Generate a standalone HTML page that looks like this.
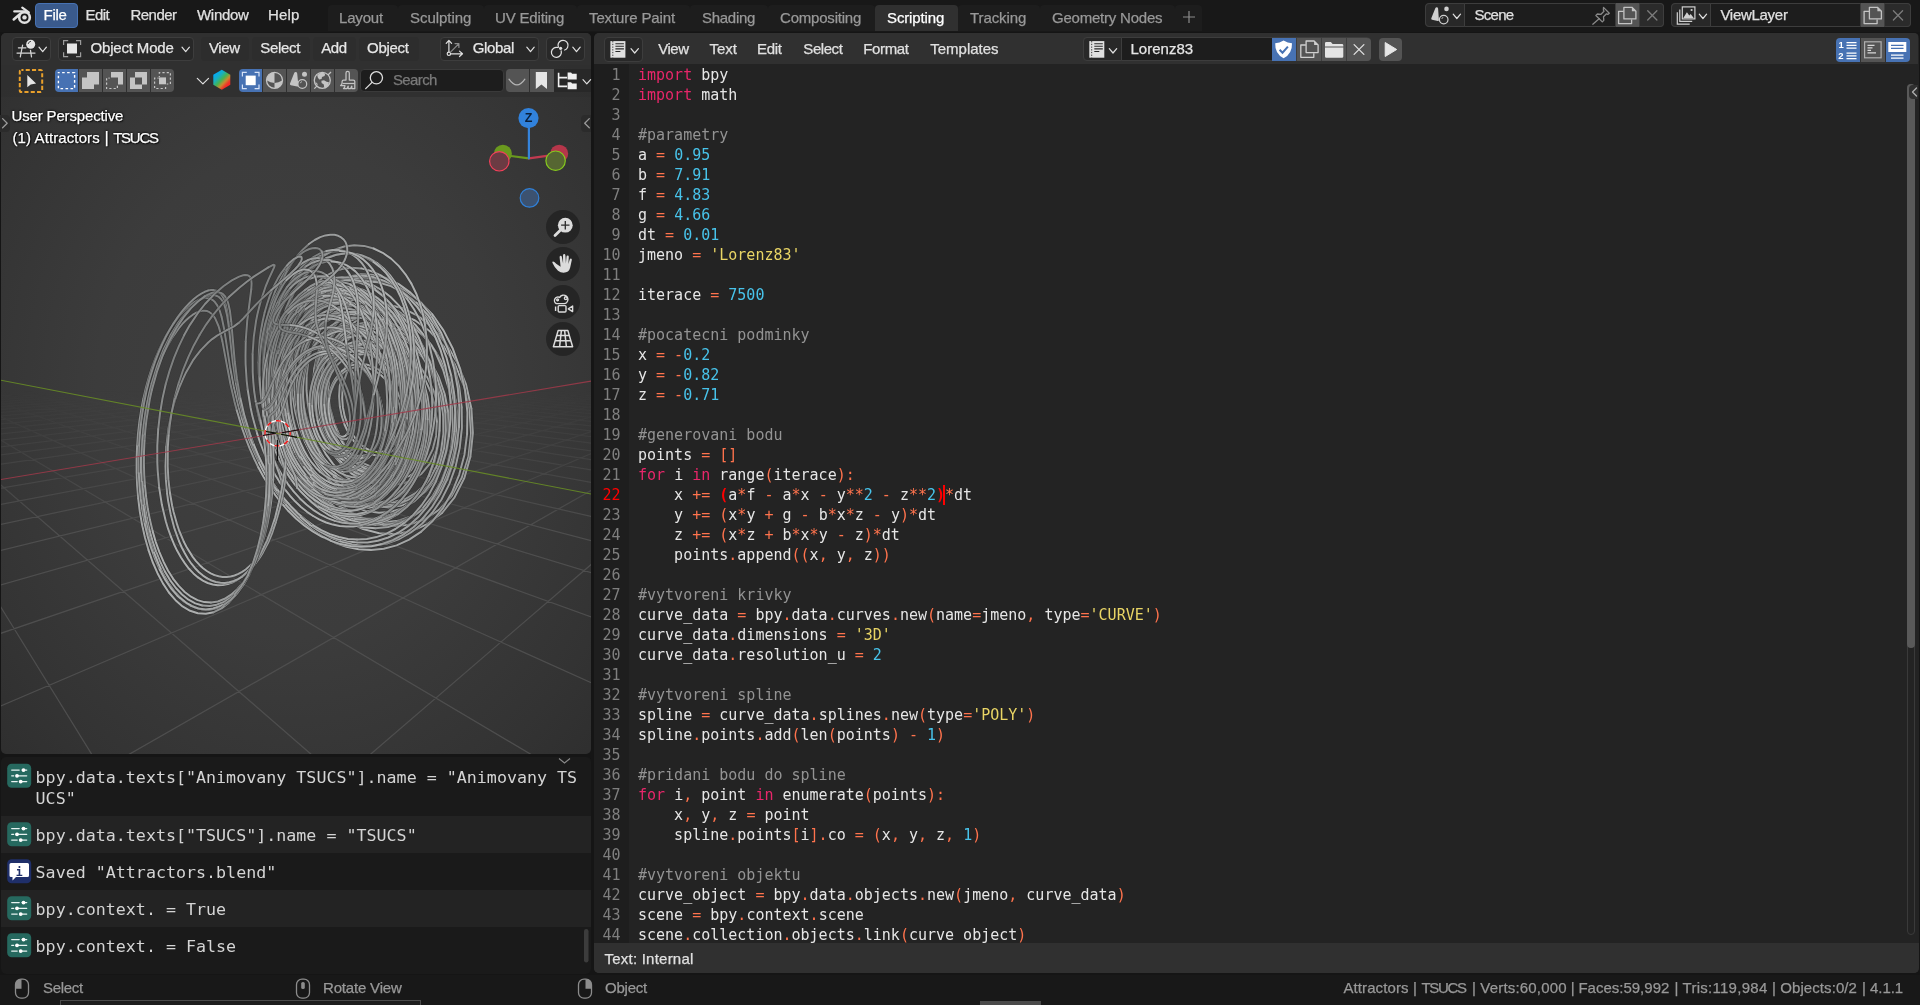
<!DOCTYPE html>
<html><head><meta charset="utf-8"><title>Blender</title>
<style>
html,body{margin:0;padding:0;background:#181818;}
body{width:1920px;height:1005px;overflow:hidden;position:relative;font-family:"Liberation Sans",sans-serif;}
#root{position:absolute;left:0;top:0;width:1920px;height:1005px;overflow:hidden;background:#181818;will-change:transform;}
#root div,#root span.t,#root svg{position:absolute;}
#root div{box-sizing:border-box;}
span.t{white-space:pre;line-height:1;font-family:"Liberation Sans",sans-serif;-webkit-text-stroke:0.25px currentColor;}
span.t.mono,.mono{-webkit-text-stroke:0;font-family:"DejaVu Sans Mono","Liberation Mono",monospace;white-space:pre;line-height:1;}
.k{color:#e8266a}.n{color:#48c3ea}.s{color:#e9d565}.o{color:#ff734d}.c{color:#939393}
.ao{stroke:#2b2b2b;stroke-width:3.1;stroke-opacity:.55}.ai{stroke-width:2;stroke-opacity:1;stroke-linecap:round}.s0{stroke:#7e8080}.s1{stroke:#888a8a}.s2{stroke:#929494}.s3{stroke:#9b9d9d}.s4{stroke:#a4a6a6}.s5{stroke:#adafaf}
.btn{background:#282828;border:1px solid #3d3d3d;border-radius:4px;}
.gb{background:#545454;}
.bb{background:#4772b3;}
</style></head><body><div id="root">
<div style="left:0px;top:31.5px;width:1920px;height:943.5px;background:#151515;"></div>
<div style="left:35px;top:3px;width:43px;height:25px;background:#3a5a8c;border-radius:4px;border:1px solid #4772b3;"></div>
<span class="t" style="left:43.50px;top:7.30px;font-size:15px;letter-spacing:-0.276px;color:#ffffff;">File</span>
<span class="t" style="left:85.50px;top:7.30px;font-size:15px;letter-spacing:-0.560px;color:#e0e0e0;">Edit</span>
<span class="t" style="left:130.50px;top:7.30px;font-size:15px;letter-spacing:-0.540px;color:#e0e0e0;">Render</span>
<span class="t" style="left:197.00px;top:7.30px;font-size:15px;letter-spacing:-0.303px;color:#e0e0e0;">Window</span>
<span class="t" style="left:268.00px;top:7.30px;font-size:15px;letter-spacing:0.164px;color:#e0e0e0;">Help</span>
<div style="left:328px;top:5px;width:70px;height:26px;background:#1d1d1d;border-radius:4px 4px 0 0;"></div>
<span class="t" style="left:339.00px;top:10.30px;font-size:15px;letter-spacing:-0.174px;color:#989898;">Layout</span>
<div style="left:398px;top:5px;width:86px;height:26px;background:#1d1d1d;border-radius:4px 4px 0 0;"></div>
<span class="t" style="left:410.00px;top:10.30px;font-size:15px;letter-spacing:-0.046px;color:#989898;">Sculpting</span>
<div style="left:484px;top:5px;width:93px;height:26px;background:#1d1d1d;border-radius:4px 4px 0 0;"></div>
<span class="t" style="left:495.00px;top:10.30px;font-size:15px;letter-spacing:-0.170px;color:#989898;">UV Editing</span>
<div style="left:577px;top:5px;width:113px;height:26px;background:#1d1d1d;border-radius:4px 4px 0 0;"></div>
<span class="t" style="left:589.00px;top:10.30px;font-size:15px;letter-spacing:-0.115px;color:#989898;">Texture Paint</span>
<div style="left:690px;top:5px;width:78px;height:26px;background:#1d1d1d;border-radius:4px 4px 0 0;"></div>
<span class="t" style="left:702.00px;top:10.30px;font-size:15px;letter-spacing:-0.284px;color:#989898;">Shading</span>
<div style="left:768px;top:5px;width:107px;height:26px;background:#1d1d1d;border-radius:4px 4px 0 0;"></div>
<span class="t" style="left:780.00px;top:10.30px;font-size:15px;letter-spacing:-0.203px;color:#989898;">Compositing</span>
<div style="left:875px;top:5px;width:83px;height:26px;background:#303030;border-radius:4px 4px 0 0;"></div>
<span class="t" style="left:887.00px;top:10.30px;font-size:15px;letter-spacing:-0.127px;color:#ffffff;">Scripting</span>
<div style="left:958px;top:5px;width:82px;height:26px;background:#1d1d1d;border-radius:4px 4px 0 0;"></div>
<span class="t" style="left:970.00px;top:10.30px;font-size:15px;letter-spacing:-0.088px;color:#989898;">Tracking</span>
<div style="left:1040px;top:5px;width:135px;height:26px;background:#1d1d1d;border-radius:4px 4px 0 0;"></div>
<span class="t" style="left:1052.00px;top:10.30px;font-size:15px;letter-spacing:-0.221px;color:#989898;">Geometry Nodes</span>
<div style="left:1175px;top:5px;width:27px;height:26px;background:#1d1d1d;border-radius:4px 4px 0 0;"></div>
<svg style="left:1182px;top:10px" width="14" height="14" viewBox="0 0 14 14"><path d="M7 1v12M1 7h12" stroke="#8c8c8c" stroke-width="1.2" fill="none"/></svg>
<div style="left:1425px;top:3px;width:239px;height:24px;background:#1d1d1d;border-radius:4px;border:1px solid #3d3d3d;"></div>
<div style="left:1425px;top:3px;width:40px;height:24px;background:#282828;border-radius:4px 0 0 4px;border:1px solid #3d3d3d;"></div>
<div style="left:1615px;top:3px;width:25px;height:24px;background:#545454;border-left:1px solid #3d3d3d;border-right:1px solid #3d3d3d;"></div>
<div style="left:1640px;top:3px;width:24px;height:24px;background:#2b2b2b;border-radius:0 4px 4px 0;border:1px solid #3d3d3d;border-left:none;"></div>
<span class="t" style="left:1474.50px;top:7.30px;font-size:15px;letter-spacing:-0.722px;color:#e0e0e0;">Scene</span>
<div style="left:1671px;top:3px;width:240px;height:24px;background:#1d1d1d;border-radius:4px;border:1px solid #3d3d3d;"></div>
<div style="left:1671px;top:3px;width:40px;height:24px;background:#282828;border-radius:4px 0 0 4px;border:1px solid #3d3d3d;"></div>
<div style="left:1860px;top:3px;width:25px;height:24px;background:#545454;border-left:1px solid #3d3d3d;border-right:1px solid #3d3d3d;"></div>
<div style="left:1885px;top:3px;width:26px;height:24px;background:#2b2b2b;border-radius:0 4px 4px 0;border:1px solid #3d3d3d;border-left:none;"></div>
<span class="t" style="left:1720.40px;top:7.30px;font-size:15px;letter-spacing:-0.284px;color:#e0e0e0;">ViewLayer</span>
<svg style="left:0;top:0" width="1920" height="1005" viewBox="0 0 1920 1005"><g stroke="#e2e2e2" fill="none" stroke-linecap="round"><circle cx="24.5" cy="17.4" r="5.3" stroke-width="2.6"/><path d="M14.3 11.4H24" stroke-width="2.3"/><path d="M22.3 7.600L28.8 12.4" stroke-width="2.3"/><path d="M13.7 19.500L19.8 14.2" stroke-width="2.5"/></g><circle cx="24.5" cy="17.4" r="2.2" fill="#e2e2e2"/><path d="M1436.7 7.200q-1 0-1.4 1l-4 10q-.4 1.2.8 1.600l5.6 1.300q1.2 0 1.2-1.200l-.800-11.400q-.2-1.3-1.4-1.300z" fill="#d0d0d0"/><circle cx="1446.5" cy="8.9" r="2.3" fill="#d0d0d0"/><circle cx="1443.7" cy="19.6" r="4.3" fill="#282828" stroke="#d0d0d0" stroke-width="1.2"/><path d="M1441.8 18.800a2.2 2.2 0 0 1 1.5-1.5" stroke="#d0d0d0" stroke-width="0.9" fill="none"/><path d="M1453.20 14.20l3.65 4.30l3.65 -4.30" fill="none" stroke="#e0e0e0" stroke-width="1.2" stroke-linecap="round" stroke-linejoin="round"/><g stroke="#8a8a8a" stroke-width="1.3" fill="none" stroke-linejoin="round" stroke-linecap="round"><path d="M1603.5 7.400l5.8 5.8-1.5 1.2-1.3-.6-3 3 .3 3.6-1.5 1.5-6.4-6.4 1.5-1.5 3.6.3 3-3-.6-1.300z"/><path d="M1599.4 18.600l-6.6 5.6"/></g><g stroke="#c4c4c4" stroke-width="1.3" fill="none" stroke-linejoin="round"><path d="M1623.9 7.3h8l4 4v7.6h-12z"/><path d="M1623.6 11.3h-5v12.3h13v-4"/></g><path d="M1631.9 7.3l4 4h-4z" fill="#c4c4c4"/><path d="M1647.7 10.8l9.2 9.2M1656.9 10.8l-9.2 9.2" stroke="#7c7c7c" stroke-width="1.3" stroke-linecap="round"/><g stroke="#d0d0d0" stroke-width="1.2" fill="none"><rect x="1682.3" y="6.9" width="12.6" height="12"/><path d="M1679.8 9.600v11.800h12.400M1677.3 12.300v11.800h12.4"/></g><path d="M1683.3 17.900l3.6-5.6 2.4 3.2 1.4-1.6 3 4z" fill="#d0d0d0"/><circle cx="1691.6" cy="10" r="1.1" fill="#d0d0d0"/><path d="M1699.30 14.20l3.65 4.30l3.65 -4.30" fill="none" stroke="#e0e0e0" stroke-width="1.2" stroke-linecap="round" stroke-linejoin="round"/><g stroke="#c4c4c4" stroke-width="1.3" fill="none" stroke-linejoin="round"><path d="M1869.4 7.3h8l4 4v7.6h-12z"/><path d="M1869.1 11.3h-5v12.3h13v-4"/></g><path d="M1877.4 7.3l4 4h-4z" fill="#c4c4c4"/><path d="M1893.4 10.8l9.2 9.2M1902.6 10.8l-9.2 9.2" stroke="#7c7c7c" stroke-width="1.3" stroke-linecap="round"/><rect x="15.5" y="979.2" width="13" height="19" rx="5.5" fill="none" stroke="#8c8c8c" stroke-width="1.3"/><path d="M21.5 988.7v-9.500a5.5 5.5 0 0 0-6 5.500v4z" fill="#8c8c8c"/><rect x="296.5" y="979.2" width="13" height="19" rx="5.5" fill="none" stroke="#8c8c8c" stroke-width="1.3"/><rect x="301.2" y="982" width="3.6" height="7" rx="1.6" fill="#8c8c8c"/><rect x="578.5" y="979.2" width="13" height="19" rx="5.5" fill="none" stroke="#8c8c8c" stroke-width="1.3"/><path d="M585.5 988.7v-9.500a5.5 5.5 0 0 1 6 5.500v4z" fill="#8c8c8c"/></svg>
<div id="v3d" style="left:1px;top:33px;width:590px;height:721px;border-radius:5px;overflow:hidden;background:radial-gradient(ellipse 75% 75% at 50% 50%, #404040 0%, #3c3c3c 45%, #333333 80%, #2d2d2d 100%);">
<svg style="left:0;top:0" width="590" height="721" viewBox="1 33 590 721"><defs><linearGradient id="gf" x1="0" y1="0" x2="0" y2="1" gradientUnits="objectBoundingBox"><stop offset="0" stop-color="#fff" stop-opacity="0"/><stop offset="0.12" stop-color="#fff" stop-opacity="0.0"/><stop offset="0.45" stop-color="#fff" stop-opacity="1"/><stop offset="1" stop-color="#fff" stop-opacity="1"/></linearGradient><mask id="gm" maskUnits="userSpaceOnUse" x="0" y="340" width="600" height="420"><rect x="0" y="340" width="600" height="420" fill="url(#gf)"/></mask></defs><g mask="url(#gm)"><path d="M-199.8 382.5L-196.1 378.7M-199.7 427.8L-177.2 378.0M546.0 868.7L799.4 427.7M-118.5 867.5L-158.9 377.4M218.8 884.8L799.6 385.1M151.5 851.1L-141.3 376.9M-25.4 842.6L784.6 379.8M478.8 899.8L-124.3 376.3M-137.2 765.0L765.2 379.1M745.1 881.3L-107.9 375.7M-142.0 682.1L746.5 378.4M767.8 762.2L-92.0 375.2M-145.2 626.4L728.6 377.7M782.3 686.3L-76.7 374.7M-147.6 586.5L711.4 377.1M792.3 633.7L-61.8 374.2M-196.6 566.5L694.8 376.4M799.7 595.1L-47.4 373.7M-192.6 541.0L678.9 375.8M757.6 554.6L-33.5 373.3M-189.4 520.7L663.5 375.2M774.0 516.1L-6.8 372.4M-184.7 490.5L634.4 374.1M780.2 501.7L5.9 371.9M-182.9 478.9L620.6 373.6M785.4 489.5L18.2 371.5M-181.3 469.1L607.3 373.1M789.8 479.1L30.2 371.1M-180.0 460.6L594.4 372.6M793.7 470.0L41.9 370.7M-178.8 453.1L582.0 372.1M797.1 462.1L53.2 370.4M-177.8 446.6L569.9 371.7M775.6 452.3L64.2 370.0M-198.5 442.8L558.2 371.2M779.5 446.4L74.9 369.6M-196.5 437.4L546.9 370.8M783.1 441.1L85.3 369.3M-194.7 432.6L536.0 370.4M786.2 436.4L95.5 369.0M-193.1 428.2L525.4 370.0M789.1 432.0L105.3 368.6M-191.6 424.3L515.1 369.6M791.7 428.1L115.0 368.3M-190.3 420.7L505.1 369.2M794.1 424.5L124.3 368.0M-189.0 417.4L495.4 368.8M796.3 421.2L133.5 367.7M-187.9 414.4L485.9 368.5M798.3 418.2L142.4 367.4M-186.9 411.6L476.8 368.1M784.3 414.2L151.1 367.1M-185.9 409.0L467.9 367.8M786.6 411.6L159.5 366.8M-199.0 407.5L459.2 367.5M788.7 409.3L167.8 366.5M-197.7 405.2L450.8 367.1M790.7 407.1L175.9 366.3M-196.5 403.1L442.6 366.8M792.5 405.0L183.8 366.0M-195.3 401.1L434.6 366.5M794.3 403.1L191.5 365.7M-194.2 399.3L426.8 366.2M795.9 401.3L199.0 365.5M-193.2 397.5L419.3 365.9M797.4 399.6L206.4 365.3M-192.3 395.9L411.9 365.7M798.9 398.0L213.6 365.0M-191.4 394.4L404.7 365.4M788.5 395.9L220.6 364.8M-190.5 392.9L397.7 365.1M790.1 394.5L227.5 364.5M-189.7 391.6L390.8 364.9M791.6 393.1L234.2 364.3M-199.3 390.7L384.2 364.6M793.0 391.9L240.8 364.1M-198.3 389.5L377.6 364.4M794.4 390.7L247.2 363.9M-197.4 388.3L371.3 364.1M795.7 389.6L253.5 363.7M-196.5 387.2L365.0 363.9M796.9 388.5L259.7 363.5M-195.6 386.1L359.0 363.7M798.1 387.4L265.8 363.3M-194.8 385.1L353.0 363.4M799.2 386.5L271.7 363.1M-194.0 384.1L347.2 363.2M791.0 385.1L277.5 362.9M-193.3 383.2L341.6 363.0M792.2 384.2L283.2 362.7M-192.6 382.3L336.0 362.8M793.3 383.4L288.8 362.5M-191.9 381.5L330.6 362.6M794.4 382.6L294.2 362.3M-199.5 381.0L325.3 362.4M795.5 381.8L299.6 362.1M-198.7 380.2L320.1 362.2M796.5 381.1L304.8 362.0M-197.9 379.4L315.0 362.0M797.5 380.3L310.0 361.8M-197.2 378.7L310.0 361.8" stroke="#4e4e4e" stroke-width="1.25" fill="none"/></g><g class="ao" fill="none" stroke-linecap="butt" stroke-linejoin="round"><path d="M298.2 448.5l-7.1-17.8 -5.4-18.2 -3.6-18.5"/><path class="ai s3" d="M298.2 448.5l-7.1-17.8 -5.4-18.2 -3.6-18.5"/><path d="M282.7 438.8l-5.8-17.2 -4.3-17.3 -3-17.2"/><path class="ai s3" d="M282.7 438.8l-5.8-17.2 -4.3-17.3 -3-17.2"/><path d="M282.1 394l-2-18.3 -0.4-17.9 1.2-17.3"/><path class="ai s1" d="M282.1 394l-2-18.3 -0.4-17.9 1.2-17.3"/><path d="M269.6 387.1l-1.6-16.9 -0.4-16.5 0.7-15.9"/><path class="ai s1" d="M269.6 387.1l-1.6-16.9 -0.4-16.5 0.7-15.9"/><path d="M310.2 429.9l-4.8-16.3 -3.1-16.8 -1.3-16.7"/><path class="ai s3" d="M310.2 429.9l-4.8-16.3 -3.1-16.8 -1.3-16.7"/><path d="M294.4 447.4l-6.2-15.8 -4.8-16.2 -3.4-16.3"/><path class="ai s3" d="M294.4 447.4l-6.2-15.8 -4.8-16.2 -3.4-16.3"/><path d="M280 399.1l-2-16.4 -0.8-16 0.6-15.7"/><path class="ai s1" d="M280 399.1l-2-16.4 -0.8-16 0.6-15.7"/><path d="M299.3 414.8l-3.2-16.4 -1.6-16.5 0.1-16.3"/><path class="ai s2" d="M299.3 414.8l-3.2-16.4 -1.6-16.5 0.1-16.3"/><path d="M293.1 446.1l-6-15.6 -4.6-16 -3.3-16.2"/><path class="ai s3" d="M293.1 446.1l-6-15.6 -4.6-16 -3.3-16.2"/><path d="M279.1 416.8l-3.4-15.6 -2.2-15.6 -1-15.3"/><path class="ai s2" d="M279.1 416.8l-3.4-15.6 -2.2-15.6 -1-15.3"/><path d="M279.2 398.3l-2-16.1 -0.6-15.9 0.6-15.5"/><path class="ai s1" d="M279.2 398.3l-2-16.1 -0.6-15.9 0.6-15.5"/><path d="M281.2 430.4l-4.4-15.2 -3.2-15.4 -2.1-15.3"/><path class="ai s3" d="M281.2 430.4l-4.4-15.2 -3.2-15.4 -2.1-15.3"/><path d="M330.6 429.3l-4.8-15.2 -2.9-15.8 -1-15.9"/><path class="ai s3" d="M330.6 429.3l-4.8-15.2 -2.9-15.8 -1-15.9"/><path d="M301 403.4l-1.9-16.1 -0.2-16 1.4-15.5"/><path class="ai s2" d="M301 403.4l-1.9-16.1 -0.2-16 1.4-15.5"/><path d="M292.7 428.2l-4.1-15 -2.9-15.3 -1.5-15.4"/><path class="ai s3" d="M292.7 428.2l-4.1-15 -2.9-15.3 -1.5-15.4"/><path d="M334.3 423.3l-4-14.9 -2.1-15.3 -0.1-15.3"/><path class="ai s3" d="M334.3 423.3l-4-14.9 -2.1-15.3 -0.1-15.3"/><path d="M308.8 486.5l-10.2-15 -8.7-16 -7.2-16.7"/><path class="ai s4" d="M308.8 486.5l-10.2-15 -8.7-16 -7.2-16.7"/><path d="M296.1 403.5l-1.9-15.8 -0.4-15.7 1.1-15.3"/><path class="ai s2" d="M296.1 403.5l-1.9-15.8 -0.4-15.7 1.1-15.3"/><path d="M296.6 461.8l-7-14.4 -5.9-15.1 -4.6-15.5"/><path class="ai s4" d="M296.6 461.8l-7-14.4 -5.9-15.1 -4.6-15.5"/><path d="M316.2 449.5l-6.6-14.7 -5.1-15.4 -3.5-16"/><path class="ai s4" d="M316.2 449.5l-6.6-14.7 -5.1-15.4 -3.5-16"/><path d="M304.9 441.9l-5.5-14.7 -4.1-15.3 -2.7-15.5"/><path class="ai s3" d="M304.9 441.9l-5.5-14.7 -4.1-15.3 -2.7-15.5"/><path d="M301 380.1l0.5-16.5 2.3-15.9 4-15"/><path class="ai s1" d="M301 380.1l0.5-16.5 2.3-15.9 4-15"/><path d="M269.5 415.2l-3-14 -2.1-13.9 -1.2-13.8 -0.4-13.4"/><path class="ai s2" d="M269.5 415.2l-3-14 -2.1-13.9 -1.2-13.8 -0.4-13.4"/><path d="M292.6 396.4l-1.3-15.5 0.2-15.3 1.6-14.9"/><path class="ai s1" d="M292.6 396.4l-1.3-15.5 0.2-15.3 1.6-14.9"/><path d="M310.7 448.9l-6.3-14.5 -4.8-15.3 -3.5-15.6"/><path class="ai s4" d="M310.7 448.9l-6.3-14.5 -4.8-15.3 -3.5-15.6"/><path d="M318.2 460.8l-7.8-14.5 -6.4-15.4 -4.7-16.1"/><path class="ai s4" d="M318.2 460.8l-7.8-14.5 -6.4-15.4 -4.7-16.1"/><path d="M329.8 495.3l-12.1-14.1 -10.6-15.7 -8.9-17"/><path class="ai s5" d="M329.8 495.3l-12.1-14.1 -10.6-15.7 -8.9-17"/><path d="M271.5 384.5l-0.9-15 0.1-14.7 1.1-14.1 2-13.4"/><path class="ai s0" d="M271.5 384.5l-0.9-15 0.1-14.7 1.1-14.1 2-13.4"/><path d="M321.9 382.4l1.2-15.6 3.3-14.9 5.3-13.7"/><path class="ai s1" d="M321.9 382.4l1.2-15.6 3.3-14.9 5.3-13.7"/><path d="M241.7 418.1l-3.1-10.8 -4.9-20.8 -3.6-19.3"/><path class="ai s1" d="M241.7 418.1l-3.1-10.8 -4.9-20.8 -3.6-19.3"/><path d="M301.4 473.3l-7.9-13.6 -6.8-14.4 -5.5-14.9"/><path class="ai s4" d="M301.4 473.3l-7.9-13.6 -6.8-14.4 -5.5-14.9"/><path d="M250.3 435.8l-3.7-11 -3.2-10.9 -2.8-10.8 -4.2-20.6"/><path class="ai s2" d="M250.3 435.8l-3.7-11 -3.2-10.9 -2.8-10.8 -4.2-20.6"/><path d="M291 469.2l-6.8-12.8 -5.9-13.4 -4.9-13.8 -3.9-14"/><path class="ai s4" d="M291 469.2l-6.8-12.8 -5.9-13.4 -4.9-13.8 -3.9-14"/><path d="M280.5 433.7l-3.9-13 -3-13.2 -2.1-13.3 -1.3-13.2"/><path class="ai s3" d="M280.5 433.7l-3.9-13 -3-13.2 -2.1-13.3 -1.3-13.2"/><path d="M259 462.6l-5.2-11.1 -4.6-11.2 -4-11.2 -3.5-11"/><path class="ai s3" d="M259 462.6l-5.2-11.1 -4.6-11.2 -4-11.2 -3.5-11"/><path d="M294.6 365.6l1.7-15.8 3.3-15 4.8-13.9"/><path class="ai s0" d="M294.6 365.6l1.7-15.8 3.3-15 4.8-13.9"/><path d="M334.3 472.8l-9.5-12.9 -8.1-14.5 -6.5-15.5"/><path class="ai s5" d="M334.3 472.8l-9.5-12.9 -8.1-14.5 -6.5-15.5"/><path d="M284.2 382.5l-0.2-15.1 1-14.6 2.3-14.1 3.5-13.3"/><path class="ai s0" d="M284.2 382.5l-0.2-15.1 1-14.6 2.3-14.1 3.5-13.3"/><path d="M272.5 370.3l0.2-15 1.2-14.4 2.2-13.7 3.1-12.9"/><path class="ai s0" d="M272.5 370.3l0.2-15 1.2-14.4 2.2-13.7 3.1-12.9"/><path d="M280.9 340.5l2.7-16.4 4.2-15.4 5.3-14"/><path class="ai s0" d="M280.9 340.5l2.7-16.4 4.2-15.4 5.3-14"/><path d="M270.5 405.6l-1.9-12.9 -1.2-12.8 -0.4-12.6 0.4-12.2"/><path class="ai s1" d="M270.5 405.6l-1.9-12.9 -1.2-12.8 -0.4-12.6 0.4-12.2"/><path d="M318.3 422.1l-3.2-13.3 -1.8-13.7 -0.3-13.7 1.3-13.4"/><path class="ai s3" d="M318.3 422.1l-3.2-13.3 -1.8-13.7 -0.3-13.7 1.3-13.4"/><path d="M312.6 469.8l-7.8-13 -6.7-13.9 -5.4-14.7"/><path class="ai s4" d="M312.6 469.8l-7.8-13 -6.7-13.9 -5.4-14.7"/><path d="M318.8 419l-2.9-13.4 -1.4-13.7 0.1-13.6 1.7-13.3"/><path class="ai s2" d="M318.8 419l-2.9-13.4 -1.4-13.7 0.1-13.6 1.7-13.3"/><path d="M268.2 409.5l-2.2-12.5 -1.4-12.4 -0.8-12.3 0-11.9"/><path class="ai s2" d="M268.2 409.5l-2.2-12.5 -1.4-12.4 -0.8-12.3 0-11.9"/><path d="M288.9 413.1l-2.3-13.4 -1.2-13.4 -0.2-13.4 0.9-13"/><path class="ai s2" d="M288.9 413.1l-2.3-13.4 -1.2-13.4 -0.2-13.4 0.9-13"/><path d="M314.3 430.3l-3.9-13 -2.6-13.4 -1.3-13.7 0.1-13.6"/><path class="ai s3" d="M314.3 430.3l-3.9-13 -2.6-13.4 -1.3-13.7 0.1-13.6"/><path d="M319 487.9l-9.9-12.8 -8.6-14 -7.4-15"/><path class="ai s5" d="M319 487.9l-9.9-12.8 -8.6-14 -7.4-15"/><path d="M321 489.2l-10.2-12.8 -8.9-14 -7.5-15"/><path class="ai s5" d="M321 489.2l-10.2-12.8 -8.9-14 -7.5-15"/><path d="M319.4 401.2l-0.9-13.8 0.8-13.6 2.3-13.1 4.1-12.3"/><path class="ai s2" d="M319.4 401.2l-0.9-13.8 0.8-13.6 2.3-13.1 4.1-12.3"/><path d="M286.8 455.8l-5.3-12.1 -4.5-12.5 -3.7-12.7 -2.8-12.9"/><path class="ai s4" d="M286.8 455.8l-5.3-12.1 -4.5-12.5 -3.7-12.7 -2.8-12.9"/><path d="M263.2 408.5l-2.1-11.9 -1.4-11.7 -0.9-11.6 -0.2-11.3"/><path class="ai s2" d="M263.2 408.5l-2.1-11.9 -1.4-11.7 -0.9-11.6 -0.2-11.3"/><path d="M328.1 377.8l2.1-14.8 4.3-13.9 6.4-12.4 8.4-10.5"/><path class="ai s1" d="M328.1 377.8l2.1-14.8 4.3-13.9 6.4-12.4 8.4-10.5"/><path d="M355.1 467l-9.6-10.8 -8.2-12.7 -6.7-14.2"/><path class="ai s5" d="M355.1 467l-9.6-10.8 -8.2-12.7 -6.7-14.2"/><path d="M250 437.6l-3.4-10 -2.9-10 -4.9-19.5 -3.5-18.5"/><path class="ai s2" d="M250 437.6l-3.4-10 -2.9-10 -4.9-19.5 -3.5-18.5"/><path d="M333.3 446.1l-5.9-11.6 -4.6-12.6 -3.2-13.3 -1.7-13.6"/><path class="ai s4" d="M333.3 446.1l-5.9-11.6 -4.6-12.6 -3.2-13.3 -1.7-13.6"/><path d="M283.7 415l-2.3-12.6 -1.4-12.7 -0.5-12.6 0.4-12.4"/><path class="ai s2" d="M283.7 415l-2.3-12.6 -1.4-12.7 -0.5-12.6 0.4-12.4"/><path d="M284.7 458.1l-5.3-11.7 -4.5-12 -3.7-12.4 -3-12.5"/><path class="ai s4" d="M284.7 458.1l-5.3-11.7 -4.5-12 -3.7-12.4 -3-12.5"/><path d="M317.9 395l-0.2-13.7 1.4-13.3 3.1-12.8 4.7-11.8"/><path class="ai s1" d="M317.9 395l-0.2-13.7 1.4-13.3 3.1-12.8 4.7-11.8"/><path d="M285.5 412.5l-2.1-12.6 -1.1-12.7 -0.2-12.5 0.7-12.3"/><path class="ai s2" d="M285.5 412.5l-2.1-12.6 -1.1-12.7 -0.2-12.5 0.7-12.3"/><path d="M337.6 451.2l-6.5-11.1 -5.3-12.3 -3.9-13 -2.5-13.6"/><path class="ai s4" d="M337.6 451.2l-6.5-11.1 -5.3-12.3 -3.9-13 -2.5-13.6"/><path d="M270.2 381l-0.4-12.9 0.5-12.6 1.2-12.2 2-11.6"/><path class="ai s0" d="M270.2 381l-0.4-12.9 0.5-12.6 1.2-12.2 2-11.6"/><path d="M278.2 454.9l-4.8-11.2 -4-11.6 -3.5-11.8 -2.7-11.8"/><path class="ai s4" d="M278.2 454.9l-4.8-11.2 -4-11.6 -3.5-11.8 -2.7-11.8"/><path d="M270.6 479.2l-5.9-10.6 -5.4-10.8 -4.8-11 -4.2-11"/><path class="ai s4" d="M270.6 479.2l-5.9-10.6 -5.4-10.8 -4.8-11 -4.2-11"/><path d="M236.8 410.5l-2.4-9.1 -4-17.4 -8.1-43.1"/><path class="ai s0" d="M236.8 410.5l-2.4-9.1 -4-17.4 -8.1-43.1"/><path d="M366.6 469.3l-10.1-8.6 -8.9-10.9 -7.4-12.6 -5.9-13.9"/><path class="ai s5" d="M366.6 469.3l-10.1-8.6 -8.9-10.9 -7.4-12.6 -5.9-13.9"/><path d="M253.9 444.8l-3.5-9.6 -5.9-19.3 -4.4-18.9"/><path class="ai s3" d="M253.9 444.8l-3.5-9.6 -5.9-19.3 -4.4-18.9"/><path d="M277.8 351l1.8-15 3-14.1 4-13.2 5.1-12"/><path class="ai s0" d="M277.8 351l1.8-15 3-14.1 4-13.2 5.1-12"/><path d="M258.5 467.7l-4.6-9.5 -4.2-9.6 -3.8-9.6 -3.4-9.6 -5.7-18.9"/><path class="ai s3" d="M258.5 467.7l-4.6-9.5 -4.2-9.6 -3.8-9.6 -3.4-9.6 -5.7-18.9"/><path d="M305.3 439l-4.2-11.7 -3.2-12.2 -2.2-12.5 -1.1-12.7"/><path class="ai s3" d="M305.3 439l-4.2-11.7 -3.2-12.2 -2.2-12.5 -1.1-12.7"/><path d="M328.3 420.9l-2.8-11.6 -1.4-12 -0.1-12 1.4-11.8"/><path class="ai s3" d="M328.3 420.9l-2.8-11.6 -1.4-12 -0.1-12 1.4-11.8"/><path d="M308.3 462.5l-6.3-11.4 -5.3-12.1 -4.4-12.8 -3.4-13.1"/><path class="ai s4" d="M308.3 462.5l-6.3-11.4 -5.3-12.1 -4.4-12.8 -3.4-13.1"/><path d="M236.4 382.5l-3-19.2 -4.4-39.4"/><path class="ai s0" d="M236.4 382.5l-3-19.2 -4.4-39.4"/><path d="M277.2 350.8l1.7-14.8 3-13.9 3.9-13.1 5-11.9"/><path class="ai s0" d="M277.2 350.8l1.7-14.8 3-13.9 3.9-13.1 5-11.9"/><path d="M262.8 360.1l0.4-12.9 1.2-12.4 1.7-11.8 2.4-11"/><path class="ai s0" d="M262.8 360.1l0.4-12.9 1.2-12.4 1.7-11.8 2.4-11"/><path d="M268.3 337.8l1.9-15 2.8-14.1 3.6-13 4.4-11.8"/><path class="ai s0" d="M268.3 337.8l1.9-15 2.8-14.1 3.6-13 4.4-11.8"/><path d="M329.1 480.1l-9.3-11.4 -8.1-12.9 -6.8-13.9"/><path class="ai s5" d="M329.1 480.1l-9.3-11.4 -8.1-12.9 -6.8-13.9"/><path d="M333.3 423.2l-3-11.1 -1.7-11.6 -0.4-11.8 1.2-11.6"/><path class="ai s3" d="M333.3 423.2l-3-11.1 -1.7-11.6 -0.4-11.8 1.2-11.6"/><path d="M304.7 430.5l-3.4-11.6 -2.4-12 -1.3-12.2 -0.3-12.3"/><path class="ai s3" d="M304.7 430.5l-3.4-11.6 -2.4-12 -1.3-12.2 -0.3-12.3"/><path d="M288.7 425.1l-2.7-11.6 -2-11.7 -1.1-11.8 -0.2-11.8"/><path class="ai s3" d="M288.7 425.1l-2.7-11.6 -2-11.7 -1.1-11.8 -0.2-11.8"/><path d="M319.6 424.3l-2.9-11.4 -1.8-11.9 -0.5-12 0.7-11.9"/><path class="ai s3" d="M319.6 424.3l-2.9-11.4 -1.8-11.9 -0.5-12 0.7-11.9"/><path d="M306.5 430.6l-3.3-11.4 -2.4-11.8 -1.3-12 -0.3-12"/><path class="ai s3" d="M306.5 430.6l-3.3-11.4 -2.4-11.8 -1.3-12 -0.3-12"/><path d="M294.6 389.9l0-12.6 1-12.3 2.2-12 3.3-11.3"/><path class="ai s1" d="M294.6 389.9l0-12.6 1-12.3 2.2-12 3.3-11.3"/><path d="M301.7 461.9l-5.8-10.9 -4.9-11.5 -4.1-12 -3.2-12.5"/><path class="ai s4" d="M301.7 461.9l-5.8-10.9 -4.9-11.5 -4.1-12 -3.2-12.5"/><path d="M303.1 411.1l-1.6-11.8 -0.5-11.9 0.5-11.9 1.6-11.5"/><path class="ai s2" d="M303.1 411.1l-1.6-11.8 -0.5-11.9 0.5-11.9 1.6-11.5"/><path d="M294.9 356.7l2.7-14.7 4-13.7 5.5-12.6 6.9-11.3"/><path class="ai s0" d="M294.9 356.7l2.7-14.7 4-13.7 5.5-12.6 6.9-11.3"/><path d="M302.7 459.3l-5.5-10.9 -4.8-11.5 -3.9-12 -3-12.4"/><path class="ai s4" d="M302.7 459.3l-5.5-10.9 -4.8-11.5 -3.9-12 -3-12.4"/><path d="M300.3 355.8l3-14.9 4.7-13.8 6.2-12.6 7.7-10.9"/><path class="ai s0" d="M300.3 355.8l3-14.9 4.7-13.8 6.2-12.6 7.7-10.9"/><path d="M287.3 427.3l-2.8-10.9 -2-11.3 -1.2-11.3 -0.5-11.3"/><path class="ai s3" d="M287.3 427.3l-2.8-10.9 -2-11.3 -1.2-11.3 -0.5-11.3"/><path d="M306.6 376.6l1.5-13.2 3-12.7 4.4-11.8 5.7-10.6"/><path class="ai s1" d="M306.6 376.6l1.5-13.2 3-12.7 4.4-11.8 5.7-10.6"/><path d="M304.8 480.8l-7.3-10.8 -6.6-11.5 -5.6-12.2 -4.8-12.6"/><path class="ai s5" d="M304.8 480.8l-7.3-10.8 -6.6-11.5 -5.6-12.2 -4.8-12.6"/><path d="M281.5 425.8l-2.5-10.8 -1.9-10.9 -1.3-11.1 -0.5-11 0.1-10.9"/><path class="ai s2" d="M281.5 425.8l-2.5-10.8 -1.9-10.9 -1.3-11.1 -0.5-11 0.1-10.9"/><path d="M342.9 464.1l-7.7-9.5 -6.6-10.8 -5.6-12 -4.2-12.8"/><path class="ai s5" d="M342.9 464.1l-7.7-9.5 -6.6-10.8 -5.6-12 -4.2-12.8"/><path d="M325 499.1l-10.6-11.1 -9.4-12.5 -8.4-13.7"/><path class="ai s5" d="M325 499.1l-10.6-11.1 -9.4-12.5 -8.4-13.7"/><path d="M255.7 401.4l-1.5-9.9 -0.9-9.7 -0.6-9.6 -0.1-18.4"/><path class="ai s1" d="M255.7 401.4l-1.5-9.9 -0.9-9.7 -0.6-9.6 -0.1-18.4"/><path d="M235.3 379.6l-2.5-17.3 -4-35.5"/><path class="ai s0" d="M235.3 379.6l-2.5-17.3 -4-35.5"/><path d="M270.9 429.7l-2.6-10 -2.1-10.1 -1.6-10.2 -1.1-10.2 -0.6-10.1"/><path class="ai s3" d="M270.9 429.7l-2.6-10 -2.1-10.1 -1.6-10.2 -1.1-10.2 -0.6-10.1"/><path d="M240.1 397l-3.1-18.1 -2.2-16.9 -3.6-40.9"/><path class="ai s0" d="M240.1 397l-3.1-18.1 -2.2-16.9 -3.6-40.9"/><path d="M331 438.5l-4.3-9.9 -3.3-10.6 -2.2-11.1 -1.1-11.4 0.2-11.5"/><path class="ai s4" d="M331 438.5l-4.3-9.9 -3.3-10.6 -2.2-11.1 -1.1-11.4 0.2-11.5"/><path d="M343.3 466.4l-7.8-9.2 -6.9-10.6 -5.8-11.8 -4.5-12.7"/><path class="ai s5" d="M343.3 466.4l-7.8-9.2 -6.9-10.6 -5.8-11.8 -4.5-12.7"/><path d="M281.2 433.8l-3-10.3 -2.3-10.6 -1.8-10.6 -1.1-10.8 -0.4-10.7"/><path class="ai s3" d="M281.2 433.8l-3-10.3 -2.3-10.6 -1.8-10.6 -1.1-10.8 -0.4-10.7"/><path d="M287 434.7l-3.1-10.4 -2.4-10.7 -1.8-11 -1.1-11 -0.3-10.9"/><path class="ai s3" d="M287 434.7l-3.1-10.4 -2.4-10.7 -1.8-11 -1.1-11 -0.3-10.9"/><path d="M269.3 450l-3.6-9.4 -3.2-9.7 -2.7-9.8 -2.3-9.8 -1.8-9.9"/><path class="ai s3" d="M269.3 450l-3.6-9.4 -3.2-9.7 -2.7-9.8 -2.3-9.8 -1.8-9.9"/><path d="M266.5 425.1l-2.3-9.7 -1.8-9.8 -1.4-9.8 -0.9-9.8 -0.5-9.6"/><path class="ai s2" d="M266.5 425.1l-2.3-9.7 -1.8-9.8 -1.4-9.8 -0.9-9.8 -0.5-9.6"/><path d="M273.9 486.1l-5.7-9.2 -5.3-9.6 -4.7-9.8 -4.3-9.9 -3.9-10"/><path class="ai s4" d="M273.9 486.1l-5.7-9.2 -5.3-9.6 -4.7-9.8 -4.3-9.9 -3.9-10"/><path d="M230.1 367.2l-6.1-39 -2.4-11.3"/><path class="ai s0" d="M230.1 367.2l-6.1-39 -2.4-11.3"/><path d="M293.1 350.7l3.1-14.1 4.3-13.1 5.7-12.1 6.9-10.6"/><path class="ai s0" d="M293.1 350.7l3.1-14.1 4.3-13.1 5.7-12.1 6.9-10.6"/><path d="M257.2 433.8l-4.8-17.7 -1.9-8.9 -2.8-17.6"/><path class="ai s3" d="M257.2 433.8l-4.8-17.7 -1.9-8.9 -2.8-17.6"/><path d="M297.3 382.4l0.7-12.1 1.9-11.7 3-11.2 4-10.5"/><path class="ai s1" d="M297.3 382.4l0.7-12.1 1.9-11.7 3-11.2 4-10.5"/><path d="M286 504.8l-7.8-10 -7-10.4 -6.5-10.7 -5.7-11.1"/><path class="ai s5" d="M286 504.8l-7.8-10 -7-10.4 -6.5-10.7 -5.7-11.1"/><path d="M344.7 425l-3-9.1 -1.9-9.7 -0.7-9.9 0.6-10 2-9.6"/><path class="ai s3" d="M344.7 425l-3-9.1 -1.9-9.7 -0.7-9.9 0.6-10 2-9.6"/><path d="M271 417.6l-1.9-10 -1.4-10 -0.8-10.1 -0.4-10 0.2-9.9"/><path class="ai s2" d="M271 417.6l-1.9-10 -1.4-10 -0.8-10.1 -0.4-10 0.2-9.9"/><path d="M332 444.8l-4.8-9.3 -4-10.2 -2.9-10.8 -1.9-11.2 -0.6-11.5"/><path class="ai s4" d="M332 444.8l-4.8-9.3 -4-10.2 -2.9-10.8 -1.9-11.2 -0.6-11.5"/><path d="M314.3 368l2.8-12.9 4.4-12 5.9-10.8 7.4-9.3"/><path class="ai s1" d="M314.3 368l2.8-12.9 4.4-12 5.9-10.8 7.4-9.3"/><path d="M279.1 402.3l-1-10.8 -0.4-10.9 0.4-10.6 1-10.5 1.8-10.1"/><path class="ai s1" d="M279.1 402.3l-1-10.8 -0.4-10.9 0.4-10.6 1-10.5 1.8-10.1"/><path d="M324.2 399.2l-0.2-11.3 1.2-11.2 2.5-10.7 3.9-10 5.3-9"/><path class="ai s1" d="M324.2 399.2l-0.2-11.3 1.2-11.2 2.5-10.7 3.9-10 5.3-9"/><path d="M299.2 383.4l0.8-11.9 1.8-11.6 3-11 4.1-10.3"/><path class="ai s1" d="M299.2 383.4l0.8-11.9 1.8-11.6 3-11 4.1-10.3"/><path d="M348.5 494l-11.1-8.7 -10-10.6 -9-12.3 -7.7-13.5"/><path class="ai s5" d="M348.5 494l-11.1-8.7 -10-10.6 -9-12.3 -7.7-13.5"/><path d="M355.6 493.5l-11.4-8.1 -10.6-10.3 -9.3-12.1 -8.1-13.5"/><path class="ai s5" d="M355.6 493.5l-11.4-8.1 -10.6-10.3 -9.3-12.1 -8.1-13.5"/><path d="M283.1 433.7l-2.8-9.7 -2.2-10.1 -1.6-10.2 -1.1-10.3 -0.4-10.4"/><path class="ai s3" d="M283.1 433.7l-2.8-9.7 -2.2-10.1 -1.6-10.2 -1.1-10.3 -0.4-10.4"/><path d="M279.9 364.7l1.3-12 2.2-11.5 3-11 3.8-10.1"/><path class="ai s0" d="M279.9 364.7l1.3-12 2.2-11.5 3-11 3.8-10.1"/><path d="M319 453.8l-5.2-9.7 -4.5-10.4 -3.5-11.1 -2.7-11.5"/><path class="ai s4" d="M319 453.8l-5.2-9.7 -4.5-10.4 -3.5-11.1 -2.7-11.5"/><path d="M342 449.2l-5.5-8.3 -4.7-9.4 -3.6-10.2 -2.6-10.9 -1.4-11.2"/><path class="ai s4" d="M342 449.2l-5.5-8.3 -4.7-9.4 -3.6-10.2 -2.6-10.9 -1.4-11.2"/><path d="M286.1 359.9l2-12.5 3-12 3.9-11.1 4.9-10.2"/><path class="ai s0" d="M286.1 359.9l2-12.5 3-12 3.9-11.1 4.9-10.2"/><path d="M316.3 365l3.3-12.7 4.8-11.6 6.4-10.4 7.9-8.7"/><path class="ai s0" d="M316.3 365l3.3-12.7 4.8-11.6 6.4-10.4 7.9-8.7"/><path d="M341.1 472.6l-8.1-8.7 -7.3-10.1 -6.2-11.3 -5.2-12.2"/><path class="ai s5" d="M341.1 472.6l-8.1-8.7 -7.3-10.1 -6.2-11.3 -5.2-12.2"/><path d="M270.1 427.8l-2.3-9.2 -1.8-9.4 -1.4-9.5 -0.9-9.5 -0.5-9.5"/><path class="ai s3" d="M270.1 427.8l-2.3-9.2 -1.8-9.4 -1.4-9.5 -0.9-9.5 -0.5-9.5"/><path d="M290.7 445.8l-3.6-9.6 -3.1-9.9 -2.4-10.3 -1.9-10.5 -1.1-10.6"/><path class="ai s4" d="M290.7 445.8l-3.6-9.6 -3.1-9.9 -2.4-10.3 -1.9-10.5 -1.1-10.6"/><path d="M263.8 360.4l0.6-11.6 1.3-11.1 1.8-10.6 2.3-9.9 2.8-9.3"/><path class="ai s0" d="M263.8 360.4l0.6-11.6 1.3-11.1 1.8-10.6 2.3-9.9 2.8-9.3"/><path d="M258.6 362l0.3-11 0.8-10.5 1.3-10 1.7-9.5 2-8.8"/><path class="ai s0" d="M258.6 362l0.3-11 0.8-10.5 1.3-10 1.7-9.5 2-8.8"/><path d="M294 453.4l-4.2-9.5 -3.6-9.9 -3.1-10.3 -2.3-10.6 -1.7-10.8"/><path class="ai s4" d="M294 453.4l-4.2-9.5 -3.6-9.9 -3.1-10.3 -2.3-10.6 -1.7-10.8"/><path d="M317.8 391.8l0.5-11.4 1.9-11 3.1-10.6 4.4-9.7 5.7-8.6"/><path class="ai s1" d="M317.8 391.8l0.5-11.4 1.9-11 3.1-10.6 4.4-9.7 5.7-8.6"/><path d="M276.8 424.3l-2.1-9.5 -1.6-9.7 -1-9.8 -0.6-9.8 0-9.7"/><path class="ai s3" d="M276.8 424.3l-2.1-9.5 -1.6-9.7 -1-9.8 -0.6-9.8 0-9.7"/><path d="M278.6 394.9l-0.5-10.6 0.2-10.5 0.8-10.4 1.5-10 2.2-9.6"/><path class="ai s1" d="M278.6 394.9l-0.5-10.6 0.2-10.5 0.8-10.4 1.5-10 2.2-9.6"/><path d="M247.7 389.6l-1-8.6 -1.1-16.7 -0.1-8 0.2-15.1"/><path class="ai s1" d="M247.7 389.6l-1-8.6 -1.1-16.7 -0.1-8 0.2-15.1"/><path d="M351.4 432.5l-3.8-7.6 -2.9-8.5 -1.8-9 -0.7-9.3 0.4-9.3"/><path class="ai s4" d="M351.4 432.5l-3.8-7.6 -2.9-8.5 -1.8-9 -0.7-9.3 0.4-9.3"/><path d="M282.8 362.4l1.6-11.9 2.5-11.4 3.4-10.7 4.3-9.9"/><path class="ai s0" d="M282.8 362.4l1.6-11.9 2.5-11.4 3.4-10.7 4.3-9.9"/><path d="M282.7 378.2l0.6-11.6 1.4-11.3 2.3-10.8 3.1-10.3 3.8-9.6"/><path class="ai s0" d="M282.7 378.2l0.6-11.6 1.4-11.3 2.3-10.8 3.1-10.3 3.8-9.6"/><path d="M280.2 420.3l-1.9-9.6 -1.3-9.8 -0.8-9.9 -0.1-9.8 0.4-9.8"/><path class="ai s2" d="M280.2 420.3l-1.9-9.6 -1.3-9.8 -0.8-9.9 -0.1-9.8 0.4-9.8"/><path d="M279.5 415.5l-1.6-9.7 -1.1-9.9 -0.4-9.9 0.1-9.8 0.7-9.7"/><path class="ai s2" d="M279.5 415.5l-1.6-9.7 -1.1-9.9 -0.4-9.9 0.1-9.8 0.7-9.7"/><path d="M280.8 382.5l0.3-11.2 1-11 1.8-10.6 2.6-10.1 3.3-9.5"/><path class="ai s1" d="M280.8 382.5l0.3-11.2 1-11 1.8-10.6 2.6-10.1 3.3-9.5"/><path d="M277.9 408.2l-1.2-9.9 -0.6-9.9 0-9.9 0.5-9.8 1.1-9.6"/><path class="ai s2" d="M277.9 408.2l-1.2-9.9 -0.6-9.9 0-9.9 0.5-9.8 1.1-9.6"/><path d="M279.9 416.7l-1.6-9.7 -1.1-9.9 -0.5-9.8 0-9.8 0.7-9.7"/><path class="ai s2" d="M279.9 416.7l-1.6-9.7 -1.1-9.9 -0.5-9.8 0-9.8 0.7-9.7"/><path d="M271.5 400.3l-0.9-9.8 -0.3-9.8 0.2-9.7 0.7-9.5 1.3-9.3"/><path class="ai s1" d="M271.5 400.3l-0.9-9.8 -0.3-9.8 0.2-9.7 0.7-9.5 1.3-9.3"/><path d="M273.1 400.7l-0.9-9.9 -0.3-9.9 0.3-9.8 0.8-9.5 1.3-9.4"/><path class="ai s1" d="M273.1 400.7l-0.9-9.9 -0.3-9.9 0.3-9.8 0.8-9.5 1.3-9.4"/><path d="M347.8 521.8l-14.3-9.8 -13-11.9 -11.7-13.6"/><path class="ai s5" d="M347.8 521.8l-14.3-9.8 -13-11.9 -11.7-13.6"/><path d="M280.8 421.3l-1.9-9.5 -1.3-9.7 -0.8-9.8 -0.2-9.8 0.3-9.7"/><path class="ai s2" d="M280.8 421.3l-1.9-9.5 -1.3-9.7 -0.8-9.8 -0.2-9.8 0.3-9.7"/><path d="M285.8 415.8l-1.6-9.8 -0.9-10 -0.3-10 0.3-10 1-9.8"/><path class="ai s2" d="M285.8 415.8l-1.6-9.8 -0.9-10 -0.3-10 0.3-10 1-9.8"/><path d="M276.3 401.9l-0.8-9.9 -0.3-10 0.3-9.8 0.9-9.6 1.5-9.4"/><path class="ai s1" d="M276.3 401.9l-0.8-9.9 -0.3-10 0.3-9.8 0.9-9.6 1.5-9.4"/><path d="M267.4 355.1l1.1-11.8 1.8-11.3 2.4-10.6 3-10 3.4-9.1"/><path class="ai s0" d="M267.4 355.1l1.1-11.8 1.8-11.3 2.4-10.6 3-10 3.4-9.1"/><path d="M278.6 411l-1.3-9.7 -0.7-9.7 -0.2-9.8 0.4-9.6 1-9.5"/><path class="ai s2" d="M278.6 411l-1.3-9.7 -0.7-9.7 -0.2-9.8 0.4-9.6 1-9.5"/><path d="M331.9 507l-11.2-9.8 -10.2-11.3 -9.1-12.6"/><path class="ai s5" d="M331.9 507l-11.2-9.8 -10.2-11.3 -9.1-12.6"/><path d="M272.6 380.8l0.1-10.5 0.8-10.4 1.4-10 2-9.6 2.5-9.2"/><path class="ai s0" d="M272.6 380.8l0.1-10.5 0.8-10.4 1.4-10 2-9.6 2.5-9.2"/><path d="M278 490.4l-5.7-8.5 -5.2-8.9 -4.8-9.2 -4.4-9.4 -4-9.6"/><path class="ai s5" d="M278 490.4l-5.7-8.5 -5.2-8.9 -4.8-9.2 -4.4-9.4 -4-9.6"/><path d="M262.9 379.1l-0.1-9.9 0.4-9.7 0.9-9.5 1.3-9 1.7-8.7"/><path class="ai s0" d="M262.9 379.1l-0.1-9.9 0.4-9.7 0.9-9.5 1.3-9 1.7-8.7"/><path d="M277 397.8l-0.6-10.1 0-9.9 0.6-9.9 1.2-9.6 1.7-9.3"/><path class="ai s1" d="M277 397.8l-0.6-10.1 0-9.9 0.6-9.9 1.2-9.6 1.7-9.3"/><path d="M278.3 380.7l0.4-10.9 1-10.5 1.8-10.3 2.4-9.8 3.2-9.2"/><path class="ai s1" d="M278.3 380.7l0.4-10.9 1-10.5 1.8-10.3 2.4-9.8 3.2-9.2"/><path d="M283.4 447.4l-3.4-8.9 -2.9-9.2 -2.4-9.5 -1.9-9.7 -1.3-9.8"/><path class="ai s4" d="M283.4 447.4l-3.4-8.9 -2.9-9.2 -2.4-9.5 -1.9-9.7 -1.3-9.8"/><path d="M320.3 384l1.5-11.2 2.9-10.7 4.1-9.9 5.5-8.9 6.7-7.5"/><path class="ai s1" d="M320.3 384l1.5-11.2 2.9-10.7 4.1-9.9 5.5-8.9 6.7-7.5"/><path d="M287.9 442.1l-3.2-9 -2.6-9.4 -2.1-9.6 -1.5-9.8 -0.9-10"/><path class="ai s3" d="M287.9 442.1l-3.2-9 -2.6-9.4 -2.1-9.6 -1.5-9.8 -0.9-10"/><path d="M307.8 426l-2.3-9.5 -1.6-9.7 -0.8-10 0-10.1 0.9-9.9"/><path class="ai s3" d="M307.8 426l-2.3-9.5 -1.6-9.7 -0.8-10 0-10.1 0.9-9.9"/><path d="M288.4 445.6l-3.3-9 -2.9-9.3 -2.3-9.7 -1.8-9.8 -1.1-10"/><path class="ai s4" d="M288.4 445.6l-3.3-9 -2.9-9.3 -2.3-9.7 -1.8-9.8 -1.1-10"/><path d="M285.2 447.9l-3.4-8.9 -3-9.2 -2.4-9.5 -2-9.7 -1.3-9.9"/><path class="ai s4" d="M285.2 447.9l-3.4-8.9 -3-9.2 -2.4-9.5 -2-9.7 -1.3-9.9"/><path d="M277.9 400.7l-0.7-9.8 -0.1-9.7 0.4-9.7 1.1-9.5 1.6-9.2"/><path class="ai s1" d="M277.9 400.7l-0.7-9.8 -0.1-9.7 0.4-9.7 1.1-9.5 1.6-9.2"/><path d="M276.5 398.1l-0.6-9.8 0-9.8 0.6-9.6 1.1-9.4 1.7-9.2"/><path class="ai s1" d="M276.5 398.1l-0.6-9.8 0-9.8 0.6-9.6 1.1-9.4 1.7-9.2"/><path d="M362.2 501.8l-12.5-7.1 -11.7-9.4 -10.5-11.4 -9.3-13.1"/><path class="ai s5" d="M362.2 501.8l-12.5-7.1 -11.7-9.4 -10.5-11.4 -9.3-13.1"/><path d="M277.6 394.3l-0.4-9.9 0.3-9.9 0.8-9.7 1.5-9.5 2-9.1"/><path class="ai s1" d="M277.6 394.3l-0.4-9.9 0.3-9.9 0.8-9.7 1.5-9.5 2-9.1"/><path d="M286.6 432.7l-2.5-9.1 -2-9.3 -1.4-9.6 -0.9-9.6 -0.3-9.7"/><path class="ai s3" d="M286.6 432.7l-2.5-9.1 -2-9.3 -1.4-9.6 -0.9-9.6 -0.3-9.7"/><path d="M277.9 404.7l-0.9-9.5 -0.3-9.6 0.2-9.4 0.8-9.4 1.3-9.1"/><path class="ai s2" d="M277.9 404.7l-0.9-9.5 -0.3-9.6 0.2-9.4 0.8-9.4 1.3-9.1"/><path d="M315.1 377.1l2-11.5 3.3-10.9 4.6-10.1 6-8.9 7.2-7.5"/><path class="ai s1" d="M315.1 377.1l2-11.5 3.3-10.9 4.6-10.1 6-8.9 7.2-7.5"/><path d="M275 383l0.2-10.2 0.8-10 1.4-9.7 2-9.4 2.6-8.9"/><path class="ai s1" d="M275 383l0.2-10.2 0.8-10 1.4-9.7 2-9.4 2.6-8.9"/><path d="M288.7 448.9l-3.5-8.8 -3-9.1 -2.5-9.5 -2-9.7 -1.4-9.9"/><path class="ai s4" d="M288.7 448.9l-3.5-8.8 -3-9.1 -2.5-9.5 -2-9.7 -1.4-9.9"/><path d="M329.4 377.1l2.6-11.1 4.1-10.3 5.6-9.2 7.1-7.6 8.4-5.8"/><path class="ai s1" d="M329.4 377.1l2.6-11.1 4.1-10.3 5.6-9.2 7.1-7.6 8.4-5.8"/><path d="M313.6 475l-6.3-8.5 -5.7-9.4 -5-10.1 -4.3-10.7 -3.6-11.2"/><path class="ai s5" d="M313.6 475l-6.3-8.5 -5.7-9.4 -5-10.1 -4.3-10.7 -3.6-11.2"/><path d="M287.5 444.7l-3.2-8.7 -2.8-9.2 -2.2-9.4 -1.7-9.6 -1.1-9.7"/><path class="ai s4" d="M287.5 444.7l-3.2-8.7 -2.8-9.2 -2.2-9.4 -1.7-9.6 -1.1-9.7"/><path d="M289.1 424.4l-2-9.1 -1.4-9.5 -0.9-9.5 -0.2-9.6 0.4-9.6"/><path class="ai s3" d="M289.1 424.4l-2-9.1 -1.4-9.5 -0.9-9.5 -0.2-9.6 0.4-9.6"/><path d="M287.5 441.5l-3-8.7 -2.5-9.1 -1.9-9.3 -1.5-9.5 -0.9-9.6"/><path class="ai s4" d="M287.5 441.5l-3-8.7 -2.5-9.1 -1.9-9.3 -1.5-9.5 -0.9-9.6"/><path d="M277.7 395.3l-0.3-9.7 0.2-9.6 0.8-9.4 1.4-9.3 1.9-8.9"/><path class="ai s1" d="M277.7 395.3l-0.3-9.7 0.2-9.6 0.8-9.4 1.4-9.3 1.9-8.9"/><path d="M288 463.8l-4.3-8.5 -3.9-8.9 -3.4-9.3 -3-9.6 -2.4-9.9"/><path class="ai s4" d="M288 463.8l-4.3-8.5 -3.9-8.9 -3.4-9.3 -3-9.6 -2.4-9.9"/><path d="M357.4 464.4l-7.4-6 -6.7-7.5 -6-8.9 -5.1-10.1 -3.9-11"/><path class="ai s5" d="M357.4 464.4l-7.4-6 -6.7-7.5 -6-8.9 -5.1-10.1 -3.9-11"/><path d="M283.6 438l-2.7-8.6 -2.2-8.9 -1.8-9.2 -1.2-9.3 -0.8-9.4"/><path class="ai s3" d="M283.6 438l-2.7-8.6 -2.2-8.9 -1.8-9.2 -1.2-9.3 -0.8-9.4"/><path d="M275.4 371.1l0.9-10.6 1.5-10.4 2.1-9.9 2.8-9.4 3.4-8.8"/><path class="ai s0" d="M275.4 371.1l0.9-10.6 1.5-10.4 2.1-9.9 2.8-9.4 3.4-8.8"/><path d="M315.9 496.8l-8.4-8.9 -7.7-9.9 -6.9-10.8 -6.1-11.4"/><path class="ai s5" d="M315.9 496.8l-8.4-8.9 -7.7-9.9 -6.9-10.8 -6.1-11.4"/><path d="M289.5 446.9l-3.3-8.6 -2.9-9 -2.3-9.3 -1.8-9.6 -1.3-9.7"/><path class="ai s4" d="M289.5 446.9l-3.3-8.6 -2.9-9 -2.3-9.3 -1.8-9.6 -1.3-9.7"/><path d="M325.4 373.5l2.9-11.3 4.3-10.5 5.8-9.2 7.3-7.7 8.5-5.9"/><path class="ai s1" d="M325.4 373.5l2.9-11.3 4.3-10.5 5.8-9.2 7.3-7.7 8.5-5.9"/><path d="M307.2 441.3l-3.4-8.7 -2.8-9.2 -2.1-9.6 -1.4-9.9 -0.6-10"/><path class="ai s4" d="M307.2 441.3l-3.4-8.7 -2.8-9.2 -2.1-9.6 -1.4-9.9 -0.6-10"/><path d="M273.8 327.3l3-12.6 3.7-11.7 4.4-10.6 5-9.6"/><path class="ai s0" d="M273.8 327.3l3-12.6 3.7-11.7 4.4-10.6 5-9.6"/><path d="M259.6 376.4l0-9.5 0.3-9.3 0.8-9 1.2-8.6 1.5-8.3 1.8-7.8"/><path class="ai s0" d="M259.6 376.4l0-9.5 0.3-9.3 0.8-9 1.2-8.6 1.5-8.3 1.8-7.8"/><path d="M303.9 494.6l-7.4-8.9 -6.7-9.7 -6.1-10.3 -5.5-10.8"/><path class="ai s5" d="M303.9 494.6l-7.4-8.9 -6.7-9.7 -6.1-10.3 -5.5-10.8"/><path d="M327.6 511.3l-10.5-8.8 -9.6-10 -8.7-11.2 -7.8-12.1"/><path class="ai s5" d="M327.6 511.3l-10.5-8.8 -9.6-10 -8.7-11.2 -7.8-12.1"/><path d="M292 454.2l-3.8-8.4 -3.4-8.9 -2.8-9.3 -2.3-9.6 -1.8-9.8"/><path class="ai s4" d="M292 454.2l-3.8-8.4 -3.4-8.9 -2.8-9.3 -2.3-9.6 -1.8-9.8"/><path d="M307.8 332.7l5.8-13.7 7.5-12.1 9-10.2 10.5-8"/><path class="ai s0" d="M307.8 332.7l5.8-13.7 7.5-12.1 9-10.2 10.5-8"/><path d="M296.9 393.9l0.1-10.1 1-9.9 1.8-9.7 2.6-9.3 3.4-8.8"/><path class="ai s1" d="M296.9 393.9l0.1-10.1 1-9.9 1.8-9.7 2.6-9.3 3.4-8.8"/><path d="M274.9 392.6l-0.2-9.4 0.3-9.3 0.8-9.2 1.4-9 1.9-8.6"/><path class="ai s1" d="M274.9 392.6l-0.2-9.4 0.3-9.3 0.8-9.2 1.4-9 1.9-8.6"/><path d="M284.8 469.8l-4.5-8.2 -4.1-8.7 -3.7-9 -3.2-9.3 -2.8-9.5"/><path class="ai s4" d="M284.8 469.8l-4.5-8.2 -4.1-8.7 -3.7-9 -3.2-9.3 -2.8-9.5"/><path d="M303.7 473.4l-5.6-8.3 -5-9.1 -4.5-9.6 -3.8-10.1 -3.3-10.5"/><path class="ai s5" d="M303.7 473.4l-5.6-8.3 -5-9.1 -4.5-9.6 -3.8-10.1 -3.3-10.5"/><path d="M297.2 401.7l-0.4-9.7 0.3-9.7 1.1-9.5 1.9-9.3 2.7-8.9"/><path class="ai s2" d="M297.2 401.7l-0.4-9.7 0.3-9.7 1.1-9.5 1.9-9.3 2.7-8.9"/><path d="M313.1 497.9l-8.1-8.6 -7.5-9.7 -6.8-10.4 -6-11.1"/><path class="ai s5" d="M313.1 497.9l-8.1-8.6 -7.5-9.7 -6.8-10.4 -6-11.1"/><path d="M263.2 380.7l0-9.3 0.4-9.1 0.8-8.9 1.2-8.7 1.6-8.2 2-7.9"/><path class="ai s0" d="M263.2 380.7l0-9.3 0.4-9.1 0.8-8.9 1.2-8.7 1.6-8.2 2-7.9"/><path d="M363 463.1l-7.3-5.1 -6.9-6.7 -6.1-8.2 -5.2-9.4 -4.2-10.5"/><path class="ai s5" d="M363 463.1l-7.3-5.1 -6.9-6.7 -6.1-8.2 -5.2-9.4 -4.2-10.5"/><path d="M311 474.8l-5.9-8.1 -5.4-8.9 -4.8-9.6 -4.2-10.2 -3.4-10.7"/><path class="ai s5" d="M311 474.8l-5.9-8.1 -5.4-8.9 -4.8-9.6 -4.2-10.2 -3.4-10.7"/><path d="M284.9 423.3l-1.8-8.6 -1.2-8.9 -0.8-9 -0.2-9 0.3-9.1 0.9-8.9"/><path class="ai s3" d="M284.9 423.3l-1.8-8.6 -1.2-8.9 -0.8-9 -0.2-9 0.3-9.1 0.9-8.9"/><path d="M285.2 409.6l-1-9 -0.4-9 0.2-9.1 0.7-9 1.3-8.8"/><path class="ai s2" d="M285.2 409.6l-1-9 -0.4-9 0.2-9.1 0.7-9 1.3-8.8"/><path d="M291.3 474.7l-5-8.1 -4.6-8.6 -4.1-9.1 -3.6-9.5 -3.1-9.7"/><path class="ai s5" d="M291.3 474.7l-5-8.1 -4.6-8.6 -4.1-9.1 -3.6-9.5 -3.1-9.7"/><path d="M348.2 468.1l-7.1-6.3 -6.6-7.7 -5.9-8.9 -4.9-10.1 -4.1-10.8"/><path class="ai s5" d="M348.2 468.1l-7.1-6.3 -6.6-7.7 -5.9-8.9 -4.9-10.1 -4.1-10.8"/><path d="M289.9 449.1l-3.4-8.2 -2.8-8.6 -2.5-9 -1.9-9.2 -1.4-9.4"/><path class="ai s4" d="M289.9 449.1l-3.4-8.2 -2.8-8.6 -2.5-9 -1.9-9.2 -1.4-9.4"/><path d="M279.5 385.4l0.3-9.6 0.9-9.5 1.5-9.2 2.1-9 2.7-8.4"/><path class="ai s1" d="M279.5 385.4l0.3-9.6 0.9-9.5 1.5-9.2 2.1-9 2.7-8.4"/><path d="M271.5 375.8l0.6-9.6 1-9.3 1.6-9.1 2.1-8.7 2.5-8.2"/><path class="ai s0" d="M271.5 375.8l0.6-9.6 1-9.3 1.6-9.1 2.1-8.7 2.5-8.2"/><path d="M290.1 435.4l-2.4-8.3 -2-8.6 -1.5-8.8 -1-9 -0.4-9.2 0.1-9.1"/><path class="ai s3" d="M290.1 435.4l-2.4-8.3 -2-8.6 -1.5-8.8 -1-9 -0.4-9.2 0.1-9.1"/><path d="M292.8 455.5l-3.7-8.1 -3.4-8.6 -2.9-9 -2.3-9.3 -1.9-9.5"/><path class="ai s4" d="M292.8 455.5l-3.7-8.1 -3.4-8.6 -2.9-9 -2.3-9.3 -1.9-9.5"/><path d="M266.7 367.6l0.7-9.6 1.2-9.3 1.6-9 2.1-8.5 2.5-8.1"/><path class="ai s0" d="M266.7 367.6l0.7-9.6 1.2-9.3 1.6-9 2.1-8.5 2.5-8.1"/><path d="M334 476.9l-7.3-7.1 -6.6-8.4 -6-9.4 -5.1-10.4 -4.3-11.1"/><path class="ai s5" d="M334 476.9l-7.3-7.1 -6.6-8.4 -6-9.4 -5.1-10.4 -4.3-11.1"/><path d="M342.6 388.8l1.8-9.1 3-8.5 4.4-7.7 5.6-6.4 6.8-4.9 7.9-3"/><path class="ai s1" d="M342.6 388.8l1.8-9.1 3-8.5 4.4-7.7 5.6-6.4 6.8-4.9 7.9-3"/><path d="M295.2 459.7l-4.1-8 -3.7-8.4 -3.1-9 -2.7-9.2 -2.1-9.6"/><path class="ai s4" d="M295.2 459.7l-4.1-8 -3.7-8.4 -3.1-9 -2.7-9.2 -2.1-9.6"/><path d="M331.7 338.2l7.5-12 9.5-9.9 11.3-7.2 13-4"/><path class="ai s1" d="M331.7 338.2l7.5-12 9.5-9.9 11.3-7.2 13-4"/><path d="M288.7 511.3l-7-7.9 -6.5-8.4 -6-8.9 -5.6-9.1 -5.1-9.3"/><path class="ai s5" d="M288.7 511.3l-7-7.9 -6.5-8.4 -6-8.9 -5.6-9.1 -5.1-9.3"/><path d="M335.3 475.6l-7.1-6.8 -6.5-8.1 -5.9-9.2 -5.1-10 -4.2-10.9"/><path class="ai s5" d="M335.3 475.6l-7.1-6.8 -6.5-8.1 -5.9-9.2 -5.1-10 -4.2-10.9"/><path d="M288.2 413.8l-1.1-8.7 -0.6-8.8 -0.1-8.8 0.6-8.8 1.1-8.7 1.7-8.5"/><path class="ai s2" d="M288.2 413.8l-1.1-8.7 -0.6-8.8 -0.1-8.8 0.6-8.8 1.1-8.7 1.7-8.5"/><path d="M295.8 460.5l-4.1-7.9 -3.6-8.4 -3.3-8.8 -2.7-9.2 -2.2-9.5"/><path class="ai s4" d="M295.8 460.5l-4.1-7.9 -3.6-8.4 -3.3-8.8 -2.7-9.2 -2.2-9.5"/><path d="M300.8 517l-8.5-8.5 -7.9-9.3 -7.2-9.7 -6.6-10.3"/><path class="ai s5" d="M300.8 517l-8.5-8.5 -7.9-9.3 -7.2-9.7 -6.6-10.3"/><path d="M295.5 428.6l-2.1-8.3 -1.5-8.5 -1-8.7 -0.4-8.9 0.2-8.9 0.8-8.9"/><path class="ai s3" d="M295.5 428.6l-2.1-8.3 -1.5-8.5 -1-8.7 -0.4-8.9 0.2-8.9 0.8-8.9"/><path d="M275.8 418.2l-1.4-8.1 -0.9-8.2 -0.5-8.3 -0.1-8.3 0.3-8.3 0.7-8.2"/><path class="ai s2" d="M275.8 418.2l-1.4-8.1 -0.9-8.2 -0.5-8.3 -0.1-8.3 0.3-8.3 0.7-8.2"/><path d="M279.8 482.3l-4.6-7.3 -4.3-7.7 -3.9-8 -3.6-8.3 -3.3-8.5 -2.9-8.7"/><path class="ai s5" d="M279.8 482.3l-4.6-7.3 -4.3-7.7 -3.9-8 -3.6-8.3 -3.3-8.5 -2.9-8.7"/><path d="M302.1 459.8l-4.2-7.8 -3.8-8.4 -3.3-8.8 -2.8-9.3 -2.2-9.7"/><path class="ai s4" d="M302.1 459.8l-4.2-7.8 -3.8-8.4 -3.3-8.8 -2.8-9.3 -2.2-9.7"/><path d="M325.7 348.4l5.7-11.2 7.4-9.5 8.8-7.7 10.3-5.4"/><path class="ai s1" d="M325.7 348.4l5.7-11.2 7.4-9.5 8.8-7.7 10.3-5.4"/><path d="M303.1 364l2.7-11.1 3.8-10.4 4.9-9.5 5.9-8.4 7-7.1"/><path class="ai s0" d="M303.1 364l2.7-11.1 3.8-10.4 4.9-9.5 5.9-8.4 7-7.1"/><path d="M330.1 425.5l-2.1-7.5 -1.5-7.8 -0.7-8.1 0.1-8.3 1-8.2 1.8-8"/><path class="ai s3" d="M330.1 425.5l-2.1-7.5 -1.5-7.8 -0.7-8.1 0.1-8.3 1-8.2 1.8-8"/><path d="M341.7 376.7l3.3-9 4.7-8 6-6.8 7.2-5.1 8.4-3.2"/><path class="ai s1" d="M341.7 376.7l3.3-9 4.7-8 6-6.8 7.2-5.1 8.4-3.2"/><path d="M304.3 478.4l-5.6-7.7 -5.2-8.4 -4.6-9 -4.1-9.6 -3.6-9.9"/><path class="ai s5" d="M304.3 478.4l-5.6-7.7 -5.2-8.4 -4.6-9 -4.1-9.6 -3.6-9.9"/><path d="M338.4 484l-7.9-6.6 -7.4-8 -6.8-9.2 -5.9-10.1 -5.1-11.1"/><path class="ai s5" d="M338.4 484l-7.9-6.6 -7.4-8 -6.8-9.2 -5.9-10.1 -5.1-11.1"/><path d="M318.2 423l-1.9-7.9 -1.1-8.3 -0.5-8.5 0.4-8.6 1.1-8.5 1.9-8.3"/><path class="ai s3" d="M318.2 423l-1.9-7.9 -1.1-8.3 -0.5-8.5 0.4-8.6 1.1-8.5 1.9-8.3"/><path d="M276.5 371.4l1-9.6 1.5-9.3 2.2-8.9 2.7-8.5 3.2-7.9"/><path class="ai s0" d="M276.5 371.4l1-9.6 1.5-9.3 2.2-8.9 2.7-8.5 3.2-7.9"/><path d="M276.9 372.8l1-9.5 1.5-9.3 2.1-8.9 2.6-8.4 3.2-8"/><path class="ai s0" d="M276.9 372.8l1-9.5 1.5-9.3 2.1-8.9 2.6-8.4 3.2-8"/><path d="M297.1 463.5l-4.3-7.7 -3.9-8.2 -3.4-8.7 -2.9-9.1 -2.4-9.5"/><path class="ai s5" d="M297.1 463.5l-4.3-7.7 -3.9-8.2 -3.4-8.7 -2.9-9.1 -2.4-9.5"/><path d="M328.9 426l-2.2-7.4 -1.5-7.7 -0.8-8.1 0.1-8.2 0.8-8.2 1.8-8"/><path class="ai s3" d="M328.9 426l-2.2-7.4 -1.5-7.7 -0.8-8.1 0.1-8.2 0.8-8.2 1.8-8"/><path d="M374.5 523.2l-16-6.5 -15-9.4 -13.7-12"/><path class="ai s5" d="M374.5 523.2l-16-6.5 -15-9.4 -13.7-12"/><path d="M354.3 506.9l-11.7-6.5 -10.9-8.6 -10.1-10.3 -9-11.7"/><path class="ai s5" d="M354.3 506.9l-11.7-6.5 -10.9-8.6 -10.1-10.3 -9-11.7"/><path d="M294.4 467l-4.4-7.6 -3.9-8.2 -3.6-8.6 -3.1-9 -2.6-9.3"/><path class="ai s5" d="M294.4 467l-4.4-7.6 -3.9-8.2 -3.6-8.6 -3.1-9 -2.6-9.3"/><path d="M313 453.2l-4-7.3 -3.6-7.9 -3-8.5 -2.4-9 -1.7-9.3 -1.1-9.5"/><path class="ai s4" d="M313 453.2l-4-7.3 -3.6-7.9 -3-8.5 -2.4-9 -1.7-9.3 -1.1-9.5"/><path d="M269.1 398.9l-0.4-8.1 -0.1-8.1 0.3-8.1 0.7-7.9 1-7.8 1.5-7.6"/><path class="ai s1" d="M269.1 398.9l-0.4-8.1 -0.1-8.1 0.3-8.1 0.7-7.9 1-7.8 1.5-7.6"/><path d="M311.5 478.9l-6-7.4 -5.4-8.3 -5-8.9 -4.3-9.5 -3.8-10.1"/><path class="ai s5" d="M311.5 478.9l-6-7.4 -5.4-8.3 -5-8.9 -4.3-9.5 -3.8-10.1"/><path d="M297.7 463.8l-4.3-7.6 -3.8-8.1 -3.4-8.5 -2.9-9 -2.5-9.3"/><path class="ai s5" d="M297.7 463.8l-4.3-7.6 -3.8-8.1 -3.4-8.5 -2.9-9 -2.5-9.3"/><path d="M327.1 432l-2.6-7.1 -2.1-7.6 -1.3-8 -0.7-8.3 0.2-8.3 1-8.4"/><path class="ai s4" d="M327.1 432l-2.6-7.1 -2.1-7.6 -1.3-8 -0.7-8.3 0.2-8.3 1-8.4"/><path d="M285 377.1l1.1-9.4 1.7-9.1 2.3-8.9 3-8.3 3.6-7.9"/><path class="ai s1" d="M285 377.1l1.1-9.4 1.7-9.1 2.3-8.9 3-8.3 3.6-7.9"/><path d="M290.8 325.4l4.6-12.2 5.6-11.2 6.7-9.7 7.5-8.3"/><path class="ai s0" d="M290.8 325.4l4.6-12.2 5.6-11.2 6.7-9.7 7.5-8.3"/><path d="M277.4 367.8l1.2-9.5 1.9-9.1 2.4-8.8 2.9-8.3 3.5-7.7"/><path class="ai s0" d="M277.4 367.8l1.2-9.5 1.9-9.1 2.4-8.8 2.9-8.3 3.5-7.7"/><path d="M276.1 399.1l-0.3-8.2 0.1-8.3 0.5-8.2 1-8.1 1.5-7.9 1.8-7.7"/><path class="ai s1" d="M276.1 399.1l-0.3-8.2 0.1-8.3 0.5-8.2 1-8.1 1.5-7.9 1.8-7.7"/><path d="M304 376.8l1.8-9.8 2.7-9.3 3.6-8.7 4.5-8 5.4-7.1"/><path class="ai s1" d="M304 376.8l1.8-9.8 2.7-9.3 3.6-8.7 4.5-8 5.4-7.1"/><path d="M277.2 366.5l1.3-9.4 1.9-9.1 2.5-8.8 3-8.2 3.5-7.6"/><path class="ai s0" d="M277.2 366.5l1.3-9.4 1.9-9.1 2.5-8.8 3-8.2 3.5-7.6"/><path d="M355.3 515.7l-13-7.2 -12.2-9.4 -11.1-11.2"/><path class="ai s5" d="M355.3 515.7l-13-7.2 -12.2-9.4 -11.1-11.2"/><path d="M292.3 476.9l-4.6-7.1 -4.3-7.6 -3.9-8.1 -3.5-8.4 -3.2-8.8 -2.7-9.1"/><path class="ai s5" d="M292.3 476.9l-4.6-7.1 -4.3-7.6 -3.9-8.1 -3.5-8.4 -3.2-8.8 -2.7-9.1"/><path d="M372.4 478.8l-9.6-3.8 -9.1-6.1 -8.5-8 -7.6-9.7"/><path class="ai s5" d="M372.4 478.8l-9.6-3.8 -9.1-6.1 -8.5-8 -7.6-9.7"/><path d="M293.8 491.7l-5.7-7.4 -5.3-7.9 -4.9-8.4 -4.5-8.8 -4.1-9.2"/><path class="ai s5" d="M293.8 491.7l-5.7-7.4 -5.3-7.9 -4.9-8.4 -4.5-8.8 -4.1-9.2"/><path d="M358.2 516.5l-13.4-6.9 -12.4-9.3 -11.4-11.1"/><path class="ai s5" d="M358.2 516.5l-13.4-6.9 -12.4-9.3 -11.4-11.1"/><path d="M304.8 475.8l-5.3-7.2 -4.8-7.9 -4.3-8.5 -3.9-9 -3.4-9.5"/><path class="ai s5" d="M304.8 475.8l-5.3-7.2 -4.8-7.9 -4.3-8.5 -3.9-9 -3.4-9.5"/><path d="M282.9 382.4l0.7-9 1.3-8.9 1.8-8.7 2.5-8.3 3-7.8 3.6-7.3"/><path class="ai s1" d="M282.9 382.4l0.7-9 1.3-8.9 1.8-8.7 2.5-8.3 3-7.8 3.6-7.3"/><path d="M278.8 444.5l-4.5-14.3 -3.3-15.3 -1.9-16"/><path class="ai s4" d="M278.8 444.5l-4.5-14.3 -3.3-15.3 -1.9-16"/><path d="M375.9 480.2l-9.5-2.8 -9.3-5 -8.8-7 -8-8.9 -7-10.4"/><path class="ai s5" d="M375.9 480.2l-9.5-2.8 -9.3-5 -8.8-7 -8-8.9 -7-10.4"/><path d="M284.3 366.2l1.7-9.5 2.3-9.2 3-8.7 3.6-8.1 4.2-7.5"/><path class="ai s0" d="M284.3 366.2l1.7-9.5 2.3-9.2 3-8.7 3.6-8.1 4.2-7.5"/><path d="M331.7 438.8l-3.2-6.3 -2.7-7 -2.1-7.5 -1.4-7.9 -0.7-8.1 0.1-8.3"/><path class="ai s4" d="M331.7 438.8l-3.2-6.3 -2.7-7 -2.1-7.5 -1.4-7.9 -0.7-8.1 0.1-8.3"/><path d="M383.1 502.3l-13.2-3.3 -12.7-6.2 -12-8.9 -10.9-11.1"/><path class="ai s5" d="M383.1 502.3l-13.2-3.3 -12.7-6.2 -12-8.9 -10.9-11.1"/><path d="M326.9 343.4l6.4-10.5 7.8-8.8 9.4-6.8 10.6-4.4"/><path class="ai s1" d="M326.9 343.4l6.4-10.5 7.8-8.8 9.4-6.8 10.6-4.4"/><path d="M252.6 353.8l1.2-17 2.2-15.5 1.4-7 3.2-12.7"/><path class="ai s0" d="M252.6 353.8l1.2-17 2.2-15.5 1.4-7 3.2-12.7"/><path d="M279.2 314.3l4-11.9 4.8-10.8 5.4-9.6 5.9-8.4"/><path class="ai s0" d="M279.2 314.3l4-11.9 4.8-10.8 5.4-9.6 5.9-8.4"/><path d="M304.4 320.9l6.3-12.6 7.8-10.9 9-9.2 10.2-7"/><path class="ai s0" d="M304.4 320.9l6.3-12.6 7.8-10.9 9-9.2 10.2-7"/><path d="M286 445.1l-2.5-7 -2.2-7.3 -1.8-7.6 -1.6-7.8 -1.1-8.1 -0.7-8.2"/><path class="ai s4" d="M286 445.1l-2.5-7 -2.2-7.3 -1.8-7.6 -1.6-7.8 -1.1-8.1 -0.7-8.2"/><path d="M341.3 496.6l-9.2-6.5 -8.7-7.9 -8-9.3 -7.1-10.4"/><path class="ai s5" d="M341.3 496.6l-9.2-6.5 -8.7-7.9 -8-9.3 -7.1-10.4"/><path d="M273.5 331.7l2.7-10.9 3.3-10.2 3.9-9.4 4.4-8.4 4.9-7.5"/><path class="ai s0" d="M273.5 331.7l2.7-10.9 3.3-10.2 3.9-9.4 4.4-8.4 4.9-7.5"/><path d="M321.7 393.7l0.9-8.3 1.8-8.1 2.6-7.7 3.6-7.2 4.4-6.4 5.3-5.4"/><path class="ai s1" d="M321.7 393.7l0.9-8.3 1.8-8.1 2.6-7.7 3.6-7.2 4.4-6.4 5.3-5.4"/><path d="M300.7 457.1l-3.6-6.8 -3.2-7.3 -2.9-7.9 -2.4-8.2 -2-8.5 -1.4-8.8"/><path class="ai s4" d="M300.7 457.1l-3.6-6.8 -3.2-7.3 -2.9-7.9 -2.4-8.2 -2-8.5 -1.4-8.8"/><path d="M332.1 493.3l-8.3-6.7 -7.7-8.1 -7-9.1 -6.4-10.1"/><path class="ai s5" d="M332.1 493.3l-8.3-6.7 -7.7-8.1 -7-9.1 -6.4-10.1"/><path d="M300.4 394.4l0.4-8.3 1.1-8.3 1.8-8.2 2.5-7.8 3.1-7.4 3.9-6.8"/><path class="ai s1" d="M300.4 394.4l0.4-8.3 1.1-8.3 1.8-8.2 2.5-7.8 3.1-7.4 3.9-6.8"/><path d="M331.7 495.9l-8.4-6.8 -7.9-8 -7.2-9.1 -6.5-10.1"/><path class="ai s5" d="M331.7 495.9l-8.4-6.8 -7.9-8 -7.2-9.1 -6.5-10.1"/><path d="M309.4 440.6l-2.7-6.8 -2.3-7.2 -1.8-7.7 -1.3-7.9 -0.7-8.2 -0.2-8.4"/><path class="ai s4" d="M309.4 440.6l-2.7-6.8 -2.3-7.2 -1.8-7.7 -1.3-7.9 -0.7-8.2 -0.2-8.4"/><path d="M143.4 398.5l-2.2 11.3 -1.8 11.7 -1.4 12.2 -0.9 12.5"/><path class="ai s2" d="M143.4 398.5l-2.2 11.3 -1.8 11.7 -1.4 12.2 -0.9 12.5"/><path d="M164.7 351.1l-6.5 14.9 -3 8.2 -2.8 8.8 -2.6 9.3 -2.3 9.8"/><path class="ai s1" d="M164.7 351.1l-6.5 14.9 -3 8.2 -2.8 8.8 -2.6 9.3 -2.3 9.8"/><path d="M147.5 402.1l-2 10.2 -1.7 10.6 -1.3 11.1 -1 11.3 -0.5 11.7"/><path class="ai s2" d="M147.5 402.1l-2 10.2 -1.7 10.6 -1.3 11.1 -1 11.3 -0.5 11.7"/><path d="M222.3 340.9l-2.5-10.5 -1.3-4.4 -3.1-7.2 -1.8-2.8 -2-2.2 -2.1-1.6 -2.3-1.1 -2.6-0.4 -2.7 0.1 -2.9 0.7 -3 1.3"/><path class="ai s0" d="M222.3 340.9l-2.5-10.5 -1.3-4.4 -3.1-7.2 -1.8-2.8 -2-2.2 -2.1-1.6 -2.3-1.1 -2.6-0.4 -2.7 0.1 -2.9 0.7 -3 1.3"/><path d="M280.9 349.4l2.4-9.7 3-9.1 3.7-8.5 4.2-7.8 4.8-7"/><path class="ai s0" d="M280.9 349.4l2.4-9.7 3-9.1 3.7-8.5 4.2-7.8 4.8-7"/><path d="M277.8 362.7l1.5-9.2 2.1-8.9 2.7-8.4 3.2-7.9 3.7-7.4 4.2-6.7"/><path class="ai s0" d="M277.8 362.7l1.5-9.2 2.1-8.9 2.7-8.4 3.2-7.9 3.7-7.4 4.2-6.7"/><path d="M158.9 350.1l-3.6 8.5 -3.4 9.2 -3.1 9.7 -2.9 10.3 -2.5 10.7"/><path class="ai s1" d="M158.9 350.1l-3.6 8.5 -3.4 9.2 -3.1 9.7 -2.9 10.3 -2.5 10.7"/><path d="M400.7 484.1l-11.6 0.3 -11.8-3 -11.5-5.8 -10.7-8.6"/><path class="ai s5" d="M400.7 484.1l-11.6 0.3 -11.8-3 -11.5-5.8 -10.7-8.6"/><path d="M277.7 359.1l1.8-9.3 2.3-8.8 2.8-8.4 3.4-7.9 3.9-7.2 4.3-6.6"/><path class="ai s0" d="M277.7 359.1l1.8-9.3 2.3-8.8 2.8-8.4 3.4-7.9 3.9-7.2 4.3-6.6"/><path d="M291.5 376.4l1.4-8.7 2.1-8.5 2.7-8 3.3-7.7 4-7 4.6-6.3"/><path class="ai s1" d="M291.5 376.4l1.4-8.7 2.1-8.5 2.7-8 3.3-7.7 4-7 4.6-6.3"/><path d="M282.1 369.8l1.4-8.7 2-8.5 2.5-8 3.1-7.7 3.6-7.1 4.1-6.5"/><path class="ai s0" d="M282.1 369.8l1.4-8.7 2-8.5 2.5-8 3.1-7.7 3.6-7.1 4.1-6.5"/><path d="M310.9 470.1l-4.6-6.2 -4.3-6.8 -3.9-7.4 -3.5-8 -3-8.4 -2.5-8.9"/><path class="ai s5" d="M310.9 470.1l-4.6-6.2 -4.3-6.8 -3.9-7.4 -3.5-8 -3-8.4 -2.5-8.9"/><path d="M304.1 458.5l-3.6-6.3 -3.2-6.8 -2.9-7.3 -2.5-7.8 -2.1-8.1 -1.6-8.4"/><path class="ai s5" d="M304.1 458.5l-3.6-6.3 -3.2-6.8 -2.9-7.3 -2.5-7.8 -2.1-8.1 -1.6-8.4"/><path d="M321.6 384.3l1.8-8.1 2.8-7.7 3.6-7.2 4.5-6.4 5.3-5.5 6.2-4.3"/><path class="ai s1" d="M321.6 384.3l1.8-8.1 2.8-7.7 3.6-7.2 4.5-6.4 5.3-5.5 6.2-4.3"/><path d="M152 370.9l-2.9 9.8 -2.6 10.3 -2.2 10.7 -1.9 11.1 -1.6 11.6"/><path class="ai s1" d="M152 370.9l-2.9 9.8 -2.6 10.3 -2.2 10.7 -1.9 11.1 -1.6 11.6"/><path d="M151.7 383.2l-2.4 9.7 -2.1 10 -1.8 10.5 -1.5 10.7 -1.1 11.1"/><path class="ai s1" d="M151.7 383.2l-2.4 9.7 -2.1 10 -1.8 10.5 -1.5 10.7 -1.1 11.1"/><path d="M316.5 484.4l-6-6.2 -5.7-7 -5.2-7.8 -4.7-8.5 -4.2-9.1"/><path class="ai s5" d="M316.5 484.4l-6-6.2 -5.7-7 -5.2-7.8 -4.7-8.5 -4.2-9.1"/><path d="M382.9 455.4l-6 0.2 -6.1-1.4 -6.1-3 -5.9-4.6 -5.4-6.1 -4.8-7.2 -3.9-8.3"/><path class="ai s5" d="M382.9 455.4l-6 0.2 -6.1-1.4 -6.1-3 -5.9-4.6 -5.4-6.1 -4.8-7.2 -3.9-8.3"/><path d="M306.6 439.4l-2.4-6.2 -1.9-6.6 -1.6-7 -1.2-7.2 -0.7-7.6 -0.2-7.6 0.3-7.8"/><path class="ai s4" d="M306.6 439.4l-2.4-6.2 -1.9-6.6 -1.6-7 -1.2-7.2 -0.7-7.6 -0.2-7.6 0.3-7.8"/><path d="M301.1 341.7l4.3-10.5 5.4-9.6 6.3-8.3 7.3-7 8.2-5.5"/><path class="ai s0" d="M301.1 341.7l4.3-10.5 5.4-9.6 6.3-8.3 7.3-7 8.2-5.5"/><path d="M290.5 460.7l-3.2-6.2 -2.9-6.5 -2.6-7 -2.4-7.3 -2-7.6 -1.6-7.9"/><path class="ai s5" d="M290.5 460.7l-3.2-6.2 -2.9-6.5 -2.6-7 -2.4-7.3 -2-7.6 -1.6-7.9"/><path d="M273.9 368.8l1.1-8 1.6-7.9 2-7.5 2.4-7.2 2.8-6.9 3.2-6.3"/><path class="ai s0" d="M273.9 368.8l1.1-8 1.6-7.9 2-7.5 2.4-7.2 2.8-6.9 3.2-6.3"/><path d="M334.1 468.7l-5.5-4.9 -5.1-6 -4.7-6.8 -4.2-7.7 -3.7-8.4 -3.1-8.9"/><path class="ai s5" d="M334.1 468.7l-5.5-4.9 -5.1-6 -4.7-6.8 -4.2-7.7 -3.7-8.4 -3.1-8.9"/><path d="M272.5 352.2l1.7-8.9 2.3-8.5 2.7-8 3.1-7.5 3.5-6.9 3.9-6.3"/><path class="ai s0" d="M272.5 352.2l1.7-8.9 2.3-8.5 2.7-8 3.1-7.5 3.5-6.9 3.9-6.3"/><path d="M303.9 467.1l-4-6 -3.8-6.7 -3.3-7.1 -3.1-7.6 -2.6-8 -2.2-8.4"/><path class="ai s5" d="M303.9 467.1l-4-6 -3.8-6.7 -3.3-7.1 -3.1-7.6 -2.6-8 -2.2-8.4"/><path d="M151.9 389.8l-2.1 9.6 -3.3 20.2 -1.2 10.5 -0.8 10.8"/><path class="ai s1" d="M151.9 389.8l-2.1 9.6 -3.3 20.2 -1.2 10.5 -0.8 10.8"/><path d="M298.9 389.4l0.9-7.7 1.4-7.7 2.1-7.4 2.7-7.1 3.3-6.7 3.8-6.1"/><path class="ai s1" d="M298.9 389.4l0.9-7.7 1.4-7.7 2.1-7.4 2.7-7.1 3.3-6.7 3.8-6.1"/><path d="M274.3 352.2l1.9-8.9 2.3-8.6 2.9-8 3.3-7.5 3.7-6.9 4.1-6.3"/><path class="ai s0" d="M274.3 352.2l1.9-8.9 2.3-8.6 2.9-8 3.3-7.5 3.7-6.9 4.1-6.3"/><path d="M175.4 398.5l-3.9 14.3 -3.1 16.2 -2.1 17.9"/><path class="ai s2" d="M175.4 398.5l-3.9 14.3 -3.1 16.2 -2.1 17.9"/><path d="M310.7 477l-4.9-5.9 -4.6-6.5 -4.3-7.2 -3.9-7.8 -3.4-8.2 -3-8.7"/><path class="ai s5" d="M310.7 477l-4.9-5.9 -4.6-6.5 -4.3-7.2 -3.9-7.8 -3.4-8.2 -3-8.7"/><path d="M300.2 423.2l-1.2-6.5 -0.8-6.7 -0.4-6.9 0-7.1 0.5-7.2 1-7.1 1.5-7"/><path class="ai s3" d="M300.2 423.2l-1.2-6.5 -0.8-6.7 -0.4-6.9 0-7.1 0.5-7.2 1-7.1 1.5-7"/><path d="M279 357.7l1.9-8.8 2.4-8.5 3-7.9 3.5-7.5 3.9-6.8 4.4-6.1"/><path class="ai s0" d="M279 357.7l1.9-8.8 2.4-8.5 3-7.9 3.5-7.5 3.9-6.8 4.4-6.1"/><path d="M277.9 353.2l2-9 2.6-8.6 3.1-8.1 3.6-7.5 4.1-6.8 4.5-6.2"/><path class="ai s0" d="M277.9 353.2l2-9 2.6-8.6 3.1-8.1 3.6-7.5 4.1-6.8 4.5-6.2"/><path d="M286 364.7l1.9-8.6 2.5-8.2 3.1-7.8 3.6-7.3 4.2-6.6 4.8-5.9"/><path class="ai s0" d="M286 364.7l1.9-8.6 2.5-8.2 3.1-7.8 3.6-7.3 4.2-6.6 4.8-5.9"/><path d="M140.8 424.4l-1.1 11.8 -0.8 12.1 -0.3 12.4 0.2 12.6"/><path class="ai s2" d="M140.8 424.4l-1.1 11.8 -0.8 12.1 -0.3 12.4 0.2 12.6"/><path d="M370.4 471.3l-7.4-1.5 -7.3-3.3 -7-5 -6.5-6.4 -6-7.7 -5.2-8.9"/><path class="ai s5" d="M370.4 471.3l-7.4-1.5 -7.3-3.3 -7-5 -6.5-6.4 -6-7.7 -5.2-8.9"/><path d="M374.6 506.5l-12.2-3.1 -11.9-5.6 -11.1-7.9 -10.3-9.8"/><path class="ai s5" d="M374.6 506.5l-12.2-3.1 -11.9-5.6 -11.1-7.9 -10.3-9.8"/><path d="M327.1 378.4l2.6-7.6 3.6-7 4.5-6.3 5.3-5.3 6.2-4.2 6.8-2.7"/><path class="ai s1" d="M327.1 378.4l2.6-7.6 3.6-7 4.5-6.3 5.3-5.3 6.2-4.2 6.8-2.7"/><path d="M328.7 377.6l2.8-7.6 3.8-7 4.6-6.1 5.5-5.1 6.4-3.9 7.1-2.5"/><path class="ai s1" d="M328.7 377.6l2.8-7.6 3.8-7 4.6-6.1 5.5-5.1 6.4-3.9 7.1-2.5"/><path d="M298 394.4l0.5-7.4 1.1-7.3 1.7-7.3 2.1-7 2.8-6.7 3.3-6.3 3.9-5.8"/><path class="ai s1" d="M298 394.4l0.5-7.4 1.1-7.3 1.7-7.3 2.1-7 2.8-6.7 3.3-6.3 3.9-5.8"/><path d="M310.6 412.8l-0.5-6.5 0-6.6 0.4-6.7 1-6.8 1.6-6.6 2.1-6.4 2.7-6.1"/><path class="ai s3" d="M310.6 412.8l-0.5-6.5 0-6.6 0.4-6.7 1-6.8 1.6-6.6 2.1-6.4 2.7-6.1"/><path d="M341.4 512.1l-10-5.8 -9.5-7.2 -8.9-8.6 -8.2-9.7"/><path class="ai s5" d="M341.4 512.1l-10-5.8 -9.5-7.2 -8.9-8.6 -8.2-9.7"/><path d="M221.6 316.9l-1.4-4.7 -1.5-4 -1.8-3.4 -2-2.7 -2.2-2 -2.4-1.4 -2.7-0.7 -3 -0 -3.2 0.7 -3.4 1.3 -3.6 2 -3.8 2.7 -3.9 3.3"/><path class="ai s0" d="M221.6 316.9l-1.4-4.7 -1.5-4 -1.8-3.4 -2-2.7 -2.2-2 -2.4-1.4 -2.7-0.7 -3 -0 -3.2 0.7 -3.4 1.3 -3.6 2 -3.8 2.7 -3.9 3.3"/><path d="M268.5 312l2.9-10.2 3.3-9.3 3.6-8.5 3.9-7.5 4.1-6.6"/><path class="ai s0" d="M268.5 312l2.9-10.2 3.3-9.3 3.6-8.5 3.9-7.5 4.1-6.6"/><path d="M280.2 352.8l2.2-8.8 2.8-8.4 3.3-7.9 3.8-7.3 4.3-6.6 4.7-5.8"/><path class="ai s0" d="M280.2 352.8l2.2-8.8 2.8-8.4 3.3-7.9 3.8-7.3 4.3-6.6 4.7-5.8"/><path d="M322.6 490.1l-6.6-5.6 -6.1-6.6 -5.8-7.4 -5.3-8.2 -4.8-8.9"/><path class="ai s5" d="M322.6 490.1l-6.6-5.6 -6.1-6.6 -5.8-7.4 -5.3-8.2 -4.8-8.9"/><path d="M310.1 525l-8.2-6.5 -7.8-7.2 -7.2-7.9 -6.8-8.4 -6.2-8.9"/><path class="ai s5" d="M310.1 525l-8.2-6.5 -7.8-7.2 -7.2-7.9 -6.8-8.4 -6.2-8.9"/><path d="M293.1 294.7l6.6-12.5 7.6-10.9 8.4-9.1 9.1-7.2"/><path class="ai s0" d="M293.1 294.7l6.6-12.5 7.6-10.9 8.4-9.1 9.1-7.2"/><path d="M306.2 441l-2.2-5.7 -1.9-6 -1.7-6.5 -1.2-6.7 -0.9-7.1 -0.4-7.2 0.1-7.4"/><path class="ai s4" d="M306.2 441l-2.2-5.7 -1.9-6 -1.7-6.5 -1.2-6.7 -0.9-7.1 -0.4-7.2 0.1-7.4"/><path d="M324.3 405l0.2-6.4 0.7-6.4 1.3-6.4 2-6.1 2.7-5.9 3.3-5.3 4.1-4.8 4.6-3.9"/><path class="ai s2" d="M324.3 405l0.2-6.4 0.7-6.4 1.3-6.4 2-6.1 2.7-5.9 3.3-5.3 4.1-4.8 4.6-3.9"/><path d="M307.6 480.2l-4.8-5.6 -4.5-6.2 -4.3-6.9 -3.8-7.3 -3.5-7.9 -3.1-8.3"/><path class="ai s5" d="M307.6 480.2l-4.8-5.6 -4.5-6.2 -4.3-6.9 -3.8-7.3 -3.5-7.9 -3.1-8.3"/><path d="M279.9 349l2.4-8.9 2.9-8.4 3.5-7.8 4-7.3 4.4-6.5 4.9-5.7"/><path class="ai s0" d="M279.9 349l2.4-8.9 2.9-8.4 3.5-7.8 4-7.3 4.4-6.5 4.9-5.7"/><path d="M279.3 350.3l2.3-8.7 2.8-8.3 3.3-7.8 3.9-7.1 4.2-6.5 4.8-5.8"/><path class="ai s0" d="M279.3 350.3l2.3-8.7 2.8-8.3 3.3-7.8 3.9-7.1 4.2-6.5 4.8-5.8"/><path d="M170.7 335.1l-7 14.1 -6.4 16.1 -5.6 17.9"/><path class="ai s1" d="M170.7 335.1l-7 14.1 -6.4 16.1 -5.6 17.9"/><path d="M315.6 484.7l-5.5-5.4 -5.2-6.1 -4.8-6.9 -4.5-7.5 -4.1-8.1 -3.6-8.6"/><path class="ai s5" d="M315.6 484.7l-5.5-5.4 -5.2-6.1 -4.8-6.9 -4.5-7.5 -4.1-8.1 -3.6-8.6"/><path d="M142.8 435.2l-0.7 11.4 -0.4 11.6 0.1 11.8 0.6 11.9"/><path class="ai s2" d="M142.8 435.2l-0.7 11.4 -0.4 11.6 0.1 11.8 0.6 11.9"/><path d="M245.7 341.2l1.5-20 4.1-32.2"/><path class="ai s0" d="M245.7 341.2l1.5-20 4.1-32.2"/><path d="M318.1 372.9l2.9-7.8 3.6-7.3 4.5-6.6 5.4-5.7 6.1-4.5 6.9-3.3"/><path class="ai s1" d="M318.1 372.9l2.9-7.8 3.6-7.3 4.5-6.6 5.4-5.7 6.1-4.5 6.9-3.3"/><path d="M229 323.9l-1.6-11.7 -1-4.9 -1.1-4.3 -1.3-3.7 -1.5-3.1 -1.8-2.5 -2-1.8 -2.3-1.2 -2.5-0.6 -2.8 0 -3.1 0.5"/><path class="ai s0" d="M229 323.9l-1.6-11.7 -1-4.9 -1.1-4.3 -1.3-3.7 -1.5-3.1 -1.8-2.5 -2-1.8 -2.3-1.2 -2.5-0.6 -2.8 0 -3.1 0.5"/><path d="M330.1 437.8l-2.4-4.4 -2.2-5.1 -1.8-5.5 -1.3-5.9 -1-6.3 -0.4-6.5 0.2-6.7 0.8-6.7"/><path class="ai s4" d="M330.1 437.8l-2.4-4.4 -2.2-5.1 -1.8-5.5 -1.3-5.9 -1-6.3 -0.4-6.5 0.2-6.7 0.8-6.7"/><path d="M196 312.8l-3.2 1.9 -3.4 2.5 -3.4 3 -3.6 3.7 -3.5 4.3 -7.2 10.2 -7 12.7"/><path class="ai s1" d="M196 312.8l-3.2 1.9 -3.4 2.5 -3.4 3 -3.6 3.7 -3.5 4.3 -7.2 10.2 -7 12.7"/><path d="M311.8 489.7l-5.6-5.5 -5.2-6.1 -5-6.9 -4.6-7.4 -4.2-8 -3.8-8.4"/><path class="ai s5" d="M311.8 489.7l-5.6-5.5 -5.2-6.1 -5-6.9 -4.6-7.4 -4.2-8 -3.8-8.4"/><path d="M169.3 341l-6.6 14.5 -5.8 16.4 -5 17.9"/><path class="ai s1" d="M169.3 341l-6.6 14.5 -5.8 16.4 -5 17.9"/><path d="M323.8 537.2l-10.5-6.7 -9.8-7.8 -9.1-8.6 -8.4-9.3"/><path class="ai s5" d="M323.8 537.2l-10.5-6.7 -9.8-7.8 -9.1-8.6 -8.4-9.3"/><path d="M317.3 487.3l-5.6-5.2 -5.4-5.9 -5.1-6.8 -4.7-7.3 -4.3-8 -3.8-8.5"/><path class="ai s5" d="M317.3 487.3l-5.6-5.2 -5.4-5.9 -5.1-6.8 -4.7-7.3 -4.3-8 -3.8-8.5"/><path d="M137.1 446.2l-0.5 12.7 0 13.1 0.5 13.2 1.1 13.2"/><path class="ai s3" d="M137.1 446.2l-0.5 12.7 0 13.1 0.5 13.2 1.1 13.2"/><path d="M313.6 482.7l-5.1-5.2 -4.9-6 -4.6-6.7 -4.2-7.2 -3.9-7.8 -3.4-8.3"/><path class="ai s5" d="M313.6 482.7l-5.1-5.2 -4.9-6 -4.6-6.7 -4.2-7.2 -3.9-7.8 -3.4-8.3"/><path d="M282.8 343.8l2.8-9.2 3.5-8.5 4-7.9 4.5-7.2 5.1-6.3 5.5-5.4"/><path class="ai s0" d="M282.8 343.8l2.8-9.2 3.5-8.5 4-7.9 4.5-7.2 5.1-6.3 5.5-5.4"/><path d="M314 489.7l-5.6-5.3 -5.3-6 -5.1-6.8 -4.7-7.3 -4.3-8 -3.8-8.4"/><path class="ai s5" d="M314 489.7l-5.6-5.3 -5.3-6 -5.1-6.8 -4.7-7.3 -4.3-8 -3.8-8.4"/><path d="M289.8 361.5l2.3-8.2 2.8-7.8 3.5-7.3 4.1-6.8 4.6-6 5.1-5.3"/><path class="ai s0" d="M289.8 361.5l2.3-8.2 2.8-7.8 3.5-7.3 4.1-6.8 4.6-6 5.1-5.3"/><path d="M354 484.5l-7.7-3.4 -7.6-4.9 -7.1-6.3 -6.6-7.5 -6-8.6"/><path class="ai s5" d="M354 484.5l-7.7-3.4 -7.6-4.9 -7.1-6.3 -6.6-7.5 -6-8.6"/><path d="M186.7 308l-4 4 -4 4.7 -4.1 5.4 -4.1 6 -4 6.7 -3.9 7.3 -3.7 8"/><path class="ai s1" d="M186.7 308l-4 4 -4 4.7 -4.1 5.4 -4.1 6 -4 6.7 -3.9 7.3 -3.7 8"/><path d="M173.7 323.1l-4 6.6 -3.9 7.1 -3.7 7.7 -3.6 8.3 -3.4 8.8 -3.1 9.3"/><path class="ai s1" d="M173.7 323.1l-4 6.6 -3.9 7.1 -3.7 7.7 -3.6 8.3 -3.4 8.8 -3.1 9.3"/><path d="M262.8 398l0.4-17 1.2-11.4 0.9-5.7 2.4-11.1"/><path class="ai s2" d="M262.8 398l0.4-17 1.2-11.4 0.9-5.7 2.4-11.1"/><path d="M321.2 328.3l7.2-9.3 8.4-7.6 9.5-5.6 10.6-3.4"/><path class="ai s1" d="M321.2 328.3l7.2-9.3 8.4-7.6 9.5-5.6 10.6-3.4"/><path d="M315 485.8l-5.4-5.2 -5.1-5.9 -4.8-6.6 -4.5-7.2 -4.1-7.8 -3.6-8.4"/><path class="ai s5" d="M315 485.8l-5.4-5.2 -5.1-5.9 -4.8-6.6 -4.5-7.2 -4.1-7.8 -3.6-8.4"/><path d="M322 390.7l1.4-6.6 2-6.4 2.8-6.1 3.4-5.5 4.1-5 4.7-4.1 5.3-3.3"/><path class="ai s2" d="M322 390.7l1.4-6.6 2-6.4 2.8-6.1 3.4-5.5 4.1-5 4.7-4.1 5.3-3.3"/><path d="M144.5 440.9l-0.5 11 -0.1 11.3 0.3 11.3 0.8 11.5"/><path class="ai s2" d="M144.5 440.9l-0.5 11 -0.1 11.3 0.3 11.3 0.8 11.5"/><path d="M349.3 326.2l10.5-8 12.1-5 13.7-1.6 14.6 2.4"/><path class="ai s3" d="M349.3 326.2l10.5-8 12.1-5 13.7-1.6 14.6 2.4"/><path d="M317.7 420.8l-0.9-5.4 -0.6-5.6 -0.2-5.9 0.3-6 0.8-6 1.2-6 1.9-5.9 2.3-5.7"/><path class="ai s3" d="M317.7 420.8l-0.9-5.4 -0.6-5.6 -0.2-5.9 0.3-6 0.8-6 1.2-6 1.9-5.9 2.3-5.7"/><path d="M165.7 384.1l-3.2 14.3 -2.5 15.1 -1.8 15.8"/><path class="ai s1" d="M165.7 384.1l-3.2 14.3 -2.5 15.1 -1.8 15.8"/><path d="M281.7 348.4l2.5-8.5 3.1-8 3.5-7.5 4.1-6.8 4.5-6.2 5-5.3"/><path class="ai s0" d="M281.7 348.4l2.5-8.5 3.1-8 3.5-7.5 4.1-6.8 4.5-6.2 5-5.3"/><path d="M281.8 346.2l2.6-8.6 3.2-8.2 3.7-7.6 4.2-6.9 4.7-6.1 5.2-5.4"/><path class="ai s0" d="M281.8 346.2l2.6-8.6 3.2-8.2 3.7-7.6 4.2-6.9 4.7-6.1 5.2-5.4"/><path d="M178.8 382.8l-4 14.5 -3.2 15.6 -1.7 11.1 -1.3 11.6"/><path class="ai s1" d="M178.8 382.8l-4 14.5 -3.2 15.6 -1.7 11.1 -1.3 11.6"/><path d="M306.9 336.9l5.1-9.5 6.2-8.4 7-7.2 8-5.6 8.7-4"/><path class="ai s1" d="M306.9 336.9l5.1-9.5 6.2-8.4 7-7.2 8-5.6 8.7-4"/><path d="M308.9 338.6l5.1-9.4 6.2-8.2 7.1-6.9 8-5.5 8.8-3.7"/><path class="ai s1" d="M308.9 338.6l5.1-9.4 6.2-8.2 7.1-6.9 8-5.5 8.8-3.7"/><path d="M372.6 472.9l-7.3-0.7 -7.4-2.4 -7.1-4.1 -6.8-5.6 -6.3-7 -5.7-8.3"/><path class="ai s5" d="M372.6 472.9l-7.3-0.7 -7.4-2.4 -7.1-4.1 -6.8-5.6 -6.3-7 -5.7-8.3"/><path d="M312.6 474.8l-4.5-5.1 -4.2-5.7 -4-6.4 -3.6-6.9 -3.3-7.4 -2.9-7.9"/><path class="ai s5" d="M312.6 474.8l-4.5-5.1 -4.2-5.7 -4-6.4 -3.6-6.9 -3.3-7.4 -2.9-7.9"/><path d="M312.2 405.9l0.1-6.1 0.5-6.1 1.1-6.2 1.5-6 2.1-5.9 2.6-5.6 3.2-5.2 3.8-4.7"/><path class="ai s2" d="M312.2 405.9l0.1-6.1 0.5-6.1 1.1-6.2 1.5-6 2.1-5.9 2.6-5.6 3.2-5.2 3.8-4.7"/><path d="M279.1 347.1l2.4-8.3 2.9-7.8 3.4-7.2 3.8-6.7 4.2-6.1 4.6-5.3"/><path class="ai s0" d="M279.1 347.1l2.4-8.3 2.9-7.8 3.4-7.2 3.8-6.7 4.2-6.1 4.6-5.3"/><path d="M318 489.1l-5.7-4.9 -5.4-5.7 -5.1-6.5 -4.8-7.1 -4.3-7.8 -4-8.2"/><path class="ai s5" d="M318 489.1l-5.7-4.9 -5.4-5.7 -5.1-6.5 -4.8-7.1 -4.3-7.8 -4-8.2"/><path d="M166.3 446.9l-0.8 19.4 0.4 13.6 1.3 13.9"/><path class="ai s3" d="M166.3 446.9l-0.8 19.4 0.4 13.6 1.3 13.9"/><path d="M141 457l-0.1 12 0.3 12.1 0.8 12.2 1.4 12.3"/><path class="ai s3" d="M141 457l-0.1 12 0.3 12.1 0.8 12.2 1.4 12.3"/><path d="M309.4 403.7l0.3-6.1 0.7-6.2 1.2-6.1 1.6-6 2.2-5.9 2.7-5.5 3.3-5.2 3.8-4.6"/><path class="ai s2" d="M309.4 403.7l0.3-6.1 0.7-6.2 1.2-6.1 1.6-6 2.2-5.9 2.7-5.5 3.3-5.2 3.8-4.6"/><path d="M317.5 486.5l-5.4-4.9 -5.2-5.6 -4.9-6.4 -4.5-7 -4.2-7.6 -3.8-8.1"/><path class="ai s5" d="M317.5 486.5l-5.4-4.9 -5.2-5.6 -4.9-6.4 -4.5-7 -4.2-7.6 -3.8-8.1"/><path d="M228.8 326.8l-1.6-10.7 -2-8.5 -1.2-3.4 -1.4-2.9 -1.6-2.3 -1.9-1.8 -2-1.2 -2.3-0.7 -2.6-0.2 -2.7 0.4 -3 0.9 -3.1 1.5"/><path class="ai s0" d="M228.8 326.8l-1.6-10.7 -2-8.5 -1.2-3.4 -1.4-2.9 -1.6-2.3 -1.9-1.8 -2-1.2 -2.3-0.7 -2.6-0.2 -2.7 0.4 -3 0.9 -3.1 1.5"/><path d="M336.9 347l6.6-7.6 7.8-6 9-4 9.9-1.8 10.5 0.7"/><path class="ai s2" d="M336.9 347l6.6-7.6 7.8-6 9-4 9.9-1.8 10.5 0.7"/><path d="M200.8 350.1l-4.7 6 -3.3 4.6 -6.5 11.2 -3.2 6.7 -3.2 7.4 -4.5 12.5"/><path class="ai s1" d="M200.8 350.1l-4.7 6 -3.3 4.6 -6.5 11.2 -3.2 6.7 -3.2 7.4 -4.5 12.5"/><path d="M302.8 354.6l3.5-8.4 4.3-7.7 5-7 5.7-5.9 6.5-4.9 7-3.7"/><path class="ai s1" d="M302.8 354.6l3.5-8.4 4.3-7.7 5-7 5.7-5.9 6.5-4.9 7-3.7"/><path d="M336.9 477.5l-5.7-3.8 -5.5-4.7 -5.3-5.7 -4.9-6.6 -4.4-7.3 -3.9-8.1"/><path class="ai s5" d="M336.9 477.5l-5.7-3.8 -5.5-4.7 -5.3-5.7 -4.9-6.6 -4.4-7.3 -3.9-8.1"/><path d="M320.3 472l-4.3-4.3 -4.2-5 -4-5.7 -3.6-6.3 -3.3-6.9 -3-7.4 -2.4-7.8"/><path class="ai s5" d="M320.3 472l-4.3-4.3 -4.2-5 -4-5.7 -3.6-6.3 -3.3-6.9 -3-7.4 -2.4-7.8"/><path d="M389 482l-9.4 0.9 -9.5-1.5 -9.5-3.7 -9.2-5.9 -8.5-7.7"/><path class="ai s5" d="M389 482l-9.4 0.9 -9.5-1.5 -9.5-3.7 -9.2-5.9 -8.5-7.7"/><path d="M343.8 460.4l-4.5-2.8 -4.4-3.8 -4.1-4.6 -3.8-5.5 -3.4-6.2 -3-7 -2.4-7.5"/><path class="ai s5" d="M343.8 460.4l-4.5-2.8 -4.4-3.8 -4.1-4.6 -3.8-5.5 -3.4-6.2 -3-7 -2.4-7.5"/><path d="M158.2 429.3l-0.9 16.3 0 16.8 0.4 8.5 1.5 17"/><path class="ai s2" d="M158.2 429.3l-0.9 16.3 0 16.8 0.4 8.5 1.5 17"/><path d="M330 421.8l-1-4.2 -0.7-4.5 -0.3-4.8 0-5 0.6-5.1 0.9-5.2 1.5-5 2-4.8 2.6-4.6 3-4.1"/><path class="ai s3" d="M330 421.8l-1-4.2 -0.7-4.5 -0.3-4.8 0-5 0.6-5.1 0.9-5.2 1.5-5 2-4.8 2.6-4.6 3-4.1"/><path d="M375.9 524l-13.6-2.7 -13.2-5.2 -12.5-7.5 -11.6-9.5"/><path class="ai s5" d="M375.9 524l-13.6-2.7 -13.2-5.2 -12.5-7.5 -11.6-9.5"/><path d="M168.6 435.6l-0.8 12.1 -0.1 18.8 0.7 12.9 1.5 13.1"/><path class="ai s3" d="M168.6 435.6l-0.8 12.1 -0.1 18.8 0.7 12.9 1.5 13.1"/><path d="M419.4 469.5l-9.4 6.2 -10.4 3 -11.1-0.1 -11.2-3.2 -10.7-6.1"/><path class="ai s4" d="M419.4 469.5l-9.4 6.2 -10.4 3 -11.1-0.1 -11.2-3.2 -10.7-6.1"/><path d="M392.6 446.1l-4.4 3.5 -5 2 -5.5 0.6 -5.6-1.1 -5.7-2.5 -5.5-4.1 -5-5.4 -4.5-6.6"/><path class="ai s5" d="M392.6 446.1l-4.4 3.5 -5 2 -5.5 0.6 -5.6-1.1 -5.7-2.5 -5.5-4.1 -5-5.4 -4.5-6.6"/><path d="M276.1 399.3l0.7-11.1 0.7-5.7 2.1-11.2 1.4-5.6 3.8-10.8"/><path class="ai s2" d="M276.1 399.3l0.7-11.1 0.7-5.7 2.1-11.2 1.4-5.6 3.8-10.8"/><path d="M313.1 525.3l-7.8-5.7 -7.5-6.4 -7-7 -6.6-7.6 -6.2-8.2"/><path class="ai s5" d="M313.1 525.3l-7.8-5.7 -7.5-6.4 -7-7 -6.6-7.6 -6.2-8.2"/><path d="M272.1 351.3l1.7-7.3 2.2-7 2.5-6.7 2.8-6.2 3.2-5.8 3.4-5.3 3.6-4.8"/><path class="ai s0" d="M272.1 351.3l1.7-7.3 2.2-7 2.5-6.7 2.8-6.2 3.2-5.8 3.4-5.3 3.6-4.8"/><path d="M267.1 332.3l2.1-8.2 2.4-7.7 2.7-7.2 3-6.5 3.2-6 3.4-5.4 3.6-4.7"/><path class="ai s0" d="M267.1 332.3l2.1-8.2 2.4-7.7 2.7-7.2 3-6.5 3.2-6 3.4-5.4 3.6-4.7"/><path d="M317.1 486.6l-5.2-4.6 -5-5.3 -4.7-6 -4.5-6.6 -4.1-7.2 -3.7-7.8"/><path class="ai s5" d="M317.1 486.6l-5.2-4.6 -5-5.3 -4.7-6 -4.5-6.6 -4.1-7.2 -3.7-7.8"/><path d="M389.8 482.8l-9.4 1.2 -9.6-1.1 -9.6-3.5 -9.2-5.5 -8.7-7.5"/><path class="ai s5" d="M389.8 482.8l-9.4 1.2 -9.6-1.1 -9.6-3.5 -9.2-5.5 -8.7-7.5"/><path d="M290.2 320.1l4.5-9.4 5.3-8.3 5.9-7.3 6.4-6.2 6.9-4.9"/><path class="ai s0" d="M290.2 320.1l4.5-9.4 5.3-8.3 5.9-7.3 6.4-6.2 6.9-4.9"/><path d="M279.4 331.1l3.1-8.5 3.6-8 4-7.2 4.5-6.5 4.9-5.7 5.1-4.8"/><path class="ai s0" d="M279.4 331.1l3.1-8.5 3.6-8 4-7.2 4.5-6.5 4.9-5.7 5.1-4.8"/><path d="M383.4 467.4l-6.9 1.2 -7.2-0.5 -7.3-2.3 -7-4 -6.8-5.6 -6.2-7"/><path class="ai s5" d="M383.4 467.4l-6.9 1.2 -7.2-0.5 -7.3-2.3 -7-4 -6.8-5.6 -6.2-7"/><path d="M273.2 422.3l-1.1-14.1 0-10.3 0.6-10.7 0.7-5.4 1.9-10.9"/><path class="ai s3" d="M273.2 422.3l-1.1-14.1 0-10.3 0.6-10.7 0.7-5.4 1.9-10.9"/><path d="M322.6 491.6l-5.8-4.4 -5.6-5.2 -5.3-5.9 -5-6.7 -4.7-7.3 -4.2-7.9"/><path class="ai s5" d="M322.6 491.6l-5.8-4.4 -5.6-5.2 -5.3-5.9 -5-6.7 -4.7-7.3 -4.2-7.9"/><path d="M300.8 374.7l2.1-6.9 2.5-6.5 3.1-6.2 3.7-5.8 4.2-5.1 4.8-4.5 5.2-3.7"/><path class="ai s1" d="M300.8 374.7l2.1-6.9 2.5-6.5 3.1-6.2 3.7-5.8 4.2-5.1 4.8-4.5 5.2-3.7"/><path d="M282 334.8l3.1-8.4 3.6-7.7 4.2-7.1 4.6-6.4 4.9-5.5 5.4-4.7"/><path class="ai s0" d="M282 334.8l3.1-8.4 3.6-7.7 4.2-7.1 4.6-6.4 4.9-5.5 5.4-4.7"/><path d="M321.8 501.5l-6.4-4.4 -6.1-5.3 -5.8-6 -5.6-6.7 -5.1-7.4 -4.8-7.9"/><path class="ai s5" d="M321.8 501.5l-6.4-4.4 -6.1-5.3 -5.8-6 -5.6-6.7 -5.1-7.4 -4.8-7.9"/><path d="M341.5 445.5l-2.8-2.2 -2.8-2.9 -2.6-3.5 -2.4-4.1 -2.1-4.7 -1.7-5.2 -1.4-5.6 -0.9-6 -0.5-6.3"/><path class="ai s5" d="M341.5 445.5l-2.8-2.2 -2.8-2.9 -2.6-3.5 -2.4-4.1 -2.1-4.7 -1.7-5.2 -1.4-5.6 -0.9-6 -0.5-6.3"/><path d="M293.9 324.6l4.7-8.7 5.3-7.8 5.9-6.8 6.6-5.6 7-4.4"/><path class="ai s0" d="M293.9 324.6l4.7-8.7 5.3-7.8 5.9-6.8 6.6-5.6 7-4.4"/><path d="M287 339.7l3.3-8 3.8-7.4 4.3-6.7 4.8-6 5.3-5.2 5.7-4.2"/><path class="ai s0" d="M287 339.7l3.3-8 3.8-7.4 4.3-6.7 4.8-6 5.3-5.2 5.7-4.2"/><path d="M333.4 340.5l6.9-7.3 8.1-5.6 9.1-3.7 9.9-1.5 10.6 0.9"/><path class="ai s2" d="M333.4 340.5l6.9-7.3 8.1-5.6 9.1-3.7 9.9-1.5 10.6 0.9"/><path d="M305.8 346.1l4.3-8.1 5-7.3 5.8-6.3 6.6-5.1 7.2-4 7.7-2.5"/><path class="ai s1" d="M305.8 346.1l4.3-8.1 5-7.3 5.8-6.3 6.6-5.1 7.2-4 7.7-2.5"/><path d="M280.7 350.7l2.4-7.4 2.7-7 3.2-6.5 3.6-6.1 4-5.5 4.4-4.9 4.6-4.2"/><path class="ai s0" d="M280.7 350.7l2.4-7.4 2.7-7 3.2-6.5 3.6-6.1 4-5.5 4.4-4.9 4.6-4.2"/><path d="M289.8 330.1l4-8.8 4.7-8 5.2-7.2 5.9-6.1 6.3-5.1 6.8-3.9"/><path class="ai s0" d="M289.8 330.1l4-8.8 4.7-8 5.2-7.2 5.9-6.1 6.3-5.1 6.8-3.9"/><path d="M231.2 321.1l-1.2-9.8 -1.7-7.8 -1.1-3.1 -1.2-2.6 -1.5-2.1 -1.7-1.7 -2-1.1 -2.1-0.6 -2.4-0.2 -2.6 0.4 -2.8 0.8 -3 1.3 -3.2 1.8"/><path class="ai s0" d="M231.2 321.1l-1.2-9.8 -1.7-7.8 -1.1-3.1 -1.2-2.6 -1.5-2.1 -1.7-1.7 -2-1.1 -2.1-0.6 -2.4-0.2 -2.6 0.4 -2.8 0.8 -3 1.3 -3.2 1.8"/><path d="M334.8 323l8.8-7.4 10-5.3 11.2-2.8 12-0.1"/><path class="ai s2" d="M334.8 323l8.8-7.4 10-5.3 11.2-2.8 12-0.1"/><path d="M287.1 330l3.7-8.6 4.4-7.8 4.9-7 5.4-6.1 5.8-5.2 6.3-4.1"/><path class="ai s0" d="M287.1 330l3.7-8.6 4.4-7.8 4.9-7 5.4-6.1 5.8-5.2 6.3-4.1"/><path d="M294.6 318.5l5-9 5.7-8 6.4-6.8 7-5.5 7.4-4.3"/><path class="ai s0" d="M294.6 318.5l5-9 5.7-8 6.4-6.8 7-5.5 7.4-4.3"/><path d="M314 304.4l8.1-9.5 9.2-7.7 10.3-5.7 11-3.3"/><path class="ai s1" d="M314 304.4l8.1-9.5 9.2-7.7 10.3-5.7 11-3.3"/><path d="M319 506.8l-6.4-4.4 -6.2-5.2 -5.9-5.9 -5.6-6.6 -5.2-7.2 -4.9-7.7"/><path class="ai s5" d="M319 506.8l-6.4-4.4 -6.2-5.2 -5.9-5.9 -5.6-6.6 -5.2-7.2 -4.9-7.7"/><path d="M203.4 297.9l-3.3 1.9 -3.5 2.6 -7.2 6.6 -7.5 8.9 -3.8 5.2 -7.4 12"/><path class="ai s1" d="M203.4 297.9l-3.3 1.9 -3.5 2.6 -7.2 6.6 -7.5 8.9 -3.8 5.2 -7.4 12"/><path d="M290.8 297.1l5.8-10.6 6.5-9.3 7.2-7.8 7.6-6.3 8-4.8"/><path class="ai s0" d="M290.8 297.1l5.8-10.6 6.5-9.3 7.2-7.8 7.6-6.3 8-4.8"/><path d="M291.7 296.7l5.9-10.8 6.8-9.3 7.3-7.9 7.9-6.2 8.3-4.7"/><path class="ai s0" d="M291.7 296.7l5.9-10.8 6.8-9.3 7.3-7.9 7.9-6.2 8.3-4.7"/><path d="M329.3 398.6l1-4.7 1.5-4.6 1.9-4.5 2.4-4.2 2.9-3.8 3.3-3.4 3.9-2.8 4.2-2.1 4.6-1.3 4.9-0.4"/><path class="ai s2" d="M329.3 398.6l1-4.7 1.5-4.6 1.9-4.5 2.4-4.2 2.9-3.8 3.3-3.4 3.9-2.8 4.2-2.1 4.6-1.3 4.9-0.4"/><path d="M184.2 335.1l-5.3 11 -4.9 11.8 -4.4 12.7 -3.9 13.5"/><path class="ai s0" d="M184.2 335.1l-5.3 11 -4.9 11.8 -4.4 12.7 -3.9 13.5"/><path d="M265.2 323.9l2.1-7.3 2.3-6.9 2.5-6.3 2.7-5.8 5.8-9.9 5.9-7.6"/><path class="ai s0" d="M265.2 323.9l2.1-7.3 2.3-6.9 2.5-6.3 2.7-5.8 5.8-9.9 5.9-7.6"/><path d="M387.8 487.1l-9.4 1.4 -9.6-0.8 -9.6-3.1 -9.3-5.1 -8.8-6.9"/><path class="ai s5" d="M387.8 487.1l-9.4 1.4 -9.6-0.8 -9.6-3.1 -9.3-5.1 -8.8-6.9"/><path d="M208 290.6l-3.3 1.2 -3.4 1.8 -3.7 2.4 -3.8 3 -4 3.7 -4 4.2 -4 4.8 -4.1 5.4 -4 6"/><path class="ai s1" d="M208 290.6l-3.3 1.2 -3.4 1.8 -3.7 2.4 -3.8 3 -4 3.7 -4 4.2 -4 4.8 -4.1 5.4 -4 6"/><path d="M365.8 455.1l-4.2 0.7 -4.4-0.3 -4.4-1.4 -4.5-2.5 -4.3-3.4 -4.1-4.5 -3.7-5.3 -3.3-6.1 -2.8-6.8"/><path class="ai s5" d="M365.8 455.1l-4.2 0.7 -4.4-0.3 -4.4-1.4 -4.5-2.5 -4.3-3.4 -4.1-4.5 -3.7-5.3 -3.3-6.1 -2.8-6.8"/><path d="M138.8 473.3l0.7 12.7 1.2 12.7 1.7 12.6 2.3 12.5"/><path class="ai s3" d="M138.8 473.3l0.7 12.7 1.2 12.7 1.7 12.6 2.3 12.5"/><path d="M269.2 328.6l2.3-7.4 2.6-6.9 2.9-6.4 3-5.8 3.3-5.3 3.5-4.7 3.5-4.1"/><path class="ai s0" d="M269.2 328.6l2.3-7.4 2.6-6.9 2.9-6.4 3-5.8 3.3-5.3 3.5-4.7 3.5-4.1"/><path d="M299.9 314.1l5.8-9.1 6.6-7.9 7.4-6.6 8-5 8.5-3.5"/><path class="ai s0" d="M299.9 314.1l5.8-9.1 6.6-7.9 7.4-6.6 8-5 8.5-3.5"/><path d="M279.1 416.6l-0.1-13 0.6-9.5 1.4-9.8 2.3-10 1.5-4.9"/><path class="ai s3" d="M279.1 416.6l-0.1-13 0.6-9.5 1.4-9.8 2.3-10 1.5-4.9"/><path d="M321.9 303.6l9.1-9.1 10.3-6.9 11.4-4.5 12.3-1.9"/><path class="ai s1" d="M321.9 303.6l9.1-9.1 10.3-6.9 11.4-4.5 12.3-1.9"/><path d="M364 455.7l-4.1 0.6 -4.3-0.4 -4.4-1.5 -4.4-2.4 -4.2-3.5 -4-4.4 -3.7-5.3 -3.3-6.1 -2.7-6.7"/><path class="ai s5" d="M364 455.7l-4.1 0.6 -4.3-0.4 -4.4-1.5 -4.4-2.4 -4.2-3.5 -4-4.4 -3.7-5.3 -3.3-6.1 -2.7-6.7"/><path d="M338.7 321.6l9.2-6.8 10.5-4.5 11.6-1.8 12.3 1"/><path class="ai s2" d="M338.7 321.6l9.2-6.8 10.5-4.5 11.6-1.8 12.3 1"/><path d="M328.5 494.3l-5.8-3.3 -5.6-4 -5.4-4.9 -5.2-5.7 -4.9-6.3 -4.6-7 -4.2-7.6"/><path class="ai s5" d="M328.5 494.3l-5.8-3.3 -5.6-4 -5.4-4.9 -5.2-5.7 -4.9-6.3 -4.6-7 -4.2-7.6"/><path d="M264.7 312.2l2.4-8.2 2.5-7.6 2.8-6.9 2.9-6.1 2.9-5.5 3-4.8 5.7-7.5"/><path class="ai s0" d="M264.7 312.2l2.4-8.2 2.5-7.6 2.8-6.9 2.9-6.1 2.9-5.5 3-4.8 5.7-7.5"/><path d="M272.7 456l-4.1-14.2 -2.8-12.9 -2-14.8 -1-16.1"/><path class="ai s4" d="M272.7 456l-4.1-14.2 -2.8-12.9 -2-14.8 -1-16.1"/><path d="M272.6 307.9l3.2-8.5 3.5-7.7 3.8-7 4-6.1 4-5.2 4.2-4.5"/><path class="ai s0" d="M272.6 307.9l3.2-8.5 3.5-7.7 3.8-7 4-6.1 4-5.2 4.2-4.5"/><path d="M281 283.9l4.9-10.6 5.5-9.3 5.7-8 5.9-6.6 5.9-5.4"/><path class="ai s0" d="M281 283.9l4.9-10.6 5.5-9.3 5.7-8 5.9-6.6 5.9-5.4"/><path d="M204.7 296.4l-6.7 5.1 -7.1 6.9 -7.4 9 -7.2 10.8 -7 12.8"/><path class="ai s1" d="M204.7 296.4l-6.7 5.1 -7.1 6.9 -7.4 9 -7.2 10.8 -7 12.8"/><path d="M327.4 493.6l-5.9-3.6 -5.7-4.4 -5.4-5.2 -5.2-5.9 -4.8-6.7 -4.6-7.3"/><path class="ai s5" d="M327.4 493.6l-5.9-3.6 -5.7-4.4 -5.4-5.2 -5.2-5.9 -4.8-6.7 -4.6-7.3"/><path d="M355 518.9l-10.4-3.2 -10.1-4.8 -9.6-6.4 -9-7.7"/><path class="ai s5" d="M355 518.9l-10.4-3.2 -10.1-4.8 -9.6-6.4 -9-7.7"/><path d="M329.2 452.9l-2.8-2.4 -2.7-3 -2.5-3.5 -2.5-4 -2.2-4.6 -1.9-5.1 -1.7-5.5 -1.3-5.8 -1-6.2"/><path class="ai s5" d="M329.2 452.9l-2.8-2.4 -2.7-3 -2.5-3.5 -2.5-4 -2.2-4.6 -1.9-5.1 -1.7-5.5 -1.3-5.8 -1-6.2"/><path d="M313.1 300.8l8.1-9 9.1-7.2 9.9-5.2 10.7-3"/><path class="ai s1" d="M313.1 300.8l8.1-9 9.1-7.2 9.9-5.2 10.7-3"/><path d="M395.7 533.9l-16.5-0.7 -16.1-4.2 -15.3-7.2"/><path class="ai s5" d="M395.7 533.9l-16.5-0.7 -16.1-4.2 -15.3-7.2"/><path d="M328.6 509l-6.9-3.7 -6.7-4.5 -6.5-5.4 -6.1-6.2 -5.7-6.9 -5.4-7.6"/><path class="ai s5" d="M328.6 509l-6.9-3.7 -6.7-4.5 -6.5-5.4 -6.1-6.2 -5.7-6.9 -5.4-7.6"/><path d="M279.3 330.9l3.1-7.7 3.4-7.2 3.9-6.5 4.2-5.9 4.5-5.1 4.8-4.4 5-3.6"/><path class="ai s0" d="M279.3 330.9l3.1-7.7 3.4-7.2 3.9-6.5 4.2-5.9 4.5-5.1 4.8-4.4 5-3.6"/><path d="M397.4 504l-12.3 1.7 -12.5-1.2 -12.3-4 -11.8-6.5"/><path class="ai s5" d="M397.4 504l-12.3 1.7 -12.5-1.2 -12.3-4 -11.8-6.5"/><path d="M383.7 525.3l-13.6-0.9 -13.4-3.5 -12.8-5.9 -12-8"/><path class="ai s5" d="M383.7 525.3l-13.6-0.9 -13.4-3.5 -12.8-5.9 -12-8"/><path d="M334.6 490.6l-6-2.9 -5.8-3.9 -5.6-4.8 -5.3-5.6 -5.1-6.5 -4.7-7.1"/><path class="ai s5" d="M334.6 490.6l-6-2.9 -5.8-3.9 -5.6-4.8 -5.3-5.6 -5.1-6.5 -4.7-7.1"/><path d="M286.1 322l3.9-8 4.5-7.4 4.9-6.4 5.3-5.6 5.8-4.7 6-3.6"/><path class="ai s0" d="M286.1 322l3.9-8 4.5-7.4 4.9-6.4 5.3-5.6 5.8-4.7 6-3.6"/><path d="M282 444.4l-1.9-7.2 -1.7-8.2 -1.8-14 -0.5-10.4 0-5.3"/><path class="ai s4" d="M282 444.4l-1.9-7.2 -1.7-8.2 -1.8-14 -0.5-10.4 0-5.3"/><path d="M142.4 481.9l1 12 1.5 12 2 11.9 2.5 11.6"/><path class="ai s3" d="M142.4 481.9l1 12 1.5 12 2 11.9 2.5 11.6"/><path d="M329.3 495.2l-5.9-3.3 -5.8-4.1 -5.6-5 -5.3-5.7 -5-6.5 -4.6-7.1"/><path class="ai s5" d="M329.3 495.2l-5.9-3.3 -5.8-4.1 -5.6-5 -5.3-5.7 -5-6.5 -4.6-7.1"/><path d="M348.5 523l-9.7-3.1 -9.4-4.6 -9-5.8 -8.5-7 -8-7.9"/><path class="ai s5" d="M348.5 523l-9.7-3.1 -9.4-4.6 -9-5.8 -8.5-7 -8-7.9"/><path d="M341 335.8l8-5.9 9-3.9 9.9-1.8 10.6 0.7 10.9 3.3"/><path class="ai s3" d="M341 335.8l8-5.9 9-3.9 9.9-1.8 10.6 0.7 10.9 3.3"/><path d="M332.6 496.3l-6-2.8 -5.8-3.7 -5.7-4.5 -5.4-5.3 -5.2-6.1 -4.9-6.8 -4.4-7.4"/><path class="ai s5" d="M332.6 496.3l-6-2.8 -5.8-3.7 -5.7-4.5 -5.4-5.3 -5.2-6.1 -4.9-6.8 -4.4-7.4"/><path d="M405.1 499l-12.1 3.1 -12.6 0.1 -12.6-3 -12.2-5.7"/><path class="ai s5" d="M405.1 499l-12.1 3.1 -12.6 0.1 -12.6-3 -12.2-5.7"/><path d="M326 450.2l-2.2-2 -2.3-2.5 -4.2-6.5 -1.9-4 -3.1-9.2 -1.2-5.1 -0.9-5.5 -0.6-5.8 -0.2-5.9"/><path class="ai s5" d="M326 450.2l-2.2-2 -2.3-2.5 -4.2-6.5 -1.9-4 -3.1-9.2 -1.2-5.1 -0.9-5.5 -0.6-5.8 -0.2-5.9"/><path d="M327 498.8l-6-3.4 -5.8-4.2 -5.6-5 -5.4-5.7 -5.1-6.4 -4.7-7.1"/><path class="ai s5" d="M327 498.8l-6-3.4 -5.8-4.2 -5.6-5 -5.4-5.7 -5.1-6.4 -4.7-7.1"/><path d="M313.2 516l-6.2-4.2 -6-4.8 -5.7-5.4 -5.4-5.9 -5.2-6.5 -4.9-6.9"/><path class="ai s5" d="M313.2 516l-6.2-4.2 -6-4.8 -5.7-5.4 -5.4-5.9 -5.2-6.5 -4.9-6.9"/><path d="M274.8 323.1l2.9-7.5 3.2-6.9 3.6-6.4 3.8-5.6 4-5 4.2-4.3 4.3-3.6"/><path class="ai s0" d="M274.8 323.1l2.9-7.5 3.2-6.9 3.6-6.4 3.8-5.6 4-5 4.2-4.3 4.3-3.6"/><path d="M345.2 504.1l-7.6-2.5 -7.4-3.5 -7.1-4.7 -6.9-5.8 -6.5-6.7 -6-7.5"/><path class="ai s5" d="M345.2 504.1l-7.6-2.5 -7.4-3.5 -7.1-4.7 -6.9-5.8 -6.5-6.7 -6-7.5"/><path d="M305.2 486.6l-3.8-3.7 -3.7-4.2 -3.6-4.6 -3.4-5.1 -3.3-5.5 -3.1-6 -5.5-13"/><path class="ai s5" d="M305.2 486.6l-3.8-3.7 -3.7-4.2 -3.6-4.6 -3.4-5.1 -3.3-5.5 -3.1-6 -5.5-13"/><path d="M322.5 374.3l3-5.2 3.5-4.8 4-4.3 4.6-3.5 5.1-2.7 5.5-1.8 6-0.7 6.2 0.4"/><path class="ai s2" d="M322.5 374.3l3-5.2 3.5-4.8 4-4.3 4.6-3.5 5.1-2.7 5.5-1.8 6-0.7 6.2 0.4"/><path d="M275.3 370.9l2.8-10.8 3.9-10.2 4.9-9.5 2.8-4.4 3.1-4 3.3-3.7"/><path class="ai s1" d="M275.3 370.9l2.8-10.8 3.9-10.2 4.9-9.5 2.8-4.4 3.1-4 3.3-3.7"/><path d="M199.7 334.7l-5.9 10.7 -5.4 11.5 -5.1 12.4 -4.5 13.5"/><path class="ai s0" d="M199.7 334.7l-5.9 10.7 -5.4 11.5 -5.1 12.4 -4.5 13.5"/><path d="M363.8 458l-4.1 1 -4.4 0 -4.4-1 -4.5-2 -4.4-3.1 -4.2-3.9 -4-4.9 -3.6-5.7 -3.1-6.4"/><path class="ai s5" d="M363.8 458l-4.1 1 -4.4 0 -4.4-1 -4.5-2 -4.4-3.1 -4.2-3.9 -4-4.9 -3.6-5.7 -3.1-6.4"/><path d="M296.7 333.5l4.2-7.2 4.8-6.4 5.3-5.6 5.9-4.7 6.3-3.7 6.6-2.6"/><path class="ai s1" d="M296.7 333.5l4.2-7.2 4.8-6.4 5.3-5.6 5.9-4.7 6.3-3.7 6.6-2.6"/><path d="M330.2 450.1l-2.3-1.7 -2.4-2.2 -2.2-2.7 -2.2-3.2 -2-3.7 -1.8-4.2 -1.7-4.6 -1.3-5 -1.1-5.4 -0.7-5.6 -0.3-5.9"/><path class="ai s5" d="M330.2 450.1l-2.3-1.7 -2.4-2.2 -2.2-2.7 -2.2-3.2 -2-3.7 -1.8-4.2 -1.7-4.6 -1.3-5 -1.1-5.4 -0.7-5.6 -0.3-5.9"/><path d="M340.7 541.6l-10.8-4.4 -10.3-5.7 -9.7-6.8 -9.1-7.7"/><path class="ai s5" d="M340.7 541.6l-10.8-4.4 -10.3-5.7 -9.7-6.8 -9.1-7.7"/><path d="M313.7 484.6l-4-3.2 -3.8-3.7 -3.8-4.2 -3.6-4.7 -3.4-5.3 -3.3-5.7 -3-6.1 -2.8-6.6"/><path class="ai s5" d="M313.7 484.6l-4-3.2 -3.8-3.7 -3.8-4.2 -3.6-4.7 -3.4-5.3 -3.3-5.7 -3-6.1 -2.8-6.6"/><path d="M360 501.6l-8.3-1.1 -8.2-2.5 -8-3.9 -7.7-5.2 -7.4-6.4 -6.8-7.5"/><path class="ai s5" d="M360 501.6l-8.3-1.1 -8.2-2.5 -8-3.9 -7.7-5.2 -7.4-6.4 -6.8-7.5"/><path d="M145 486l1.2 11.4 1.6 11.4 2.2 11.3 2.6 11"/><path class="ai s3" d="M145 486l1.2 11.4 1.6 11.4 2.2 11.3 2.6 11"/><path d="M317.9 367.1l3.3-5.7 4-5.1 4.5-4.5 5-3.7 5.6-2.8 6-1.7 6.5-0.7 6.7 0.6"/><path class="ai s2" d="M317.9 367.1l3.3-5.7 4-5.1 4.5-4.5 5-3.7 5.6-2.8 6-1.7 6.5-0.7 6.7 0.6"/><path d="M267.7 352.8l3.2-10.5 1.9-5 4.4-9.3 2.5-4.2 5.4-7.6 2.9-3.3"/><path class="ai s0" d="M267.7 352.8l3.2-10.5 1.9-5 4.4-9.3 2.5-4.2 5.4-7.6 2.9-3.3"/><path d="M279.1 302.3l3.9-8.3 4.3-7.5 4.6-6.5 4.8-5.6 4.9-4.7 5-3.7"/><path class="ai s0" d="M279.1 302.3l3.9-8.3 4.3-7.5 4.6-6.5 4.8-5.6 4.9-4.7 5-3.7"/><path d="M330.9 540.9l-9.3-4.2 -8.9-5.2 -8.5-6 -8-6.8 -7.5-7.4"/><path class="ai s5" d="M330.9 540.9l-9.3-4.2 -8.9-5.2 -8.5-6 -8-6.8 -7.5-7.4"/><path d="M354.4 501.2l-7.8-1.3 -7.6-2.7 -7.5-3.9 -7.2-5.1 -6.9-6.2 -6.4-7.2"/><path class="ai s5" d="M354.4 501.2l-7.8-1.3 -7.6-2.7 -7.5-3.9 -7.2-5.1 -6.9-6.2 -6.4-7.2"/><path d="M287.3 328.7l3.7-7.4 4.2-6.7 4.6-6 5.1-5.2 5.4-4.4 5.7-3.5 5.9-2.5"/><path class="ai s0" d="M287.3 328.7l3.7-7.4 4.2-6.7 4.6-6 5.1-5.2 5.4-4.4 5.7-3.5 5.9-2.5"/><path d="M354.2 328.9l9.8-3.7 10.6-1.3 11.4 1.6 11.7 4.4"/><path class="ai s4" d="M354.2 328.9l9.8-3.7 10.6-1.3 11.4 1.6 11.7 4.4"/><path d="M361.4 522l-10.3-1.8 -10.2-3.4 -9.7-4.9 -9.3-6.4 -8.8-7.6"/><path class="ai s5" d="M361.4 522l-10.3-1.8 -10.2-3.4 -9.7-4.9 -9.3-6.4 -8.8-7.6"/><path d="M335.4 496.9l-6-2.3 -5.8-3.2 -5.7-4 -5.4-4.8 -5.3-5.6 -4.9-6.3 -4.6-6.9"/><path class="ai s5" d="M335.4 496.9l-6-2.3 -5.8-3.2 -5.7-4 -5.4-4.8 -5.3-5.6 -4.9-6.3 -4.6-6.9"/><path d="M372.1 349.2l8.7-1 9.2 1.4 9.5 3.9 9.4 6.5 8.7 8.9"/><path class="ai s5" d="M372.1 349.2l8.7-1 9.2 1.4 9.5 3.9 9.4 6.5 8.7 8.9"/><path d="M287.1 327.2l3.7-7.4 4.2-6.7 4.7-6 5-5.1 5.5-4.3 5.7-3.5 5.9-2.5"/><path class="ai s0" d="M287.1 327.2l3.7-7.4 4.2-6.7 4.7-6 5-5.1 5.5-4.3 5.7-3.5 5.9-2.5"/><path d="M338.2 328.2l8.3-5.8 9.4-3.8 10.2-1.6 10.9 0.8 11.2 3.5"/><path class="ai s3" d="M338.2 328.2l8.3-5.8 9.4-3.8 10.2-1.6 10.9 0.8 11.2 3.5"/><path d="M375.5 528.3l-12.6-1.1 -12.3-3.4 -11.8-5.4 -11.2-7.1"/><path class="ai s5" d="M375.5 528.3l-12.6-1.1 -12.3-3.4 -11.8-5.4 -11.2-7.1"/><path d="M401.5 460.2l-6.1 5.5 -6.9 3.7 -7.5 1.7 -7.8-0.3 -8-2.2 -7.8-4.2"/><path class="ai s4" d="M401.5 460.2l-6.1 5.5 -6.9 3.7 -7.5 1.7 -7.8-0.3 -8-2.2 -7.8-4.2"/><path d="M324.5 464.3l-2.9-1.9 -2.9-2.4 -2.8-2.9 -2.8-3.4 -2.6-3.9 -2.5-4.4 -2.3-5 -2.1-5.3 -1.8-5.8 -1.6-6.1"/><path class="ai s5" d="M324.5 464.3l-2.9-1.9 -2.9-2.4 -2.8-2.9 -2.8-3.4 -2.6-3.9 -2.5-4.4 -2.3-5 -2.1-5.3 -1.8-5.8 -1.6-6.1"/><path d="M313.2 347.6l4.5-6.2 5.1-5.4 5.8-4.5 6.4-3.3 6.9-2.3 7.3-0.9 7.6 0.5"/><path class="ai s2" d="M313.2 347.6l4.5-6.2 5.1-5.4 5.8-4.5 6.4-3.3 6.9-2.3 7.3-0.9 7.6 0.5"/><path d="M340.3 350.6l6.1-4.3 6.9-3 7.4-1.5 8 0.1 8.2 2 8.4 3.8"/><path class="ai s3" d="M340.3 350.6l6.1-4.3 6.9-3 7.4-1.5 8 0.1 8.2 2 8.4 3.8"/><path d="M345.1 505.9l-7.3-2 -7.2-3.1 -7-4.2 -6.8-5.2 -6.4-6.1 -6.1-6.9"/><path class="ai s5" d="M345.1 505.9l-7.3-2 -7.2-3.1 -7-4.2 -6.8-5.2 -6.4-6.1 -6.1-6.9"/><path d="M357.2 333.1l9.6-3.6 10.6-1 11.2 1.7 11.6 4.6 11.4 7.7"/><path class="ai s4" d="M357.2 333.1l9.6-3.6 10.6-1 11.2 1.7 11.6 4.6 11.4 7.7"/><path d="M167.2 493.8l0.9 7 2.7 14 3.6 13.6 4.7 13"/><path class="ai s4" d="M167.2 493.8l0.9 7 2.7 14 3.6 13.6 4.7 13"/><path d="M284.8 369.4l3.7-9.7 2.3-4.6 2.5-4.4 2.9-4.1 3.1-3.9 3.4-3.6 3.6-3.1 3.9-2.8"/><path class="ai s1" d="M284.8 369.4l3.7-9.7 2.3-4.6 2.5-4.4 2.9-4.1 3.1-3.9 3.4-3.6 3.6-3.1 3.9-2.8"/><path d="M404.2 453.5l-5.2 6.3 -6.3 4.5 -6.9 2.7 -7.5 0.6 -7.6-1.3 -7.7-3.2"/><path class="ai s3" d="M404.2 453.5l-5.2 6.3 -6.3 4.5 -6.9 2.7 -7.5 0.6 -7.6-1.3 -7.7-3.2"/><path d="M338.6 374.5l3.6-3.7 4.1-2.9 4.5-2.3 4.9-1.3 5.3-0.4 5.5 0.6 5.7 1.8 5.6 2.9 5.5 4.1"/><path class="ai s4" d="M338.6 374.5l3.6-3.7 4.1-2.9 4.5-2.3 4.9-1.3 5.3-0.4 5.5 0.6 5.7 1.8 5.6 2.9 5.5 4.1"/><path d="M371.3 344.6l9.2-0.9 9.8 1.6 10.1 4.2 9.8 6.9 9.3 9.5"/><path class="ai s5" d="M371.3 344.6l9.2-0.9 9.8 1.6 10.1 4.2 9.8 6.9 9.3 9.5"/><path d="M138.2 498.4l1.6 13.3 2.3 13.1 2.9 12.9 3.5 12.4"/><path class="ai s4" d="M138.2 498.4l1.6 13.3 2.3 13.1 2.9 12.9 3.5 12.4"/><path d="M354.5 480.5l-5.5 0 -5.5-1 -5.5-2 -5.4-3.1 -5.3-3.9 -5.1-4.9 -4.8-5.8 -4.4-6.6"/><path class="ai s5" d="M354.5 480.5l-5.5 0 -5.5-1 -5.5-2 -5.4-3.1 -5.3-3.9 -5.1-4.9 -4.8-5.8 -4.4-6.6"/><path d="M289.3 324.4l4-7.1 4.4-6.3 4.9-5.7 5.3-4.7 5.6-4 5.9-2.9 6.1-2"/><path class="ai s0" d="M289.3 324.4l4-7.1 4.4-6.3 4.9-5.7 5.3-4.7 5.6-4 5.9-2.9 6.1-2"/><path d="M368.7 454.6l-3.7 2.2 -4.1 1.2 -4.2 0.2 -4.4-0.8 -4.5-1.8 -4.3-2.9 -4.2-3.7 -4-4.7 -3.6-5.5"/><path class="ai s5" d="M368.7 454.6l-3.7 2.2 -4.1 1.2 -4.2 0.2 -4.4-0.8 -4.5-1.8 -4.3-2.9 -4.2-3.7 -4-4.7 -3.6-5.5"/><path d="M295.8 332.4l4.1-6.8 4.6-6 5.2-5.2 5.6-4.4 5.9-3.5 6.4-2.4 6.6-1.4"/><path class="ai s1" d="M295.8 332.4l4.1-6.8 4.6-6 5.2-5.2 5.6-4.4 5.9-3.5 6.4-2.4 6.6-1.4"/><path d="M414.1 500.3l-12.5 5.3 -13.1 1.9 -13.3-1.4 -13-4.3"/><path class="ai s4" d="M414.1 500.3l-12.5 5.3 -13.1 1.9 -13.3-1.4 -13-4.3"/><path d="M342.1 501.7l-6.6-2 -6.6-2.9 -6.4-3.9 -6.2-4.9 -5.9-5.7 -5.6-6.5"/><path class="ai s5" d="M342.1 501.7l-6.6-2 -6.6-2.9 -6.4-3.9 -6.2-4.9 -5.9-5.7 -5.6-6.5"/><path d="M393.1 469.7l-6.6 4.3 -7.3 2.5 -7.7 0.6 -7.9-1.2 -7.8-3 -7.6-4.8"/><path class="ai s4" d="M393.1 469.7l-6.6 4.3 -7.3 2.5 -7.7 0.6 -7.9-1.2 -7.8-3 -7.6-4.8"/><path d="M322 333.9l6.2-6.1 7-4.8 7.7-3.3 8.2-1.8 8.8-0.1 9.1 1.7"/><path class="ai s2" d="M322 333.9l6.2-6.1 7-4.8 7.7-3.3 8.2-1.8 8.8-0.1 9.1 1.7"/><path d="M344 471.7l-4.1-0.5 -4.2-1.3 -4.2-2 -4.1-2.8 -4-3.5 -3.9-4.3 -3.6-4.9 -3.4-5.6 -3.1-6.2"/><path class="ai s5" d="M344 471.7l-4.1-0.5 -4.2-1.3 -4.2-2 -4.1-2.8 -4-3.5 -3.9-4.3 -3.6-4.9 -3.4-5.6 -3.1-6.2"/><path d="M289.4 323.4l4-7.1 4.5-6.3 4.9-5.5 5.3-4.7 5.6-3.9 5.9-2.9 6.1-1.9"/><path class="ai s0" d="M289.4 323.4l4-7.1 4.5-6.3 4.9-5.5 5.3-4.7 5.6-3.9 5.9-2.9 6.1-1.9"/><path d="M299.1 323.2l4.9-6.7 5.3-5.8 5.9-4.9 6.3-3.9 6.7-2.7 7-1.7"/><path class="ai s1" d="M299.1 323.2l4.9-6.7 5.3-5.8 5.9-4.9 6.3-3.9 6.7-2.7 7-1.7"/><path d="M334.9 520.9l-7.4-2.8 -7.3-3.7 -7.1-4.6 -6.7-5.3 -6.5-6.1 -6.1-6.7"/><path class="ai s5" d="M334.9 520.9l-7.4-2.8 -7.3-3.7 -7.1-4.6 -6.7-5.3 -6.5-6.1 -6.1-6.7"/><path d="M353.6 502.2l-7.4-1 -7.4-2.2 -7.3-3.4 -7-4.6 -6.7-5.6 -6.3-6.5"/><path class="ai s5" d="M353.6 502.2l-7.4-1 -7.4-2.2 -7.3-3.4 -7-4.6 -6.7-5.6 -6.3-6.5"/><path d="M284.8 354.9l2.3-5.1 2.6-4.9 2.9-4.7 3.2-4.2 3.4-4 3.8-3.5 4-3 4.2-2.5 4.5-2"/><path class="ai s1" d="M284.8 354.9l2.3-5.1 2.6-4.9 2.9-4.7 3.2-4.2 3.4-4 3.8-3.5 4-3 4.2-2.5 4.5-2"/><path d="M331.8 508.7l-6.2-2.3 -6-3.2 -5.9-3.9 -5.7-4.6 -5.5-5.3 -5.2-6 -5-6.5"/><path class="ai s5" d="M331.8 508.7l-6.2-2.3 -6-3.2 -5.9-3.9 -5.7-4.6 -5.5-5.3 -5.2-6 -5-6.5"/><path d="M313.1 346.7l4.5-5.5 5.1-4.8 5.6-3.9 6.1-2.9 6.6-1.8 6.9-0.6 7.2 0.6"/><path class="ai s2" d="M313.1 346.7l4.5-5.5 5.1-4.8 5.6-3.9 6.1-2.9 6.6-1.8 6.9-0.6 7.2 0.6"/><path d="M159.2 487.9l2.7 16.9 3.9 16.5 2.4 7.9 2.8 7.7"/><path class="ai s4" d="M159.2 487.9l2.7 16.9 3.9 16.5 2.4 7.9 2.8 7.7"/><path d="M382.4 487.5l-7.8 2.5 -8.2 0.8 -8.4-1.1 -8.2-2.7 -8.1-4.3 -7.7-5.8"/><path class="ai s5" d="M382.4 487.5l-7.8 2.5 -8.2 0.8 -8.4-1.1 -8.2-2.7 -8.1-4.3 -7.7-5.8"/><path d="M337.2 488.1l-4.9-1.3 -4.9-2.1 -4.8-2.8 -4.8-3.6 -4.6-4.3 -4.4-5 -4.2-5.6 -3.9-6.3"/><path class="ai s5" d="M337.2 488.1l-4.9-1.3 -4.9-2.1 -4.8-2.8 -4.8-3.6 -4.6-4.3 -4.4-5 -4.2-5.6 -3.9-6.3"/><path d="M143.4 505.6l1.8 12.2 2.5 12 3 11.8 3.5 11.3"/><path class="ai s4" d="M143.4 505.6l1.8 12.2 2.5 12 3 11.8 3.5 11.3"/><path d="M169.9 492.5l2.2 13 1.5 6.4 3.5 12.5 2 6.1 4.8 11.4"/><path class="ai s4" d="M169.9 492.5l2.2 13 1.5 6.4 3.5 12.5 2 6.1 4.8 11.4"/><path d="M343.2 359.8l5.2-3.1 5.8-1.9 6.2-0.8 6.6 0.5 6.7 1.8 6.8 3.4 6.6 4.7"/><path class="ai s4" d="M343.2 359.8l5.2-3.1 5.8-1.9 6.2-0.8 6.6 0.5 6.7 1.8 6.8 3.4 6.6 4.7"/><path d="M382.2 485l-7.6 2.6 -7.9 0.9 -8-0.8 -8-2.5 -7.9-4 -7.5-5.6"/><path class="ai s5" d="M382.2 485l-7.6 2.6 -7.9 0.9 -8-0.8 -8-2.5 -7.9-4 -7.5-5.6"/><path d="M313.4 346.6l4.5-5.1 5-4.4 5.5-3.6 6-2.7 6.4-1.5 6.7-0.5 7 0.7"/><path class="ai s2" d="M313.4 346.6l4.5-5.1 5-4.4 5.5-3.6 6-2.7 6.4-1.5 6.7-0.5 7 0.7"/><path d="M424.1 519.6l-16.2 5.4 -16.7 1 -16.7-2.8"/><path class="ai s4" d="M424.1 519.6l-16.2 5.4 -16.7 1 -16.7-2.8"/><path d="M327.1 360.1l4.2-4.1 4.8-3.3 5.3-2.5 5.7-1.6 6-0.5 6.4 0.6 6.4 1.8 6.6 3.1"/><path class="ai s3" d="M327.1 360.1l4.2-4.1 4.8-3.3 5.3-2.5 5.7-1.6 6-0.5 6.4 0.6 6.4 1.8 6.6 3.1"/><path d="M239 322.6l-5 3.8 -7.8 4.1 -9.1 5.1 -4.9 3.5 -4 3.4 -7.4 7.6"/><path class="ai s1" d="M239 322.6l-5 3.8 -7.8 4.1 -9.1 5.1 -4.9 3.5 -4 3.4 -7.4 7.6"/><path d="M327.4 317.5l7.9-5.7 8.7-4 9.3-2.1 10-0.1 10.3 2"/><path class="ai s3" d="M327.4 317.5l7.9-5.7 8.7-4 9.3-2.1 10-0.1 10.3 2"/><path d="M346.8 434.3l-1.2 1.2 -1.2 0.8 -1.4 0.4 -1.5 0 -1.6-0.5 -1.6-0.9 -3.1-3.2 -2.9-5 -2.2-6.7 -1.3-8.1 -0.2-4.4 0.1-4.6 0.6-4.7"/><path class="ai s5" d="M346.8 434.3l-1.2 1.2 -1.2 0.8 -1.4 0.4 -1.5 0 -1.6-0.5 -1.6-0.9 -3.1-3.2 -2.9-5 -2.2-6.7 -1.3-8.1 -0.2-4.4 0.1-4.6 0.6-4.7"/><path d="M414.9 462.1l-6.7 8.1 -8 5.8 -8.8 3.4 -9.4 0.9 -9.6-1.5"/><path class="ai s3" d="M414.9 462.1l-6.7 8.1 -8 5.8 -8.8 3.4 -9.4 0.9 -9.6-1.5"/><path d="M345.8 345.1l6.9-3 7.5-1.4 8 0.1 8.3 2 8.4 3.8 8.3 5.8"/><path class="ai s4" d="M345.8 345.1l6.9-3 7.5-1.4 8 0.1 8.3 2 8.4 3.8 8.3 5.8"/><path d="M325.2 358.1l4.3-4.1 4.8-3.3 5.3-2.5 5.7-1.5 6-0.6 6.3 0.6 6.5 1.7 6.5 3"/><path class="ai s3" d="M325.2 358.1l4.3-4.1 4.8-3.3 5.3-2.5 5.7-1.5 6-0.6 6.3 0.6 6.5 1.7 6.5 3"/><path d="M357.9 314.6l11.5-2.7 12.3 0.2 12.9 3.3 13.1 6.7"/><path class="ai s4" d="M357.9 314.6l11.5-2.7 12.3 0.2 12.9 3.3 13.1 6.7"/><path d="M339.3 469.8l-3.4-0.3 -3.5-0.9 -3.5-1.5 -3.6-2.1 -3.5-2.8 -3.3-3.4 -3.3-4 -3.1-4.6 -2.9-5.1 -2.6-5.7"/><path class="ai s5" d="M339.3 469.8l-3.4-0.3 -3.5-0.9 -3.5-1.5 -3.6-2.1 -3.5-2.8 -3.3-3.4 -3.3-4 -3.1-4.6 -2.9-5.1 -2.6-5.7"/><path d="M403.4 507.9l-12 3.9 -12.4 1 -12.5-1.7 -12.2-4.2"/><path class="ai s4" d="M403.4 507.9l-12 3.9 -12.4 1 -12.5-1.7 -12.2-4.2"/><path d="M411 516.5l-13.7 4.5 -14.1 1.3 -14.1-1.9 -13.8-4.7"/><path class="ai s5" d="M411 516.5l-13.7 4.5 -14.1 1.3 -14.1-1.9 -13.8-4.7"/><path d="M377.6 503.8l-9.2 1.4 -9.3-0.5 -9.2-2.2 -9.1-3.8 -8.7-5.4"/><path class="ai s5" d="M377.6 503.8l-9.2 1.4 -9.3-0.5 -9.2-2.2 -9.1-3.8 -8.7-5.4"/><path d="M414.4 515.2l-13.7 5.2 -14.3 1.8 -14.3-1.4 -13.9-4.3"/><path class="ai s4" d="M414.4 515.2l-13.7 5.2 -14.3 1.8 -14.3-1.4 -13.9-4.3"/><path d="M389.8 488.5l-8.1 3.8 -8.6 1.9 -8.7 0.1 -8.9-1.8 -8.7-3.4 -8.4-5.1"/><path class="ai s4" d="M389.8 488.5l-8.1 3.8 -8.6 1.9 -8.7 0.1 -8.9-1.8 -8.7-3.4 -8.4-5.1"/><path d="M378.1 506.3l-9.4 1.4 -9.5-0.5 -9.4-2.1 -9.2-3.9 -8.9-5.3"/><path class="ai s5" d="M378.1 506.3l-9.4 1.4 -9.5-0.5 -9.4-2.1 -9.2-3.9 -8.9-5.3"/><path d="M373 305.1l14.2-0.6 15 3.5 15.3 7.6"/><path class="ai s4" d="M373 305.1l14.2-0.6 15 3.5 15.3 7.6"/><path d="M287 325l3.6-5.9 3.9-5.3 4.2-4.7 4.5-4 4.8-3.4 4.9-2.7 5.2-1.9 5.3-1.2"/><path class="ai s1" d="M287 325l3.6-5.9 3.9-5.3 4.2-4.7 4.5-4 4.8-3.4 4.9-2.7 5.2-1.9 5.3-1.2"/><path d="M214.4 294.1l-9.4 9.9 -6.2 7.8 -9 13.3 -5.6 10"/><path class="ai s1" d="M214.4 294.1l-9.4 9.9 -6.2 7.8 -9 13.3 -5.6 10"/><path d="M289.9 282.8l5.5-8.3 5.9-7.2 6.2-5.9 6.3-4.6 6.3-3.4 6.3-2.3"/><path class="ai s0" d="M289.9 282.8l5.5-8.3 5.9-7.2 6.2-5.9 6.3-4.6 6.3-3.4 6.3-2.3"/><path d="M325.4 494l-4.1-1.6 -4.2-2.1 -4.1-2.7 -4-3.2 -4-3.7 -3.9-4.2 -3.7-4.8 -3.5-5.3 -3.4-5.7"/><path class="ai s5" d="M325.4 494l-4.1-1.6 -4.2-2.1 -4.1-2.7 -4-3.2 -4-3.7 -3.9-4.2 -3.7-4.8 -3.5-5.3 -3.4-5.7"/><path d="M309.6 330.2l5.2-5.6 5.8-4.6 6.2-3.7 6.7-2.5 7.1-1.4 7.4-0.2 7.6 1.2"/><path class="ai s2" d="M309.6 330.2l5.2-5.6 5.8-4.6 6.2-3.7 6.7-2.5 7.1-1.4 7.4-0.2 7.6 1.2"/><path d="M298.8 323.3l4.6-5.8 5.1-5.1 5.4-4.2 5.9-3.4 6.1-2.4 6.5-1.3 6.6-0.4"/><path class="ai s1" d="M298.8 323.3l4.6-5.8 5.1-5.1 5.4-4.2 5.9-3.4 6.1-2.4 6.5-1.3 6.6-0.4"/><path d="M390.8 501l-9.7 3.2 -10 1.1 -10.1-1 -10-2.9 -9.7-4.8"/><path class="ai s5" d="M390.8 501l-9.7 3.2 -10 1.1 -10.1-1 -10-2.9 -9.7-4.8"/><path d="M345.7 353.7l5.9-2.2 6.4-1 6.7 0.3 6.9 1.7 7 3.2 6.9 4.7 6.6 6"/><path class="ai s5" d="M345.7 353.7l5.9-2.2 6.4-1 6.7 0.3 6.9 1.7 7 3.2 6.9 4.7 6.6 6"/><path d="M343.7 485.2l-4.5-0.1 -4.6-0.9 -4.7-1.5 -4.6-2.3 -4.5-3 -4.4-3.7 -4.3-4.4 -4.1-5.1 -3.9-5.7"/><path class="ai s5" d="M343.7 485.2l-4.5-0.1 -4.6-0.9 -4.7-1.5 -4.6-2.3 -4.5-3 -4.4-3.7 -4.3-4.4 -4.1-5.1 -3.9-5.7"/><path d="M435.7 451.6l-6 12.3 -8.1 9.8 -9.8 6.8 -11.1 3.6"/><path class="ai s2" d="M435.7 451.6l-6 12.3 -8.1 9.8 -9.8 6.8 -11.1 3.6"/><path d="M416.4 458.6l-6.1 8.8 -7.4 6.7 -8.4 4.5 -9.1 2 -9.5-0.4"/><path class="ai s3" d="M416.4 458.6l-6.1 8.8 -7.4 6.7 -8.4 4.5 -9.1 2 -9.5-0.4"/><path d="M356.1 345.3l7.5-1.3 8 0.5 8.3 2.3 8.3 4.1 8.1 6.1 7.6 7.9"/><path class="ai s5" d="M356.1 345.3l7.5-1.3 8 0.5 8.3 2.3 8.3 4.1 8.1 6.1 7.6 7.9"/><path d="M346.3 446.8l-1.8 1.3 -2 1 -2.1 0.4 -2.2 0 -2.3-0.5 -2.4-1.1 -2.3-1.6 -2.4-2.1 -2.2-2.7 -2.2-3.2 -2-3.7 -1.8-4.2 -1.6-4.6 -1.3-5"/><path class="ai s5" d="M346.3 446.8l-1.8 1.3 -2 1 -2.1 0.4 -2.2 0 -2.3-0.5 -2.4-1.1 -2.3-1.6 -2.4-2.1 -2.2-2.7 -2.2-3.2 -2-3.7 -1.8-4.2 -1.6-4.6 -1.3-5"/><path d="M295.2 314.2l4.6-5.9 5-5.2 5.4-4.3 5.7-3.4 6-2.5 6.1-1.6 6.3-0.5"/><path class="ai s1" d="M295.2 314.2l4.6-5.9 5-5.2 5.4-4.3 5.7-3.4 6-2.5 6.1-1.6 6.3-0.5"/><path d="M340.6 288.7l11.7-5.5 12.8-2.7 13.4 0.4 13.9 3.5"/><path class="ai s3" d="M340.6 288.7l11.7-5.5 12.8-2.7 13.4 0.4 13.9 3.5"/><path d="M358.9 345.4l7.6-0.8 8.2 0.9 8.3 2.8 8.3 4.7 8.1 6.6 7.4 8.5"/><path class="ai s5" d="M358.9 345.4l7.6-0.8 8.2 0.9 8.3 2.8 8.3 4.7 8.1 6.6 7.4 8.5"/><path d="M361.1 312.9l11.7-1.7 12.5 1.3 12.9 4.4 12.8 7.8"/><path class="ai s4" d="M361.1 312.9l11.7-1.7 12.5 1.3 12.9 4.4 12.8 7.8"/><path d="M341.6 491.2l-4.9-0.5 -4.9-1.2 -4.9-2 -4.9-2.7 -4.7-3.4 -4.7-4.1 -4.5-4.8 -4.2-5.4"/><path class="ai s5" d="M341.6 491.2l-4.9-0.5 -4.9-1.2 -4.9-2 -4.9-2.7 -4.7-3.4 -4.7-4.1 -4.5-4.8 -4.2-5.4"/><path d="M290 387.9l2.5-5.5 3.1-5.7 3.7-5.5 4.4-5.3 5.2-4.8 2.9-2 6.3-3.4 3.4-1.2"/><path class="ai s2" d="M290 387.9l2.5-5.5 3.1-5.7 3.7-5.5 4.4-5.3 5.2-4.8 2.9-2 6.3-3.4 3.4-1.2"/><path d="M431.2 482.1l-10.3 10.1 -11.8 6.8 -12.7 3.4 -13.3-0.1"/><path class="ai s3" d="M431.2 482.1l-10.3 10.1 -11.8 6.8 -12.7 3.4 -13.3-0.1"/><path d="M339 468.1l-3 0.2 -3-0.3 -3.1-0.7 -3.2-1.4 -3.2-1.9 -3.1-2.4 -3.1-3.1 -3-3.6 -2.9-4.1 -2.7-4.7 -2.5-5.1"/><path class="ai s5" d="M339 468.1l-3 0.2 -3-0.3 -3.1-0.7 -3.2-1.4 -3.2-1.9 -3.1-2.4 -3.1-3.1 -3-3.6 -2.9-4.1 -2.7-4.7 -2.5-5.1"/><path d="M353.6 489.8l-5.4 0.6 -5.5-0.3 -5.5-1.2 -5.5-2.1 -5.5-2.9 -5.3-3.8 -5.1-4.6 -4.9-5.4"/><path class="ai s5" d="M353.6 489.8l-5.4 0.6 -5.5-0.3 -5.5-1.2 -5.5-2.1 -5.5-2.9 -5.3-3.8 -5.1-4.6 -4.9-5.4"/><path d="M404 415.8l0.1 8.2 -1 7.8 -2.2 7.2 -3.2 6.1 -4.2 4.9 -5 3.5 -5.6 1.9"/><path class="ai s1" d="M404 415.8l0.1 8.2 -1 7.8 -2.2 7.2 -3.2 6.1 -4.2 4.9 -5 3.5 -5.6 1.9"/><path d="M296.2 310.9l4.8-5.8 5.2-4.9 5.5-4.1 5.8-3.2 6-2.2 6.2-1.3 6.3-0.3"/><path class="ai s1" d="M296.2 310.9l4.8-5.8 5.2-4.9 5.5-4.1 5.8-3.2 6-2.2 6.2-1.3 6.3-0.3"/><path d="M359.9 366.8l5.2 0.5 5.3 1.5 5.3 2.6 5.1 3.6 4.9 4.6 4.5 5.5 3.9 6.4 3.2 7"/><path class="ai s5" d="M359.9 366.8l5.2 0.5 5.3 1.5 5.3 2.6 5.1 3.6 4.9 4.6 4.5 5.5 3.9 6.4 3.2 7"/><path d="M274.4 378l3.7-7.7 4.5-8 3.7-5.3 4.2-5 4.8-4.7 5.4-4 5.9-3.1"/><path class="ai s2" d="M274.4 378l3.7-7.7 4.5-8 3.7-5.3 4.2-5 4.8-4.7 5.4-4 5.9-3.1"/><path d="M287.6 383.7l2.7-5.2 3.2-5.3 3.8-5.3 4.5-4.9 5.1-4.4 5.9-3.6 3.2-1.5 3.4-1.1"/><path class="ai s2" d="M287.6 383.7l2.7-5.2 3.2-5.3 3.8-5.3 4.5-4.9 5.1-4.4 5.9-3.6 3.2-1.5 3.4-1.1"/><path d="M299 307.3l5.3-6.1 5.7-5.2 6-4.2 6.4-3.1 6.7-2 6.8-0.9 6.9 0.3"/><path class="ai s1" d="M299 307.3l5.3-6.1 5.7-5.2 6-4.2 6.4-3.1 6.7-2 6.8-0.9 6.9 0.3"/><path d="M363.8 499.6l-6.8 1.2 -7 0 -6.9-1.1 -6.9-2.3 -6.8-3.3 -6.6-4.3 -6.3-5.4"/><path class="ai s5" d="M363.8 499.6l-6.8 1.2 -7 0 -6.9-1.1 -6.9-2.3 -6.8-3.3 -6.6-4.3 -6.3-5.4"/><path d="M306.1 320.3l5.2-5.2 5.7-4.2 6.1-3.3 6.4-2.3 6.8-1.2 6.9-0.1 7.1 1.1"/><path class="ai s2" d="M306.1 320.3l5.2-5.2 5.7-4.2 6.1-3.3 6.4-2.3 6.8-1.2 6.9-0.1 7.1 1.1"/><path d="M347.5 337.7l7.4-1.9 8-0.3 8.3 1.5 8.5 3.2 8.4 5.1 8.1 6.9"/><path class="ai s4" d="M347.5 337.7l7.4-1.9 8-0.3 8.3 1.5 8.5 3.2 8.4 5.1 8.1 6.9"/><path d="M298.1 312.1l4.9-5.4 5.2-4.6 5.5-3.8 5.8-2.8 6-1.9 6.2-0.9 6.4 -0"/><path class="ai s1" d="M298.1 312.1l4.9-5.4 5.2-4.6 5.5-3.8 5.8-2.8 6-1.9 6.2-0.9 6.4 -0"/><path d="M315.2 284l8.3-6.7 8.9-5 9.4-3.2 9.7-1.3 9.9 0.6"/><path class="ai s2" d="M315.2 284l8.3-6.7 8.9-5 9.4-3.2 9.7-1.3 9.9 0.6"/><path d="M357.2 542.6l-10.1-1.2 -9.8-2.5 -9.5-3.6 -9.1-4.7 -8.6-5.6"/><path class="ai s5" d="M357.2 542.6l-10.1-1.2 -9.8-2.5 -9.5-3.6 -9.1-4.7 -8.6-5.6"/><path d="M371.1 550l-12.5-0.7 -12.1-2.5 -11.6-4.1 -11.1-5.5"/><path class="ai s5" d="M371.1 550l-12.5-0.7 -12.1-2.5 -11.6-4.1 -11.1-5.5"/><path d="M144.7 523.8l2.9 12.3 3.5 11.8 4.1 11.3 4.6 10.5"/><path class="ai s4" d="M144.7 523.8l2.9 12.3 3.5 11.8 4.1 11.3 4.6 10.5"/><path d="M355.3 494.6l-5.6 0.8 -5.7 -0 -5.8-0.9 -5.7-1.8 -5.7-2.7 -5.5-3.5 -5.4-4.4 -5.2-5.1"/><path class="ai s5" d="M355.3 494.6l-5.6 0.8 -5.7 -0 -5.8-0.9 -5.7-1.8 -5.7-2.7 -5.5-3.5 -5.4-4.4 -5.2-5.1"/><path d="M286.8 374.8l3.2-5.2 3.8-5.1 4.4-4.9 5-4.3 2.8-2 6-3.2 3.3-1.2 3.4-0.9 3.6-0.5"/><path class="ai s2" d="M286.8 374.8l3.2-5.2 3.8-5.1 4.4-4.9 5-4.3 2.8-2 6-3.2 3.3-1.2 3.4-0.9 3.6-0.5"/><path d="M297.8 307l5-5.3 5.2-4.5 5.6-3.6 5.8-2.7 6-1.8 6.1-0.8 6.2 0.1"/><path class="ai s1" d="M297.8 307l5-5.3 5.2-4.5 5.6-3.6 5.8-2.7 6-1.8 6.1-0.8 6.2 0.1"/><path d="M378.4 467.8l-4.7 4 -5.1 3.1 -5.5 1.9 -5.7 0.7 -5.8-0.5 -5.9-1.6 -5.9-2.8 -5.7-3.9"/><path class="ai s4" d="M378.4 467.8l-4.7 4 -5.1 3.1 -5.5 1.9 -5.7 0.7 -5.8-0.5 -5.9-1.6 -5.9-2.8 -5.7-3.9"/><path d="M289.7 306.1l4.2-5.6 4.5-4.9 4.8-4.1 4.9-3.4 5.1-2.5 5.2-1.8 5.2-1 5.2-0.2"/><path class="ai s1" d="M289.7 306.1l4.2-5.6 4.5-4.9 4.8-4.1 4.9-3.4 5.1-2.5 5.2-1.8 5.2-1 5.2-0.2"/><path d="M397.3 398.5l2.4 7.5 1.4 7.7 0.4 7.7 -0.7 7.3 -1.8 6.8 -2.7 5.8 -3.7 4.8"/><path class="ai s1" d="M397.3 398.5l2.4 7.5 1.4 7.7 0.4 7.7 -0.7 7.3 -1.8 6.8 -2.7 5.8 -3.7 4.8"/><path d="M404.4 445.4l-3.5 8 -4.6 6.8 -5.6 5.3 -6.3 3.7 -6.8 2 -7.2 0.1"/><path class="ai s2" d="M404.4 445.4l-3.5 8 -4.6 6.8 -5.6 5.3 -6.3 3.7 -6.8 2 -7.2 0.1"/><path d="M436.9 421.6l-0.8 14.3 -3.3 13.2 -5.7 11.5 -7.7 8.9"/><path class="ai s2" d="M436.9 421.6l-0.8 14.3 -3.3 13.2 -5.7 11.5 -7.7 8.9"/><path d="M420.6 490.6l-10.3 8.4 -11.4 5.4 -12 2.5 -12.3-0.4"/><path class="ai s3" d="M420.6 490.6l-10.3 8.4 -11.4 5.4 -12 2.5 -12.3-0.4"/><path d="M312.2 320.1l5.6-4.4 6.1-3.4 6.5-2.5 6.8-1.3 7-0.2 7.3 1 7.3 2.3"/><path class="ai s3" d="M312.2 320.1l5.6-4.4 6.1-3.4 6.5-2.5 6.8-1.3 7-0.2 7.3 1 7.3 2.3"/><path d="M251.3 289l0.3-5.5 -0.4-4.1 -0.5-1.5 -0.7-1.1 -1-0.9 -1.1-0.6 -2.9-0.2 -1.8 0.2 -4.1 1.3 -7.3 3.8 -8.4 5.8 -9 7.9"/><path class="ai s0" d="M251.3 289l0.3-5.5 -0.4-4.1 -0.5-1.5 -0.7-1.1 -1-0.9 -1.1-0.6 -2.9-0.2 -1.8 0.2 -4.1 1.3 -7.3 3.8 -8.4 5.8 -9 7.9"/><path d="M395 513l-10.6 4 -10.8 1.8 -10.9-0.3 -10.8-2.3 -10.5-4.1"/><path class="ai s4" d="M395 513l-10.6 4 -10.8 1.8 -10.9-0.3 -10.8-2.3 -10.5-4.1"/><path d="M353.9 421.3l-0.5 6 -0.6 2.7 -1.7 4.5 -1.2 1.8 -1.3 1.4 -1.6 1 -1.6 0.5 -1.8 0.1 -1.8-0.4 -1.9-0.9 -1.9-1.5 -1.9-2 -1.7-2.4 -3.2-6.4 -1.2-3.9"/><path class="ai s3" d="M353.9 421.3l-0.5 6 -0.6 2.7 -1.7 4.5 -1.2 1.8 -1.3 1.4 -1.6 1 -1.6 0.5 -1.8 0.1 -1.8-0.4 -1.9-0.9 -1.9-1.5 -1.9-2 -1.7-2.4 -3.2-6.4 -1.2-3.9"/><path d="M292.5 306l4.5-5.5 4.8-4.8 5-3.9 5.2-3.2 5.4-2.3 5.6-1.4 5.5-0.6 5.6 0.2"/><path class="ai s1" d="M292.5 306l4.5-5.5 4.8-4.8 5-3.9 5.2-3.2 5.4-2.3 5.6-1.4 5.5-0.6 5.6 0.2"/><path d="M350.7 498.5l-5.5 0.4 -5.6-0.3 -5.5-1.2 -5.5-1.9 -5.5-2.7 -5.3-3.5 -5.2-4.2 -5-4.9"/><path class="ai s5" d="M350.7 498.5l-5.5 0.4 -5.6-0.3 -5.5-1.2 -5.5-1.9 -5.5-2.7 -5.3-3.5 -5.2-4.2 -5-4.9"/><path d="M301.3 308l5.2-5.1 5.5-4.1 5.8-3.3 6.1-2.3 6.3-1.3 6.4-0.4 6.5 0.7"/><path class="ai s2" d="M301.3 308l5.2-5.1 5.5-4.1 5.8-3.3 6.1-2.3 6.3-1.3 6.4-0.4 6.5 0.7"/><path d="M326.4 336l5.7-2.9 6.1-1.9 6.4-0.8 6.8 0.3 6.9 1.5 7 2.8 7 4"/><path class="ai s4" d="M326.4 336l5.7-2.9 6.1-1.9 6.4-0.8 6.8 0.3 6.9 1.5 7 2.8 7 4"/><path d="M337.7 281.2l11.1-4.7 11.9-2.2 12.4 0.4 12.7 3.2"/><path class="ai s3" d="M337.7 281.2l11.1-4.7 11.9-2.2 12.4 0.4 12.7 3.2"/><path d="M149.4 529.4l3.1 11.3 3.6 10.9 4.2 10.4 4.6 9.6"/><path class="ai s4" d="M149.4 529.4l3.1 11.3 3.6 10.9 4.2 10.4 4.6 9.6"/><path d="M288.4 369.4l3.7-5.2 4.3-5 4.9-4.5 5.5-3.8 6.3-2.9 3.4-1.1 3.5-0.7 3.6-0.3 3.8 0"/><path class="ai s2" d="M288.4 369.4l3.7-5.2 4.3-5 4.9-4.5 5.5-3.8 6.3-2.9 3.4-1.1 3.5-0.7 3.6-0.3 3.8 0"/><path d="M229.2 296.8l-7.3 7.6 -9.4 11.2 -6.6 9.2 -6.2 9.9"/><path class="ai s0" d="M229.2 296.8l-7.3 7.6 -9.4 11.2 -6.6 9.2 -6.2 9.9"/><path d="M372.3 498.6l-7 2.4 -7.1 1.1 -7.3 0 -7.2-1.3 -7.2-2.5 -7.1-3.5 -6.8-4.7"/><path class="ai s5" d="M372.3 498.6l-7 2.4 -7.1 1.1 -7.3 0 -7.2-1.3 -7.2-2.5 -7.1-3.5 -6.8-4.7"/><path d="M292.7 285.3l5.1-6.5 5.5-5.5 5.6-4.4 5.7-3.4 5.7-2.3 5.7-1.4 5.6-0.4"/><path class="ai s0" d="M292.7 285.3l5.1-6.5 5.5-5.5 5.6-4.4 5.7-3.4 5.7-2.3 5.7-1.4 5.6-0.4"/><path d="M354.9 504.7l-6.3 0.5 -6.3-0.4 -6.3-1.3 -6.3-2.2 -6.1-3 -6-3.9 -5.8-4.7"/><path class="ai s5" d="M354.9 504.7l-6.3 0.5 -6.3-0.4 -6.3-1.3 -6.3-2.2 -6.1-3 -6-3.9 -5.8-4.7"/><path d="M300.6 306.1l5-4.9 5.5-4.1 5.7-3.2 5.9-2.3 6.1-1.3 6.3-0.3 6.2 0.6"/><path class="ai s2" d="M300.6 306.1l5-4.9 5.5-4.1 5.7-3.2 5.9-2.3 6.1-1.3 6.3-0.3 6.2 0.6"/><path d="M299.3 273.6l6.4-7.1 6.7-5.7 6.9-4.4 7-3.1 6.9-1.7 6.7-0.6"/><path class="ai s1" d="M299.3 273.6l6.4-7.1 6.7-5.7 6.9-4.4 7-3.1 6.9-1.7 6.7-0.6"/><path d="M364.1 433l-1.1 3.9 -1.5 3.5 -1.7 3.1 -2 2.6 -2.2 2.1 -2.5 1.5 -2.7 0.9 -2.8 0.2 -3-0.5 -3-1.1 -3-1.8 -3-2.5 -2.8-3.2 -2.7-3.9"/><path class="ai s3" d="M364.1 433l-1.1 3.9 -1.5 3.5 -1.7 3.1 -2 2.6 -2.2 2.1 -2.5 1.5 -2.7 0.9 -2.8 0.2 -3-0.5 -3-1.1 -3-1.8 -3-2.5 -2.8-3.2 -2.7-3.9"/><path d="M332.6 300.8l8.8-3.8 9.5-2 9.9-0.1 10.2 2 10.2 4.1"/><path class="ai s3" d="M332.6 300.8l8.8-3.8 9.5-2 9.9-0.1 10.2 2 10.2 4.1"/><path d="M357.3 503l-6.2 0.8 -6.3-0.1 -6.4-1 -6.2-1.9 -6.2-2.8 -6.1-3.7 -5.9-4.6"/><path class="ai s5" d="M357.3 503l-6.2 0.8 -6.3-0.1 -6.4-1 -6.2-1.9 -6.2-2.8 -6.1-3.7 -5.9-4.6"/><path d="M360.4 498.5l-6.1 1.3 -6.3 0.3 -6.2-0.7 -6.3-1.6 -6.2-2.6 -6.1-3.5 -5.9-4.4"/><path class="ai s5" d="M360.4 498.5l-6.1 1.3 -6.3 0.3 -6.2-0.7 -6.3-1.6 -6.2-2.6 -6.1-3.5 -5.9-4.4"/><path d="M302 304.4l5.2-4.9 5.7-4 5.8-3 6.2-2.1 6.2-1.2 6.4-0.1 6.4 0.9"/><path class="ai s2" d="M302 304.4l5.2-4.9 5.7-4 5.8-3 6.2-2.1 6.2-1.2 6.4-0.1 6.4 0.9"/><path d="M397.1 470.4l-5.9 6.3 -6.7 4.9 -7.2 3.2 -7.6 1.6 -7.8-0.2 -7.9-1.7"/><path class="ai s3" d="M397.1 470.4l-5.9 6.3 -6.7 4.9 -7.2 3.2 -7.6 1.6 -7.8-0.2 -7.9-1.7"/><path d="M417.6 368.9l7.6 11.1 6 12.9 4 14.1 1.7 14.6"/><path class="ai s4" d="M417.6 368.9l7.6 11.1 6 12.9 4 14.1 1.7 14.6"/><path d="M380.7 328.3l11 3.4 11.1 6.2 10.6 8.9 9.8 11.6"/><path class="ai s5" d="M380.7 328.3l11 3.4 11.1 6.2 10.6 8.9 9.8 11.6"/><path d="M357.3 539.6l-9.3-0.7 -9.2-1.9 -8.9-2.9 -8.6-4 -8.2-4.8"/><path class="ai s5" d="M357.3 539.6l-9.3-0.7 -9.2-1.9 -8.9-2.9 -8.6-4 -8.2-4.8"/><path d="M383.3 373.3l5.2 5.1 4.7 6.1 4 7 3.3 7.8 2.3 8.1 1.2 8.4"/><path class="ai s4" d="M383.3 373.3l5.2 5.1 4.7 6.1 4 7 3.3 7.8 2.3 8.1 1.2 8.4"/><path d="M358.7 495.5l-5.6 1.4 -5.7 0.5 -5.7-0.3 -5.8-1.2 -5.7-2 -5.7-2.9 -5.5-3.8 -5.4-4.5"/><path class="ai s5" d="M358.7 495.5l-5.6 1.4 -5.7 0.5 -5.7-0.3 -5.8-1.2 -5.7-2 -5.7-2.9 -5.5-3.8 -5.4-4.5"/><path d="M404.9 443l-3.2 8.5 -4.2 7.3 -5.2 5.9 -6.1 4.5 -6.6 2.7 -7 1"/><path class="ai s2" d="M404.9 443l-3.2 8.5 -4.2 7.3 -5.2 5.9 -6.1 4.5 -6.6 2.7 -7 1"/><path d="M363.6 496l-5.9 1.8 -6 1 -6.1-0.1 -6.2-0.9 -6.1-2 -6.1-2.8 -5.9-3.7 -5.7-4.6"/><path class="ai s5" d="M363.6 496l-5.9 1.8 -6 1 -6.1-0.1 -6.2-0.9 -6.1-2 -6.1-2.8 -5.9-3.7 -5.7-4.6"/><path d="M304.4 306.1l5.4-4.6 5.6-3.6 6-2.7 6.2-1.8 6.4-0.7 6.4 0.3 6.5 1.3"/><path class="ai s2" d="M304.4 306.1l5.4-4.6 5.6-3.6 6-2.7 6.2-1.8 6.4-0.7 6.4 0.3 6.5 1.3"/><path d="M356.9 302.4l11.3-0.9 11.9 1.7 12.1 4.5 12 7.4"/><path class="ai s4" d="M356.9 302.4l11.3-0.9 11.9 1.7 12.1 4.5 12 7.4"/><path d="M422.1 444.4l-3.9 11.2 -5.4 9.7 -6.9 7.8 -8 5.6 -8.9 3.3"/><path class="ai s2" d="M422.1 444.4l-3.9 11.2 -5.4 9.7 -6.9 7.8 -8 5.6 -8.9 3.3"/><path d="M360.8 499l-6.1 1.4 -6.2 0.4 -6.2-0.5 -6.2-1.4 -6.2-2.4 -6-3.3 -5.9-4.1"/><path class="ai s5" d="M360.8 499l-6.1 1.4 -6.2 0.4 -6.2-0.5 -6.2-1.4 -6.2-2.4 -6-3.3 -5.9-4.1"/><path d="M356.4 487.3l-4.7 1.6 -4.8 0.9 -5 0.1 -4.9-0.6 -5-1.4 -5-2.2 -4.9-2.9 -4.8-3.7 -4.7-4.3"/><path class="ai s5" d="M356.4 487.3l-4.7 1.6 -4.8 0.9 -5 0.1 -4.9-0.6 -5-1.4 -5-2.2 -4.9-2.9 -4.8-3.7 -4.7-4.3"/><path d="M400.2 314l15 6.5 14.7 10.8 13.7 14.9"/><path class="ai s5" d="M400.2 314l15 6.5 14.7 10.8 13.7 14.9"/><path d="M360.4 351.7l6.4 1.6 6.4 2.9 6.4 4.2 6.1 5.4 5.8 6.6 5.1 7.6"/><path class="ai s5" d="M360.4 351.7l6.4 1.6 6.4 2.9 6.4 4.2 6.1 5.4 5.8 6.6 5.1 7.6"/><path d="M407.9 427.7l-1.3 9.4 -2.6 8.6 -3.7 7.6 -4.8 6.3 -5.7 4.7 -6.4 3.1"/><path class="ai s1" d="M407.9 427.7l-1.3 9.4 -2.6 8.6 -3.7 7.6 -4.8 6.3 -5.7 4.7 -6.4 3.1"/><path d="M361.9 496.8l-5.8 1.8 -5.9 0.8 -5.9 -0 -6-1 -6-1.9 -5.9-2.7 -5.8-3.6 -5.6-4.4"/><path class="ai s5" d="M361.9 496.8l-5.8 1.8 -5.9 0.8 -5.9 -0 -6-1 -6-1.9 -5.9-2.7 -5.8-3.6 -5.6-4.4"/><path d="M305.4 303.4l5.5-4.4 5.8-3.6 6.1-2.6 6.3-1.6 6.5-0.5 6.5 0.5 6.6 1.5"/><path class="ai s2" d="M305.4 303.4l5.5-4.4 5.8-3.6 6.1-2.6 6.3-1.6 6.5-0.5 6.5 0.5 6.6 1.5"/><path d="M152.6 531.1l3.1 10.7 3.7 10.3 4.1 9.6 4.6 9 5.1 8.1"/><path class="ai s5" d="M152.6 531.1l3.1 10.7 3.7 10.3 4.1 9.6 4.6 9 5.1 8.1"/><path d="M419.5 365.9l8 11.8 6.4 13.8 4.3 15"/><path class="ai s4" d="M419.5 365.9l8 11.8 6.4 13.8 4.3 15"/><path d="M422.4 443.9l-3.7 11.4 -5.3 9.9 -6.8 8.1 -8 5.9 -8.8 3.6"/><path class="ai s2" d="M422.4 443.9l-3.7 11.4 -5.3 9.9 -6.8 8.1 -8 5.9 -8.8 3.6"/><path d="M300.4 305.7l4.9-4.6 5.3-3.8 5.5-2.9 5.7-2 5.8-1.2 6-0.3 6 0.7 5.9 1.5"/><path class="ai s2" d="M300.4 305.7l4.9-4.6 5.3-3.8 5.5-2.9 5.7-2 5.8-1.2 6-0.3 6 0.7 5.9 1.5"/><path d="M334.8 317l7.6-2.3 8-0.9 8.4 0.7 8.6 2.3 8.6 4 8.4 5.6"/><path class="ai s4" d="M334.8 317l7.6-2.3 8-0.9 8.4 0.7 8.6 2.3 8.6 4 8.4 5.6"/><path d="M291.5 308.2l3.9-4.2 4.2-3.7 4.2-3 4.5-2.4 4.5-1.8 4.6-1.1 4.7-0.5 4.6 0.1 4.7 0.8"/><path class="ai s2" d="M291.5 308.2l3.9-4.2 4.2-3.7 4.2-3 4.5-2.4 4.5-1.8 4.6-1.1 4.7-0.5 4.6 0.1 4.7 0.8"/><path d="M296.1 328.3l3.6-3.4 3.7-2.8 4-2.5 4.2-1.9 4.3-1.4 4.6-0.9 4.6-0.3 4.7 0.3 4.8 0.9 4.9 1.5"/><path class="ai s3" d="M296.1 328.3l3.6-3.4 3.7-2.8 4-2.5 4.2-1.9 4.3-1.4 4.6-0.9 4.6-0.3 4.7 0.3 4.8 0.9 4.9 1.5"/><path d="M364 494.6l-5.7 2.1 -5.7 1.3 -5.9 0.3 -6-0.6 -5.9-1.5 -5.9-2.4 -5.8-3.2 -5.6-4.1"/><path class="ai s5" d="M364 494.6l-5.7 2.1 -5.7 1.3 -5.9 0.3 -6-0.6 -5.9-1.5 -5.9-2.4 -5.8-3.2 -5.6-4.1"/><path d="M344.1 304.9l9.5-1.9 10 0.1 10.2 2.3 10.4 4.4 10.1 6.5"/><path class="ai s4" d="M344.1 304.9l9.5-1.9 10 0.1 10.2 2.3 10.4 4.4 10.1 6.5"/><path d="M308.2 299.3l5.9-4.4 6.3-3.4 6.5-2.4 6.8-1.2 6.8-0.2 6.9 1 6.9 2.2"/><path class="ai s2" d="M308.2 299.3l5.9-4.4 6.3-3.4 6.5-2.4 6.8-1.2 6.8-0.2 6.9 1 6.9 2.2"/><path d="M260.6 301.6l5-15.1 3.2-7.6 5.2-11.3 0.6-2 0-0.5 -0.7-0.3 -1.7 0.5 -3.9 2.1"/><path class="ai s0" d="M260.6 301.6l5-15.1 3.2-7.6 5.2-11.3 0.6-2 0-0.5 -0.7-0.3 -1.7 0.5 -3.9 2.1"/><path d="M341.9 302.2l9.4-2.1 9.9-0.2 10.2 1.9 10.3 4 10.2 6.2"/><path class="ai s4" d="M341.9 302.2l9.4-2.1 9.9-0.2 10.2 1.9 10.3 4 10.2 6.2"/><path d="M378 323.3l10.9 3.5 10.9 6.1 10.6 8.7 9.8 11.3"/><path class="ai s5" d="M378 323.3l10.9 3.5 10.9 6.1 10.6 8.7 9.8 11.3"/><path d="M380.5 468.3l-4.5 4.8 -4.8 3.9 -5.3 2.8 -5.5 1.7 -5.8 0.7 -5.9-0.5 -5.9-1.6 -5.9-2.6"/><path class="ai s3" d="M380.5 468.3l-4.5 4.8 -4.8 3.9 -5.3 2.8 -5.5 1.7 -5.8 0.7 -5.9-0.5 -5.9-1.6 -5.9-2.6"/><path d="M379.3 438.4l-1.8 5.6 -2.3 5 -2.8 4.5 -3.2 3.6 -3.7 2.9 -3.9 2 -4.3 1.1 -4.4 0.1 -4.5-0.9 -4.6-1.9"/><path class="ai s2" d="M379.3 438.4l-1.8 5.6 -2.3 5 -2.8 4.5 -3.2 3.6 -3.7 2.9 -3.9 2 -4.3 1.1 -4.4 0.1 -4.5-0.9 -4.6-1.9"/><path d="M387.1 364.4l6.3 6.2 5.8 7.4 4.9 8.6 4 9.5 2.8 10.1"/><path class="ai s4" d="M387.1 364.4l6.3 6.2 5.8 7.4 4.9 8.6 4 9.5 2.8 10.1"/><path d="M428.2 504.8l-11.9 9.6 -13 6.3 -13.6 3.2 -13.8 0.1"/><path class="ai s4" d="M428.2 504.8l-11.9 9.6 -13 6.3 -13.6 3.2 -13.8 0.1"/><path d="M438.2 406.5l1.8 15.6 -0.9 15.3 -3.4 14.2"/><path class="ai s3" d="M438.2 406.5l1.8 15.6 -0.9 15.3 -3.4 14.2"/><path d="M361.4 494.2l-5.4 1.9 -5.5 1.2 -5.6 0.2 -5.6-0.5 -5.7-1.4 -5.6-2.2 -5.5-3 -5.4-3.8"/><path class="ai s5" d="M361.4 494.2l-5.4 1.9 -5.5 1.2 -5.6 0.2 -5.6-0.5 -5.7-1.4 -5.6-2.2 -5.5-3 -5.4-3.8"/><path d="M410.9 406.2l1.4 10.4 0.1 10.3 -1.3 9.8 -2.8 9 -4.1 7.8"/><path class="ai s2" d="M410.9 406.2l1.4 10.4 0.1 10.3 -1.3 9.8 -2.8 9 -4.1 7.8"/><path d="M342.4 312.8l8.3-1 8.6 0.5 8.8 2.3 8.8 4 8.7 5.8"/><path class="ai s4" d="M342.4 312.8l8.3-1 8.6 0.5 8.8 2.3 8.8 4 8.7 5.8"/><path d="M310.2 333.2l4.2-2.2 4.4-1.8 4.6-1.2 4.8-0.5 4.9 0 5.1 0.8 5.1 1.4 5.2 2.1 5.2 2.9"/><path class="ai s4" d="M310.2 333.2l4.2-2.2 4.4-1.8 4.6-1.2 4.8-0.5 4.9 0 5.1 0.8 5.1 1.4 5.2 2.1 5.2 2.9"/><path d="M285.3 478.1l0-4.4 -1.3-6.9 -5.7-18.8 -3.2-13.3 -1.9-12.4"/><path class="ai s4" d="M285.3 478.1l0-4.4 -1.3-6.9 -5.7-18.8 -3.2-13.3 -1.9-12.4"/><path d="M359.5 343.5l6.9 1.9 6.9 3.2 6.9 4.6 6.6 6 6.2 7.2 5.5 8.4"/><path class="ai s5" d="M359.5 343.5l6.9 1.9 6.9 3.2 6.9 4.6 6.6 6 6.2 7.2 5.5 8.4"/><path d="M305.6 309.1l5-3.5 5.3-2.7 5.4-2 5.7-1.1 5.7-0.3 5.9 0.6 5.9 1.5 5.8 2.3"/><path class="ai s3" d="M305.6 309.1l5-3.5 5.3-2.7 5.4-2 5.7-1.1 5.7-0.3 5.9 0.6 5.9 1.5 5.8 2.3"/><path d="M442.3 512.6l-14.4 11.2 -15.7 7.1 -16.5 3"/><path class="ai s4" d="M442.3 512.6l-14.4 11.2 -15.7 7.1 -16.5 3"/><path d="M397.7 329.9l11.6 7.5 11 10.4 10 13.2"/><path class="ai s5" d="M397.7 329.9l11.6 7.5 11 10.4 10 13.2"/><path d="M364.7 473.4l-3.8 3.1 -4.1 2.5 -4.3 1.7 -4.4 1.1 -4.6 0.3 -4.6-0.5 -4.7-1.3 -4.7-2 -4.6-2.8 -4.6-3.5"/><path class="ai s4" d="M364.7 473.4l-3.8 3.1 -4.1 2.5 -4.3 1.7 -4.4 1.1 -4.6 0.3 -4.6-0.5 -4.7-1.3 -4.7-2 -4.6-2.8 -4.6-3.5"/><path d="M413 413.4l0.6 10.8 -1 10.4 -2.3 9.8 -3.8 8.6 -5 7.2"/><path class="ai s2" d="M413 413.4l0.6 10.8 -1 10.4 -2.3 9.8 -3.8 8.6 -5 7.2"/><path d="M421.5 448.2l-4.1 11.4 -5.7 9.9 -6.9 8 -8.1 5.9 -8.9 3.7"/><path class="ai s2" d="M421.5 448.2l-4.1 11.4 -5.7 9.9 -6.9 8 -8.1 5.9 -8.9 3.7"/><path d="M364.8 415.4l0.1 4.6 -0.6 8.6 -0.7 3.9 -1.2 3.7 -1.4 3.2 -1.7 2.8 -2 2.3 -2.2 1.7 -2.5 1.2 -2.6 0.5 -2.8-0.1 -2.8-0.8 -2.9-1.5"/><path class="ai s0" d="M364.8 415.4l0.1 4.6 -0.6 8.6 -0.7 3.9 -1.2 3.7 -1.4 3.2 -1.7 2.8 -2 2.3 -2.2 1.7 -2.5 1.2 -2.6 0.5 -2.8-0.1 -2.8-0.8 -2.9-1.5"/><path d="M385.3 347.7l8.2 5.7 7.8 7.6 7.1 9.2 6.2 10.8 4.8 12"/><path class="ai s5" d="M385.3 347.7l8.2 5.7 7.8 7.6 7.1 9.2 6.2 10.8 4.8 12"/><path d="M369.2 506.1l-6.7 2.3 -6.8 1.3 -6.9 0.3 -6.8-0.7 -6.9-1.7 -6.7-2.6 -6.6-3.5"/><path class="ai s4" d="M369.2 506.1l-6.7 2.3 -6.8 1.3 -6.9 0.3 -6.8-0.7 -6.9-1.7 -6.7-2.6 -6.6-3.5"/><path d="M285.2 467.6l0.6-7.6 -0.6-4.9 -3.2-15.1 -2-12.1 -0.9-11.3"/><path class="ai s4" d="M285.2 467.6l0.6-7.6 -0.6-4.9 -3.2-15.1 -2-12.1 -0.9-11.3"/><path d="M371 493.5l-5.7 3 -5.9 2.2 -6.1 1.1 -6.2 0.3 -6.2-0.8 -6.2-1.7 -6.1-2.6 -6-3.4"/><path class="ai s4" d="M371 493.5l-5.7 3 -5.9 2.2 -6.1 1.1 -6.2 0.3 -6.2-0.8 -6.2-1.7 -6.1-2.6 -6-3.4"/><path d="M321.5 354.5l3.6-0.9 3.8-0.4 3.9-0.1 4.1 0.5 4.1 0.9 4.2 1.5 4.2 2 4.2 2.6 4.2 3.1 4 3.8 3.9 4.2"/><path class="ai s5" d="M321.5 354.5l3.6-0.9 3.8-0.4 3.9-0.1 4.1 0.5 4.1 0.9 4.2 1.5 4.2 2 4.2 2.6 4.2 3.1 4 3.8 3.9 4.2"/><path d="M307.8 295l5.6-3.7 5.9-2.9 6.1-1.8 6.2-0.9 6.2 0.1 6.3 1.1 6.2 2"/><path class="ai s3" d="M307.8 295l5.6-3.7 5.9-2.9 6.1-1.8 6.2-0.9 6.2 0.1 6.3 1.1 6.2 2"/><path d="M314.2 302.2l6-3.3 6.4-2.3 6.5-1.3 6.8-0.2 6.8 0.9 6.8 2.1 6.8 3.1"/><path class="ai s3" d="M314.2 302.2l6-3.3 6.4-2.3 6.5-1.3 6.8-0.2 6.8 0.9 6.8 2.1 6.8 3.1"/><path d="M376.8 307.4l12.5 2.9 12.7 6 12.3 9.1 11.7 12.2"/><path class="ai s5" d="M376.8 307.4l12.5 2.9 12.7 6 12.3 9.1 11.7 12.2"/><path d="M436.2 467.6l-7.3 13.2 -9.2 10.6 -10.6 7.8 -11.7 4.8"/><path class="ai s3" d="M436.2 467.6l-7.3 13.2 -9.2 10.6 -10.6 7.8 -11.7 4.8"/><path d="M440.3 456.4l-5.9 14.6 -8.1 12.2 -9.9 9.4 -11.3 6.4"/><path class="ai s2" d="M440.3 456.4l-5.9 14.6 -8.1 12.2 -9.9 9.4 -11.3 6.4"/><path d="M387.4 543.3l-11.9 2.3 -11.9 0.3 -11.6-1.4 -11.3-2.9"/><path class="ai s5" d="M387.4 543.3l-11.9 2.3 -11.9 0.3 -11.6-1.4 -11.3-2.9"/><path d="M382.9 413l0.5 6.5 -0.2 6.4 -0.8 6.1 -1.4 5.6 -2.1 5.1 -2.5 4.4 -3.2 3.5 -3.5 2.7 -3.9 1.8"/><path class="ai s0" d="M382.9 413l0.5 6.5 -0.2 6.4 -0.8 6.1 -1.4 5.6 -2.1 5.1 -2.5 4.4 -3.2 3.5 -3.5 2.7 -3.9 1.8"/><path d="M389.4 328.2l11.1 6 10.6 8.7 9.9 11.3 8.6 13.6"/><path class="ai s5" d="M389.4 328.2l11.1 6 10.6 8.7 9.9 11.3 8.6 13.6"/><path d="M367.4 513l-7 2 -7 1 -7 0 -7-1 -6.9-1.8 -6.8-2.8 -6.7-3.6"/><path class="ai s5" d="M367.4 513l-7 2 -7 1 -7 0 -7-1 -6.9-1.8 -6.8-2.8 -6.7-3.6"/><path d="M424.8 415.3l0.3 13 -1.6 12.5 -3.5 11.4 -5.1 9.9"/><path class="ai s2" d="M424.8 415.3l0.3 13 -1.6 12.5 -3.5 11.4 -5.1 9.9"/><path d="M392.1 366.4l6.1 7.5 5.3 8.7 4.4 9.6 3.2 10.4 1.9 10.8"/><path class="ai s4" d="M392.1 366.4l6.1 7.5 5.3 8.7 4.4 9.6 3.2 10.4 1.9 10.8"/><path d="M319.4 352.4l3.5-0.8 3.7-0.4 3.8 0 4 0.4 4 0.9 4.1 1.4 4.1 1.9 4.1 2.4 4.1 3 4 3.5 3.9 4"/><path class="ai s5" d="M319.4 352.4l3.5-0.8 3.7-0.4 3.8 0 4 0.4 4 0.9 4.1 1.4 4.1 1.9 4.1 2.4 4.1 3 4 3.5 3.9 4"/><path d="M411.6 342.5l10.7 10.7 9.6 13.4 7.8 15.7"/><path class="ai s5" d="M411.6 342.5l10.7 10.7 9.6 13.4 7.8 15.7"/><path d="M382 415l0.2 6.5 -0.3 6.2 -1 5.9 -1.5 5.5 -2.1 4.8 -2.7 4.2 -3.1 3.5 -3.6 2.5 -3.9 1.6"/><path class="ai s0" d="M382 415l0.2 6.5 -0.3 6.2 -1 5.9 -1.5 5.5 -2.1 4.8 -2.7 4.2 -3.1 3.5 -3.6 2.5 -3.9 1.6"/><path d="M406.8 505.9l-9.7 6.8 -10.2 4.6 -10.6 2.5 -10.6 0.5 -10.7-1.4"/><path class="ai s4" d="M406.8 505.9l-9.7 6.8 -10.2 4.6 -10.6 2.5 -10.6 0.5 -10.7-1.4"/><path d="M148.5 550.1l4.1 11.9 4.9 11.2 5.4 10.2 6 9.1"/><path class="ai s5" d="M148.5 550.1l4.1 11.9 4.9 11.2 5.4 10.2 6 9.1"/><path d="M323.4 291.3l7.5-3.2 7.8-1.7 8-0.4 8.1 1.1 8.1 2.5 8 4"/><path class="ai s3" d="M323.4 291.3l7.5-3.2 7.8-1.7 8-0.4 8.1 1.1 8.1 2.5 8 4"/><path d="M382.3 309.5l12.7 4.1 12.7 7.3 12.2 10.4 11.2 13.4"/><path class="ai s5" d="M382.3 309.5l12.7 4.1 12.7 7.3 12.2 10.4 11.2 13.4"/><path d="M372.5 353.6l6.4 4.3 6.2 5.6 5.8 6.7 5.2 7.9 4.4 8.7 3.5 9.5"/><path class="ai s5" d="M372.5 353.6l6.4 4.3 6.2 5.6 5.8 6.7 5.2 7.9 4.4 8.7 3.5 9.5"/><path d="M171 536.9l3 7.3 3.3 6.9 3.7 6.4 3.9 5.9 4.1 5.4 4.4 4.6 4.6 4"/><path class="ai s5" d="M171 536.9l3 7.3 3.3 6.9 3.7 6.4 3.9 5.9 4.1 5.4 4.4 4.6 4.6 4"/><path d="M319.2 284l7.3-3.6 7.6-2.3 7.8-0.9 7.9 0.5 7.8 1.8 7.7 3.1"/><path class="ai s3" d="M319.2 284l7.3-3.6 7.6-2.3 7.8-0.9 7.9 0.5 7.8 1.8 7.7 3.1"/><path d="M406.8 368.1l6.6 10.2 5.3 11.5 3.9 12.5 2.2 13"/><path class="ai s4" d="M406.8 368.1l6.6 10.2 5.3 11.5 3.9 12.5 2.2 13"/><path d="M393.2 352.4l7.9 7.5 7.1 9.3 6.2 10.8 4.9 12.1"/><path class="ai s5" d="M393.2 352.4l7.9 7.5 7.1 9.3 6.2 10.8 4.9 12.1"/><path d="M403.9 364.9l6.8 9.7 5.7 11 4.4 12.1 2.7 12.9"/><path class="ai s4" d="M403.9 364.9l6.8 9.7 5.7 11 4.4 12.1 2.7 12.9"/><path d="M442.2 465.7l-7.3 14.4 -9.6 11.7 -11.2 8.5"/><path class="ai s2" d="M442.2 465.7l-7.3 14.4 -9.6 11.7 -11.2 8.5"/><path d="M423.5 410.6l1 13 -0.9 12.7 -2.7 11.8 -4.5 10.5"/><path class="ai s2" d="M423.5 410.6l1 13 -0.9 12.7 -2.7 11.8 -4.5 10.5"/><path d="M304.6 290.4l5.4-3.9 5.6-3 5.8-2.1 5.8-1.2 5.9-0.2 5.8 0.6 5.8 1.6 5.6 2.4"/><path class="ai s2" d="M304.6 290.4l5.4-3.9 5.6-3 5.8-2.1 5.8-1.2 5.9-0.2 5.8 0.6 5.8 1.6 5.6 2.4"/><path d="M263 410.9l0.7-1.5 4.3-2.4 1.9-1.8 1.4-1.8 2.8-5.1 7.2-16.1 3.9-7.6 3.2-5.2"/><path class="ai s1" d="M263 410.9l0.7-1.5 4.3-2.4 1.9-1.8 1.4-1.8 2.8-5.1 7.2-16.1 3.9-7.6 3.2-5.2"/><path d="M433.6 498.7l-11 11.3 -12.3 8.2 -13.1 5 -13.5 2.1"/><path class="ai s3" d="M433.6 498.7l-11 11.3 -12.3 8.2 -13.1 5 -13.5 2.1"/><path d="M288 312.9l6.3-5.5 3.2-2.2 3.4-1.8 3.5-1.4 3.5-1 3.5-0.5 3.6-0.2 3.5 0.2 3.6 0.7 3.6 1.1 3.5 1.4"/><path class="ai s2" d="M288 312.9l6.3-5.5 3.2-2.2 3.4-1.8 3.5-1.4 3.5-1 3.5-0.5 3.6-0.2 3.5 0.2 3.6 0.7 3.6 1.1 3.5 1.4"/><path d="M179.1 541.4l2.7 6.1 3 5.8 3.2 5.4 3.4 5 3.7 4.5 3.9 4 4 3.4 4.2 2.8"/><path class="ai s5" d="M179.1 541.4l2.7 6.1 3 5.8 3.2 5.4 3.4 5 3.7 4.5 3.9 4 4 3.4 4.2 2.8"/><path d="M411.4 427.1l-1.2 10.6 -2.5 9.8 -3.8 8.8 -4.9 7.5 -5.9 5.9"/><path class="ai s1" d="M411.4 427.1l-1.2 10.6 -2.5 9.8 -3.8 8.8 -4.9 7.5 -5.9 5.9"/><path d="M370.6 351.4l6.4 4.2 6.3 5.4 5.8 6.6 5.3 7.7 4.6 8.7 3.8 9.4"/><path class="ai s5" d="M370.6 351.4l6.4 4.2 6.3 5.4 5.8 6.6 5.3 7.7 4.6 8.7 3.8 9.4"/><path d="M322.7 291l7.1-2.7 7.3-1.4 7.6-0.2 7.6 1.1 7.6 2.4 7.4 3.8"/><path class="ai s3" d="M322.7 291l7.1-2.7 7.3-1.4 7.6-0.2 7.6 1.1 7.6 2.4 7.4 3.8"/><path d="M324.8 255l9.6-5.3 9.9-3.2 9.9-1.3 9.9 0.7 9.5 2.6"/><path class="ai s2" d="M324.8 255l9.6-5.3 9.9-3.2 9.9-1.3 9.9 0.7 9.5 2.6"/><path d="M360.5 525.3l-7 1.1 -7 0.2 -6.9-0.6 -6.8-1.4 -6.7-2.1 -6.6-2.9 -6.3-3.6"/><path class="ai s5" d="M360.5 525.3l-7 1.1 -7 0.2 -6.9-0.6 -6.8-1.4 -6.7-2.1 -6.6-2.9 -6.3-3.6"/><path d="M356.8 325.5l7.9 1.9 7.9 3.4 7.9 5 7.6 6.5 7.1 8"/><path class="ai s5" d="M356.8 325.5l7.9 1.9 7.9 3.4 7.9 5 7.6 6.5 7.1 8"/><path d="M374.2 489.5l-5.4 3.7 -5.6 2.8 -5.8 1.9 -5.9 1 -6.1 0.1 -6-0.9 -6.1-1.8 -5.9-2.7"/><path class="ai s4" d="M374.2 489.5l-5.4 3.7 -5.6 2.8 -5.8 1.9 -5.9 1 -6.1 0.1 -6-0.9 -6.1-1.8 -5.9-2.7"/><path d="M396.6 380l4.4 8.7 3.4 9.3 2.4 9.8 1.2 10 -0.1 9.9"/><path class="ai s3" d="M396.6 380l4.4 8.7 3.4 9.3 2.4 9.8 1.2 10 -0.1 9.9"/><path d="M397.9 514.2l-9.5 5.3 -9.9 3.5 -10 1.7 -10-0.1 -10-1.6"/><path class="ai s4" d="M397.9 514.2l-9.5 5.3 -9.9 3.5 -10 1.7 -10-0.1 -10-1.6"/><path d="M352.6 278.2l11.7-1 12 1.6 12.1 4.2 11.9 6.8"/><path class="ai s4" d="M352.6 278.2l11.7-1 12 1.6 12.1 4.2 11.9 6.8"/><path d="M329.8 303.3l7.1-1.4 7.2-0.3 7.4 1 7.5 2.3 7.4 3.6 7.3 4.8"/><path class="ai s4" d="M329.8 303.3l7.1-1.4 7.2-0.3 7.4 1 7.5 2.3 7.4 3.6 7.3 4.8"/><path d="M322.3 347.5l3.7-0.2 3.8 0.2 4 0.7 4 1.1 4 1.5 4.1 2.1 4.1 2.6 4.1 3.1 3.9 3.6 3.8 4.1"/><path class="ai s5" d="M322.3 347.5l3.7-0.2 3.8 0.2 4 0.7 4 1.1 4 1.5 4.1 2.1 4.1 2.6 4.1 3.1 3.9 3.6 3.8 4.1"/><path d="M382.1 544l-10.6 2.2 -10.6 0.6 -10.3-0.7 -10-2 -9.7-3.2"/><path class="ai s5" d="M382.1 544l-10.6 2.2 -10.6 0.6 -10.3-0.7 -10-2 -9.7-3.2"/><path d="M317.6 291.2l6.5-3 6.8-1.8 7-0.8 7.1 0.5 7 1.6 7 2.7 6.8 3.9"/><path class="ai s3" d="M317.6 291.2l6.5-3 6.8-1.8 7-0.8 7.1 0.5 7 1.6 7 2.7 6.8 3.9"/><path d="M381.7 415.2l0.1 6.6 -0.3 6.4 -1 6.1 -1.5 5.6 -2.1 5.1 -2.6 4.5 -3.1 3.7 -3.5 2.8 -3.9 2"/><path class="ai s0" d="M381.7 415.2l0.1 6.6 -0.3 6.4 -1 6.1 -1.5 5.6 -2.1 5.1 -2.6 4.5 -3.1 3.7 -3.5 2.8 -3.9 2"/><path d="M326.1 284.9l7.9-2.8 8.1-1.4 8.3 0.1 8.3 1.6 8.3 3.1 8.1 4.5"/><path class="ai s3" d="M326.1 284.9l7.9-2.8 8.1-1.4 8.3 0.1 8.3 1.6 8.3 3.1 8.1 4.5"/><path d="M378.8 506.5l-6.9 3.5 -7.2 2.5 -7.2 1.4 -7.3 0.3 -7.3-0.7 -7.2-1.7 -7.1-2.8"/><path class="ai s4" d="M378.8 506.5l-6.9 3.5 -7.2 2.5 -7.2 1.4 -7.3 0.3 -7.3-0.7 -7.2-1.7 -7.1-2.8"/><path d="M461.8 477.8l-10 18 -12.8 14 -14.9 9.8"/><path class="ai s3" d="M461.8 477.8l-10 18 -12.8 14 -14.9 9.8"/><path d="M380 479.3l-4.8 4.7 -5.3 3.9 -5.5 2.9 -5.7 2 -6 0.9 -6 0 -6-1 -6.1-2.1"/><path class="ai s3" d="M380 479.3l-4.8 4.7 -5.3 3.9 -5.5 2.9 -5.7 2 -6 0.9 -6 0 -6-1 -6.1-2.1"/><path d="M306.6 340.2l6.6-2.2 7.1-0.8 3.8 0.1 3.8 0.5 3.9 1 4 1.3 4 1.8 4 2.3 4 2.8 4 3.2"/><path class="ai s4" d="M306.6 340.2l6.6-2.2 7.1-0.8 3.8 0.1 3.8 0.5 3.9 1 4 1.3 4 1.8 4 2.3 4 2.8 4 3.2"/><path d="M388.2 321.3l11.3 6.1 10.9 8.9 10.2 11.4 8.9 13.8"/><path class="ai s5" d="M388.2 321.3l11.3 6.1 10.9 8.9 10.2 11.4 8.9 13.8"/><path d="M388.9 491.9l-6.6 5.2 -7 4 -7.4 2.7 -7.5 1.4 -7.6 0.1 -7.6-1.2"/><path class="ai s3" d="M388.9 491.9l-6.6 5.2 -7 4 -7.4 2.7 -7.5 1.4 -7.6 0.1 -7.6-1.2"/><path d="M374.3 488.6l-5.2 3.8 -5.5 3 -5.6 2 -5.8 1.2 -5.9 0.3 -6-0.7 -5.9-1.5 -5.9-2.4"/><path class="ai s4" d="M374.3 488.6l-5.2 3.8 -5.5 3 -5.6 2 -5.8 1.2 -5.9 0.3 -6-0.7 -5.9-1.5 -5.9-2.4"/><path d="M376.2 488.7l-5.3 4 -5.6 3.1 -5.8 2.2 -5.9 1.3 -6.1 0.4 -6.1-0.6 -6.1-1.5 -6-2.4"/><path class="ai s4" d="M376.2 488.7l-5.3 4 -5.6 3.1 -5.8 2.2 -5.9 1.3 -6.1 0.4 -6.1-0.6 -6.1-1.5 -6-2.4"/><path d="M423.3 507.4l-11 9.2 -11.8 6.5 -12.4 3.9 -12.6 1.3"/><path class="ai s3" d="M423.3 507.4l-11 9.2 -11.8 6.5 -12.4 3.9 -12.6 1.3"/><path d="M315.7 321l4.7-1.4 4.8-0.8 5-0.2 5.2 0.6 5.2 1.2 5.2 2 5.2 2.7 5.2 3.4 5.1 4.1"/><path class="ai s4" d="M315.7 321l4.7-1.4 4.8-0.8 5-0.2 5.2 0.6 5.2 1.2 5.2 2 5.2 2.7 5.2 3.4 5.1 4.1"/><path d="M448.1 436.1l-3 17.4 -5.7 15.5 -8.2 13.1"/><path class="ai s2" d="M448.1 436.1l-3 17.4 -5.7 15.5 -8.2 13.1"/><path d="M350.9 276.4l11.1-0.8 11.5 1.5 11.5 4 11.2 6.4"/><path class="ai s4" d="M350.9 276.4l11.1-0.8 11.5 1.5 11.5 4 11.2 6.4"/><path d="M336.2 282l8.9-1.8 9.1-0.2 9.3 1.7 9.2 3.3 9.1 5.1"/><path class="ai s4" d="M336.2 282l8.9-1.8 9.1-0.2 9.3 1.7 9.2 3.3 9.1 5.1"/><path d="M404 396.3l2.5 10 1.4 10.3 0.1 10.1 -1.2 9.7 -2.4 9"/><path class="ai s2" d="M404 396.3l2.5 10 1.4 10.3 0.1 10.1 -1.2 9.7 -2.4 9"/><path d="M287.5 286.6l3.6-4 3.6-3.5 3.7-2.8 3.6-2.2 3.6-1.6 3.4-1 3.3-0.5 3.2 0 3 0.4 2.8 0.8 2.6 1.3 2.4 1.5"/><path class="ai s1" d="M287.5 286.6l3.6-4 3.6-3.5 3.7-2.8 3.6-2.2 3.6-1.6 3.4-1 3.3-0.5 3.2 0 3 0.4 2.8 0.8 2.6 1.3 2.4 1.5"/><path d="M359.1 429.7l-0.8 3.9 -2.2 7.2 -2.9 6.2 -1.7 2.7 -2 2.2 -2.1 1.9 -2.3 1.4 -2.4 0.9 -2.6 0.5 -2.6-0.1 -2.8-0.6 -2.7-1.3 -2.8-1.7"/><path class="ai s0" d="M359.1 429.7l-0.8 3.9 -2.2 7.2 -2.9 6.2 -1.7 2.7 -2 2.2 -2.1 1.9 -2.3 1.4 -2.4 0.9 -2.6 0.5 -2.6-0.1 -2.8-0.6 -2.7-1.3 -2.8-1.7"/><path d="M381.4 413.1l0.3 6.6 -0.2 6.4 -0.7 6.1 -1.4 5.7 -1.9 5.2 -2.4 4.6 -3 3.9 -3.4 3"/><path class="ai s0" d="M381.4 413.1l0.3 6.6 -0.2 6.4 -0.7 6.1 -1.4 5.7 -1.9 5.2 -2.4 4.6 -3 3.9 -3.4 3"/><path d="M355.1 327.8l7.4 2 7.5 3.3 7.4 4.7 7.1 6.1 6.8 7.5 6.2 8.7"/><path class="ai s5" d="M355.1 327.8l7.4 2 7.5 3.3 7.4 4.7 7.1 6.1 6.8 7.5 6.2 8.7"/><path d="M375.2 494.2l-5.7 3.7 -5.8 2.8 -6 2 -6.1 1 -6.2 0.1 -6.2-0.8 -6.1-1.6 -6.1-2.6"/><path class="ai s4" d="M375.2 494.2l-5.7 3.7 -5.8 2.8 -6 2 -6.1 1 -6.2 0.1 -6.2-0.8 -6.1-1.6 -6.1-2.6"/><path d="M154.2 552.9l4.2 10.8 4.7 10.1 5.3 9.2 5.8 8.1 6.3 6.8"/><path class="ai s5" d="M154.2 552.9l4.2 10.8 4.7 10.1 5.3 9.2 5.8 8.1 6.3 6.8"/><path d="M354.5 329.5l7.2 2 7.2 3.3 7.1 4.6 6.9 6 6.5 7.2 6 8.4"/><path class="ai s5" d="M354.5 329.5l7.2 2 7.2 3.3 7.1 4.6 6.9 6 6.5 7.2 6 8.4"/><path d="M376.6 487.6l-5.2 4.2 -5.5 3.2 -5.7 2.4 -5.9 1.4 -5.9 0.5 -6.1-0.4 -6-1.3 -6-2.2"/><path class="ai s4" d="M376.6 487.6l-5.2 4.2 -5.5 3.2 -5.7 2.4 -5.9 1.4 -5.9 0.5 -6.1-0.4 -6-1.3 -6-2.2"/><path d="M419.4 393l3.3 12.8 1.6 13.2 -0.2 13 -2 12.4"/><path class="ai s3" d="M419.4 393l3.3 12.8 1.6 13.2 -0.2 13 -2 12.4"/><path d="M183.9 541.9l2.8 5.3 6 9.7 3.3 4.2 3.5 3.8 3.6 3.3 3.7 2.8 3.9 2.3 3.9 1.8"/><path class="ai s5" d="M183.9 541.9l2.8 5.3 6 9.7 3.3 4.2 3.5 3.8 3.6 3.3 3.7 2.8 3.9 2.3 3.9 1.8"/><path d="M308.2 290.5l5.3-2.8 5.3-1.9 5.4-1.1 5.5-0.3 5.4 0.5 5.4 1.3 5.3 2 5.1 2.9"/><path class="ai s3" d="M308.2 290.5l5.3-2.8 5.3-1.9 5.4-1.1 5.5-0.3 5.4 0.5 5.4 1.3 5.3 2 5.1 2.9"/><path d="M365 281.2l12.8 1 13.1 3.9 13.1 6.9 12.5 9.8"/><path class="ai s4" d="M365 281.2l12.8 1 13.1 3.9 13.1 6.9 12.5 9.8"/><path d="M286.3 269.9l4.1-5.6 4.1-4.7 4.1-3.9 3.8-3 3.6-2.2 3.4-1.5 3-0.8 2.7-0.3 2.2 0.3 1.9 0.7 1.4 1.1 1.1 1.4"/><path class="ai s0" d="M286.3 269.9l4.1-5.6 4.1-4.7 4.1-3.9 3.8-3 3.6-2.2 3.4-1.5 3-0.8 2.7-0.3 2.2 0.3 1.9 0.7 1.4 1.1 1.1 1.4"/><path d="M327.4 345.9l3.9 0.4 4 0.9 4 1.3 4.1 1.9 4.1 2.3 4.1 2.8 4 3.4 3.9 3.9 3.7 4.3 3.6 4.9"/><path class="ai s5" d="M327.4 345.9l3.9 0.4 4 0.9 4 1.3 4.1 1.9 4.1 2.3 4.1 2.8 4 3.4 3.9 3.9 3.7 4.3 3.6 4.9"/><path d="M348.3 497l-3.8 1.1 -3.9 0.8 -3.9 0.4 -3.9-0.1 -3.9-0.4 -4-0.9 -4-1.3 -4-1.8 -3.9-2.3 -3.9-2.7 -3.9-3.2"/><path class="ai s4" d="M348.3 497l-3.8 1.1 -3.9 0.8 -3.9 0.4 -3.9-0.1 -3.9-0.4 -4-0.9 -4-1.3 -4-1.8 -3.9-2.3 -3.9-2.7 -3.9-3.2"/><path d="M403.7 475.6l-5.9 8 -6.6 6.7 -7.2 5.1 -7.7 3.6 -8.1 2.1 -8.2 0.5"/><path class="ai s3" d="M403.7 475.6l-5.9 8 -6.6 6.7 -7.2 5.1 -7.7 3.6 -8.1 2.1 -8.2 0.5"/><path d="M419.3 392.1l3.4 12.8 1.7 13.3 -0.1 13.1 -1.9 12.6"/><path class="ai s3" d="M419.3 392.1l3.4 12.8 1.7 13.3 -0.1 13.1 -1.9 12.6"/><path d="M316.5 286.3l6.2-2.6 6.4-1.6 6.4-0.5 6.5 0.5 6.5 1.5 6.3 2.6 6.1 3.5"/><path class="ai s3" d="M316.5 286.3l6.2-2.6 6.4-1.6 6.4-0.5 6.5 0.5 6.5 1.5 6.3 2.6 6.1 3.5"/><path d="M396.6 480.6l-6 6.8 -6.5 5.5 -7 4.2 -7.4 2.7 -7.6 1.4 -7.7 0"/><path class="ai s3" d="M396.6 480.6l-6 6.8 -6.5 5.5 -7 4.2 -7.4 2.7 -7.6 1.4 -7.7 0"/><path d="M411.2 502.3l-9 7.9 -9.7 5.9 -10.2 3.9 -10.4 1.9 -10.5 0.1"/><path class="ai s3" d="M411.2 502.3l-9 7.9 -9.7 5.9 -10.2 3.9 -10.4 1.9 -10.5 0.1"/><path d="M379 485.9l-5.2 4.4 -5.4 3.7 -5.7 2.7 -5.8 1.8 -6 0.8 -6.1 0 -6.1-1.1 -6.1-1.9"/><path class="ai s3" d="M379 485.9l-5.2 4.4 -5.4 3.7 -5.7 2.7 -5.8 1.8 -6 0.8 -6.1 0 -6.1-1.1 -6.1-1.9"/><path d="M396.2 352.2l7.6 8.7 6.8 10.3 5.6 11.6 4.4 12.7"/><path class="ai s5" d="M396.2 352.2l7.6 8.7 6.8 10.3 5.6 11.6 4.4 12.7"/><path d="M407.7 322.1l12.6 10.1 11.7 13.3 10.1 16.2"/><path class="ai s5" d="M407.7 322.1l12.6 10.1 11.7 13.3 10.1 16.2"/><path d="M409.4 448.9l-3.5 9.8 -4.6 8.7 -5.6 7.4 -6.4 5.9 -7.1 4.3"/><path class="ai s2" d="M409.4 448.9l-3.5 9.8 -4.6 8.7 -5.6 7.4 -6.4 5.9 -7.1 4.3"/><path d="M402.8 393.4l2.7 9.9 1.6 10.2 0.5 10.3 -0.8 9.9 -1.9 9.3"/><path class="ai s2" d="M402.8 393.4l2.7 9.9 1.6 10.2 0.5 10.3 -0.8 9.9 -1.9 9.3"/><path d="M387.5 493.1l-6.5 5.1 -6.8 3.9 -7.1 2.8 -7.2 1.5 -7.4 0.3 -7.4-0.8"/><path class="ai s3" d="M387.5 493.1l-6.5 5.1 -6.8 3.9 -7.1 2.8 -7.2 1.5 -7.4 0.3 -7.4-0.8"/><path d="M369 319.5l9.2 3.5 9.1 5.6 8.9 7.4 8.3 9.2 7.5 11"/><path class="ai s5" d="M369 319.5l9.2 3.5 9.1 5.6 8.9 7.4 8.3 9.2 7.5 11"/><path d="M411.2 451l-3.8 10.1 -4.9 8.9 -5.9 7.4 -6.8 5.9 -7.4 4.2"/><path class="ai s2" d="M411.2 451l-3.8 10.1 -4.9 8.9 -5.9 7.4 -6.8 5.9 -7.4 4.2"/><path d="M444.7 483l-9.5 14.4 -11.4 11.2 -12.8 7.9"/><path class="ai s3" d="M444.7 483l-9.5 14.4 -11.4 11.2 -12.8 7.9"/><path d="M354.6 419.3l-0.9 7.1 -2.2 9.9 -2.2 5.6 -2.8 4.7 -1.6 1.8 -1.8 1.6 -1.9 1.1 -2 0.7 -2.1 0.3 -2.3-0.2 -2.3-0.7 -2.3-1.1"/><path class="ai s0" d="M354.6 419.3l-0.9 7.1 -2.2 9.9 -2.2 5.6 -2.8 4.7 -1.6 1.8 -1.8 1.6 -1.9 1.1 -2 0.7 -2.1 0.3 -2.3-0.2 -2.3-0.7 -2.3-1.1"/><path d="M417.5 315.6l14.8 11.8 13.5 15.8 11.5 19.4"/><path class="ai s5" d="M417.5 315.6l14.8 11.8 13.5 15.8 11.5 19.4"/><path d="M439.8 464.6l-6.6 14.6 -8.4 12.3 -10.1 9.6 -11.3 6.8"/><path class="ai s2" d="M439.8 464.6l-6.6 14.6 -8.4 12.3 -10.1 9.6 -11.3 6.8"/><path d="M447.4 479.4l-9.1 15.1 -11.2 12.1 -12.7 8.6"/><path class="ai s3" d="M447.4 479.4l-9.1 15.1 -11.2 12.1 -12.7 8.6"/><path d="M268.3 267.4l-14.2 9 -7.3 5.3 -7.5 6 -10.1 9.1"/><path class="ai s1" d="M268.3 267.4l-14.2 9 -7.3 5.3 -7.5 6 -10.1 9.1"/><path d="M334.2 302.7l6.9-0.3 7 0.8 7 2 7.1 3.2 6.9 4.3 6.7 5.5"/><path class="ai s5" d="M334.2 302.7l6.9-0.3 7 0.8 7 2 7.1 3.2 6.9 4.3 6.7 5.5"/><path d="M423.2 358.4l8.4 13.9 6.6 15.8 4.4 17"/><path class="ai s4" d="M423.2 358.4l8.4 13.9 6.6 15.8 4.4 17"/><path d="M290.3 288l3.6-3.5 3.7-2.9 3.7-2.3 3.6-1.7 3.6-1.2 3.5-0.7 3.4-0.1 3.3 0.3 3.1 0.7 2.9 1.2 2.8 1.5 2.6 1.9 2.5 2.2"/><path class="ai s2" d="M290.3 288l3.6-3.5 3.7-2.9 3.7-2.3 3.6-1.7 3.6-1.2 3.5-0.7 3.4-0.1 3.3 0.3 3.1 0.7 2.9 1.2 2.8 1.5 2.6 1.9 2.5 2.2"/><path d="M321.9 293l6.2-1.6 6.3-0.5 6.4 0.4 6.4 1.4 6.4 2.4 6.2 3.4 6.1 4.4"/><path class="ai s4" d="M321.9 293l6.2-1.6 6.3-0.5 6.4 0.4 6.4 1.4 6.4 2.4 6.2 3.4 6.1 4.4"/><path d="M439.7 382.3l5.5 17.4 2.9 18.2 0 18.2"/><path class="ai s4" d="M439.7 382.3l5.5 17.4 2.9 18.2 0 18.2"/><path d="M398.5 374.8l4.8 9.4 3.8 10.2 2.7 10.8 1.4 11 0.2 10.9"/><path class="ai s3" d="M398.5 374.8l4.8 9.4 3.8 10.2 2.7 10.8 1.4 11 0.2 10.9"/><path d="M271.1 290.2l-8.4 7.7 -7.1 7.1 -12.1 13.2 -4.5 4.4"/><path class="ai s0" d="M271.1 290.2l-8.4 7.7 -7.1 7.1 -12.1 13.2 -4.5 4.4"/><path d="M381.4 515.9l-7.7 3.6 -7.7 2.5 -7.8 1.3 -7.8 0.2 -7.8-0.8 -7.7-1.8"/><path class="ai s4" d="M381.4 515.9l-7.7 3.6 -7.7 2.5 -7.8 1.3 -7.8 0.2 -7.8-0.8 -7.7-1.8"/><path d="M353.2 423.1l-1.3 6.6 -1.6 6.2 -2.1 5.6 -1.2 2.6 -2.8 4.3 -3.4 3.1 -1.8 1.1 -2 0.7 -2.1 0.3 -2.1-0.2 -2.2-0.6 -2.3-1 -2.3-1.6"/><path class="ai s0" d="M353.2 423.1l-1.3 6.6 -1.6 6.2 -2.1 5.6 -1.2 2.6 -2.8 4.3 -3.4 3.1 -1.8 1.1 -2 0.7 -2.1 0.3 -2.1-0.2 -2.2-0.6 -2.3-1 -2.3-1.6"/><path d="M335.2 297.5l7.3-0.4 7.4 0.8 7.4 2.1 7.4 3.3 7.3 4.6 7 5.8"/><path class="ai s4" d="M335.2 297.5l7.3-0.4 7.4 0.8 7.4 2.1 7.4 3.3 7.3 4.6 7 5.8"/><path d="M394.1 481.8l-5.8 6.5 -6.3 5.3 -6.7 4.1 -7 2.8 -7.3 1.5 -7.4 0.2"/><path class="ai s3" d="M394.1 481.8l-5.8 6.5 -6.3 5.3 -6.7 4.1 -7 2.8 -7.3 1.5 -7.4 0.2"/><path d="M365.7 371.7l3.6 4.8 3.3 5.3 3 5.7 2.6 6.1 2.1 6.3 1.6 6.5 1 6.6"/><path class="ai s3" d="M365.7 371.7l3.6 4.8 3.3 5.3 3 5.7 2.6 6.1 2.1 6.3 1.6 6.5 1 6.6"/><path d="M356.4 485.8l-3.6 2.2 -3.7 1.7 -3.7 1.4 -3.8 0.9 -3.9 0.4 -4 0 -4-0.5 -4-1.1 -4-1.5 -4-2.1 -4-2.6"/><path class="ai s4" d="M356.4 485.8l-3.6 2.2 -3.7 1.7 -3.7 1.4 -3.8 0.9 -3.9 0.4 -4 0 -4-0.5 -4-1.1 -4-1.5 -4-2.1 -4-2.6"/><path d="M386.2 485.8l-5.5 5.4 -5.9 4.4 -6.2 3.3 -6.4 2.3 -6.6 1.2 -6.7 0.2 -6.8-0.9"/><path class="ai s3" d="M386.2 485.8l-5.5 5.4 -5.9 4.4 -6.2 3.3 -6.4 2.3 -6.6 1.2 -6.7 0.2 -6.8-0.9"/><path d="M321.8 291.7l6.1-1.5 6.3-0.5 6.3 0.4 6.4 1.5 6.3 2.4 6.1 3.4 6 4.2"/><path class="ai s4" d="M321.8 291.7l6.1-1.5 6.3-0.5 6.3 0.4 6.4 1.5 6.3 2.4 6.1 3.4 6 4.2"/><path d="M380.2 483.1l-4.9 4.8 -5.2 3.9 -5.4 3.1 -5.7 2.2 -5.8 1.3 -5.9 0.4 -6-0.5 -5.9-1.4"/><path class="ai s3" d="M380.2 483.1l-4.9 4.8 -5.2 3.9 -5.4 3.1 -5.7 2.2 -5.8 1.3 -5.9 0.4 -6-0.5 -5.9-1.4"/><path d="M411 324.7l12.3 11 11.2 14.1 9.4 16.8"/><path class="ai s5" d="M411 324.7l12.3 11 11.2 14.1 9.4 16.8"/><path d="M373.6 307.6l10.4 4.2 10.2 6.4 9.9 8.6 9.2 10.8"/><path class="ai s5" d="M373.6 307.6l10.4 4.2 10.2 6.4 9.9 8.6 9.2 10.8"/><path d="M441.1 450.6l-4.7 15.5 -7 13.5 -8.8 11"/><path class="ai s2" d="M441.1 450.6l-4.7 15.5 -7 13.5 -8.8 11"/><path d="M300.8 283.8l4.4-2.9 4.5-2.2 4.4-1.5 4.4-0.8 4.4-0.1 4.2 0.4 4.1 1.1 3.9 1.6 3.8 2.1 3.5 2.5"/><path class="ai s3" d="M300.8 283.8l4.4-2.9 4.5-2.2 4.4-1.5 4.4-0.8 4.4-0.1 4.2 0.4 4.1 1.1 3.9 1.6 3.8 2.1 3.5 2.5"/><path d="M421.5 467.7l-6 11.1 -7.3 9.4 -8.3 7.4 -9.1 5.4"/><path class="ai s2" d="M421.5 467.7l-6 11.1 -7.3 9.4 -8.3 7.4 -9.1 5.4"/><path d="M415.2 470.1l-5.8 10.1 -6.9 8.6 -7.7 6.8 -8.4 5 -8.8 3.2"/><path class="ai s2" d="M415.2 470.1l-5.8 10.1 -6.9 8.6 -7.7 6.8 -8.4 5 -8.8 3.2"/><path d="M362.7 368.7l3.6 4.5 3.4 5 3.1 5.5 2.8 5.8 2.3 6.1 1.9 6.4 1.4 6.5 0.8 6.5"/><path class="ai s3" d="M362.7 368.7l3.6 4.5 3.4 5 3.1 5.5 2.8 5.8 2.3 6.1 1.9 6.4 1.4 6.5 0.8 6.5"/><path d="M443.6 346.2l11.6 18.6 8.9 21.5"/><path class="ai s5" d="M443.6 346.2l11.6 18.6 8.9 21.5"/><path d="M417.2 444.8l-3.2 11.4 -4.5 10.3 -5.6 9 -6.6 7.3 -7.5 5.7"/><path class="ai s2" d="M417.2 444.8l-3.2 11.4 -4.5 10.3 -5.6 9 -6.6 7.3 -7.5 5.7"/><path d="M430.3 361l8.2 15.6 6.2 17.4 3.6 18.4"/><path class="ai s4" d="M430.3 361l8.2 15.6 6.2 17.4 3.6 18.4"/><path d="M420.6 395.5l2.8 13.3 1.1 13.5 -0.6 13.3 -2.4 12.6"/><path class="ai s3" d="M420.6 395.5l2.8 13.3 1.1 13.5 -0.6 13.3 -2.4 12.6"/><path d="M387.2 447.3l-2.5 6.8 -3.1 6.2 -3.6 5.6 -4 4.7 -4.4 3.9 -4.8 2.9 -5 2.1 -5.3 1"/><path class="ai s1" d="M387.2 447.3l-2.5 6.8 -3.1 6.2 -3.6 5.6 -4 4.7 -4.4 3.9 -4.8 2.9 -5 2.1 -5.3 1"/><path d="M374.9 502.1l-5.9 3.5 -6 2.6 -6.2 1.8 -6.2 0.9 -6.3 0.1 -6.3-0.7 -6.2-1.6"/><path class="ai s4" d="M374.9 502.1l-5.9 3.5 -6 2.6 -6.2 1.8 -6.2 0.9 -6.3 0.1 -6.3-0.7 -6.2-1.6"/><path d="M442.6 405.1l1.9 17.6 -0.7 17.4 -3.5 16.3"/><path class="ai s3" d="M442.6 405.1l1.9 17.6 -0.7 17.4 -3.5 16.3"/><path d="M416.8 471.9l-6 10.3 -7.1 8.7 -7.9 7 -8.6 5.1 -9.1 3.3"/><path class="ai s2" d="M416.8 471.9l-6 10.3 -7.1 8.7 -7.9 7 -8.6 5.1 -9.1 3.3"/><path d="M355.6 313.4l7.7 2.6 7.7 3.9 7.5 5.3 7.3 6.7 6.8 8"/><path class="ai s5" d="M355.6 313.4l7.7 2.6 7.7 3.9 7.5 5.3 7.3 6.7 6.8 8"/><path d="M325.5 291.7l6.3-1.1 6.4 0 6.4 1 6.4 2 6.3 3 6.2 3.9 5.9 4.9"/><path class="ai s4" d="M325.5 291.7l6.3-1.1 6.4 0 6.4 1 6.4 2 6.3 3 6.2 3.9 5.9 4.9"/><path d="M260.5 420.4l-4.2-16.1 0.4-0.9 2.7-0.2 1.9-0.7 2.6-2.4 2.8-4.5 3.8-8.6 3.9-9"/><path class="ai s1" d="M260.5 420.4l-4.2-16.1 0.4-0.9 2.7-0.2 1.9-0.7 2.6-2.4 2.8-4.5 3.8-8.6 3.9-9"/><path d="M325.9 258.3l8.3-3.1 8.3-1.6 8.2-0.1 7.9 1.5 7.7 2.8 7.2 4.1"/><path class="ai s3" d="M325.9 258.3l8.3-3.1 8.3-1.6 8.2-0.1 7.9 1.5 7.7 2.8 7.2 4.1"/><path d="M372.3 339l6.9 5.3 6.5 6.6 6.1 7.7 5.5 8.8 4.8 9.8"/><path class="ai s5" d="M372.3 339l6.9 5.3 6.5 6.6 6.1 7.7 5.5 8.8 4.8 9.8"/><path d="M325.7 291.1l6.3-1 6.3 0.1 6.4 1 6.4 2.1 6.2 3 6.2 4 5.8 4.8"/><path class="ai s4" d="M325.7 291.1l6.3-1 6.3 0.1 6.4 1 6.4 2.1 6.2 3 6.2 4 5.8 4.8"/><path d="M358.7 442.9l-3.2 6.6 -3.6 5.8 -4 4.9 -4.5 3.7 -2.4 1.3 -2.5 1 -2.7 0.5 -2.7 0.1 -2.8-0.3 -2.9-0.9 -2.9-1.3"/><path class="ai s1" d="M358.7 442.9l-3.2 6.6 -3.6 5.8 -4 4.9 -4.5 3.7 -2.4 1.3 -2.5 1 -2.7 0.5 -2.7 0.1 -2.8-0.3 -2.9-0.9 -2.9-1.3"/><path d="M268.6 423.6l0.1-5.7 0.6-1.5 0.7-1.1 4.4-3.7 2.4-3.4 2.6-5.3 4.9-11.8 3.3-7.4"/><path class="ai s1" d="M268.6 423.6l0.1-5.7 0.6-1.5 0.7-1.1 4.4-3.7 2.4-3.4 2.6-5.3 4.9-11.8 3.3-7.4"/><path d="M342.7 387.1l3.2 9.3 2.5 9.6 1.5 9.3 0.1 8.6 -0.8 4.9 -0.6 2.2 -1.8 3.3"/><path class="ai s0" d="M342.7 387.1l3.2 9.3 2.5 9.6 1.5 9.3 0.1 8.6 -0.8 4.9 -0.6 2.2 -1.8 3.3"/><path d="M448.3 412.4l0.8 18.7 -2 18 -4.9 16.6"/><path class="ai s3" d="M448.3 412.4l0.8 18.7 -2 18 -4.9 16.6"/><path d="M327.9 257.8l8.4-3 8.6-1.4 8.4 0.2 8.2 1.7 7.9 3.1 7.4 4.5"/><path class="ai s3" d="M327.9 257.8l8.4-3 8.6-1.4 8.4 0.2 8.2 1.7 7.9 3.1 7.4 4.5"/><path d="M374.1 440.9l-1.7 5.3 -2.1 5 -2.3 4.6 -2.7 4.1 -3 3.5 -3.2 3 -3.5 2.3 -3.7 1.7 -3.9 1 -4 0.3"/><path class="ai s1" d="M374.1 440.9l-1.7 5.3 -2.1 5 -2.3 4.6 -2.7 4.1 -3 3.5 -3.2 3 -3.5 2.3 -3.7 1.7 -3.9 1 -4 0.3"/><path d="M420.2 352.9l8.5 13.6 7 15.4 4.9 16.8"/><path class="ai s5" d="M420.2 352.9l8.5 13.6 7 15.4 4.9 16.8"/><path d="M264.5 416.4l-0.3-4 0.3-1.5 0.5-0.9 3.7-2.1 2.5-2.4 3.5-5.5 9.3-20.1 2.8-5.1"/><path class="ai s1" d="M264.5 416.4l-0.3-4 0.3-1.5 0.5-0.9 3.7-2.1 2.5-2.4 3.5-5.5 9.3-20.1 2.8-5.1"/><path d="M361.8 366.3l3.6 4.6 3.4 5.1 3.1 5.5 2.8 5.9 2.3 6.1 2 6.5 1.4 6.5 1 6.6"/><path class="ai s3" d="M361.8 366.3l3.6 4.6 3.4 5.1 3.1 5.5 2.8 5.9 2.3 6.1 2 6.5 1.4 6.5 1 6.6"/><path d="M339 300.7l6.7 0.8 6.8 1.8 6.8 2.9 6.7 4.1 6.5 5.1 6.2 6.1"/><path class="ai s5" d="M339 300.7l6.7 0.8 6.8 1.8 6.8 2.9 6.7 4.1 6.5 5.1 6.2 6.1"/><path d="M429.6 367.8l7 15.6 4.9 16.9 2.5 17.6"/><path class="ai s4" d="M429.6 367.8l7 15.6 4.9 16.9 2.5 17.6"/><path d="M444 417.9l-0.1 17.6 -2.6 16.8 -5.1 15.3"/><path class="ai s3" d="M444 417.9l-0.1 17.6 -2.6 16.8 -5.1 15.3"/><path d="M297.1 487.9l-0.9-7.6 -1.5-5.5 -8.7-18.9 -4-11.5"/><path class="ai s4" d="M297.1 487.9l-0.9-7.6 -1.5-5.5 -8.7-18.9 -4-11.5"/><path d="M376.1 467.9l-3.5 4.8 -3.7 4.3 -4 3.6 -4.2 3 -4.5 2.3 -4.5 1.7 -4.8 0.9 -4.8 0.2 -4.9-0.6"/><path class="ai s2" d="M376.1 467.9l-3.5 4.8 -3.7 4.3 -4 3.6 -4.2 3 -4.5 2.3 -4.5 1.7 -4.8 0.9 -4.8 0.2 -4.9-0.6"/><path d="M272.7 433.9l0.2-7.6 0.5-2.2 0.7-1.6 3.9-4.5 2.1-3.3 2.1-5 2.5-7.2 5.3-14.6"/><path class="ai s2" d="M272.7 433.9l0.2-7.6 0.5-2.2 0.7-1.6 3.9-4.5 2.1-3.3 2.1-5 2.5-7.2 5.3-14.6"/><path d="M411.3 421.7l-0.5 11.2 -1.8 10.7 -2.9 10 -4 9 -5 7.8"/><path class="ai s2" d="M411.3 421.7l-0.5 11.2 -1.8 10.7 -2.9 10 -4 9 -5 7.8"/><path d="M366.8 372l3.2 5.3 3 5.7 2.7 6 2.2 6.4 1.7 6.5 1.3 6.7 0.8 6.6"/><path class="ai s3" d="M366.8 372l3.2 5.3 3 5.7 2.7 6 2.2 6.4 1.7 6.5 1.3 6.7 0.8 6.6"/><path d="M289.2 325.1l5.7 0.5 5 0.9 5.5 1.6 3.9 1.4 6.3 3 4.5 2.7 4.7 3.2 4.8 3.9 4.9 4.6"/><path class="ai s4" d="M289.2 325.1l5.7 0.5 5 0.9 5.5 1.6 3.9 1.4 6.3 3 4.5 2.7 4.7 3.2 4.8 3.9 4.9 4.6"/><path d="M323.4 295.9l5.4-0.4 5.4 0.4 5.4 1.2 5.4 1.9 5.4 2.7 5.2 3.5 5.1 4.1 4.8 4.9"/><path class="ai s5" d="M323.4 295.9l5.4-0.4 5.4 0.4 5.4 1.2 5.4 1.9 5.4 2.7 5.2 3.5 5.1 4.1 4.8 4.9"/><path d="M421.3 531.6l-12.1 8.1 -12.6 5.7 -12.8 3.4 -12.7 1.2"/><path class="ai s4" d="M421.3 531.6l-12.1 8.1 -12.6 5.7 -12.8 3.4 -12.7 1.2"/><path d="M295.3 268.9l4.1-3.6 4.1-2.9 3.9-2.1 3.7-1.4 3.6-0.7 3.2-0.2 3 0.4 2.7 0.8 2.4 1.3 2.1 1.6 1.7 1.9 2.6 4.6 1.4 5.1"/><path class="ai s3" d="M295.3 268.9l4.1-3.6 4.1-2.9 3.9-2.1 3.7-1.4 3.6-0.7 3.2-0.2 3 0.4 2.7 0.8 2.4 1.3 2.1 1.6 1.7 1.9 2.6 4.6 1.4 5.1"/><path d="M394.1 426l-0.9 8.4 -1.7 8 -2.3 7.5 -3 6.8 -3.6 6 -4.2 5.1"/><path class="ai s1" d="M394.1 426l-0.9 8.4 -1.7 8 -2.3 7.5 -3 6.8 -3.6 6 -4.2 5.1"/><path d="M471 433.6l-2.6 23.2 -6.6 21"/><path class="ai s3" d="M471 433.6l-2.6 23.2 -6.6 21"/><path d="M291 294.7l-7.7 7.8 -4.5 5.6 -3.7 5.8 -1.3 2.9 -0.6 3.1 0.2 1.8 1.1 1.6 1.5 0.8 2.7 0.6 10.5 0.4"/><path class="ai s0" d="M291 294.7l-7.7 7.8 -4.5 5.6 -3.7 5.8 -1.3 2.9 -0.6 3.1 0.2 1.8 1.1 1.6 1.5 0.8 2.7 0.6 10.5 0.4"/><path d="M307.4 336.1l8.5 3.5 4.6 2.5 4.8 3 7.4 5.9 7.6 7.6 7.3 9.4"/><path class="ai s4" d="M307.4 336.1l8.5 3.5 4.6 2.5 4.8 3 7.4 5.9 7.6 7.6 7.3 9.4"/><path d="M286.5 280.1l5.8-5.4 5.4-3.4 4.9-1.7 2.2-0.2 3.7 0.6 1.7 0.7 2.6 2.1 1 1.3 1.6 3.2 1.3 5.4 0.3 6"/><path class="ai s4" d="M286.5 280.1l5.8-5.4 5.4-3.4 4.9-1.7 2.2-0.2 3.7 0.6 1.7 0.7 2.6 2.1 1 1.3 1.6 3.2 1.3 5.4 0.3 6"/><path d="M306.6 266l4.9-2.9 4.9-1.9 4.8-1.1 4.5-0.4 4.3 0.4 4.1 1.1 3.7 1.7 3.4 2.2 3.1 2.6 2.7 3"/><path class="ai s3" d="M306.6 266l4.9-2.9 4.9-1.9 4.8-1.1 4.5-0.4 4.3 0.4 4.1 1.1 3.7 1.7 3.4 2.2 3.1 2.6 2.7 3"/><path d="M392.4 284.4l13.9 6.8 13.4 10.1 12.6 13.1"/><path class="ai s5" d="M392.4 284.4l13.9 6.8 13.4 10.1 12.6 13.1"/><path d="M368.4 435.8l-2.9 9.2 -3.8 8.1 -2.2 3.6 -2.3 3.3 -2.6 2.8 -2.7 2.4 -2.9 1.9 -3.1 1.4 -3.2 0.9 -3.4 0.4"/><path class="ai s0" d="M368.4 435.8l-2.9 9.2 -3.8 8.1 -2.2 3.6 -2.3 3.3 -2.6 2.8 -2.7 2.4 -2.9 1.9 -3.1 1.4 -3.2 0.9 -3.4 0.4"/><path d="M440.6 398.7l2.6 17.5 0.2 17.6 -2.3 16.8"/><path class="ai s3" d="M440.6 398.7l2.6 17.5 0.2 17.6 -2.3 16.8"/><path d="M278.9 510.9l2.5-10.8 1-8.3 0-5.2 -1.1-6.3 -1.6-5.1 -7-19.2"/><path class="ai s4" d="M278.9 510.9l2.5-10.8 1-8.3 0-5.2 -1.1-6.3 -1.6-5.1 -7-19.2"/><path d="M350.3 305.1l7.2 2.2 7.1 3.5 7 4.7 6.8 5.8 6.4 6.9 6 8"/><path class="ai s5" d="M350.3 305.1l7.2 2.2 7.1 3.5 7 4.7 6.8 5.8 6.4 6.9 6 8"/><path d="M358.8 311.6l7.3 3.5 7.1 4.7 7 6 6.6 7.2 6.2 8.3"/><path class="ai s5" d="M358.8 311.6l7.3 3.5 7.1 4.7 7 6 6.6 7.2 6.2 8.3"/><path d="M429.2 475.8l-6.9 12.3 -8.1 10.4 -9.2 8.4 -10 6.1"/><path class="ai s2" d="M429.2 475.8l-6.9 12.3 -8.1 10.4 -9.2 8.4 -10 6.1"/><path d="M464.1 386.3l5.4 23.4 1.5 23.9"/><path class="ai s4" d="M464.1 386.3l5.4 23.4 1.5 23.9"/><path d="M159.8 569.7l5.2 9.7 5.8 8.6 6.3 7.4 6.7 6 7.1 4.4"/><path class="ai s5" d="M159.8 569.7l5.2 9.7 5.8 8.6 6.3 7.4 6.7 6 7.1 4.4"/><path d="M286.9 265.6l2.6-2.9 4.7-3.9 3.6-2 2.5-0.3 0.8 0.3 0.5 0.5 0.2 1.8 -0.9 2.4 -2.9 4.4 -2.8 3.1 -5.1 4.9 -19 16.3"/><path class="ai s2" d="M286.9 265.6l2.6-2.9 4.7-3.9 3.6-2 2.5-0.3 0.8 0.3 0.5 0.5 0.2 1.8 -0.9 2.4 -2.9 4.4 -2.8 3.1 -5.1 4.9 -19 16.3"/><path d="M404.2 315.1l11.6 10.2 10.6 12.8 9.3 15.1"/><path class="ai s5" d="M404.2 315.1l11.6 10.2 10.6 12.8 9.3 15.1"/><path d="M377.3 392l1.8 6.7 1.3 6.8 0.8 6.9 0.4 6.8 -0.2 6.7 -0.8 6.4 -1.3 6.1"/><path class="ai s1" d="M377.3 392l1.8 6.7 1.3 6.8 0.8 6.9 0.4 6.8 -0.2 6.7 -0.8 6.4 -1.3 6.1"/><path d="M470.4 456.7l-6.2 21.7 -9.6 18.9 -12.3 15.3"/><path class="ai s3" d="M470.4 456.7l-6.2 21.7 -9.6 18.9 -12.3 15.3"/><path d="M408.6 525.8l-10 6.7 -10.3 5 -10.4 3.3 -10.4 1.6 -10.3 0.2"/><path class="ai s4" d="M408.6 525.8l-10 6.7 -10.3 5 -10.4 3.3 -10.4 1.6 -10.3 0.2"/><path d="M359.1 386.2l3 9.4 2.1 9.7 1.1 9.7 0.2 4.8 -0.7 9 -0.7 4.2"/><path class="ai s0" d="M359.1 386.2l3 9.4 2.1 9.7 1.1 9.7 0.2 4.8 -0.7 9 -0.7 4.2"/><path d="M334.3 290.8l6.3 0.4 6.4 1.4 6.3 2.5 6.2 3.3 6 4.3 5.8 5.2 5.5 6.1"/><path class="ai s5" d="M334.3 290.8l6.3 0.4 6.4 1.4 6.3 2.5 6.2 3.3 6 4.3 5.8 5.2 5.5 6.1"/><path d="M351.8 350.2l3.9 3.7 3.8 4.2 3.6 4.7 3.4 5.1 3.2 5.5 2.8 5.9 2.6 6.2 2.2 6.5"/><path class="ai s4" d="M351.8 350.2l3.9 3.7 3.8 4.2 3.6 4.7 3.4 5.1 3.2 5.5 2.8 5.9 2.6 6.2 2.2 6.5"/><path d="M286.1 311.7l-2.3 2.7 -2.4 3.8 -1.1 2.3 -0.8 2.9 -0.1 1.7 0.5 2.2 1.2 1.7 1.9 1.2 3.5 1.2 13.6 2.7 7.3 2"/><path class="ai s0" d="M286.1 311.7l-2.3 2.7 -2.4 3.8 -1.1 2.3 -0.8 2.9 -0.1 1.7 0.5 2.2 1.2 1.7 1.9 1.2 3.5 1.2 13.6 2.7 7.3 2"/><path d="M353.7 334.7l5.2 3.6 5 4.4 4.9 5.1 4.6 5.8 4.3 6.4 3.9 7.1 3.5 7.5"/><path class="ai s5" d="M353.7 334.7l5.2 3.6 5 4.4 4.9 5.1 4.6 5.8 4.3 6.4 3.9 7.1 3.5 7.5"/><path d="M452.8 459.1l-6 17.7 -8.3 15.4 -10.3 12.6"/><path class="ai s3" d="M452.8 459.1l-6 17.7 -8.3 15.4 -10.3 12.6"/><path d="M398.2 469.1l-4.6 7.7 -5.1 6.7 -5.6 5.7 -6.1 4.6 -6.3 3.5 -6.7 2.3"/><path class="ai s2" d="M398.2 469.1l-4.6 7.7 -5.1 6.7 -5.6 5.7 -6.1 4.6 -6.3 3.5 -6.7 2.3"/><path d="M395.2 350.3l6.6 9.3 5.8 10.5 4.7 11.6 3.7 12.3"/><path class="ai s4" d="M395.2 350.3l6.6 9.3 5.8 10.5 4.7 11.6 3.7 12.3"/><path d="M384.4 326.4l8.2 7.3 7.6 8.9 7 10.3 6 11.7"/><path class="ai s5" d="M384.4 326.4l8.2 7.3 7.6 8.9 7 10.3 6 11.7"/><path d="M354.7 401.5l0.6 11.8 -0.2 7.6 -0.7 7.2 -1.4 6.7 -2.2 5.7 -2.8 4.5 -1.7 1.8"/><path class="ai s0" d="M354.7 401.5l0.6 11.8 -0.2 7.6 -0.7 7.2 -1.4 6.7 -2.2 5.7 -2.8 4.5 -1.7 1.8"/><path d="M347.6 368l4.6 7.4 2.1 3.9 3.9 8.5 1.6 4.4 2.8 9.2 1 4.7 1.2 9.3"/><path class="ai s1" d="M347.6 368l4.6 7.4 2.1 3.9 3.9 8.5 1.6 4.4 2.8 9.2 1 4.7 1.2 9.3"/><path d="M395.4 361l5.4 9.4 4.5 10.4 3.6 11.1 2.5 11.5"/><path class="ai s4" d="M395.4 361l5.4 9.4 4.5 10.4 3.6 11.1 2.5 11.5"/><path d="M342.1 377.2l2.9 6.4 2.7 6.6 2.3 6.9 1.9 7 1.3 7.1 0.7 6.8 0 3.3"/><path class="ai s0" d="M342.1 377.2l2.9 6.4 2.7 6.6 2.3 6.9 1.9 7 1.3 7.1 0.7 6.8 0 3.3"/><path d="M429.5 361.5l7.3 15.8 5.4 17.2 3.1 18"/><path class="ai s4" d="M429.5 361.5l7.3 15.8 5.4 17.2 3.1 18"/><path d="M385.6 324.4l8.4 7.4 7.9 9.2 7.1 10.6 6.2 11.9"/><path class="ai s5" d="M385.6 324.4l8.4 7.4 7.9 9.2 7.1 10.6 6.2 11.9"/><path d="M377.3 457.8l-2.8 5.2 -3.1 4.7 -3.3 4.3 -3.6 3.7 -3.8 3.2 -4 2.5 -4.2 2 -4.3 1.2 -4.5 0.6"/><path class="ai s1" d="M377.3 457.8l-2.8 5.2 -3.1 4.7 -3.3 4.3 -3.6 3.7 -3.8 3.2 -4 2.5 -4.2 2 -4.3 1.2 -4.5 0.6"/><path d="M411.4 403.4l1.3 11.8 0.1 11.6 -1.1 11.4 -2.3 10.7"/><path class="ai s2" d="M411.4 403.4l1.3 11.8 0.1 11.6 -1.1 11.4 -2.3 10.7"/><path d="M397.5 360.1l5.5 9.8 4.6 10.7 3.7 11.5 2.5 12"/><path class="ai s4" d="M397.5 360.1l5.5 9.8 4.6 10.7 3.7 11.5 2.5 12"/><path d="M402.1 377.2l3.9 10.5 2.9 11.1 1.8 11.4 0.6 11.5"/><path class="ai s3" d="M402.1 377.2l3.9 10.5 2.9 11.1 1.8 11.4 0.6 11.5"/><path d="M379.5 465.6l-3.4 5.2 -3.6 4.7 -3.8 4.2 -4.1 3.5 -4.3 3 -4.5 2.3 -4.6 1.6 -4.7 0.9 -4.9 0.2"/><path class="ai s2" d="M379.5 465.6l-3.4 5.2 -3.6 4.7 -3.8 4.2 -4.1 3.5 -4.3 3 -4.5 2.3 -4.6 1.6 -4.7 0.9 -4.9 0.2"/><path d="M368.3 480.5l-7.2 6.2 -3.7 2.5 -3.7 2.2 -3.9 1.7 -3.9 1.3 -4 0.9 -4.1 0.4 -4.1-0.1 -4.1-0.5 -4.2-1.1"/><path class="ai s3" d="M368.3 480.5l-7.2 6.2 -3.7 2.5 -3.7 2.2 -3.9 1.7 -3.9 1.3 -4 0.9 -4.1 0.4 -4.1-0.1 -4.1-0.5 -4.2-1.1"/><path d="M388 456l-3 6.7 -3.5 6.1 -3.9 5.4 -4.3 4.7 -4.5 4 -4.9 3.1 -5.1 2.4 -5.2 1.4"/><path class="ai s1" d="M388 456l-3 6.7 -3.5 6.1 -3.9 5.4 -4.3 4.7 -4.5 4 -4.9 3.1 -5.1 2.4 -5.2 1.4"/><path d="M336 289.1l6.4 0.8 6.3 1.7 6.3 2.7 6.1 3.6 5.9 4.6 5.6 5.4 5.3 6.2"/><path class="ai s5" d="M336 289.1l6.4 0.8 6.3 1.7 6.3 2.7 6.1 3.6 5.9 4.6 5.6 5.4 5.3 6.2"/><path d="M338.1 292.7l6.3 1.1 6.3 2 6.3 3 6.1 3.9 5.9 4.9 5.6 5.7 5.3 6.5"/><path class="ai s5" d="M338.1 292.7l6.3 1.1 6.3 2 6.3 3 6.1 3.9 5.9 4.9 5.6 5.7 5.3 6.5"/><path d="M413.8 404.1l1.2 12.1 0 12.1 -1.3 11.7 -2.5 11"/><path class="ai s2" d="M413.8 404.1l1.2 12.1 0 12.1 -1.3 11.7 -2.5 11"/><path d="M442.1 361.7l8.1 18.5 5.5 20.2 2.5 20.9"/><path class="ai s4" d="M442.1 361.7l8.1 18.5 5.5 20.2 2.5 20.9"/><path d="M426 337.6l10.3 14.9 8.6 17.3 6.4 19.1"/><path class="ai s5" d="M426 337.6l10.3 14.9 8.6 17.3 6.4 19.1"/><path d="M339.5 317.8l4.8 2.1 4.9 2.8 4.7 3.5 4.7 4 4.5 4.7 4.4 5.3 4.1 5.8 3.8 6.4"/><path class="ai s5" d="M339.5 317.8l4.8 2.1 4.9 2.8 4.7 3.5 4.7 4 4.5 4.7 4.4 5.3 4.1 5.8 3.8 6.4"/><path d="M404.6 522.7l-9.2 6.3 -9.4 4.8 -9.6 3.3 -9.6 1.9 -9.5 0.6"/><path class="ai s4" d="M404.6 522.7l-9.2 6.3 -9.4 4.8 -9.6 3.3 -9.6 1.9 -9.5 0.6"/><path d="M445.3 412.5l0.6 18.2 -1.8 17.6 -4.3 16.3"/><path class="ai s3" d="M445.3 412.5l0.6 18.2 -1.8 17.6 -4.3 16.3"/><path d="M458.2 421.3l-0.6 20.7 -3.6 19.7 -6.6 17.7"/><path class="ai s3" d="M458.2 421.3l-0.6 20.7 -3.6 19.7 -6.6 17.7"/><path d="M457.5 426.6l-1.3 20.4 -4.4 19 -7.1 17"/><path class="ai s3" d="M457.5 426.6l-1.3 20.4 -4.4 19 -7.1 17"/><path d="M381.2 301l10.1 6.2 9.7 8.3 9.1 10.1 8.3 12"/><path class="ai s5" d="M381.2 301l10.1 6.2 9.7 8.3 9.1 10.1 8.3 12"/><path d="M431.1 344.7l9.7 16.1 7.7 18.3 5.3 19.7"/><path class="ai s5" d="M431.1 344.7l9.7 16.1 7.7 18.3 5.3 19.7"/><path d="M365.8 431.4l-4.2 12.3 -3.4 7.3 -3.9 6.4 -2.2 2.7 -2.4 2.4 -2.4 2 -2.7 1.6 -2.7 1.2 -2.9 0.8"/><path class="ai s0" d="M365.8 431.4l-4.2 12.3 -3.4 7.3 -3.9 6.4 -2.2 2.7 -2.4 2.4 -2.4 2 -2.7 1.6 -2.7 1.2 -2.9 0.8"/><path d="M342.8 286.1l6.9 1.3 6.8 2.5 6.8 3.6 6.4 4.6 6.2 5.6 5.9 6.5"/><path class="ai s5" d="M342.8 286.1l6.9 1.3 6.8 2.5 6.8 3.6 6.4 4.6 6.2 5.6 5.9 6.5"/><path d="M343.1 292.2l6.5 1.8 6.4 2.7 6.2 3.7 6.1 4.7 5.8 5.6 5.5 6.4"/><path class="ai s5" d="M343.1 292.2l6.5 1.8 6.4 2.7 6.2 3.7 6.1 4.7 5.8 5.6 5.5 6.4"/><path d="M388.3 465.6l-3.7 6.3 -4.2 5.8 -4.4 5 -4.8 4.2 -5.1 3.4 -5.3 2.6 -5.5 1.7"/><path class="ai s2" d="M388.3 465.6l-3.7 6.3 -4.2 5.8 -4.4 5 -4.8 4.2 -5.1 3.4 -5.3 2.6 -5.5 1.7"/><path d="M443.9 366.6l7.3 19 4.6 20.2 1.7 20.8"/><path class="ai s4" d="M443.9 366.6l7.3 19 4.6 20.2 1.7 20.8"/><path d="M416 394l2.3 12.8 1.1 13 -0.4 12.7 -1.8 12.3"/><path class="ai s3" d="M416 394l2.3 12.8 1.1 13 -0.4 12.7 -1.8 12.3"/><path d="M457.3 362.6l8.8 22.1 5.3 23.9"/><path class="ai s4" d="M457.3 362.6l8.8 22.1 5.3 23.9"/><path d="M405.2 459.8l-4 9.1 -4.7 8.1 -5.3 7.1 -5.9 6 -6.3 4.8 -6.7 3.7"/><path class="ai s2" d="M405.2 459.8l-4 9.1 -4.7 8.1 -5.3 7.1 -5.9 6 -6.3 4.8 -6.7 3.7"/><path d="M454.4 449.4l-4.6 18.6 -7 16.6 -9.2 14.1"/><path class="ai s3" d="M454.4 449.4l-4.6 18.6 -7 16.6 -9.2 14.1"/><path d="M337.7 288.4l6.2 1.1 6.2 2.1 6 3 5.9 3.8 5.6 4.8 5.4 5.5 5 6.3"/><path class="ai s5" d="M337.7 288.4l6.2 1.1 6.2 2.1 6 3 5.9 3.8 5.6 4.8 5.4 5.5 5 6.3"/><path d="M164.9 571.6l5.3 8.7 5.7 7.7 6.1 6.5 6.5 5.2 6.8 3.7 7.1 2.1"/><path class="ai s5" d="M164.9 571.6l5.3 8.7 5.7 7.7 6.1 6.5 6.5 5.2 6.8 3.7 7.1 2.1"/><path d="M395.1 424l-0.8 8.7 -1.5 8.3 -2.2 7.8 -2.8 7.2 -3.4 6.6 -3.9 5.7"/><path class="ai s1" d="M395.1 424l-0.8 8.7 -1.5 8.3 -2.2 7.8 -2.8 7.2 -3.4 6.6 -3.9 5.7"/><path d="M394.3 316.3l9.8 8.8 9.1 10.7 8.1 12.7 7 14.2"/><path class="ai s5" d="M394.3 316.3l9.8 8.8 9.1 10.7 8.1 12.7 7 14.2"/><path d="M334.5 346.9l4.9 5.4 7.2 9.5 6.7 11.4 4 8.5 1.8 4.5"/><path class="ai s3" d="M334.5 346.9l4.9 5.4 7.2 9.5 6.7 11.4 4 8.5 1.8 4.5"/><path d="M393.5 475.7l-4.6 6.7 -5 5.9 -5.3 5.1 -5.6 4.2 -5.9 3.3 -6.1 2.3 -6.1 1.5"/><path class="ai s2" d="M393.5 475.7l-4.6 6.7 -5 5.9 -5.3 5.1 -5.6 4.2 -5.9 3.3 -6.1 2.3 -6.1 1.5"/><path d="M346.9 294.3l6.5 2.3 6.3 3.3 6.2 4.3 6 5.2 5.7 6.1 5.3 6.9"/><path class="ai s5" d="M346.9 294.3l6.5 2.3 6.3 3.3 6.2 4.3 6 5.2 5.7 6.1 5.3 6.9"/><path d="M391.9 312l9.8 8.3 9.2 10.3 8.3 12.1 7.2 13.8"/><path class="ai s5" d="M391.9 312l9.8 8.3 9.2 10.3 8.3 12.1 7.2 13.8"/><path d="M395.8 463.9l-3.9 7.4 -4.3 6.7 -4.8 5.9 -5.2 5 -5.5 4.2 -5.7 3.2 -6 2.2"/><path class="ai s2" d="M395.8 463.9l-3.9 7.4 -4.3 6.7 -4.8 5.9 -5.2 5 -5.5 4.2 -5.7 3.2 -6 2.2"/><path d="M412 356.2l6.5 12.4 5.3 13.6 3.7 14.5 2.2 14.9"/><path class="ai s4" d="M412 356.2l6.5 12.4 5.3 13.6 3.7 14.5 2.2 14.9"/><path d="M341.3 290.6l6.3 1.6 6.2 2.6 6.1 3.5 5.9 4.4 5.6 5.2 5.3 6.1 5 6.8"/><path class="ai s5" d="M341.3 290.6l6.3 1.6 6.2 2.6 6.1 3.5 5.9 4.4 5.6 5.2 5.3 6.1 5 6.8"/><path d="M308.9 244l5.8-4 5.5-2.9 5.2-1.7 4.8-0.7 4.3 0.1 3.7 1 3 1.6 2.5 2.1 1.8 2.5 1.1 2.8 0.6 3"/><path class="ai s3" d="M308.9 244l5.8-4 5.5-2.9 5.2-1.7 4.8-0.7 4.3 0.1 3.7 1 3 1.6 2.5 2.1 1.8 2.5 1.1 2.8 0.6 3"/><path d="M429.7 411.6l0.5 15 -1.2 14.6 -3 13.8 -4.5 12.7"/><path class="ai s3" d="M429.7 411.6l0.5 15 -1.2 14.6 -3 13.8 -4.5 12.7"/><path d="M395 471.5l-4.4 7 -4.8 6.3 -5.1 5.4 -5.5 4.6 -5.8 3.6 -5.9 2.8 -6.2 1.8"/><path class="ai s2" d="M395 471.5l-4.4 7 -4.8 6.3 -5.1 5.4 -5.5 4.6 -5.8 3.6 -5.9 2.8 -6.2 1.8"/><path d="M328.8 282.6l5.2 0.6 5.1 1.3 5 2.1 4.8 2.7 4.6 3.3 4.5 4 4.2 4.5 3.9 5.1"/><path class="ai s5" d="M328.8 282.6l5.2 0.6 5.1 1.3 5 2.1 4.8 2.7 4.6 3.3 4.5 4 4.2 4.5 3.9 5.1"/><path d="M388.3 468l-3.8 6.2 -4.1 5.6 -4.5 4.9 -4.6 4.2 -4.9 3.5 -5.1 2.8 -5.3 2 -5.3 1.3"/><path class="ai s2" d="M388.3 468l-3.8 6.2 -4.1 5.6 -4.5 4.9 -4.6 4.2 -4.9 3.5 -5.1 2.8 -5.3 2 -5.3 1.3"/><path d="M385.8 277.9l12.6 6 12.1 8.7 11.4 11.2 10.4 13.7"/><path class="ai s5" d="M385.8 277.9l12.6 6 12.1 8.7 11.4 11.2 10.4 13.7"/><path d="M395.8 464.1l-3.9 7.4 -4.3 6.7 -4.7 5.9 -5.1 5 -5.5 4.2 -5.6 3.3 -5.9 2.4"/><path class="ai s2" d="M395.8 464.1l-3.9 7.4 -4.3 6.7 -4.7 5.9 -5.1 5 -5.5 4.2 -5.6 3.3 -5.9 2.4"/><path d="M348.7 292.7l6.5 2.5 6.4 3.6 6.1 4.5 6 5.4 5.6 6.4 5.2 7.1"/><path class="ai s5" d="M348.7 292.7l6.5 2.5 6.4 3.6 6.1 4.5 6 5.4 5.6 6.4 5.2 7.1"/><path d="M361.3 332.6l4.9 4.9 4.8 5.6 4.4 6.2 4.2 6.8 3.7 7.4 3.4 7.9"/><path class="ai s5" d="M361.3 332.6l4.9 4.9 4.8 5.6 4.4 6.2 4.2 6.8 3.7 7.4 3.4 7.9"/><path d="M385.1 374.6l3.1 8.1 2.4 8.4 1.9 8.6 1.2 8.8 0.6 8.9 -0.2 8.6"/><path class="ai s3" d="M385.1 374.6l3.1 8.1 2.4 8.4 1.9 8.6 1.2 8.8 0.6 8.9 -0.2 8.6"/><path d="M343.9 290l6.4 2 6.3 2.8 6.2 3.9 5.9 4.8 5.6 5.6 5.3 6.4 5 7.2"/><path class="ai s5" d="M343.9 290l6.4 2 6.3 2.8 6.2 3.9 5.9 4.8 5.6 5.6 5.3 6.4 5 7.2"/><path d="M471.4 408.6l1.5 24.4 -2.5 23.7"/><path class="ai s3" d="M471.4 408.6l1.5 24.4 -2.5 23.7"/><path d="M391 463.2l-3.6 6.8 -4.1 6.1 -4.3 5.4 -4.7 4.7 -5 3.9 -5.2 3.1 -5.4 2.3"/><path class="ai s2" d="M391 463.2l-3.6 6.8 -4.1 6.1 -4.3 5.4 -4.7 4.7 -5 3.9 -5.2 3.1 -5.4 2.3"/><path d="M447.3 465l-6.2 16.3 -8.1 14.3 -9.7 11.8"/><path class="ai s3" d="M447.3 465l-6.2 16.3 -8.1 14.3 -9.7 11.8"/><path d="M434.9 459.6l-5 14.1 -6.5 12.6 -7.8 10.8 -8.8 8.8"/><path class="ai s2" d="M434.9 459.6l-5 14.1 -6.5 12.6 -7.8 10.8 -8.8 8.8"/><path d="M432.3 512.7l-10.3 11 -11.1 8.8 -11.6 6.5 -11.9 4.3"/><path class="ai s3" d="M432.3 512.7l-10.3 11 -11.1 8.8 -11.6 6.5 -11.9 4.3"/><path d="M334.1 284.5l5.5 1.1 5.4 1.8 5.3 2.7 5.2 3.4 4.9 4 4.6 4.8 4.4 5.3 4.1 5.9"/><path class="ai s5" d="M334.1 284.5l5.5 1.1 5.4 1.8 5.3 2.7 5.2 3.4 4.9 4 4.6 4.8 4.4 5.3 4.1 5.9"/><path d="M361.4 268.4l9.8 2.6 9.6 4.3 9.3 6.2 8.7 7.7 8 9.3"/><path class="ai s5" d="M361.4 268.4l9.8 2.6 9.6 4.3 9.3 6.2 8.7 7.7 8 9.3"/><path d="M396.6 458.3l-3.5 7.7 -4 7 -4.4 6.3 -4.8 5.5 -5.1 4.6 -5.5 3.7 -5.7 2.9"/><path class="ai s2" d="M396.6 458.3l-3.5 7.7 -4 7 -4.4 6.3 -4.8 5.5 -5.1 4.6 -5.5 3.7 -5.7 2.9"/><path d="M453.8 398.8l2.5 20.5 -0.3 20.4 -3.2 19.4"/><path class="ai s3" d="M453.8 398.8l2.5 20.5 -0.3 20.4 -3.2 19.4"/><path d="M394.9 461.2l-3.6 7.3 -4.1 6.7 -4.4 5.9 -4.8 5.2 -5.1 4.4 -5.4 3.5 -5.6 2.6"/><path class="ai s2" d="M394.9 461.2l-3.6 7.3 -4.1 6.7 -4.4 5.9 -4.8 5.2 -5.1 4.4 -5.4 3.5 -5.6 2.6"/><path d="M331.4 292.4l4.6 1.4 4.5 2 4.4 2.5 4.3 3.2 4.1 3.6 4 4.2 3.8 4.6 3.5 5 3.4 5.5"/><path class="ai s5" d="M331.4 292.4l4.6 1.4 4.5 2 4.4 2.5 4.3 3.2 4.1 3.6 4 4.2 3.8 4.6 3.5 5 3.4 5.5"/><path d="M350.3 303.9l5.8 3.2 5.6 4 5.5 4.8 5.2 5.6 5 6.4 4.6 7 4.2 7.7"/><path class="ai s5" d="M350.3 303.9l5.8 3.2 5.6 4 5.5 4.8 5.2 5.6 5 6.4 4.6 7 4.2 7.7"/><path d="M413.3 337.6l8.3 12.6 7 14.3 5.5 15.5"/><path class="ai s5" d="M413.3 337.6l8.3 12.6 7 14.3 5.5 15.5"/><path d="M417.5 432.6l-1.8 12 -3 11.3 -4 10.4 -5 9.3"/><path class="ai s2" d="M417.5 432.6l-1.8 12 -3 11.3 -4 10.4 -5 9.3"/><path d="M425.5 418.7l-0.4 14 -1.9 13.4 -3.4 12.6 -4.6 11.4"/><path class="ai s2" d="M425.5 418.7l-0.4 14 -1.9 13.4 -3.4 12.6 -4.6 11.4"/><path d="M329.2 303.7l3.5 1.9 6.9 4.8 3.3 2.9 6.3 7 6 8.2 5.4 9.4"/><path class="ai s5" d="M329.2 303.7l3.5 1.9 6.9 4.8 3.3 2.9 6.3 7 6 8.2 5.4 9.4"/><path d="M345.5 293.1l5.9 2.5 5.8 3.3 5.6 4.1 5.4 5 5.1 5.7 4.8 6.4 4.4 7"/><path class="ai s5" d="M345.5 293.1l5.9 2.5 5.8 3.3 5.6 4.1 5.4 5 5.1 5.7 4.8 6.4 4.4 7"/><path d="M385.8 451.6l-2.7 6.4 -3 5.8 -3.3 5.4 -3.6 4.8 -3.9 4.3 -4.1 3.7 -4.3 3 -4.5 2.3"/><path class="ai s1" d="M385.8 451.6l-2.7 6.4 -3 5.8 -3.3 5.4 -3.6 4.8 -3.9 4.3 -4.1 3.7 -4.3 3 -4.5 2.3"/><path d="M395.4 457.1l-3.4 7.5 -3.7 6.9 -4.2 6.2 -4.6 5.4 -4.9 4.7 -5.2 3.8 -5.4 3"/><path class="ai s2" d="M395.4 457.1l-3.4 7.5 -3.7 6.9 -4.2 6.2 -4.6 5.4 -4.9 4.7 -5.2 3.8 -5.4 3"/><path d="M451.3 388.9l3.8 20.2 1 20.4 -1.7 19.9"/><path class="ai s4" d="M451.3 388.9l3.8 20.2 1 20.4 -1.7 19.9"/><path d="M392.6 339.9l6.3 9.1 5.6 10.3 4.8 11.1 3.8 11.9"/><path class="ai s5" d="M392.6 339.9l6.3 9.1 5.6 10.3 4.8 11.1 3.8 11.9"/><path d="M373.7 313.3l7.1 6.1 6.7 7.2 6.2 8.4 5.7 9.3 5 10.3"/><path class="ai s5" d="M373.7 313.3l7.1 6.1 6.7 7.2 6.2 8.4 5.7 9.3 5 10.3"/><path d="M354.3 290.9l6.8 3.2 6.6 4.3 6.3 5.3 6 6.2 5.6 7.2 5.1 8"/><path class="ai s5" d="M354.3 290.9l6.8 3.2 6.6 4.3 6.3 5.3 6 6.2 5.6 7.2 5.1 8"/><path d="M428.9 475.1l-6.3 12.3 -7.4 10.7 -8.3 8.9 -9 7.2"/><path class="ai s2" d="M428.9 475.1l-6.3 12.3 -7.4 10.7 -8.3 8.9 -9 7.2"/><path d="M173.2 578.8l5.6 7.1 5.9 6.1 6.3 4.7 6.5 3.4 6.8 2 6.8 0.5"/><path class="ai s5" d="M173.2 578.8l5.6 7.1 5.9 6.1 6.3 4.7 6.5 3.4 6.8 2 6.8 0.5"/><path d="M391.9 459.8l-3.4 6.9 -3.7 6.3 -4.1 5.7 -4.5 5 -4.7 4.2 -5 3.6 -5.1 2.7"/><path class="ai s2" d="M391.9 459.8l-3.4 6.9 -3.7 6.3 -4.1 5.7 -4.5 5 -4.7 4.2 -5 3.6 -5.1 2.7"/><path d="M427.6 419.2l-0.5 14.3 -2 13.8 -3.5 12.8 -4.8 11.8"/><path class="ai s2" d="M427.6 419.2l-0.5 14.3 -2 13.8 -3.5 12.8 -4.8 11.8"/><path d="M360.3 301.2l6.6 4.2 6.4 5.2 6.2 6.2 5.7 7.2 5.3 8 4.9 8.8"/><path class="ai s5" d="M360.3 301.2l6.6 4.2 6.4 5.2 6.2 6.2 5.7 7.2 5.3 8 4.9 8.8"/><path d="M319.4 334.1l4.7 10.1 13.5 24.2 4.5 8.8"/><path class="ai s1" d="M319.4 334.1l4.7 10.1 13.5 24.2 4.5 8.8"/><path d="M414.3 431.1l-1.6 11.5 -2.7 10.8 -3.6 10 -4.5 9.1 -5.3 8.1"/><path class="ai s2" d="M414.3 431.1l-1.6 11.5 -2.7 10.8 -3.6 10 -4.5 9.1 -5.3 8.1"/><path d="M412.7 448.7l-3.3 10.6 -4 9.7 -4.9 8.7 -5.5 7.7 -6.1 6.5"/><path class="ai s2" d="M412.7 448.7l-3.3 10.6 -4 9.7 -4.9 8.7 -5.5 7.7 -6.1 6.5"/><path d="M413.2 364.6l5.1 12.6 3.7 13.5 2.5 13.9 1 14.1"/><path class="ai s4" d="M413.2 364.6l5.1 12.6 3.7 13.5 2.5 13.9 1 14.1"/><path d="M403.2 471.3l-4.7 8.1 -5.1 7.3 -5.6 6.3 -5.9 5.4 -6.2 4.3 -6.5 3.4"/><path class="ai s2" d="M403.2 471.3l-4.7 8.1 -5.1 7.3 -5.6 6.3 -5.9 5.4 -6.2 4.3 -6.5 3.4"/><path d="M326.4 251.1l6.1-1 5.8-0.1 5.6 1 5.1 1.9 4.6 2.6 4.2 3.3 3.7 3.9 3.1 4.3 2.7 4.7"/><path class="ai s4" d="M326.4 251.1l6.1-1 5.8-0.1 5.6 1 5.1 1.9 4.6 2.6 4.2 3.3 3.7 3.9 3.1 4.3 2.7 4.7"/><path d="M350.3 288.9l6 3 5.9 3.9 5.6 4.7 5.4 5.6 5 6.2 4.6 7"/><path class="ai s5" d="M350.3 288.9l6 3 5.9 3.9 5.6 4.7 5.4 5.6 5 6.2 4.6 7"/><path d="M398.1 457.3l-3.4 7.9 -3.9 7.2 -4.4 6.5 -4.8 5.7 -5.2 4.9 -5.4 4"/><path class="ai s2" d="M398.1 457.3l-3.4 7.9 -3.9 7.2 -4.4 6.5 -4.8 5.7 -5.2 4.9 -5.4 4"/><path d="M436.4 452.9l-4.2 14.6 -5.8 13.3 -7 11.7 -8.2 9.8"/><path class="ai s2" d="M436.4 452.9l-4.2 14.6 -5.8 13.3 -7 11.7 -8.2 9.8"/><path d="M390.6 398.8l0.8 8.5 0.3 8.4 -0.2 8.3 -0.9 8.1 -1.4 7.8 -2 7.4"/><path class="ai s2" d="M390.6 398.8l0.8 8.5 0.3 8.4 -0.2 8.3 -0.9 8.1 -1.4 7.8 -2 7.4"/><path d="M423.1 518l-9.7 9.2 -10.2 7.4 -10.5 5.5 -10.6 3.9"/><path class="ai s3" d="M423.1 518l-9.7 9.2 -10.2 7.4 -10.5 5.5 -10.6 3.9"/><path d="M415.2 363.5l5.1 13 3.9 13.9 2.4 14.3 1 14.5"/><path class="ai s4" d="M415.2 363.5l5.1 13 3.9 13.9 2.4 14.3 1 14.5"/><path d="M385 429.9l-1.4 6.8 -1.7 6.5 -2.1 6.1 -2.4 5.8 -2.7 5.4 -3.1 4.8 -3.3 4.3 -3.6 3.8"/><path class="ai s1" d="M385 429.9l-1.4 6.8 -1.7 6.5 -2.1 6.1 -2.4 5.8 -2.7 5.4 -3.1 4.8 -3.3 4.3 -3.6 3.8"/><path d="M375.8 318.2l6.5 6.5 6 7.6 5.6 8.6 5 9.4 4.3 10.1"/><path class="ai s5" d="M375.8 318.2l6.5 6.5 6 7.6 5.6 8.6 5 9.4 4.3 10.1"/><path d="M386.7 371.4l2.8 8.3 2.4 8.6 1.7 8.9 1.2 9 0.5 9 -0.2 8.8"/><path class="ai s3" d="M386.7 371.4l2.8 8.3 2.4 8.6 1.7 8.9 1.2 9 0.5 9 -0.2 8.8"/><path d="M400.3 289.8l11.4 9.4 10.6 11.6 9.5 13.9"/><path class="ai s5" d="M400.3 289.8l11.4 9.4 10.6 11.6 9.5 13.9"/><path d="M404.2 480.3l-5.2 7.9 -5.7 6.9 -6.1 6 -6.4 5 -6.6 3.9 -6.8 3"/><path class="ai s2" d="M404.2 480.3l-5.2 7.9 -5.7 6.9 -6.1 6 -6.4 5 -6.6 3.9 -6.8 3"/><path d="M435.7 353.2l7.6 17.2 5.5 18.5 3.3 19.4"/><path class="ai s4" d="M435.7 353.2l7.6 17.2 5.5 18.5 3.3 19.4"/><path d="M440 430.1l-1.8 16.3 -3.7 15.4 -5.3 14"/><path class="ai s3" d="M440 430.1l-1.8 16.3 -3.7 15.4 -5.3 14"/><path d="M367.3 294l7.3 4.9 7 6.2 6.5 7.2 6 8.3 5.5 9.2"/><path class="ai s5" d="M367.3 294l7.3 4.9 7 6.2 6.5 7.2 6 8.3 5.5 9.2"/><path d="M370.9 293.6l7.8 5.3 7.4 6.6 7 7.9 6.4 9 5.8 10"/><path class="ai s5" d="M370.9 293.6l7.8 5.3 7.4 6.6 7 7.9 6.4 9 5.8 10"/><path d="M412.5 434.7l-2 11 -2.9 10.3 -3.8 9.5 -4.5 8.7 -5.2 7.6"/><path class="ai s2" d="M412.5 434.7l-2 11 -2.9 10.3 -3.8 9.5 -4.5 8.7 -5.2 7.6"/><path d="M399.6 435.2l-1.9 8.8 -2.5 8.3 -3.1 7.8 -3.5 7.1 -4.1 6.4 -4.5 5.7"/><path class="ai s1" d="M399.6 435.2l-1.9 8.8 -2.5 8.3 -3.1 7.8 -3.5 7.1 -4.1 6.4 -4.5 5.7"/><path d="M411.3 451.5l-3.4 10.1 -4.1 9.4 -4.9 8.4 -5.4 7.4 -6 6.3"/><path class="ai s2" d="M411.3 451.5l-3.4 10.1 -4.1 9.4 -4.9 8.4 -5.4 7.4 -6 6.3"/><path d="M393 341.3l5.6 9.2 4.9 10.2 4.1 11 3.3 11.5"/><path class="ai s4" d="M393 341.3l5.6 9.2 4.9 10.2 4.1 11 3.3 11.5"/><path d="M398.9 450.9l-3 8.1 -3.5 7.6 -4 6.9 -4.4 6.1 -4.7 5.4 -5.1 4.5"/><path class="ai s1" d="M398.9 450.9l-3 8.1 -3.5 7.6 -4 6.9 -4.4 6.1 -4.7 5.4 -5.1 4.5"/><path d="M375.4 352.4l3.6 6.8 3.1 7.3 2.8 7.7 2.4 8 1.9 8.2 1.4 8.4"/><path class="ai s4" d="M375.4 352.4l3.6 6.8 3.1 7.3 2.8 7.7 2.4 8 1.9 8.2 1.4 8.4"/><path d="M331.6 261.4l5.3 0.5 5.1 1.3 4.8 2.1 4.5 2.8 4.1 3.3 3.7 4 3.4 4.3 2.9 4.8 2.6 5"/><path class="ai s5" d="M331.6 261.4l5.3 0.5 5.1 1.3 4.8 2.1 4.5 2.8 4.1 3.3 3.7 4 3.4 4.3 2.9 4.8 2.6 5"/><path d="M408.2 472.5l-5 8.8 -5.4 7.9 -6 6.8 -6.3 5.8 -6.7 4.7"/><path class="ai s2" d="M408.2 472.5l-5 8.8 -5.4 7.9 -6 6.8 -6.3 5.8 -6.7 4.7"/><path d="M413.1 382.3l2.8 12.4 1.7 12.7 0.5 12.7 -0.6 12.5"/><path class="ai s3" d="M413.1 382.3l2.8 12.4 1.7 12.7 0.5 12.7 -0.6 12.5"/><path d="M365.3 282.6l7.4 4.5 7.1 5.6 6.7 6.8 6.2 7.9 5.6 8.7"/><path class="ai s5" d="M365.3 282.6l7.4 4.5 7.1 5.6 6.7 6.8 6.2 7.9 5.6 8.7"/><path d="M416.5 302.8l11.7 12.6 10.5 15.2 8.8 17.3"/><path class="ai s5" d="M416.5 302.8l11.7 12.6 10.5 15.2 8.8 17.3"/><path d="M379 313.7l6.7 7 6.3 8 5.7 9.1 5.1 9.9 4.3 10.7"/><path class="ai s5" d="M379 313.7l6.7 7 6.3 8 5.7 9.1 5.1 9.9 4.3 10.7"/><path d="M398.3 450.1l-2.9 8.1 -3.4 7.4 -3.9 6.9 -4.2 6.1 -4.6 5.4 -5 4.6"/><path class="ai s1" d="M398.3 450.1l-2.9 8.1 -3.4 7.4 -3.9 6.9 -4.2 6.1 -4.6 5.4 -5 4.6"/><path d="M365.8 294.3l6.6 5 6.2 5.9 5.9 6.9 5.4 7.8 5 8.5"/><path class="ai s5" d="M365.8 294.3l6.6 5 6.2 5.9 5.9 6.9 5.4 7.8 5 8.5"/><path d="M381.8 290.1l8.6 6.7 8.2 8.3 7.5 9.6 6.8 11"/><path class="ai s5" d="M381.8 290.1l8.6 6.7 8.2 8.3 7.5 9.6 6.8 11"/><path d="M400.3 448.4l-2.8 8.4 -3.4 7.8 -3.9 7.1 -4.3 6.5 -4.6 5.6 -5.1 4.9"/><path class="ai s1" d="M400.3 448.4l-2.8 8.4 -3.4 7.8 -3.9 7.1 -4.3 6.5 -4.6 5.6 -5.1 4.9"/><path d="M401 500.2l-6.3 6.5 -6.6 5.6 -6.8 4.6 -6.8 3.7 -7 2.8 -7 1.9"/><path class="ai s3" d="M401 500.2l-6.3 6.5 -6.6 5.6 -6.8 4.6 -6.8 3.7 -7 2.8 -7 1.9"/><path d="M452.1 408.3l0.9 19.6 -1.7 19.1 -4 18"/><path class="ai s3" d="M452.1 408.3l0.9 19.6 -1.7 19.1 -4 18"/><path d="M434.1 380l3.8 16.5 2 16.8 0.1 16.8"/><path class="ai s4" d="M434.1 380l3.8 16.5 2 16.8 0.1 16.8"/><path d="M378.7 321.5l5.9 7.1 5.4 8 5 8.8 4.4 9.5 3.7 10.1"/><path class="ai s5" d="M378.7 321.5l5.9 7.1 5.4 8 5 8.8 4.4 9.5 3.7 10.1"/><path d="M400.1 447.1l-2.8 8.4 -3.3 7.8 -3.7 7.2 -4.2 6.5 -4.6 5.7 -4.9 4.9"/><path class="ai s1" d="M400.1 447.1l-2.8 8.4 -3.3 7.8 -3.7 7.2 -4.2 6.5 -4.6 5.7 -4.9 4.9"/><path d="M406.4 445.9l-2.8 9.5 -3.5 8.8 -4.1 8.1 -4.6 7.2 -5.2 6.3"/><path class="ai s2" d="M406.4 445.9l-2.8 9.5 -3.5 8.8 -4.1 8.1 -4.6 7.2 -5.2 6.3"/><path d="M428.3 362.7l5.4 15.4 3.9 16.3 2 16.8"/><path class="ai s4" d="M428.3 362.7l5.4 15.4 3.9 16.3 2 16.8"/><path d="M396.2 287.5l10.8 8.6 10.1 10.8 9.1 12.8 7.9 14.4"/><path class="ai s5" d="M396.2 287.5l10.8 8.6 10.1 10.8 9.1 12.8 7.9 14.4"/><path d="M376.7 390.9l0.7 6.5 0.6 13 -0.2 6.4 -1.2 12.5 -1.1 5.9 -1.4 5.7"/><path class="ai s1" d="M376.7 390.9l0.7 6.5 0.6 13 -0.2 6.4 -1.2 12.5 -1.1 5.9 -1.4 5.7"/><path d="M401.8 455.1l-3.4 8.3 -3.9 7.6 -4.3 7 -4.7 6.2 -5 5.4 -5.3 4.6"/><path class="ai s2" d="M401.8 455.1l-3.4 8.3 -3.9 7.6 -4.3 7 -4.7 6.2 -5 5.4 -5.3 4.6"/><path d="M401.5 443.2l-2.5 8.7 -3.1 8.2 -3.6 7.5 -4 6.8 -4.5 6.1 -4.8 5.4"/><path class="ai s1" d="M401.5 443.2l-2.5 8.7 -3.1 8.2 -3.6 7.5 -4 6.8 -4.5 6.1 -4.8 5.4"/><path d="M350.3 284.6l5.4 3.2 5.1 3.9 4.9 4.7 4.6 5.3 4.3 5.9 3.9 6.4 3.5 6.9"/><path class="ai s5" d="M350.3 284.6l5.4 3.2 5.1 3.9 4.9 4.7 4.6 5.3 4.3 5.9 3.9 6.4 3.5 6.9"/><path d="M339.9 251l6.5 0.7 6.1 1.7 5.7 2.7 5.3 3.6 4.7 4.3 4.1 4.9 3.6 5.4 3.1 5.9"/><path class="ai s5" d="M339.9 251l6.5 0.7 6.1 1.7 5.7 2.7 5.3 3.6 4.7 4.3 4.1 4.9 3.6 5.4 3.1 5.9"/><path d="M317 288.7l-1.5 20.3 0.1 7.8 0.6 5.7 0.8 3.8 2.4 7.8"/><path class="ai s2" d="M317 288.7l-1.5 20.3 0.1 7.8 0.6 5.7 0.8 3.8 2.4 7.8"/><path d="M375.1 290l7.8 5.9 7.3 7.2 6.8 8.4 6.2 9.5 5.5 10.4"/><path class="ai s5" d="M375.1 290l7.8 5.9 7.3 7.2 6.8 8.4 6.2 9.5 5.5 10.4"/><path d="M390.8 336.2l5.5 9 4.9 9.8 4.2 10.5 3.4 11.1 2.5 11.5"/><path class="ai s4" d="M390.8 336.2l5.5 9 4.9 9.8 4.2 10.5 3.4 11.1 2.5 11.5"/><path d="M350.9 291.1l5 3.5 4.7 4.1 4.5 4.8 4.2 5.4 3.9 5.9 3.6 6.3 3.3 6.7"/><path class="ai s5" d="M350.9 291.1l5 3.5 4.7 4.1 4.5 4.8 4.2 5.4 3.9 5.9 3.6 6.3 3.3 6.7"/><path d="M439.6 411.2l0.3 16.7 -1.6 16.3 -3.4 15.4"/><path class="ai s3" d="M439.6 411.2l0.3 16.7 -1.6 16.3 -3.4 15.4"/><path d="M365.9 302.9l5.8 5.2 5.5 6.1 5.1 6.8 4.8 7.6 4.3 8.2 3.8 8.8"/><path class="ai s5" d="M365.9 302.9l5.8 5.2 5.5 6.1 5.1 6.8 4.8 7.6 4.3 8.2 3.8 8.8"/><path d="M198 577.4l4.8 3.2 4.9 2.4 5 1.5 5.1 0.8 5-0.2 5-1 4.9-1.7 4.8-2.6 4.6-3.3"/><path class="ai s5" d="M198 577.4l4.8 3.2 4.9 2.4 5 1.5 5.1 0.8 5-0.2 5-1 4.9-1.7 4.8-2.6 4.6-3.3"/><path d="M414.6 480.5l-5.7 9.4 -6.3 8.2 -6.7 7.1 -7.1 5.9 -7.4 4.8"/><path class="ai s2" d="M414.6 480.5l-5.7 9.4 -6.3 8.2 -6.7 7.1 -7.1 5.9 -7.4 4.8"/><path d="M359.4 381.5l1.1 13.4 0.3 8.9 0 8.9 -0.5 8.7 -1.2 8.3"/><path class="ai s0" d="M359.4 381.5l1.1 13.4 0.3 8.9 0 8.9 -0.5 8.7 -1.2 8.3"/><path d="M365.3 301.6l5.7 5.2 5.4 6 5.1 6.8 4.6 7.4 4.3 8.1 3.7 8.6"/><path class="ai s5" d="M365.3 301.6l5.7 5.2 5.4 6 5.1 6.8 4.6 7.4 4.3 8.1 3.7 8.6"/><path d="M207.2 578.4l4.3 2.1 4.4 1.5 4.5 0.8 4.5 0.1 4.4-0.6 4.4-1.3 4.3-1.9 4.1-2.4 4-3.1 3.9-3.5"/><path class="ai s4" d="M207.2 578.4l4.3 2.1 4.4 1.5 4.5 0.8 4.5 0.1 4.4-0.6 4.4-1.3 4.3-1.9 4.1-2.4 4-3.1 3.9-3.5"/><path d="M214.6 575.1l4 1.2 4 0.6 4 0.1 4-0.5 3.9-1 3.9-1.6 3.7-2 3.6-2.4 3.4-2.9 3.3-3.1 5.9-7.2"/><path class="ai s4" d="M214.6 575.1l4 1.2 4 0.6 4 0.1 4-0.5 3.9-1 3.9-1.6 3.7-2 3.6-2.4 3.4-2.9 3.3-3.1 5.9-7.2"/><path d="M410.9 383.2l2.4 11.8 1.4 12.1 0.3 12.1 -0.7 11.9"/><path class="ai s3" d="M410.9 383.2l2.4 11.8 1.4 12.1 0.3 12.1 -0.7 11.9"/><path d="M426.4 356.5l5.8 15.1 4.3 16 2.6 16.5"/><path class="ai s4" d="M426.4 356.5l5.8 15.1 4.3 16 2.6 16.5"/><path d="M360.9 289.7l5.9 4.4 5.6 5.3 5.3 6.1 4.9 6.8 4.4 7.4 4 8"/><path class="ai s5" d="M360.9 289.7l5.9 4.4 5.6 5.3 5.3 6.1 4.9 6.8 4.4 7.4 4 8"/><path d="M401.3 439.8l-2.3 8.7 -2.9 8.2 -3.3 7.6 -3.8 7 -4.2 6.3 -4.6 5.5"/><path class="ai s1" d="M401.3 439.8l-2.3 8.7 -2.9 8.2 -3.3 7.6 -3.8 7 -4.2 6.3 -4.6 5.5"/><path d="M410.5 420l-0.9 10.8 -1.8 10.5 -2.5 9.9 -3.2 9.3 -3.9 8.6"/><path class="ai s2" d="M410.5 420l-0.9 10.8 -1.8 10.5 -2.5 9.9 -3.2 9.3 -3.9 8.6"/><path d="M326.1 320.8l-0.9 9.1 0.2 6.7 0.9 6.7 2.5 9.1 3.7 9.7 10.2 25"/><path class="ai s0" d="M326.1 320.8l-0.9 9.1 0.2 6.7 0.9 6.7 2.5 9.1 3.7 9.7 10.2 25"/><path d="M452 492.3l-8.9 15.5 -10.4 13.2 -11.4 10.6"/><path class="ai s3" d="M452 492.3l-8.9 15.5 -10.4 13.2 -11.4 10.6"/><path d="M365.5 314.2l4.6 5.4 4.4 6.1 4 6.7 3.7 7.1 3.4 7.6 2.9 8"/><path class="ai s5" d="M365.5 314.2l4.6 5.4 4.4 6.1 4 6.7 3.7 7.1 3.4 7.6 2.9 8"/><path d="M418.4 337.6l7.1 13.5 5.9 14.8 4.4 15.7"/><path class="ai s5" d="M418.4 337.6l7.1 13.5 5.9 14.8 4.4 15.7"/><path d="M369.4 305.4l5.7 5.8 5.3 6.5 5 7.3 4.5 8 4 8.6 3.5 9.1"/><path class="ai s5" d="M369.4 305.4l5.7 5.8 5.3 6.5 5 7.3 4.5 8 4 8.6 3.5 9.1"/><path d="M369.3 305.1l5.6 5.8 5.3 6.5 4.9 7.3 4.4 7.9 4 8.6 3.5 9"/><path class="ai s5" d="M369.3 305.1l5.6 5.8 5.3 6.5 4.9 7.3 4.4 7.9 4 8.6 3.5 9"/><path d="M326.3 275l2.2 1.9 3.8 4.4 3.1 5.3 2.4 5.8 1.9 6.2 2.5 12.9 4.4 33.9"/><path class="ai s5" d="M326.3 275l2.2 1.9 3.8 4.4 3.1 5.3 2.4 5.8 1.9 6.2 2.5 12.9 4.4 33.9"/><path d="M412.8 405.5l0.2 11.6 -0.7 11.4 -1.5 11 -2.4 10.5 -3.2 9.8"/><path class="ai s2" d="M412.8 405.5l0.2 11.6 -0.7 11.4 -1.5 11 -2.4 10.5 -3.2 9.8"/><path d="M432.3 314.4l11.2 16 9.4 18.4 7.3 20.2"/><path class="ai s5" d="M432.3 314.4l11.2 16 9.4 18.4 7.3 20.2"/><path d="M439.1 404.1l0.9 16.7 -0.9 16.4 -2.7 15.7"/><path class="ai s3" d="M439.1 404.1l0.9 16.7 -0.9 16.4 -2.7 15.7"/><path d="M404.7 464.3l-4.1 8.2 -4.5 7.4 -4.8 6.8 -5.2 5.9 -5.5 5.2 -5.7 4.3"/><path class="ai s2" d="M404.7 464.3l-4.1 8.2 -4.5 7.4 -4.8 6.8 -5.2 5.9 -5.5 5.2 -5.7 4.3"/><path d="M168.9 592.5l6.6 7.7 7.1 6.2 7.5 4.4 7.7 2.5 8 0.5 7.9-1.6"/><path class="ai s5" d="M168.9 592.5l6.6 7.7 7.1 6.2 7.5 4.4 7.7 2.5 8 0.5 7.9-1.6"/><path d="M360.6 337.9l4.9 10.5 2.2 5.5 3.9 11.8 3 12.4 2.1 12.8"/><path class="ai s3" d="M360.6 337.9l4.9 10.5 2.2 5.5 3.9 11.8 3 12.4 2.1 12.8"/><path d="M411.3 388.1l1.7 11.7 0.8 11.8 -0.2 11.7 -1.1 11.4"/><path class="ai s3" d="M411.3 388.1l1.7 11.7 0.8 11.8 -0.2 11.7 -1.1 11.4"/><path d="M346.6 345.4l6.2 40.3 1.9 15.8"/><path class="ai s0" d="M346.6 345.4l6.2 40.3 1.9 15.8"/><path d="M404.4 354.6l4.2 11 3.5 11.6 2.5 12 1.5 12.2"/><path class="ai s4" d="M404.4 354.6l4.2 11 3.5 11.6 2.5 12 1.5 12.2"/><path d="M321.7 251.4l0.6 1.7 0.3 1.8 -0.1 2 -1.1 4.2 -2.2 4.4 -2.9 4.4 -5.5 6.3 -6.1 6 -13.7 12.5"/><path class="ai s2" d="M321.7 251.4l0.6 1.7 0.3 1.8 -0.1 2 -1.1 4.2 -2.2 4.4 -2.9 4.4 -5.5 6.3 -6.1 6 -13.7 12.5"/><path d="M416.1 401.4l0.6 12.2 -0.4 12.1 -1.3 11.8 -2.3 11.2"/><path class="ai s3" d="M416.1 401.4l0.6 12.2 -0.4 12.1 -1.3 11.8 -2.3 11.2"/><path d="M403.2 360.4l3.6 10.7 2.8 11.2 2 11.5 1.2 11.7"/><path class="ai s4" d="M403.2 360.4l3.6 10.7 2.8 11.2 2 11.5 1.2 11.7"/><path d="M376.8 314l5.1 6.8 4.7 7.5 4.3 8.2 3.8 8.7 3.2 9.1"/><path class="ai s5" d="M376.8 314l5.1 6.8 4.7 7.5 4.3 8.2 3.8 8.7 3.2 9.1"/><path d="M396.9 407.3l-0.3 8.8 -0.7 8.7 -1.3 8.3 -1.7 8.1 -2.2 7.6 -2.7 7.2"/><path class="ai s2" d="M396.9 407.3l-0.3 8.8 -0.7 8.7 -1.3 8.3 -1.7 8.1 -2.2 7.6 -2.7 7.2"/><path d="M355.5 369.9l-0.3 38.1 -0.6 11.3"/><path class="ai s0" d="M355.5 369.9l-0.3 38.1 -0.6 11.3"/><path d="M332.6 283.4l4.3 5.1 1.9 2.9 3.4 6.2 2.9 6.9 2.3 7.2 2.1 7.5 2.5 11.8"/><path class="ai s5" d="M332.6 283.4l4.3 5.1 1.9 2.9 3.4 6.2 2.9 6.9 2.3 7.2 2.1 7.5 2.5 11.8"/><path d="M342.4 284l3.3 3 3.2 3.4 2.9 3.7 5.1 8.4 4.3 9.2 3.6 10 2.8 10.4"/><path class="ai s5" d="M342.4 284l3.3 3 3.2 3.4 2.9 3.7 5.1 8.4 4.3 9.2 3.6 10 2.8 10.4"/><path d="M439.5 430.7l-2 15.8 -3.6 14.9 -5 13.7"/><path class="ai s3" d="M439.5 430.7l-2 15.8 -3.6 14.9 -5 13.7"/><path d="M392 422.1l-1.2 7.6 -1.7 7.2 -1.9 7 -2.3 6.7 -2.6 6.2 -3 5.8 -3.2 5.3"/><path class="ai s1" d="M392 422.1l-1.2 7.6 -1.7 7.2 -1.9 7 -2.3 6.7 -2.6 6.2 -3 5.8 -3.2 5.3"/><path d="M379.6 317.1l5.1 7.2 4.7 7.9 4.2 8.6 3.7 9.1 3.1 9.5"/><path class="ai s5" d="M379.6 317.1l5.1 7.2 4.7 7.9 4.2 8.6 3.7 9.1 3.1 9.5"/><path d="M379.9 319.8l5 7.3 4.5 7.9 4 8.6 3.5 9 2.9 9.5"/><path class="ai s5" d="M379.9 319.8l5 7.3 4.5 7.9 4 8.6 3.5 9 2.9 9.5"/><path d="M386.2 342.6l3.8 8.2 3.3 8.6 2.8 9.1 2.3 9.4 1.7 9.6"/><path class="ai s4" d="M386.2 342.6l3.8 8.2 3.3 8.6 2.8 9.1 2.3 9.4 1.7 9.6"/><path d="M382.9 322.4l4.9 7.7 4.4 8.4 4 8.9 3.3 9.4 2.8 9.9"/><path class="ai s5" d="M382.9 322.4l4.9 7.7 4.4 8.4 4 8.9 3.3 9.4 2.8 9.9"/><path d="M377.9 314.1l5 6.9 4.5 7.7 4.1 8.2 3.6 8.7 3.1 9.2"/><path class="ai s5" d="M377.9 314.1l5 6.9 4.5 7.7 4.1 8.2 3.6 8.7 3.1 9.2"/><path d="M403.1 365l3 10.6 2.3 10.9 1.5 11.2 0.7 11.2 -0.1 11.1"/><path class="ai s3" d="M403.1 365l3 10.6 2.3 10.9 1.5 11.2 0.7 11.2 -0.1 11.1"/><path d="M401.4 416.5l-1 9.1 -1.4 8.8 -2 8.5 -2.4 8.1 -2.9 7.5 -3.4 7.1"/><path class="ai s2" d="M401.4 416.5l-1 9.1 -1.4 8.8 -2 8.5 -2.4 8.1 -2.9 7.5 -3.4 7.1"/><path d="M441.9 481l-6.9 13.8 -8 12.1 -8.9 10.4 -9.5 8.5"/><path class="ai s3" d="M441.9 481l-6.9 13.8 -8 12.1 -8.9 10.4 -9.5 8.5"/><path d="M400.1 387.5l1.1 9.7 0.5 9.7 -0.1 9.7 -0.7 9.4 -1.3 9.2"/><path class="ai s2" d="M400.1 387.5l1.1 9.7 0.5 9.7 -0.1 9.7 -0.7 9.4 -1.3 9.2"/><path d="M406.9 418.1l-1 10 -1.7 9.7 -2.2 9.2 -2.8 8.8 -3.4 8.1"/><path class="ai s2" d="M406.9 418.1l-1 10 -1.7 9.7 -2.2 9.2 -2.8 8.8 -3.4 8.1"/><path d="M389.3 412l-2 14.4 -1.4 6.8 -3.7 13 -2.3 6 -2.6 5.6"/><path class="ai s1" d="M389.3 412l-2 14.4 -1.4 6.8 -3.7 13 -2.3 6 -2.6 5.6"/><path d="M416.4 405.4l0.1 12.1 -0.9 11.8 -1.7 11.3 -2.6 10.9"/><path class="ai s3" d="M416.4 405.4l0.1 12.1 -0.9 11.8 -1.7 11.3 -2.6 10.9"/><path d="M321.7 284.1l-23.7 16.7 -5.9 4.9 -6 6"/><path class="ai s1" d="M321.7 284.1l-23.7 16.7 -5.9 4.9 -6 6"/><path d="M381.8 310.2l5.4 7.4 4.9 8.2 4.4 8.8 3.9 9.4 3.3 9.9"/><path class="ai s5" d="M381.8 310.2l5.4 7.4 4.9 8.2 4.4 8.8 3.9 9.4 3.3 9.9"/><path d="M373.6 248.5l9.1 4.3 8.4 5.8 7.6 7.3 6.8 8.4 5.9 9.3"/><path class="ai s5" d="M373.6 248.5l9.1 4.3 8.4 5.8 7.6 7.3 6.8 8.4 5.9 9.3"/><path d="M384.5 322.2l4.8 7.9 4.3 8.5 3.8 9.1 3.3 9.6 2.6 9.9"/><path class="ai s5" d="M384.5 322.2l4.8 7.9 4.3 8.5 3.8 9.1 3.3 9.6 2.6 9.9"/><path d="M435.8 381.6l2.9 16.3 1.2 16.5 -0.4 16.3"/><path class="ai s4" d="M435.8 381.6l2.9 16.3 1.2 16.5 -0.4 16.3"/><path d="M381.7 320.8l4.5 7.5 4.2 8 3.6 8.6 3.2 9.1 2.6 9.4"/><path class="ai s5" d="M381.7 320.8l4.5 7.5 4.2 8 3.6 8.6 3.2 9.1 2.6 9.4"/><path d="M407.1 358.4l3.6 11.2 2.8 11.7 1.9 12 1 12.1"/><path class="ai s4" d="M407.1 358.4l3.6 11.2 2.8 11.7 1.9 12 1 12.1"/><path d="M368 324.4l3.1 5.8 5.5 12.7 4.4 13.6 3.3 14.5"/><path class="ai s4" d="M368 324.4l3.1 5.8 5.5 12.7 4.4 13.6 3.3 14.5"/><path d="M435.8 481.6l-6.7 12.6 -7.5 11 -8.2 9.5 -8.8 8"/><path class="ai s3" d="M435.8 481.6l-6.7 12.6 -7.5 11 -8.2 9.5 -8.8 8"/><path d="M405.8 412.3l-0.7 10 -1.3 9.6 -1.8 9.3 -2.4 8.8 -3 8.3"/><path class="ai s2" d="M405.8 412.3l-0.7 10 -1.3 9.6 -1.8 9.3 -2.4 8.8 -3 8.3"/><path d="M455.5 466.9l-6.2 17.2 -7.8 15.4 -9.2 13.2"/><path class="ai s3" d="M455.5 466.9l-6.2 17.2 -7.8 15.4 -9.2 13.2"/><path d="M385.1 451.3l-5.8 9.8 -6.2 8.6 -6.4 7.4 -6.8 6.2 -3.5 2.5"/><path class="ai s1" d="M385.1 451.3l-5.8 9.8 -6.2 8.6 -6.4 7.4 -6.8 6.2 -3.5 2.5"/><path d="M395.4 340.8l4.2 9.5 3.6 10.1 3 10.4 2.2 10.8 1.5 11"/><path class="ai s4" d="M395.4 340.8l4.2 9.5 3.6 10.1 3 10.4 2.2 10.8 1.5 11"/><path d="M407.2 418.6l-1.1 10 -1.7 9.6 -2.3 9.2 -2.9 8.7 -3.4 8"/><path class="ai s2" d="M407.2 418.6l-1.1 10 -1.7 9.6 -2.3 9.2 -2.9 8.7 -3.4 8"/><path d="M378 315l4.7 7 4.3 7.6 3.8 8.1 3.4 8.6 2.8 8.9 2.4 9.3"/><path class="ai s5" d="M378 315l4.7 7 4.3 7.6 3.8 8.1 3.4 8.6 2.8 8.9 2.4 9.3"/><path d="M384.8 468l-7.1 8.2 -7.2 7.1 -3.6 3 -7.4 5.3 -3.7 2.1 -7.5 3.3"/><path class="ai s2" d="M384.8 468l-7.1 8.2 -7.2 7.1 -3.6 3 -7.4 5.3 -3.7 2.1 -7.5 3.3"/><path d="M409.2 426.7l-1.7 10 -2.3 9.6 -2.9 9 -3.4 8.4 -3.9 7.8"/><path class="ai s2" d="M409.2 426.7l-1.7 10 -2.3 9.6 -2.9 9 -3.4 8.4 -3.9 7.8"/><path d="M382.5 327.1l4.1 7.6 3.6 8.1 3.1 8.5 2.7 8.9 2.2 9.2"/><path class="ai s5" d="M382.5 327.1l4.1 7.6 3.6 8.1 3.1 8.5 2.7 8.9 2.2 9.2"/><path d="M409.4 432.2l-2.1 9.8 -2.6 9.4 -3.2 8.8 -3.8 8.1 -4.2 7.4"/><path class="ai s2" d="M409.4 432.2l-2.1 9.8 -2.6 9.4 -3.2 8.8 -3.8 8.1 -4.2 7.4"/><path d="M384.6 322.7l4.4 7.9 4.1 8.4 3.5 9 3 9.3 2.4 9.7"/><path class="ai s5" d="M384.6 322.7l4.4 7.9 4.1 8.4 3.5 9 3 9.3 2.4 9.7"/><path d="M407 410.3l-0.6 10.1 -1.2 9.8 -1.8 9.5 -2.3 9.1 -3 8.5"/><path class="ai s2" d="M407 410.3l-0.6 10.1 -1.2 9.8 -1.8 9.5 -2.3 9.1 -3 8.5"/><path d="M373.6 382.1l0.1 11.3 -0.5 11.1 -0.9 10.8 -1.6 10.5 -2.3 10"/><path class="ai s1" d="M373.6 382.1l0.1 11.3 -0.5 11.1 -0.9 10.8 -1.6 10.5 -2.3 10"/><path d="M403.3 412.5l-0.8 9.3 -1.4 9.1 -1.8 8.8 -2.3 8.3 -2.8 7.9 -3.2 7.3"/><path class="ai s2" d="M403.3 412.5l-0.8 9.3 -1.4 9.1 -1.8 8.8 -2.3 8.3 -2.8 7.9 -3.2 7.3"/><path d="M409.9 392.6l0.8 11.1 0 11 -0.7 10.8 -1.4 10.4 -2.2 10"/><path class="ai s3" d="M409.9 392.6l0.8 11.1 0 11 -0.7 10.8 -1.4 10.4 -2.2 10"/><path d="M405.5 416.9l-1.1 9.6 -1.6 9.4 -2.1 8.9 -2.7 8.5 -3.1 7.9"/><path class="ai s2" d="M405.5 416.9l-1.1 9.6 -1.6 9.4 -2.1 8.9 -2.7 8.5 -3.1 7.9"/><path d="M384.3 371l2.1 14.8 0.8 15 -0.4 14.8 -1.8 14.3"/><path class="ai s2" d="M384.3 371l2.1 14.8 0.8 15 -0.4 14.8 -1.8 14.3"/><path d="M180.5 597.9l6.7 5.5 7.1 3.8 7.3 2.2 7.4 0.4 7.5-1.5 7.3-3.3"/><path class="ai s5" d="M180.5 597.9l6.7 5.5 7.1 3.8 7.3 2.2 7.4 0.4 7.5-1.5 7.3-3.3"/><path d="M404.5 412.4l-0.7 9.7 -1.3 9.3 -1.9 9 -2.3 8.6 -2.9 8.1"/><path class="ai s2" d="M404.5 412.4l-0.7 9.7 -1.3 9.3 -1.9 9 -2.3 8.6 -2.9 8.1"/><path d="M388.5 355.1l2.5 8.3 2.1 8.5 1.7 8.8 1.2 8.8 0.7 9 0.2 8.8"/><path class="ai s3" d="M388.5 355.1l2.5 8.3 2.1 8.5 1.7 8.8 1.2 8.8 0.7 9 0.2 8.8"/><path d="M275.7 522.8l2.7-8.9 2.9-11.6 3.2-16.9 0.8-7.3"/><path class="ai s3" d="M275.7 522.8l2.7-8.9 2.9-11.6 3.2-16.9 0.8-7.3"/><path d="M394.9 417.8l-1.2 7.8 -1.6 7.5 -1.9 7.3 -2.2 6.9 -2.6 6.5 -2.8 6.1 -3.1 5.7"/><path class="ai s1" d="M394.9 417.8l-1.2 7.8 -1.6 7.5 -1.9 7.3 -2.2 6.9 -2.6 6.5 -2.8 6.1 -3.1 5.7"/><path d="M366.1 306.2l3.6 5.5 3.4 5.9 3.1 6.2 2.7 6.6 2.5 6.9 2.1 7.1 3.4 14.7"/><path class="ai s5" d="M366.1 306.2l3.6 5.5 3.4 5.9 3.1 6.2 2.7 6.6 2.5 6.9 2.1 7.1 3.4 14.7"/><path d="M333.8 273.7l0.4 2.8 0.2 5.5 -0.6 5.6 -0.9 5.6 -5.3 20.5 -1.5 7.1"/><path class="ai s3" d="M333.8 273.7l0.4 2.8 0.2 5.5 -0.6 5.6 -0.9 5.6 -5.3 20.5 -1.5 7.1"/><path d="M405.7 403.8l-0.2 10 -0.8 9.8 -1.4 9.5 -1.9 9.1 -2.5 8.7"/><path class="ai s2" d="M405.7 403.8l-0.2 10 -0.8 9.8 -1.4 9.5 -1.9 9.1 -2.5 8.7"/><path d="M390.7 325.1l4.7 8.7 4.1 9.3 3.5 9.8 2.8 10.2 2.3 10.5"/><path class="ai s5" d="M390.7 325.1l4.7 8.7 4.1 9.3 3.5 9.8 2.8 10.2 2.3 10.5"/><path d="M352 331l4.1 24.5 3.3 26"/><path class="ai s2" d="M352 331l4.1 24.5 3.3 26"/><path d="M382.8 319.3l4.2 7.5 3.8 8.1 3.3 8.5 2.8 8.9 2.4 9.2"/><path class="ai s5" d="M382.8 319.3l4.2 7.5 3.8 8.1 3.3 8.5 2.8 8.9 2.4 9.2"/><path d="M394.9 406.7l-0.6 8.1 -1 7.9 -1.4 7.7 -1.7 7.4 -2 7.1 -2.4 6.7"/><path class="ai s2" d="M394.9 406.7l-0.6 8.1 -1 7.9 -1.4 7.7 -1.7 7.4 -2 7.1 -2.4 6.7"/><path d="M373.5 313.5l3.8 6.3 3.4 6.8 3.1 7.2 2.7 7.5 2.4 7.8 2 8"/><path class="ai s5" d="M373.5 313.5l3.8 6.3 3.4 6.8 3.1 7.2 2.7 7.5 2.4 7.8 2 8"/><path d="M406.3 400.4l0 10.1 -0.6 9.9 -1.2 9.7 -1.8 9.3 -2.4 9"/><path class="ai s2" d="M406.3 400.4l0 10.1 -0.6 9.9 -1.2 9.7 -1.8 9.3 -2.4 9"/><path d="M399.6 329.8l4.8 9.9 4.2 10.7 3.4 11.1 2.6 11.6"/><path class="ai s5" d="M399.6 329.8l4.8 9.9 4.2 10.7 3.4 11.1 2.6 11.6"/><path d="M403.3 409l-0.7 9.2 -1.2 9.1 -1.7 8.7 -2.2 8.4 -2.6 7.9 -3 7.5"/><path class="ai s2" d="M403.3 409l-0.7 9.2 -1.2 9.1 -1.7 8.7 -2.2 8.4 -2.6 7.9 -3 7.5"/><path d="M417 420.2l-1.4 11.3 -2.1 10.8 -2.8 10.4 -3.5 9.6 -4 9"/><path class="ai s2" d="M417 420.2l-1.4 11.3 -2.1 10.8 -2.8 10.4 -3.5 9.6 -4 9"/><path d="M405.3 403.8l-0.3 9.8 -0.9 9.7 -1.4 9.3 -1.9 9 -2.5 8.5"/><path class="ai s2" d="M405.3 403.8l-0.3 9.8 -0.9 9.7 -1.4 9.3 -1.9 9 -2.5 8.5"/><path d="M403.3 420.5l-1.5 8.9 -1.9 8.6 -2.3 8.2 -2.7 7.8 -3.1 7.3 -3.5 6.7"/><path class="ai s2" d="M403.3 420.5l-1.5 8.9 -1.9 8.6 -2.3 8.2 -2.7 7.8 -3.1 7.3 -3.5 6.7"/><path d="M405.8 399.4l0.1 10.1 -0.6 9.8 -1.2 9.6 -1.7 9.3 -2.3 8.9"/><path class="ai s2" d="M405.8 399.4l0.1 10.1 -0.6 9.8 -1.2 9.6 -1.7 9.3 -2.3 8.9"/><path d="M405.8 394.6l0.3 10.1 -0.2 10.1 -0.9 9.8 -1.4 9.5 -2.1 9.1"/><path class="ai s2" d="M405.8 394.6l0.3 10.1 -0.2 10.1 -0.9 9.8 -1.4 9.5 -2.1 9.1"/><path d="M420.9 429.4l-2 11.8 -2.9 11.2 -3.6 10.5 -4.2 9.6"/><path class="ai s2" d="M420.9 429.4l-2 11.8 -2.9 11.2 -3.6 10.5 -4.2 9.6"/><path d="M447.5 347.9l6.9 19 4.8 20 2.5 20.7"/><path class="ai s4" d="M447.5 347.9l6.9 19 4.8 20 2.5 20.7"/><path d="M431.8 324.7l8.1 15.6 6.5 17 4.8 18.1"/><path class="ai s5" d="M431.8 324.7l8.1 15.6 6.5 17 4.8 18.1"/><path d="M399.8 362.1l2.4 9.8 1.8 10 1.2 10.2 0.6 10.1 0 10.1"/><path class="ai s3" d="M399.8 362.1l2.4 9.8 1.8 10 1.2 10.2 0.6 10.1 0 10.1"/><path d="M402.3 366.7l2.2 10.1 1.6 10.3 0.9 10.4 0.3 10.4 -0.4 10.2"/><path class="ai s3" d="M402.3 366.7l2.2 10.1 1.6 10.3 0.9 10.4 0.3 10.4 -0.4 10.2"/><path d="M432.3 317.5l9 15.6 7.3 17.3 5.6 18.6"/><path class="ai s5" d="M432.3 317.5l9 15.6 7.3 17.3 5.6 18.6"/><path d="M405.3 332.4l5 10.9 4.2 11.5 3.3 12.1 2.5 12.5"/><path class="ai s5" d="M405.3 332.4l5 10.9 4.2 11.5 3.3 12.1 2.5 12.5"/><path d="M395.2 345.6l3.2 9.3 2.8 9.6 2.1 9.9 1.6 10 0.9 10.2"/><path class="ai s4" d="M395.2 345.6l3.2 9.3 2.8 9.6 2.1 9.9 1.6 10 0.9 10.2"/><path d="M447.1 479.4l-7 14.6 -8 12.9 -9 11.1"/><path class="ai s3" d="M447.1 479.4l-7 14.6 -8 12.9 -9 11.1"/><path d="M400.4 359.4l2.6 9.9 1.9 10.1 1.3 10.3 0.7 10.3 0.1 10.3"/><path class="ai s3" d="M400.4 359.4l2.6 9.9 1.9 10.1 1.3 10.3 0.7 10.3 0.1 10.3"/><path d="M394.1 343.7l3.3 9 2.7 9.5 2.1 9.7 1.6 9.8 1 10"/><path class="ai s4" d="M394.1 343.7l3.3 9 2.7 9.5 2.1 9.7 1.6 9.8 1 10"/><path d="M404.8 391.7l0.5 10 -0.2 9.9 -0.7 9.7 -1.3 9.4 -1.8 9.1"/><path class="ai s2" d="M404.8 391.7l0.5 10 -0.2 9.9 -0.7 9.7 -1.3 9.4 -1.8 9.1"/><path d="M397.4 350.7l3 9.5 2.3 9.8 1.8 10 1.2 10.2 0.6 10.2"/><path class="ai s4" d="M397.4 350.7l3 9.5 2.3 9.8 1.8 10 1.2 10.2 0.6 10.2"/><path d="M397.9 354.3l2.7 9.6 2.2 9.8 1.6 10 1 10.1 0.3 10"/><path class="ai s4" d="M397.9 354.3l2.7 9.6 2.2 9.8 1.6 10 1 10.1 0.3 10"/><path d="M376.8 262.9l6.9 5.6 6.2 6.7 5.5 7.5 4.8 8.3 4 8.8"/><path class="ai s5" d="M376.8 262.9l6.9 5.6 6.2 6.7 5.5 7.5 4.8 8.3 4 8.8"/><path d="M394.9 328.4l4.3 9.2 3.8 9.8 3.1 10.2 2.5 10.6 1.8 10.7"/><path class="ai s4" d="M394.9 328.4l4.3 9.2 3.8 9.8 3.1 10.2 2.5 10.6 1.8 10.7"/><path d="M467.1 434.1l-2.7 20.9 -5.2 19.6 -7.2 17.7"/><path class="ai s3" d="M467.1 434.1l-2.7 20.9 -5.2 19.6 -7.2 17.7"/><path d="M398.2 369.4l1.7 9.3 1.1 9.5 0.7 9.5 0.1 9.4 -0.4 9.4"/><path class="ai s3" d="M398.2 369.4l1.7 9.3 1.1 9.5 0.7 9.5 0.1 9.4 -0.4 9.4"/><path d="M397 350.2l2.9 9.4 2.4 9.7 1.7 10 1.2 10 0.6 10.1"/><path class="ai s4" d="M397 350.2l2.9 9.4 2.4 9.7 1.7 10 1.2 10 0.6 10.1"/><path d="M347 270.7l2.4 3.4 2.1 3.6 1.7 3.8 2.6 8.1 1.6 8.4 0.7 8.5 0.2 8.4"/><path class="ai s5" d="M347 270.7l2.4 3.4 2.1 3.6 1.7 3.8 2.6 8.1 1.6 8.4 0.7 8.5 0.2 8.4"/><path d="M258.3 556.3l5.2-7.8 4.5-8.2 3.6-8.1 4.3-11.3 3-10"/><path class="ai s4" d="M258.3 556.3l5.2-7.8 4.5-8.2 3.6-8.1 4.3-11.3 3-10"/><path d="M374 394.2l-6.1 21.7 -3.7 12.1 -2.6 7.7 -2.9 7.2"/><path class="ai s0" d="M374 394.2l-6.1 21.7 -3.7 12.1 -2.6 7.7 -2.9 7.2"/><path d="M403.3 367.2l2 10.2 1.5 10.3 0.7 10.4 0.2 10.3 -0.5 10.2"/><path class="ai s3" d="M403.3 367.2l2 10.2 1.5 10.3 0.7 10.4 0.2 10.3 -0.5 10.2"/><path d="M399.8 363.4l2.1 9.6 1.5 9.8 1 10 0.3 9.8 -0.2 9.8"/><path class="ai s3" d="M399.8 363.4l2.1 9.6 1.5 9.8 1 10 0.3 9.8 -0.2 9.8"/><path d="M410.5 406.4l-0.6 10.4 -1.2 10.2 -1.7 9.8 -2.4 9.4 -2.8 8.9"/><path class="ai s2" d="M410.5 406.4l-0.6 10.4 -1.2 10.2 -1.7 9.8 -2.4 9.4 -2.8 8.9"/><path d="M373.5 261.9l6.7 5.2 6.1 6.2 5.4 7.1 4.7 7.8 4 8.3 3.3 8.8"/><path class="ai s5" d="M373.5 261.9l6.7 5.2 6.1 6.2 5.4 7.1 4.7 7.8 4 8.3 3.3 8.8"/><path d="M361.6 369.1l-3.5 18.5 -4.9 35.5"/><path class="ai s0" d="M361.6 369.1l-3.5 18.5 -4.9 35.5"/><path d="M398.2 354.8l2.5 9.5 2 9.7 1.4 9.9 0.9 10 0.3 9.9"/><path class="ai s4" d="M398.2 354.8l2.5 9.5 2 9.7 1.4 9.9 0.9 10 0.3 9.9"/><path d="M460.2 369l4.9 21.4 2.3 21.9 -0.3 21.8"/><path class="ai s4" d="M460.2 369l4.9 21.4 2.3 21.9 -0.3 21.8"/><path d="M380.1 327.8l2.9 7.1 2.6 7.4 2.3 7.7 1.9 7.8 1.5 8 1.2 8.1"/><path class="ai s4" d="M380.1 327.8l2.9 7.1 2.6 7.4 2.3 7.7 1.9 7.8 1.5 8 1.2 8.1"/><path d="M402 367l1.9 9.9 1.3 10 0.6 10.1 0.2 10 -0.5 9.9"/><path class="ai s3" d="M402 367l1.9 9.9 1.3 10 0.6 10.1 0.2 10 -0.5 9.9"/><path d="M421.9 428.9l-2.2 11.6 -2.9 11.1 -3.6 10.3 -4.2 9.6 -4.8 8.8"/><path class="ai s2" d="M421.9 428.9l-2.2 11.6 -2.9 11.1 -3.6 10.3 -4.2 9.6 -4.8 8.8"/><path d="M412.9 325.7l5.9 12 4.8 12.8 3.9 13.6 2.7 13.9"/><path class="ai s5" d="M412.9 325.7l5.9 12 4.8 12.8 3.9 13.6 2.7 13.9"/><path d="M399.4 364.5l1.8 9.5 1.4 9.6 0.7 9.7 0.3 9.6 -0.3 9.6"/><path class="ai s3" d="M399.4 364.5l1.8 9.5 1.4 9.6 0.7 9.7 0.3 9.6 -0.3 9.6"/><path d="M392.5 373.9l1.2 16.4 -0.1 16.1 -0.6 8 -1 7.7"/><path class="ai s2" d="M392.5 373.9l1.2 16.4 -0.1 16.1 -0.6 8 -1 7.7"/><path d="M461.7 407.6l0.2 20.5 -2.2 20 -4.2 18.8"/><path class="ai s3" d="M461.7 407.6l0.2 20.5 -2.2 20 -4.2 18.8"/><path d="M374.6 383.6l-2.8 20 -2.7 14.3 -3.3 13.5"/><path class="ai s0" d="M374.6 383.6l-2.8 20 -2.7 14.3 -3.3 13.5"/><path d="M408.1 373.6l1.5 10.7 0.9 10.8 0.2 10.7 -0.4 10.6 -1.1 10.3"/><path class="ai s3" d="M408.1 373.6l1.5 10.7 0.9 10.8 0.2 10.7 -0.4 10.6 -1.1 10.3"/><path d="M430.1 433.7l-2.6 12.9 -3.5 12.2 -4.3 11.4 -5.1 10.3"/><path class="ai s2" d="M430.1 433.7l-2.6 12.9 -3.5 12.2 -4.3 11.4 -5.1 10.3"/><path d="M391 327.7l3.5 8.5 3 8.9 2.5 9.2 2 9.4 1.5 9.5"/><path class="ai s4" d="M391 327.7l3.5 8.5 3 8.9 2.5 9.2 2 9.4 1.5 9.5"/><path d="M408.7 331.4l4.7 11.2 3.8 11.8 3 12.3 2.1 12.5"/><path class="ai s5" d="M408.7 331.4l4.7 11.2 3.8 11.8 3 12.3 2.1 12.5"/><path d="M382 320.9l3.2 7.2 2.8 7.6 2.4 7.9 2 8.1 1.6 8.2 1.2 8.4"/><path class="ai s4" d="M382 320.9l3.2 7.2 2.8 7.6 2.4 7.9 2 8.1 1.6 8.2 1.2 8.4"/><path d="M403.7 353.9l2.6 10.2 2 10.4 1.4 10.7 0.7 10.6 0.1 10.6"/><path class="ai s4" d="M403.7 353.9l2.6 10.2 2 10.4 1.4 10.7 0.7 10.6 0.1 10.6"/><path d="M406.8 298.5l7.2 10.7 6.3 11.7 5.3 12.7 4.2 13.3"/><path class="ai s5" d="M406.8 298.5l7.2 10.7 6.3 11.7 5.3 12.7 4.2 13.3"/><path d="M414.6 373.1l1.8 11.8 1 11.8 0.2 11.8 -0.6 11.7"/><path class="ai s3" d="M414.6 373.1l1.8 11.8 1 11.8 0.2 11.8 -0.6 11.7"/><path d="M386.9 359.1l2.2 15.1 1 15.3 0 7.6 -0.8 14.9"/><path class="ai s3" d="M386.9 359.1l2.2 15.1 1 15.3 0 7.6 -0.8 14.9"/><path d="M398.3 316.1l5 9.5 4.3 10.2 3.6 10.8 2.9 11.1 2.1 11.3"/><path class="ai s5" d="M398.3 316.1l5 9.5 4.3 10.2 3.6 10.8 2.9 11.1 2.1 11.3"/><path d="M390.9 357.1l1.6 8.2 1.2 8.2 0.9 8.4 0.4 8.3 0.2 8.3 -0.3 8.2"/><path class="ai s3" d="M390.9 357.1l1.6 8.2 1.2 8.2 0.9 8.4 0.4 8.3 0.2 8.3 -0.3 8.2"/><path d="M367.6 332.1l2.2 10.9 1.7 11 1.2 11.2 0.9 16.9"/><path class="ai s3" d="M367.6 332.1l2.2 10.9 1.7 11 1.2 11.2 0.9 16.9"/><path d="M399.3 361.5l1.8 9.4 1.3 9.5 0.8 9.6 0.3 9.5 -0.2 9.5"/><path class="ai s3" d="M399.3 361.5l1.8 9.4 1.3 9.5 0.8 9.6 0.3 9.5 -0.2 9.5"/><path d="M420.3 379.4l1.5 12.6 0.6 12.7 -0.3 12.5 -1.2 12.2"/><path class="ai s3" d="M420.3 379.4l1.5 12.6 0.6 12.7 -0.3 12.5 -1.2 12.2"/><path d="M410.4 378.9l1.1 10.9 0.5 10.9 -0.2 10.7 -0.9 10.6 -1.5 10.2"/><path class="ai s3" d="M410.4 378.9l1.1 10.9 0.5 10.9 -0.2 10.7 -0.9 10.6 -1.5 10.2"/><path d="M434.1 334.1l6.4 15.8 5 16.7 3.3 17.4"/><path class="ai s5" d="M434.1 334.1l6.4 15.8 5 16.7 3.3 17.4"/><path d="M454.4 431.3l-2.6 17.7 -4.2 16.7 -5.7 15.3"/><path class="ai s3" d="M454.4 431.3l-2.6 17.7 -4.2 16.7 -5.7 15.3"/><path d="M271.5 528.8l3.6-11.3 3.8-15.2 2.6-12.4 3.7-22.3"/><path class="ai s4" d="M271.5 528.8l3.6-11.3 3.8-15.2 2.6-12.4 3.7-22.3"/><path d="M396.8 436.3l-5.8 12.1 -6.1 10.7 -6.4 9.5 -3.3 4.3 -6.9 7.6"/><path class="ai s1" d="M396.8 436.3l-5.8 12.1 -6.1 10.7 -6.4 9.5 -3.3 4.3 -6.9 7.6"/><path d="M417.5 414.6l-1.4 10.9 -2 10.5 -2.6 10 -3.2 9.4 -3.6 8.9"/><path class="ai s2" d="M417.5 414.6l-1.4 10.9 -2 10.5 -2.6 10 -3.2 9.4 -3.6 8.9"/><path d="M395.2 368.3l0.9 8.4 0.5 8.4 0.1 8.3 -0.8 16.5 -1 7.9"/><path class="ai s3" d="M395.2 368.3l0.9 8.4 0.5 8.4 0.1 8.3 -0.8 16.5 -1 7.9"/><path d="M403.5 373.2l0.9 9.6 0.5 9.6 -0.1 9.6 -0.5 9.3 -1 9.2"/><path class="ai s3" d="M403.5 373.2l0.9 9.6 0.5 9.6 -0.1 9.6 -0.5 9.3 -1 9.2"/><path d="M426.8 453.8l-4.1 11 -4.7 10.2 -5.3 9.3 -5.7 8.4 -6 7.5"/><path class="ai s2" d="M426.8 453.8l-4.1 11 -4.7 10.2 -5.3 9.3 -5.7 8.4 -6 7.5"/><path d="M448.9 436.2l-3 16.2 -4.5 15.2 -5.6 14"/><path class="ai s3" d="M448.9 436.2l-3 16.2 -4.5 15.2 -5.6 14"/><path d="M451.2 375.4l3 18.6 1 18.8 -0.8 18.5"/><path class="ai s4" d="M451.2 375.4l3 18.6 1 18.8 -0.8 18.5"/><path d="M358.3 314.9l-0.4 12.4 -1.1 15.8 -1.3 26.8"/><path class="ai s2" d="M358.3 314.9l-0.4 12.4 -1.1 15.8 -1.3 26.8"/><path d="M422.3 379.2l1.2 12.6 0.3 12.6 -0.5 12.5 -1.4 12"/><path class="ai s3" d="M422.3 379.2l1.2 12.6 0.3 12.6 -0.5 12.5 -1.4 12"/><path d="M430.2 378l1.6 14.2 0.5 14.1 -0.6 13.9 -1.6 13.5"/><path class="ai s3" d="M430.2 378l1.6 14.2 0.5 14.1 -0.6 13.9 -1.6 13.5"/><path d="M250 570.1l3.6-4 6.5-8.9 2.9-4.8 5.2-9.9 4.2-10 3.3-9.7"/><path class="ai s3" d="M250 570.1l3.6-4 6.5-8.9 2.9-4.8 5.2-9.9 4.2-10 3.3-9.7"/><path d="M368 289.5l2.2 5.3 1.9 5.5 2.7 11.3 1.7 11.5 0.8 11.5"/><path class="ai s5" d="M368 289.5l2.2 5.3 1.9 5.5 2.7 11.3 1.7 11.5 0.8 11.5"/><path d="M459 427l-2.3 18.6 -4 17.5 -5.6 16.3"/><path class="ai s3" d="M459 427l-2.3 18.6 -4 17.5 -5.6 16.3"/><path d="M454.2 369l3.6 19.2 1.6 19.5 -0.4 19.3"/><path class="ai s4" d="M454.2 369l3.6 19.2 1.6 19.5 -0.4 19.3"/><path d="M347.2 247.8l0.1 3.2 -0.5 3.2 -1 3.2 -1.3 3.1 -3.8 6.1 -2.3 2.8 -5.2 5.4 -5.6 4.8 -5.9 4.5"/><path class="ai s3" d="M347.2 247.8l0.1 3.2 -0.5 3.2 -1 3.2 -1.3 3.1 -3.8 6.1 -2.3 2.8 -5.2 5.4 -5.6 4.8 -5.9 4.5"/><path d="M448.8 384l1.7 17.7 0 17.5 -1.6 17"/><path class="ai s4" d="M448.8 384l1.7 17.7 0 17.5 -1.6 17"/><path d="M190.9 605.8l7.4 2.7 7.5 0.9 7.5-1 7.5-2.9 7.2-4.8 6.8-6.5"/><path class="ai s4" d="M190.9 605.8l7.4 2.7 7.5 0.9 7.5-1 7.5-2.9 7.2-4.8 6.8-6.5"/><path d="M416.2 369l1.4 11.5 0.7 11.6 -0.1 11.4 -0.7 11.1"/><path class="ai s3" d="M416.2 369l1.4 11.5 0.7 11.6 -0.1 11.4 -0.7 11.1"/><path d="M367.3 271.7l2.1 4.9 1.7 5.2 1.3 5.2 1.3 10.6 0.1 10.5 -0.9 10.1"/><path class="ai s5" d="M367.3 271.7l2.1 4.9 1.7 5.2 1.3 5.2 1.3 10.6 0.1 10.5 -0.9 10.1"/><path d="M242.1 576.5l4.4-3.9 4.1-4.5 3.8-4.9 3.6-5.3 3.3-5.6 5.7-11.7 4.5-11.8"/><path class="ai s3" d="M242.1 576.5l4.4-3.9 4.1-4.5 3.8-4.9 3.6-5.3 3.3-5.6 5.7-11.7 4.5-11.8"/><path d="M377.3 334.6l0 16.9 -1.1 16.3 -1.6 15.8"/><path class="ai s3" d="M377.3 334.6l0 16.9 -1.1 16.3 -1.6 15.8"/><path d="M379 280.2l2.5 6.1 2 6.3 1.5 6.5 1 6.5 0.7 6.5 0.3 12.7"/><path class="ai s5" d="M379 280.2l2.5 6.1 2 6.3 1.5 6.5 1 6.5 0.7 6.5 0.3 12.7"/><path d="M202.4 605.5l7.1 0.4 7.2-1.2 7-2.9 6.8-4.6 6.5-6.2 6-7.5"/><path class="ai s3" d="M202.4 605.5l7.1 0.4 7.2-1.2 7-2.9 6.8-4.6 6.5-6.2 6-7.5"/><path d="M268.3 456.1l-1.1-14.1 -1.4-10.8 -2.5-15.5 -0.3-4.8"/><path class="ai s4" d="M268.3 456.1l-1.1-14.1 -1.4-10.8 -2.5-15.5 -0.3-4.8"/><path d="M429.8 346.9l3.2 13.8 2 14.1 1 14 0 14"/><path class="ai s4" d="M429.8 346.9l3.2 13.8 2 14.1 1 14 0 14"/><path d="M436 402.8l-1 13.6 -1.9 13.1 -2.8 12.5 -3.5 11.8"/><path class="ai s3" d="M436 402.8l-1 13.6 -1.9 13.1 -2.8 12.5 -3.5 11.8"/><path d="M372.9 318.2l-2.4 14.2 -8.9 36.7"/><path class="ai s2" d="M372.9 318.2l-2.4 14.2 -8.9 36.7"/><path d="M211.1 602.6l6.8-1.1 6.7-2.7 6.5-4.1 6.2-5.5 5.9-6.8 5.3-7.8"/><path class="ai s3" d="M211.1 602.6l6.8-1.1 6.7-2.7 6.5-4.1 6.2-5.5 5.9-6.8 5.3-7.8"/><path d="M404.6 400.9l-4.1 14.3 -4.7 13.2 -5.2 12 -5.5 10.9"/><path class="ai s2" d="M404.6 400.9l-4.1 14.3 -4.7 13.2 -5.2 12 -5.5 10.9"/><path d="M404.2 299.8l3.3 9.2 2.6 9.5 2 9.7 1.2 9.6 0.7 9.7"/><path class="ai s5" d="M404.2 299.8l3.3 9.2 2.6 9.5 2 9.7 1.2 9.6 0.7 9.7"/><path d="M411.4 283.6l4.9 10.1 3.9 10.6 3 10.9 2 11"/><path class="ai s5" d="M411.4 283.6l4.9 10.1 3.9 10.6 3 10.9 2 11"/><path d="M387 324.8l-0.3 6.2 -1.2 12 -1.8 11.4 -2.2 10.7 -7.5 29.1"/><path class="ai s3" d="M387 324.8l-0.3 6.2 -1.2 12 -1.8 11.4 -2.2 10.7 -7.5 29.1"/><path d="M403.7 305.3l2.7 9 2 9.2 1.4 9.2 0.8 9.2 0.3 9.1"/><path class="ai s5" d="M403.7 305.3l2.7 9 2 9.2 1.4 9.2 0.8 9.2 0.3 9.1"/><path d="M409 428.8l-3.3 6.8 -6.8 12.2 -3.5 5.6 -7 10.1 -3.6 4.5"/><path class="ai s2" d="M409 428.8l-3.3 6.8 -6.8 12.2 -3.5 5.6 -7 10.1 -3.6 4.5"/><path d="M273.2 479.5l0.3-20.8 -0.8-24.8"/><path class="ai s4" d="M273.2 479.5l0.3-20.8 -0.8-24.8"/><path d="M410.4 392.5l-3.8 15.9 -4.6 14.6 -5.2 13.3"/><path class="ai s2" d="M410.4 392.5l-3.8 15.9 -4.6 14.6 -5.2 13.3"/><path d="M269.8 464.2l-1-15.5 -1.2-12.2 -3.1-20.1"/><path class="ai s4" d="M269.8 464.2l-1-15.5 -1.2-12.2 -3.1-20.1"/><path d="M271.2 480.5l0.2-16.7 -0.9-19.2 -1.9-21"/><path class="ai s4" d="M271.2 480.5l0.2-16.7 -0.9-19.2 -1.9-21"/><path d="M410.9 351l-0.2 8.9 -0.6 8.7 -0.9 8.5 -2.8 16.1 -1.8 7.7"/><path class="ai s3" d="M410.9 351l-0.2 8.9 -0.6 8.7 -0.9 8.5 -2.8 16.1 -1.8 7.7"/><path d="M414 347.5l0.2 9.4 -0.4 9.3 -0.7 9.1 -1.2 8.7 -1.5 8.5"/><path class="ai s4" d="M414 347.5l0.2 9.4 -0.4 9.3 -0.7 9.1 -1.2 8.7 -1.5 8.5"/><path d="M425.2 326.2l1.3 11.1 0.4 10.8 -0.2 10.7 -0.8 10.3 -1.4 9.9"/><path class="ai s4" d="M425.2 326.2l1.3 11.1 0.4 10.8 -0.2 10.7 -0.8 10.3 -1.4 9.9"/><path d="M213.7 612.2l7.8-3.8 7.4-5.8 7.1-7.8 6.4-9.5 5.8-10.9"/><path class="ai s2" d="M213.7 612.2l7.8-3.8 7.4-5.8 7.1-7.8 6.4-9.5 5.8-10.9"/><path d="M223.8 605l7-5.2 6.7-6.8 6.1-8.3 5.6-9.7 4.9-10.6"/><path class="ai s2" d="M223.8 605l7-5.2 6.7-6.8 6.1-8.3 5.6-9.7 4.9-10.6"/><path d="M424.5 379l-1.8 9.4 -2.3 9 -2.5 8.6 -2.8 8.1 -6.1 14.7"/><path class="ai s3" d="M424.5 379l-1.8 9.4 -2.3 9 -2.5 8.6 -2.8 8.1 -6.1 14.7"/><path d="M266.5 472.7l-0.3-10.5 -1.6-17.9 -2-13.8 -2.1-10.1"/><path class="ai s4" d="M266.5 472.7l-0.3-10.5 -1.6-17.9 -2-13.8 -2.1-10.1"/><path d="M248.5 574.6l4.8-8.8 4.3-9.5 3.7-9.9 3.1-10.2 2.6-10.2"/><path class="ai s2" d="M248.5 574.6l4.8-8.8 4.3-9.5 3.7-9.9 3.1-10.2 2.6-10.2"/><path d="M267 526l2-10.1 1.6-9.9 1.2-9.3 1.4-17.2"/><path class="ai s3" d="M267 526l2-10.1 1.6-9.9 1.2-9.3 1.4-17.2"/><path d="M234.8 594.2l6.4-8.1 5.8-9.5 5.1-10.7 4.4-11.4"/><path class="ai s2" d="M234.8 594.2l6.4-8.1 5.8-9.5 5.1-10.7 4.4-11.4"/><path d="M243 583.5l5.5-8.7 4.9-9.7 4.3-10.5 3.6-10.9 3-11.1"/><path class="ai s2" d="M243 583.5l5.5-8.7 4.9-9.7 4.3-10.5 3.6-10.9 3-11.1"/><path d="M264.3 532.6l2.4-11.2 1.8-10.9 1.3-10.6 1.4-19.4"/><path class="ai s3" d="M264.3 532.6l2.4-11.2 1.8-10.9 1.3-10.6 1.4-19.4"/><path d="M267 506.1l1.1-11.4 0.5-10.9 0.2-10.1 -0.5-17.6"/><path class="ai s4" d="M267 506.1l1.1-11.4 0.5-10.9 0.2-10.1 -0.5-17.6"/><path d="M266.7 516.8l1.6-11.8 0.9-11.2 0.7-20.5 -0.1-9.1"/><path class="ai s4" d="M266.7 516.8l1.6-11.8 0.9-11.2 0.7-20.5 -0.1-9.1"/><path d="M254.1 564.4l4.2-11.5 3.5-11.9 2.8-12.1 2.1-12.1"/><path class="ai s2" d="M254.1 564.4l4.2-11.5 3.5-11.9 2.8-12.1 2.1-12.1"/><path d="M256.5 554.5l3.6-12 3-12.2 2.3-12.2 1.6-12"/><path class="ai s2" d="M256.5 554.5l3.6-12 3-12.2 2.3-12.2 1.6-12"/><path d="M248.2 574.4l5-12.1 4.1-12.9 3.3-13.4 2.6-13.5"/><path class="ai s2" d="M248.2 574.4l5-12.1 4.1-12.9 3.3-13.4 2.6-13.5"/><path d="M263.2 522.5l1.7-13.4 1.1-12.8 0.5-12.3 0-11.3"/><path class="ai s3" d="M263.2 522.5l1.7-13.4 1.1-12.8 0.5-12.3 0-11.3"/></g><path d="M0 479.6L591 381.1" stroke="#a03a4a" stroke-width="1.1" fill="none" opacity="0.85"/><path d="M0 380L591 494" stroke="#6a8f24" stroke-width="1.1" fill="none" opacity="0.85"/></svg>
</div>
<div id="v3dui" style="left:0;top:0;width:1920px;height:1005px;">
<div style="left:1px;top:33px;width:590px;height:32px;background:rgba(48,48,48,0.96);border-radius:5px 5px 0 0;"></div>
<div style="left:1px;top:65px;width:590px;height:32px;background:rgba(48,48,48,0.90);"></div>
<div class="btn" style="left:11.5px;top:36.5px;width:39px;height:24.5px"></div>
<div class="btn" style="left:57.5px;top:36.5px;width:136px;height:24.5px"></div>
<div style="left:201px;top:36.5px;width:48px;height:24.5px;background:#2d2d2d;border-radius:4px;"></div>
<div style="left:251.5px;top:36.5px;width:58.5px;height:24.5px;background:#2d2d2d;border-radius:4px;"></div>
<div style="left:313px;top:36.5px;width:43px;height:24.5px;background:#2d2d2d;border-radius:4px;"></div>
<div style="left:358.5px;top:36.5px;width:60.5px;height:24.5px;background:#2d2d2d;border-radius:4px;"></div>
<div class="btn" style="left:439.5px;top:36.5px;width:99px;height:24.5px"></div>
<div class="btn" style="left:545.5px;top:36.5px;width:39px;height:24.5px"></div>
<span class="t" style="left:90.50px;top:40.30px;font-size:15px;letter-spacing:-0.170px;color:#e6e6e6;">Object Mode</span>
<span class="t" style="left:209.00px;top:40.30px;font-size:15px;letter-spacing:-0.370px;color:#e6e6e6;">View</span>
<span class="t" style="left:260.30px;top:40.30px;font-size:15px;letter-spacing:-0.304px;color:#e6e6e6;">Select</span>
<span class="t" style="left:321.30px;top:40.30px;font-size:15px;letter-spacing:-0.474px;color:#e6e6e6;">Add</span>
<span class="t" style="left:367.00px;top:40.30px;font-size:15px;letter-spacing:-0.277px;color:#e6e6e6;">Object</span>
<span class="t" style="left:472.70px;top:40.30px;font-size:15px;letter-spacing:-0.365px;color:#e6e6e6;">Global</span>
<div style="left:55px;top:69px;width:23px;height:23px;background:#4772b3;border-radius:4px 0 0 4px;"></div>
<div style="left:79px;top:69px;width:23px;height:23px;background:#545454;"></div>
<div style="left:103px;top:69px;width:23px;height:23px;background:#545454;"></div>
<div style="left:127px;top:69px;width:23px;height:23px;background:#545454;"></div>
<div style="left:151px;top:69px;width:22.5px;height:23px;background:#545454;border-radius:0 4px 4px 0;"></div>
<div style="left:239px;top:69px;width:23px;height:23px;background:#4772b3;border-radius:4px 0 0 4px;"></div>
<div style="left:263px;top:69px;width:23px;height:23px;background:#545454;"></div>
<div style="left:287px;top:69px;width:23px;height:23px;background:#545454;"></div>
<div style="left:311px;top:69px;width:23px;height:23px;background:#545454;"></div>
<div style="left:335px;top:69px;width:23px;height:23px;background:#545454;border-radius:0 4px 4px 0;"></div>
<div style="left:360px;top:69px;width:144px;height:23px;background:#1d1d1d;border-radius:4px;border:1px solid #3a3a3a;"></div>
<span class="t" style="left:393.00px;top:72.30px;font-size:15px;letter-spacing:-0.637px;color:#7a7a7a;">Search</span>
<div style="left:506px;top:69px;width:23px;height:23px;background:#545454;border-radius:4px 0 0 4px;"></div>
<div style="left:530px;top:69px;width:24px;height:23px;background:#545454;"></div>
<div style="left:554px;top:69px;width:37px;height:23px;background:#282828;"></div>
<div style="left:0px;top:115px;width:9.5px;height:16.5px;background:#2b2b2b;border-radius:0 4px 4px 0;"></div>
<div style="left:581px;top:115px;width:10px;height:16.5px;background:#2b2b2b;border-radius:4px 0 0 4px;"></div>
<div style="left:546px;top:209.5px;width:34px;height:34px;border-radius:17px;background:rgba(30,30,30,0.72)"></div>
<div style="left:546px;top:246.9px;width:34px;height:34px;border-radius:17px;background:rgba(30,30,30,0.72)"></div>
<div style="left:546px;top:284.6px;width:34px;height:34px;border-radius:17px;background:rgba(30,30,30,0.72)"></div>
<div style="left:546px;top:321.7px;width:34px;height:34px;border-radius:17px;background:rgba(30,30,30,0.72)"></div>
<span class="t" style="left:11.50px;top:107.60px;font-size:15px;letter-spacing:-0.158px;color:#ffffff;text-shadow:0 0 2px #000,0 0 3px rgba(0,0,0,.8),1px 1px 1px rgba(0,0,0,.6);">User Perspective</span>
<span class="t" style="left:12.50px;top:129.80px;font-size:15px;letter-spacing:0.101px;color:#ffffff;text-shadow:0 0 2px #000,0 0 3px rgba(0,0,0,.8),1px 1px 1px rgba(0,0,0,.6);">(1) Attractors</span>
<span class="t" style="left:104.50px;top:128.53px;font-size:16.5px;letter-spacing:0.000px;color:#ffffff;text-shadow:0 0 2px #000,0 0 3px rgba(0,0,0,.8),1px 1px 1px rgba(0,0,0,.6);">|</span>
<span class="t" style="left:113.20px;top:129.80px;font-size:15px;letter-spacing:-1.258px;color:#ffffff;text-shadow:0 0 2px #000,0 0 3px rgba(0,0,0,.8),1px 1px 1px rgba(0,0,0,.6);">TSUCS</span>
<svg style="left:0;top:0" width="1920" height="1005" viewBox="0 0 1920 1005"><g stroke="#d4d4d4" stroke-width="1.25" fill="none" stroke-linecap="round"><path d="M18.4 47.8h7.5M17 53h18M22.6 45.2l-2.3 11.6M30.5 50.3l1 6.5"/></g><circle cx="30.7" cy="44.2" r="4.5" fill="#e4e4e4"/><path d="M28.2 43.6a2.9 2.9 0 0 1 2.4-2.3" stroke="#333" stroke-width="0.9" fill="none" stroke-linecap="round"/><path d="M39.00 47.20l3.70 4.50l3.70 -4.50" fill="none" stroke="#e0e0e0" stroke-width="1.2" stroke-linecap="round" stroke-linejoin="round"/><rect x="67" y="43.5" width="10" height="10" fill="#e6e6e6"/><path d="M63.6 45v-4.4h4.6M76 40.6h4.6v4.4M80.6 52.2v4.4h-4.6M68.2 56.6h-4.6v-4.4" stroke="#9c9c9c" stroke-width="1.2" fill="none"/><path d="M182.00 47.20l3.70 4.50l3.70 -4.50" fill="none" stroke="#e0e0e0" stroke-width="1.2" stroke-linecap="round" stroke-linejoin="round"/><g stroke="#e0e0e0" stroke-width="1.2" fill="none" stroke-linecap="round" stroke-linejoin="round"><circle cx="448.9" cy="53.8" r="1.7"/><path d="M448.9 52V40.6M446.2 43.4l2.7-3 2.7 3M450.7 53.8h11.6M459.5 51.1l3 2.7-3 2.7"/></g><g stroke="#8c8c8c" stroke-width="1.2" fill="none" stroke-linecap="round" stroke-linejoin="round"><path d="M450.3 52.4l8.4-8.6M455 43.6h3.9v3.9"/></g><path d="M526.80 47.20l3.70 4.50l3.70 -4.50" fill="none" stroke="#e0e0e0" stroke-width="1.2" stroke-linecap="round" stroke-linejoin="round"/><g stroke="#e0e0e0" stroke-width="1.25" fill="none" stroke-linecap="round"><path d="M558.4 47.2a5 5 0 1 1 6.3 2.8"/><path d="M561.2 50.9a5 5 0 1 1-3.4-3.4"/></g><circle cx="560.6" cy="48.3" r="1.6" fill="#e0e0e0"/><path d="M572.80 47.20l3.70 4.50l3.70 -4.50" fill="none" stroke="#e0e0e0" stroke-width="1.2" stroke-linecap="round" stroke-linejoin="round"/><rect x="19.8" y="69.9" width="22.4" height="22.1" rx="1.6" fill="none" stroke="#e9a02b" stroke-width="2" stroke-dasharray="4.1 2.2" stroke-dashoffset="2"/><path d="M27.3 75l8.8 8.6-5.4.8-3.4 2.9z" fill="#e6e6e6"/><rect x="58.4" y="72.6" width="16.2" height="16" fill="none" stroke="#fff" stroke-width="1.4" stroke-dasharray="2.6 2.4" stroke-dashoffset="1.3"/><path d="M87 72h12v12.5h-5V89H82V77.5h5z" fill="#c4c4c4"/><path d="M109.6 78.1H106.6V88.5H117.4V85.6" fill="none" stroke="#c4c4c4" stroke-width="1.2" stroke-dasharray="2.2 2.1" stroke-dashoffset="1.1"/><path d="M111 72h12v12.5h-5V77.5h-7z" fill="#c4c4c4"/><path d="M135 72h12v12.5h-5V89H130V77.5h5z" fill="#c4c4c4"/><rect x="135" y="77.5" width="7" height="7" fill="#545454"/><g fill="none" stroke="#c4c4c4" stroke-width="1.2" stroke-dasharray="2.2 2.1" stroke-dashoffset="1.1"><path d="M159.3 77V72.6H170.4V84H166.6"/><path d="M158.6 78.1H154.6V88.5H165.6V85"/></g><rect x="159" y="77.4" width="7" height="6.9" fill="#c4c4c4"/><path d="M197.30 78.30l5.60 5.60l5.60 -5.60" fill="none" stroke="#e0e0e0" stroke-width="1.2" stroke-linecap="round" stroke-linejoin="round"/><defs><linearGradient id="hx" x1="0.15" y1="0.1" x2="0.85" y2="0.9"><stop offset="0" stop-color="#00a8ff"/><stop offset="0.28" stop-color="#18b0c0"/><stop offset="0.5" stop-color="#46b450"/><stop offset="0.68" stop-color="#c88a30"/><stop offset="0.85" stop-color="#f03028"/><stop offset="1" stop-color="#ff2020"/></linearGradient></defs><path d="M221.8 69.8l8.5 5v10l-8.5 5-8.5-5v-10z" fill="url(#hx)"/><rect x="245.7" y="75.6" width="10" height="9.6" fill="#ffffff"/><path d="M242.4 76.4v-4h4.4M254.6 72.4h4.4v4M259 84.6v4h-4.4M246.8 88.6h-4.4v-4" stroke="#d6e2f6" stroke-width="1.2" fill="none"/><circle cx="274.5" cy="80.3" r="8" fill="none" stroke="#c4c4c4" stroke-width="1.3"/><path d="M274.5 72.3a8 8 0 0 0-8 8q4 2.6 8 2.6z" fill="#c4c4c4"/><path d="M274.5 82.9q4 0 8-2.6a8 8 0 0 1-8 8z" fill="#c4c4c4"/><path d="M295.6 72q-1 0-1.4 1l-4.2 10.6q-.4 1.2.8 1.6l6.4 1.4q1.2 0 1.2-1.2l-1.2-12q-.2-1.4-1.6-1.4z" fill="#c4c4c4"/><circle cx="304.5" cy="74.3" r="2.5" fill="#c4c4c4"/><circle cx="302.3" cy="84" r="4.4" fill="#545454" stroke="#c4c4c4" stroke-width="1.2"/><path d="M300.3 83.2a2.3 2.3 0 0 1 1.6-1.6" stroke="#c4c4c4" stroke-width="0.9" fill="none"/><path d="M314.3 88.6L331 72" stroke="#c4c4c4" stroke-width="1.2"/><circle cx="322.3" cy="80.3" r="8" fill="#545454" stroke="#c4c4c4" stroke-width="1.3"/><path d="M317.2 75.2q2.3-2.2 5.2-2.600l2.8 1.2-.6 2.2-2.6 1-.4 2-2.4.4-1.4-1.800zM321.4 80.800l2.6-.6 2.6 1.6 2.4.4-.8 3.4-2.6 2.2-1.4-.4-.4-2.8-2.2-1.600zM315.4 82l1.8 1.2.8 2.800q-1.8-1.6-2.6-4z" fill="#c4c4c4"/><g fill="none" stroke="#c4c4c4" stroke-width="1.25" stroke-linejoin="round"><path d="M346 80v-7a1.6 1.6 0 0 1 3.3 0v7h4a1.5 1.5 0 0 1 1.5 1.500v7h-3v-2.500l-1.2 2.500h-2.400v-2.500l-1.2 2.500h-3.500q1.5-1 1.5-3h-4.400q1.5-1 1.5-3v-1a1.5 1.5 0 0 1 1.5-1.500z"/><path d="M342.6 83.500h12"/></g><g stroke="#e0e0e0" stroke-width="1.3" fill="none" stroke-linecap="round"><circle cx="376.4" cy="77.8" r="6.1"/><path d="M372 82.400l-6.3 6.2"/></g><path d="M509 79.200q8 11.5 15.9 0" stroke="#b4b4b4" stroke-width="1.2" fill="none" stroke-linecap="round"/><path d="M535.8 72h11.200v17l-5.6-4.6-5.6 4.600z" fill="#e6e6e6"/><path d="M558.6 72.800v13.600h8.500M558.6 77.600h8.5" stroke="#f0f0f0" stroke-width="1.6" fill="none"/><path d="M567.6 72.500h3.500l1 1.300h4.600v5.800h-9.100zM567.6 82.300h3.500l1 1.300h4.600v5.600h-9.100z" fill="#f0f0f0"/><path d="M583.00 79.60l3.80 4.20l3.80 -4.20" fill="none" stroke="#e0e0e0" stroke-width="1.2" stroke-linecap="round" stroke-linejoin="round"/><path d="M2.60 118.60l4.60 4.60l-4.60 4.60" fill="none" stroke="#9a9a9a" stroke-width="1.3" stroke-linecap="round" stroke-linejoin="round"/><path d="M589.30 118.60l-4.60 4.60l4.60 4.60" fill="none" stroke="#9a9a9a" stroke-width="1.3" stroke-linecap="round" stroke-linejoin="round"/><circle cx="277.6" cy="433.3" r="12.6" fill="none" stroke="#ffffff" stroke-width="1.3"/><circle cx="277.6" cy="433.3" r="12.6" fill="none" stroke="#f01818" stroke-width="1.4" stroke-dasharray="4.95 4.95" stroke-dashoffset="2"/><path d="M277.4 440v21M263 435.5l12-2.2M282 432.8l17-3M266 431.5l10 1.6M281 434.2l16 3.2" stroke="#0c0c0c" stroke-width="1.1"/><g stroke-width="2.2" stroke-linecap="round"><path d="M528.9 158.300L511 156" stroke="#6a991e"/><path d="M528.9 158.300L547 155.9" stroke="#c23a50"/><path d="M528.9 158.300V128" stroke="#3584dc"/></g><circle cx="502.9" cy="153.7" r="9" fill="#6a991e"/><circle cx="559.2" cy="153.7" r="9" fill="#b5364a"/><circle cx="499.3" cy="161.3" r="9.7" fill="#6b3b43" stroke="#f2405a" stroke-width="1.2"/><circle cx="555.6" cy="160.7" r="9.7" fill="#566632" stroke="#86c91e" stroke-width="1.2"/><circle cx="529.5" cy="197.9" r="9.3" fill="#3c5270" stroke="#3080d8" stroke-width="1.2"/><circle cx="528.5" cy="118.1" r="10.1" fill="#3182dc"/><text x="528.5" y="122.4" font-family="Liberation Sans, sans-serif" font-size="12.5" font-weight="bold" text-anchor="middle" fill="#0a1f3a">Z</text><circle cx="565.3" cy="225.2" r="7.4" fill="#dcdcdc"/><path d="M561.1 225.2h8.400M565.3 221v8.4" stroke="#2a2a2a" stroke-width="1.3"/><path d="M560.3 230.3l-5.3 5.3" stroke="#dcdcdc" stroke-width="2.8" stroke-linecap="round"/><path d="M556.2 263.800q-1.6-2.2-3-2.4-1.2 0-.8 1.4 2.4 5.4 5.6 8 2.4 2 5.6 2 5.4 0 6.6-5.200l1.6-7.600q.2-1.2-.8-1.4-1 0-1.3 1l-1.3 4.4.4-7.200q0-1.3-1.1-1.300t-1.2 1.300l-.6 6.6-.5-8q-.1-1.3-1.2-1.300t-1.2 1.300l.1 8-1.3-6.600q-.3-1.2-1.3-1t-.9 1.400l1 9.600z" fill="#dcdcdc"/><g stroke="#dcdcdc" stroke-width="1.4" fill="none" stroke-linejoin="round"><path d="M556.3 303.600a3.5 3.5 0 1 1 3.4-6.2 4.4 4.4 0 1 1 6.8 5.400q-1 .8-2.3.8z"/><circle cx="557.6" cy="299.8" r="0.9"/><circle cx="565.8" cy="298.2" r="1.4"/><rect x="558.2" y="305.6" width="7.8" height="6.4" rx="1"/><path d="M568.3 308.800l4.3-2.800v5.600zM555.6 306.400v4.6"/></g><g stroke="#dcdcdc" stroke-width="1.5" fill="none" stroke-linejoin="round"><path d="M558.2 330.400h9.600l4.8 16.400h-19.200zM556.8 335.600h12.400M555.2 340.800h15.600M561.4 330.400l-1.8 16.400M564.6 330.400l1.8 16.4"/></g></svg>
</div>
<div id="info" style="left:1px;top:757px;width:590px;height:217px;background:#1a1a1a;border-radius:5px;overflow:hidden;">
<div style="left:0px;top:0px;width:590px;height:59px;background:#1a1a1a;"></div>
<div style="left:0px;top:59px;width:590px;height:37px;background:#232323;"></div>
<div style="left:0px;top:96px;width:590px;height:37px;background:#1a1a1a;"></div>
<div style="left:0px;top:133px;width:590px;height:37px;background:#232323;"></div>
<div style="left:0px;top:170px;width:590px;height:37px;background:#1a1a1a;"></div>
</div>
<span class="t mono" style="left:35.6px;top:769.80px;font-size:16.67px;color:#d4d4d4;">bpy.data.texts[&quot;Animovany TSUCS&quot;].name = &quot;Animovany TS</span>
<span class="t mono" style="left:35.6px;top:790.80px;font-size:16.67px;color:#d4d4d4;">UCS&quot;</span>
<span class="t mono" style="left:35.6px;top:827.80px;font-size:16.67px;color:#d4d4d4;">bpy.data.texts[&quot;TSUCS&quot;].name = &quot;TSUCS&quot;</span>
<span class="t mono" style="left:35.6px;top:864.80px;font-size:16.67px;color:#d4d4d4;">Saved &quot;Attractors.blend&quot;</span>
<span class="t mono" style="left:35.6px;top:901.80px;font-size:16.67px;color:#d4d4d4;">bpy.context. = True</span>
<span class="t mono" style="left:35.6px;top:938.80px;font-size:16.67px;color:#d4d4d4;">bpy.context. = False</span>
<svg style="left:0;top:0" width="1920" height="1005" viewBox="0 0 1920 1005"><rect x="7.2" y="763.8" width="24" height="24" rx="4.5" fill="#26695f"/><g stroke="#e8f4f2" stroke-width="1.3" stroke-linecap="round"><path d="M11.7 770.1h7.500M22.2 770.1h4.5"/><path d="M11.7 775.8h2M16.7 775.8h10"/><path d="M11.7 781.6h5.500M20.2 781.6h6.5"/></g><circle cx="23.5" cy="770.1" r="1.9" fill="#fff"/><circle cx="17" cy="775.8" r="1.9" fill="#fff"/><circle cx="20.7" cy="781.6" r="1.9" fill="#fff"/><rect x="7.2" y="822.3" width="24" height="24" rx="4.5" fill="#26695f"/><g stroke="#e8f4f2" stroke-width="1.3" stroke-linecap="round"><path d="M11.7 828.6h7.500M22.2 828.6h4.5"/><path d="M11.7 834.3h2M16.7 834.3h10"/><path d="M11.7 840.1h5.500M20.2 840.1h6.5"/></g><circle cx="23.5" cy="828.6" r="1.9" fill="#fff"/><circle cx="17" cy="834.3" r="1.9" fill="#fff"/><circle cx="20.7" cy="840.1" r="1.9" fill="#fff"/><rect x="7.2" y="896.3" width="24" height="24" rx="4.5" fill="#26695f"/><g stroke="#e8f4f2" stroke-width="1.3" stroke-linecap="round"><path d="M11.7 902.6h7.500M22.2 902.6h4.5"/><path d="M11.7 908.3h2M16.7 908.3h10"/><path d="M11.7 914.1h5.500M20.2 914.1h6.5"/></g><circle cx="23.5" cy="902.6" r="1.9" fill="#fff"/><circle cx="17" cy="908.3" r="1.9" fill="#fff"/><circle cx="20.7" cy="914.1" r="1.9" fill="#fff"/><rect x="7.2" y="933.3" width="24" height="24" rx="4.5" fill="#26695f"/><g stroke="#e8f4f2" stroke-width="1.3" stroke-linecap="round"><path d="M11.7 939.6h7.500M22.2 939.6h4.5"/><path d="M11.7 945.3h2M16.7 945.3h10"/><path d="M11.7 951.1h5.500M20.2 951.1h6.5"/></g><circle cx="23.5" cy="939.6" r="1.9" fill="#fff"/><circle cx="17" cy="945.3" r="1.9" fill="#fff"/><circle cx="20.7" cy="951.1" r="1.9" fill="#fff"/><rect x="7.2" y="859.3" width="24" height="24" rx="4.5" fill="#1f2f6a"/><path d="M11 863h16.500q1.5 0 1.5 1.500v11q0 1.5-1.5 1.500h-11.500l-3.5 3.500v-3.500h-1.500q-1.5 0-1.5-1.500v-11q0-1.5 1.5-1.500z" fill="#ffffff"/><text x="19.3" y="875.5" font-family="DejaVu Sans Mono, Liberation Mono, monospace" font-weight="bold" font-size="11.5" text-anchor="middle" fill="#1f2f6a">i</text><path d="M559 758.500l5.5 4.5 5.5-4.5" stroke="#8a8a8a" stroke-width="1.1" fill="none"/><rect x="584" y="929" width="4.5" height="33.5" rx="2.2" fill="#3c3c3c"/></svg>
<div id="texted" style="left:594px;top:33px;width:1325px;height:940px;background:#232323;border-radius:5px;overflow:hidden;">
<div style="left:0px;top:31px;width:35px;height:879px;background:#1e1e1e;"></div>
<div style="left:0px;top:0px;width:1324px;height:31px;background:#303030;"></div>
<div style="left:0px;top:910px;width:1324px;height:30px;background:#303030;"></div>
</div>
<span class="t mono" style="left:594px;top:68.31px;width:26.6px;text-align:right;font-size:15px;color:#7f7f7f;">1</span>
<span class="t mono" style="left:638px;top:68.31px;font-size:15px;color:#e6e6e6;"><span class="k">import </span>bpy</span>
<span class="t mono" style="left:594px;top:88.31px;width:26.6px;text-align:right;font-size:15px;color:#7f7f7f;">2</span>
<span class="t mono" style="left:638px;top:88.31px;font-size:15px;color:#e6e6e6;"><span class="k">import </span>math</span>
<span class="t mono" style="left:594px;top:108.31px;width:26.6px;text-align:right;font-size:15px;color:#7f7f7f;">3</span>
<span class="t mono" style="left:594px;top:128.31px;width:26.6px;text-align:right;font-size:15px;color:#7f7f7f;">4</span>
<span class="t mono" style="left:638px;top:128.31px;font-size:15px;color:#e6e6e6;"><span class="c">#parametry</span></span>
<span class="t mono" style="left:594px;top:148.31px;width:26.6px;text-align:right;font-size:15px;color:#7f7f7f;">5</span>
<span class="t mono" style="left:638px;top:148.31px;font-size:15px;color:#e6e6e6;">a <span class="o">= </span><span class="n">0.95</span></span>
<span class="t mono" style="left:594px;top:168.31px;width:26.6px;text-align:right;font-size:15px;color:#7f7f7f;">6</span>
<span class="t mono" style="left:638px;top:168.31px;font-size:15px;color:#e6e6e6;">b <span class="o">= </span><span class="n">7.91</span></span>
<span class="t mono" style="left:594px;top:188.31px;width:26.6px;text-align:right;font-size:15px;color:#7f7f7f;">7</span>
<span class="t mono" style="left:638px;top:188.31px;font-size:15px;color:#e6e6e6;">f <span class="o">= </span><span class="n">4.83</span></span>
<span class="t mono" style="left:594px;top:208.31px;width:26.6px;text-align:right;font-size:15px;color:#7f7f7f;">8</span>
<span class="t mono" style="left:638px;top:208.31px;font-size:15px;color:#e6e6e6;">g <span class="o">= </span><span class="n">4.66</span></span>
<span class="t mono" style="left:594px;top:228.31px;width:26.6px;text-align:right;font-size:15px;color:#7f7f7f;">9</span>
<span class="t mono" style="left:638px;top:228.31px;font-size:15px;color:#e6e6e6;">dt <span class="o">= </span><span class="n">0.01</span></span>
<span class="t mono" style="left:594px;top:248.31px;width:26.6px;text-align:right;font-size:15px;color:#7f7f7f;">10</span>
<span class="t mono" style="left:638px;top:248.31px;font-size:15px;color:#e6e6e6;">jmeno <span class="o">= </span><span class="s">&#x27;Lorenz83&#x27;</span></span>
<span class="t mono" style="left:594px;top:268.31px;width:26.6px;text-align:right;font-size:15px;color:#7f7f7f;">11</span>
<span class="t mono" style="left:594px;top:288.31px;width:26.6px;text-align:right;font-size:15px;color:#7f7f7f;">12</span>
<span class="t mono" style="left:638px;top:288.31px;font-size:15px;color:#e6e6e6;">iterace <span class="o">= </span><span class="n">7500</span></span>
<span class="t mono" style="left:594px;top:308.31px;width:26.6px;text-align:right;font-size:15px;color:#7f7f7f;">13</span>
<span class="t mono" style="left:594px;top:328.31px;width:26.6px;text-align:right;font-size:15px;color:#7f7f7f;">14</span>
<span class="t mono" style="left:638px;top:328.31px;font-size:15px;color:#e6e6e6;"><span class="c">#pocatecni podminky</span></span>
<span class="t mono" style="left:594px;top:348.31px;width:26.6px;text-align:right;font-size:15px;color:#7f7f7f;">15</span>
<span class="t mono" style="left:638px;top:348.31px;font-size:15px;color:#e6e6e6;">x <span class="o">= -</span><span class="n">0.2</span></span>
<span class="t mono" style="left:594px;top:368.31px;width:26.6px;text-align:right;font-size:15px;color:#7f7f7f;">16</span>
<span class="t mono" style="left:638px;top:368.31px;font-size:15px;color:#e6e6e6;">y <span class="o">= -</span><span class="n">0.82</span></span>
<span class="t mono" style="left:594px;top:388.31px;width:26.6px;text-align:right;font-size:15px;color:#7f7f7f;">17</span>
<span class="t mono" style="left:638px;top:388.31px;font-size:15px;color:#e6e6e6;">z <span class="o">= -</span><span class="n">0.71</span></span>
<span class="t mono" style="left:594px;top:408.31px;width:26.6px;text-align:right;font-size:15px;color:#7f7f7f;">18</span>
<span class="t mono" style="left:594px;top:428.31px;width:26.6px;text-align:right;font-size:15px;color:#7f7f7f;">19</span>
<span class="t mono" style="left:638px;top:428.31px;font-size:15px;color:#e6e6e6;"><span class="c">#generovani bodu</span></span>
<span class="t mono" style="left:594px;top:448.31px;width:26.6px;text-align:right;font-size:15px;color:#7f7f7f;">20</span>
<span class="t mono" style="left:638px;top:448.31px;font-size:15px;color:#e6e6e6;">points <span class="o">= []</span></span>
<span class="t mono" style="left:594px;top:468.31px;width:26.6px;text-align:right;font-size:15px;color:#7f7f7f;">21</span>
<span class="t mono" style="left:638px;top:468.31px;font-size:15px;color:#e6e6e6;"><span class="k">for </span>i <span class="k">in </span>range<span class="o">(</span>iterace<span class="o">):</span></span>
<span class="t mono" style="left:594px;top:488.31px;width:26.6px;text-align:right;font-size:15px;color:#ff0000;">22</span>
<span class="t mono" style="left:638px;top:488.31px;font-size:15px;color:#e6e6e6;">    x <span class="o">+= </span><span style="color:#ff0000;font-weight:bold">(</span>a<span class="o">*</span>f <span class="o">- </span>a<span class="o">*</span>x <span class="o">- </span>y<span class="o">**</span><span class="n">2 </span><span class="o">- </span>z<span class="o">**</span><span class="n">2</span><span style="color:#ff0000;font-weight:bold">)</span><span class="o">*</span>dt</span>
<span class="t mono" style="left:594px;top:508.31px;width:26.6px;text-align:right;font-size:15px;color:#7f7f7f;">23</span>
<span class="t mono" style="left:638px;top:508.31px;font-size:15px;color:#e6e6e6;">    y <span class="o">+= (</span>x<span class="o">*</span>y <span class="o">+ </span>g <span class="o">- </span>b<span class="o">*</span>x<span class="o">*</span>z <span class="o">- </span>y<span class="o">)*</span>dt</span>
<span class="t mono" style="left:594px;top:528.31px;width:26.6px;text-align:right;font-size:15px;color:#7f7f7f;">24</span>
<span class="t mono" style="left:638px;top:528.31px;font-size:15px;color:#e6e6e6;">    z <span class="o">+= (</span>x<span class="o">*</span>z <span class="o">+ </span>b<span class="o">*</span>x<span class="o">*</span>y <span class="o">- </span>z<span class="o">)*</span>dt</span>
<span class="t mono" style="left:594px;top:548.31px;width:26.6px;text-align:right;font-size:15px;color:#7f7f7f;">25</span>
<span class="t mono" style="left:638px;top:548.31px;font-size:15px;color:#e6e6e6;">    points<span class="o">.</span>append<span class="o">((</span>x<span class="o">, </span>y<span class="o">, </span>z<span class="o">))</span></span>
<span class="t mono" style="left:594px;top:568.31px;width:26.6px;text-align:right;font-size:15px;color:#7f7f7f;">26</span>
<span class="t mono" style="left:594px;top:588.31px;width:26.6px;text-align:right;font-size:15px;color:#7f7f7f;">27</span>
<span class="t mono" style="left:638px;top:588.31px;font-size:15px;color:#e6e6e6;"><span class="c">#vytvoreni krivky</span></span>
<span class="t mono" style="left:594px;top:608.31px;width:26.6px;text-align:right;font-size:15px;color:#7f7f7f;">28</span>
<span class="t mono" style="left:638px;top:608.31px;font-size:15px;color:#e6e6e6;">curve_data <span class="o">= </span>bpy<span class="o">.</span>data<span class="o">.</span>curves<span class="o">.</span>new<span class="o">(</span>name<span class="o">=</span>jmeno<span class="o">, </span>type<span class="o">=</span><span class="s">&#x27;CURVE&#x27;</span><span class="o">)</span></span>
<span class="t mono" style="left:594px;top:628.31px;width:26.6px;text-align:right;font-size:15px;color:#7f7f7f;">29</span>
<span class="t mono" style="left:638px;top:628.31px;font-size:15px;color:#e6e6e6;">curve_data<span class="o">.</span>dimensions <span class="o">= </span><span class="s">&#x27;3D&#x27;</span></span>
<span class="t mono" style="left:594px;top:648.31px;width:26.6px;text-align:right;font-size:15px;color:#7f7f7f;">30</span>
<span class="t mono" style="left:638px;top:648.31px;font-size:15px;color:#e6e6e6;">curve_data<span class="o">.</span>resolution_u <span class="o">= </span><span class="n">2</span></span>
<span class="t mono" style="left:594px;top:668.31px;width:26.6px;text-align:right;font-size:15px;color:#7f7f7f;">31</span>
<span class="t mono" style="left:594px;top:688.31px;width:26.6px;text-align:right;font-size:15px;color:#7f7f7f;">32</span>
<span class="t mono" style="left:638px;top:688.31px;font-size:15px;color:#e6e6e6;"><span class="c">#vytvoreni spline</span></span>
<span class="t mono" style="left:594px;top:708.31px;width:26.6px;text-align:right;font-size:15px;color:#7f7f7f;">33</span>
<span class="t mono" style="left:638px;top:708.31px;font-size:15px;color:#e6e6e6;">spline <span class="o">= </span>curve_data<span class="o">.</span>splines<span class="o">.</span>new<span class="o">(</span>type<span class="o">=</span><span class="s">&#x27;POLY&#x27;</span><span class="o">)</span></span>
<span class="t mono" style="left:594px;top:728.31px;width:26.6px;text-align:right;font-size:15px;color:#7f7f7f;">34</span>
<span class="t mono" style="left:638px;top:728.31px;font-size:15px;color:#e6e6e6;">spline<span class="o">.</span>points<span class="o">.</span>add<span class="o">(</span>len<span class="o">(</span>points<span class="o">) - </span><span class="n">1</span><span class="o">)</span></span>
<span class="t mono" style="left:594px;top:748.31px;width:26.6px;text-align:right;font-size:15px;color:#7f7f7f;">35</span>
<span class="t mono" style="left:594px;top:768.31px;width:26.6px;text-align:right;font-size:15px;color:#7f7f7f;">36</span>
<span class="t mono" style="left:638px;top:768.31px;font-size:15px;color:#e6e6e6;"><span class="c">#pridani bodu do spline</span></span>
<span class="t mono" style="left:594px;top:788.31px;width:26.6px;text-align:right;font-size:15px;color:#7f7f7f;">37</span>
<span class="t mono" style="left:638px;top:788.31px;font-size:15px;color:#e6e6e6;"><span class="k">for </span>i<span class="o">, </span>point <span class="k">in </span>enumerate<span class="o">(</span>points<span class="o">):</span></span>
<span class="t mono" style="left:594px;top:808.31px;width:26.6px;text-align:right;font-size:15px;color:#7f7f7f;">38</span>
<span class="t mono" style="left:638px;top:808.31px;font-size:15px;color:#e6e6e6;">    x<span class="o">, </span>y<span class="o">, </span>z <span class="o">= </span>point</span>
<span class="t mono" style="left:594px;top:828.31px;width:26.6px;text-align:right;font-size:15px;color:#7f7f7f;">39</span>
<span class="t mono" style="left:638px;top:828.31px;font-size:15px;color:#e6e6e6;">    spline<span class="o">.</span>points<span class="o">[</span>i<span class="o">].</span>co <span class="o">= (</span>x<span class="o">, </span>y<span class="o">, </span>z<span class="o">, </span><span class="n">1</span><span class="o">)</span></span>
<span class="t mono" style="left:594px;top:848.31px;width:26.6px;text-align:right;font-size:15px;color:#7f7f7f;">40</span>
<span class="t mono" style="left:594px;top:868.31px;width:26.6px;text-align:right;font-size:15px;color:#7f7f7f;">41</span>
<span class="t mono" style="left:638px;top:868.31px;font-size:15px;color:#e6e6e6;"><span class="c">#vytvoreni objektu</span></span>
<span class="t mono" style="left:594px;top:888.31px;width:26.6px;text-align:right;font-size:15px;color:#7f7f7f;">42</span>
<span class="t mono" style="left:638px;top:888.31px;font-size:15px;color:#e6e6e6;">curve_object <span class="o">= </span>bpy<span class="o">.</span>data<span class="o">.</span>objects<span class="o">.</span>new<span class="o">(</span>jmeno<span class="o">, </span>curve_data<span class="o">)</span></span>
<span class="t mono" style="left:594px;top:908.31px;width:26.6px;text-align:right;font-size:15px;color:#7f7f7f;">43</span>
<span class="t mono" style="left:638px;top:908.31px;font-size:15px;color:#e6e6e6;">scene <span class="o">= </span>bpy<span class="o">.</span>context<span class="o">.</span>scene</span>
<span class="t mono" style="left:594px;top:928.31px;width:26.6px;text-align:right;font-size:15px;color:#7f7f7f;">44</span>
<span class="t mono" style="left:638px;top:928.31px;font-size:15px;color:#e6e6e6;">scene<span class="o">.</span>collection<span class="o">.</span>objects<span class="o">.</span>link<span class="o">(</span>curve_object<span class="o">)</span></span>
<div style="left:942.6px;top:484.5px;width:2px;height:20.5px;background:#ff0000;"></div>
<div style="left:594px;top:943px;width:1325px;height:30px;background:#303030;border-radius:0 0 5px 5px;"></div>
<span class="t" style="left:604.50px;top:950.80px;font-size:15px;letter-spacing:0.227px;color:#e0e0e0;">Text: Internal</span>
<div class="btn" style="left:603.5px;top:37px;width:39px;height:24.5px"></div>
<span class="t" style="left:658.30px;top:41.30px;font-size:15px;letter-spacing:-0.503px;color:#e0e0e0;">View</span>
<span class="t" style="left:709.60px;top:41.30px;font-size:15px;letter-spacing:-0.081px;color:#e0e0e0;">Text</span>
<span class="t" style="left:757.00px;top:41.30px;font-size:15px;letter-spacing:-0.327px;color:#e0e0e0;">Edit</span>
<span class="t" style="left:803.30px;top:41.30px;font-size:15px;letter-spacing:-0.424px;color:#e0e0e0;">Select</span>
<span class="t" style="left:863.30px;top:41.30px;font-size:15px;letter-spacing:-0.387px;color:#e0e0e0;">Format</span>
<span class="t" style="left:930.30px;top:41.30px;font-size:15px;letter-spacing:-0.021px;color:#e0e0e0;">Templates</span>
<div style="left:1083px;top:37.3px;width:288px;height:24.2px;background:#1d1d1d;border-radius:4px;border:1px solid #3d3d3d;"></div>
<div style="left:1083px;top:37.3px;width:38.5px;height:24.2px;background:#282828;border-radius:4px 0 0 4px;border:1px solid #3d3d3d;"></div>
<div style="left:1271.5px;top:38px;width:99.5px;height:23.2px;background:#3e3e3e;border-radius:0 4px 4px 0;"></div>
<div style="left:1272px;top:38px;width:24px;height:23.2px;background:#4772b3;"></div>
<div style="left:1297px;top:38px;width:24px;height:23.2px;background:#545454;"></div>
<div style="left:1322px;top:38px;width:24px;height:23.2px;background:#545454;"></div>
<div style="left:1347px;top:38px;width:24px;height:23.2px;background:#545454;border-radius:0 4px 4px 0;"></div>
<div style="left:1379px;top:38px;width:23px;height:23.2px;background:#545454;border-radius:4px;"></div>
<span class="t" style="left:1130.50px;top:41.30px;font-size:15px;letter-spacing:0.013px;color:#e6e6e6;">Lorenz83</span>
<div style="left:1836px;top:38px;width:24px;height:23.5px;background:#4772b3;border-radius:4px 0 0 4px;"></div>
<div style="left:1861px;top:38px;width:23.5px;height:23.5px;background:#545454;"></div>
<div style="left:1885.5px;top:38px;width:24px;height:23.5px;background:#4772b3;border-radius:0 4px 4px 0;"></div>
<div style="left:1906.5px;top:84px;width:8px;height:851px;background:#232323;border-radius:4px;border:1px solid #3a3a3a;"></div>
<div style="left:1906.5px;top:84px;width:8px;height:564px;background:#595959;border-radius:4px;"></div>
<div style="left:1909px;top:85px;width:9px;height:14px;background:#303030;border-radius:4px 0 0 4px;"></div>
<svg style="left:0;top:0" width="1920" height="1005" viewBox="0 0 1920 1005"><rect x="610.4" y="41.1" width="15" height="16.6" fill="#e0e0e0"/><path d="M612.8 41.1v16.6" stroke="#282828" stroke-width="0.9" stroke-dasharray="1.3 1.4"/><path d="M615.4 43.7h8.500M615.4 46.3h8.500M615.4 48.9h8.500M615.4 51.5h5" stroke="#282828" stroke-width="1.1"/><path d="M631.00 48.60l3.70 4.40l3.70 -4.40" fill="none" stroke="#e0e0e0" stroke-width="1.2" stroke-linecap="round" stroke-linejoin="round"/><rect x="1089.3" y="41.1" width="15" height="16.6" fill="#e0e0e0"/><path d="M1091.7 41.1v16.6" stroke="#282828" stroke-width="0.9" stroke-dasharray="1.3 1.4"/><path d="M1094.3 43.7h8.500M1094.3 46.3h8.500M1094.3 48.9h8.500M1094.3 51.5h5" stroke="#282828" stroke-width="1.1"/><path d="M1109.30 48.60l3.70 4.40l3.70 -4.40" fill="none" stroke="#e0e0e0" stroke-width="1.2" stroke-linecap="round" stroke-linejoin="round"/><path d="M1283.6 40.6q4.1 2.5 8.4 2.6 .4 10.6-8.4 15-8.8-4.4-8.4-15 4.3-.1 8.4-2.600z" fill="#ffffff"/><path d="M1279.6 49.700l2.9 3 5.4-6.1" stroke="#4772b3" stroke-width="2" fill="none"/><g stroke="#d0d0d0" stroke-width="1.3" fill="none" stroke-linejoin="round"><path d="M1306.1 41h8l4 4v7.6h-12z"/><path d="M1305.8 45h-5v12.3h13v-4"/></g><path d="M1314.1 41l4 4h-4z" fill="#d0d0d0"/><path d="M1325 43.3q0-1.3 1.3-1.300h4.600l1.7 1.900h9.400q1.3 0 1.3 1.300v1.200h-18.300zM1325 47.600h18.300v8.800q0 1.3-1.3 1.300h-15.700q-1.3 0-1.3-1.300z" fill="#e4e4e4"/><path d="M1354.1 44.6l9.8 9.8M1363.9 44.6l-9.8 9.8" stroke="#e0e0e0" stroke-width="1.3" stroke-linecap="round"/><path d="M1385.2 42.500l11.5 7-11.5 7z" fill="#e6e6e6" stroke="#e6e6e6" stroke-width="1" stroke-linejoin="round"/><g fill="#ffffff" font-family="Liberation Sans, sans-serif" font-weight="bold" font-size="9.5"><text x="1838.5" y="48.3">1</text><text x="1838.3" y="59">2</text></g><path d="M1846.5 42.700h10M1846.5 45.400h10M1846.5 48.100h10M1846.5 53.200h10M1846.5 55.900h10M1846.5 58.600h10" stroke="#ffffff" stroke-width="1.2"/><rect x="1864.6" y="41.8" width="16.5" height="16" fill="none" stroke="#b0b0b0" stroke-width="1.2"/><path d="M1867.5 45.400h7M1867.5 47.900h5M1867.5 50.400h3.500M1867.5 52.900h8.5" stroke="#d8d8d8" stroke-width="1.1"/><rect x="1888.3" y="42" width="18" height="10" fill="#ffffff"/><path d="M1891 45.300h12.500M1891 48.300h12.5" stroke="#4772b3" stroke-width="1.2"/><path d="M1891 55.200h12.500M1891 58.200h12.5" stroke="#ffffff" stroke-width="1.2"/><path d="M1916.50 88.00l-4.00 4.00l4.00 4.00" fill="none" stroke="#b0b0b0" stroke-width="1.3" stroke-linecap="round" stroke-linejoin="round"/></svg>
<span class="t" style="left:43.00px;top:980.30px;font-size:15px;letter-spacing:-0.304px;color:#989898;">Select</span>
<span class="t" style="left:323.00px;top:980.30px;font-size:15px;letter-spacing:-0.177px;color:#989898;">Rotate View</span>
<span class="t" style="left:605.00px;top:980.30px;font-size:15px;letter-spacing:-0.237px;color:#989898;">Object</span>
<span class="t" style="left:1343.40px;top:980.30px;font-size:15px;letter-spacing:0.102px;color:#989898;">Attractors</span>
<span class="t" style="left:1421.50px;top:980.30px;font-size:15px;letter-spacing:-1.333px;color:#989898;">TSUCS</span>
<span class="t" style="left:1480.30px;top:980.30px;font-size:15px;letter-spacing:0.192px;color:#989898;">Verts:60,000</span>
<span class="t" style="left:1578.40px;top:980.30px;font-size:15px;letter-spacing:0.004px;color:#989898;">Faces:59,992</span>
<span class="t" style="left:1682.50px;top:980.30px;font-size:15px;letter-spacing:0.276px;color:#989898;">Tris:119,984</span>
<span class="t" style="left:1780.30px;top:980.30px;font-size:15px;letter-spacing:0.077px;color:#989898;">Objects:0/2</span>
<span class="t" style="left:1870.00px;top:980.30px;font-size:15px;letter-spacing:-0.055px;color:#989898;">4.1.1</span>
<span class="t" style="left:1413.00px;top:980.30px;font-size:15px;letter-spacing:0.000px;color:#989898;">|</span>
<span class="t" style="left:1472.00px;top:980.30px;font-size:15px;letter-spacing:0.000px;color:#989898;">|</span>
<span class="t" style="left:1570.80px;top:980.30px;font-size:15px;letter-spacing:0.000px;color:#989898;">|</span>
<span class="t" style="left:1674.60px;top:980.30px;font-size:15px;letter-spacing:0.000px;color:#989898;">|</span>
<span class="t" style="left:1772.05px;top:980.30px;font-size:15px;letter-spacing:0.000px;color:#989898;">|</span>
<span class="t" style="left:1862.05px;top:980.30px;font-size:15px;letter-spacing:0.000px;color:#989898;">|</span>
<div style="left:60px;top:1000px;width:361px;height:10px;background:#1d1d1d;border:1px solid #4a4a4a;"></div>
<div style="left:980px;top:1001px;width:61px;height:9px;background:#4a4a4a;"></div>
</div></body></html>
